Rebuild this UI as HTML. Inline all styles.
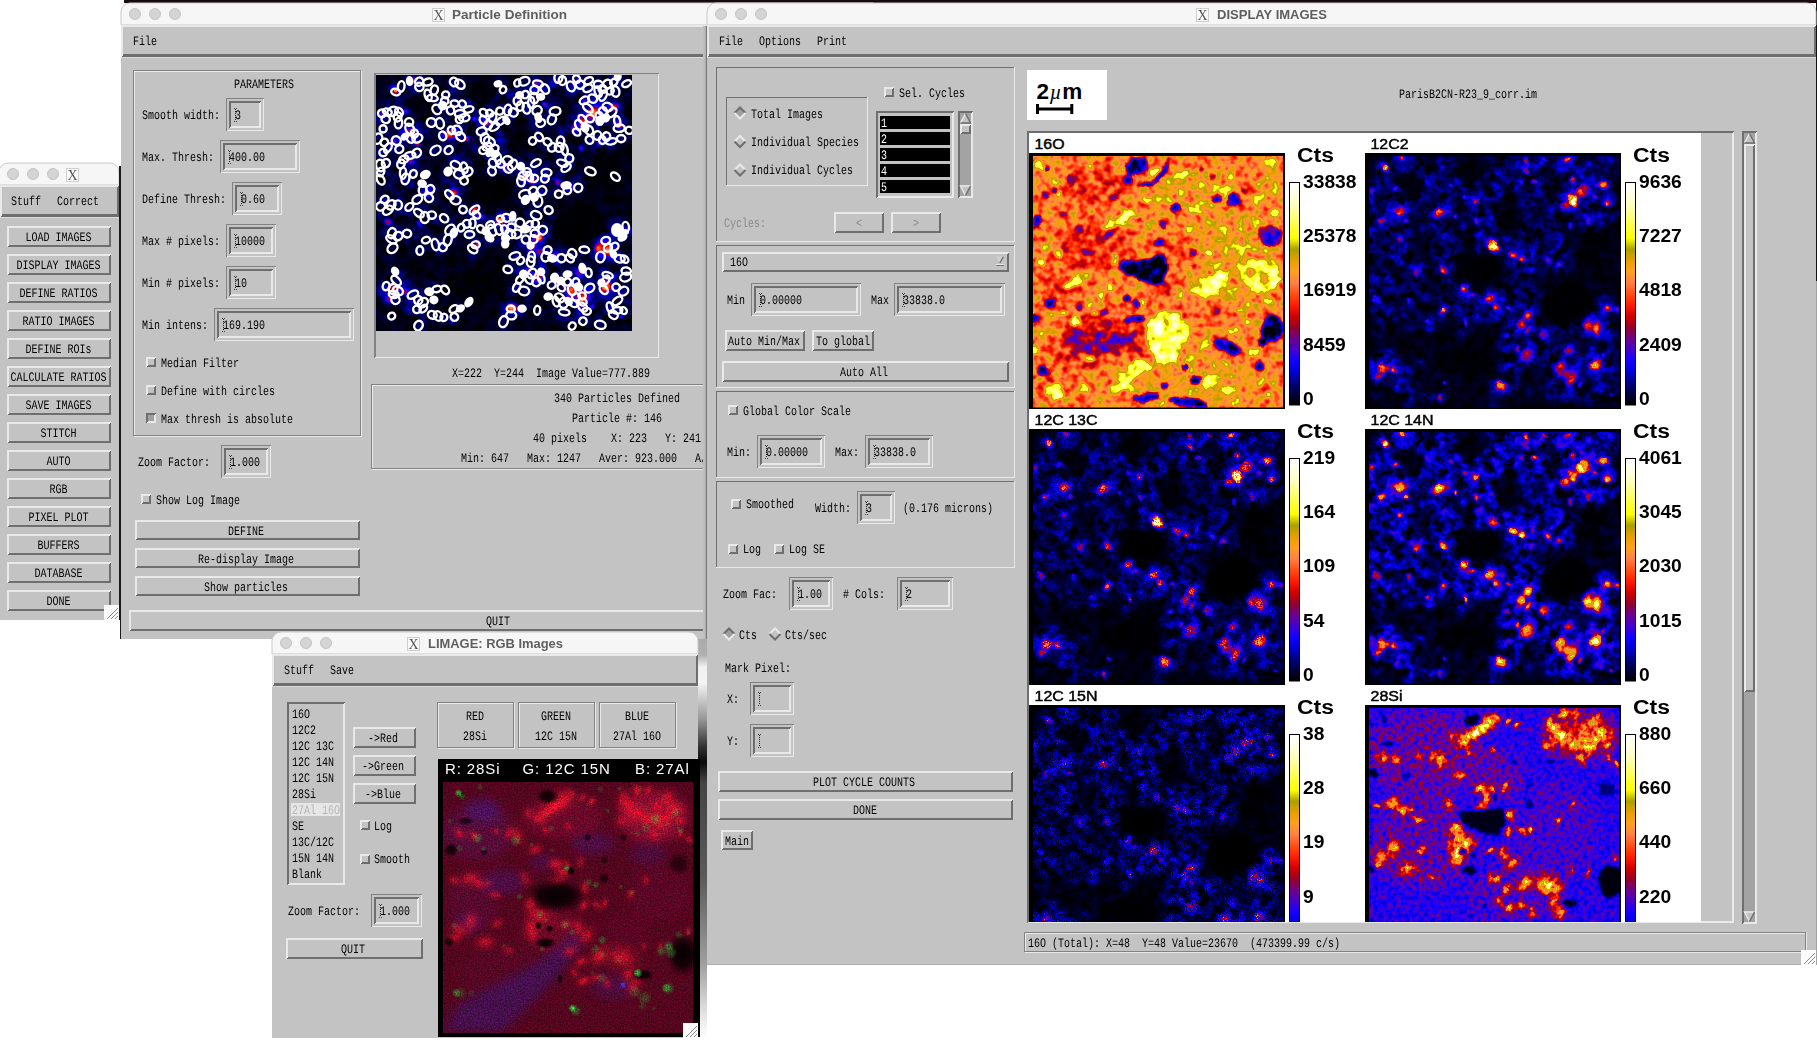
<!DOCTYPE html><html><head><meta charset="utf-8"><title>LIMAGE</title><style>html,body{margin:0;padding:0;background:#fff;overflow:hidden}
body{width:1817px;height:1048px;position:relative}
text{white-space:pre}
.m{font-family:"Liberation Mono",monospace;font-size:13px;fill:#000;text-rendering:geometricPrecision;shape-rendering:geometricPrecision}
.tt{font-family:"Liberation Sans",sans-serif;font-weight:bold;font-size:13px;fill:#5e5e5e}
.lb{font-family:"Liberation Sans",sans-serif;font-size:14.5px;fill:#000;stroke:#000;stroke-width:.45px}
.cts{font-family:"Liberation Sans",sans-serif;font-weight:bold;font-size:20px;fill:#000}
.num{font-family:"Liberation Sans",sans-serif;font-weight:bold;font-size:17.5px;fill:#000}
.hd{font-family:"Liberation Sans",sans-serif;font-size:15px;fill:#fff;letter-spacing:.9px}
</style></head><body><svg width="1817" height="1048" viewBox="0 0 1817 1048" shape-rendering="crispEdges" style="position:absolute;left:0;top:0"><defs><radialGradient id="gw"><stop offset="0" stop-color="#fff" stop-opacity="1"/><stop offset=".35" stop-color="#fff" stop-opacity=".85"/><stop offset=".6" stop-color="#fff" stop-opacity=".42"/><stop offset=".8" stop-color="#fff" stop-opacity=".14"/><stop offset="1" stop-color="#fff" stop-opacity="0"/></radialGradient><radialGradient id="gk"><stop offset="0" stop-color="#000" stop-opacity="1"/><stop offset=".5" stop-color="#000" stop-opacity=".8"/><stop offset=".8" stop-color="#000" stop-opacity=".25"/><stop offset="1" stop-color="#000" stop-opacity="0"/></radialGradient><radialGradient id="gr"><stop offset="0" stop-color="#e8142c" stop-opacity="1"/><stop offset=".5" stop-color="#e8142c" stop-opacity=".7"/><stop offset="1" stop-color="#e8142c" stop-opacity="0"/></radialGradient><radialGradient id="gg"><stop offset="0" stop-color="#30e040" stop-opacity="1"/><stop offset=".5" stop-color="#30e040" stop-opacity=".7"/><stop offset="1" stop-color="#30e040" stop-opacity="0"/></radialGradient><radialGradient id="gb"><stop offset="0" stop-color="#4030ff" stop-opacity="1"/><stop offset=".5" stop-color="#4030ff" stop-opacity=".7"/><stop offset="1" stop-color="#4030ff" stop-opacity="0"/></radialGradient><filter id="bl1" x="-10%" y="-10%" width="120%" height="120%" color-interpolation-filters="sRGB"><feGaussianBlur stdDeviation="1"/></filter><filter id="bl1_5" x="-10%" y="-10%" width="120%" height="120%" color-interpolation-filters="sRGB"><feGaussianBlur stdDeviation="1.5"/></filter><filter id="bl2" x="-10%" y="-10%" width="120%" height="120%" color-interpolation-filters="sRGB"><feGaussianBlur stdDeviation="2"/></filter><filter id="bl3" x="-10%" y="-10%" width="120%" height="120%" color-interpolation-filters="sRGB"><feGaussianBlur stdDeviation="3"/></filter><filter id="bl5" x="-10%" y="-10%" width="120%" height="120%" color-interpolation-filters="sRGB"><feGaussianBlur stdDeviation="5"/></filter><filter id="cm" filterUnits="userSpaceOnUse" x="-12" y="-12" width="280" height="280" color-interpolation-filters="sRGB"><feComponentTransfer><feFuncR type="table" tableValues="0.000 0.000 0.000 0.000 0.078 0.275 0.431 0.588 0.824 1.000 1.000 1.000 1.000 0.902 0.667 1.000 1.000 1.000 1.000 1.000 1.000"/><feFuncG type="table" tableValues="0.000 0.000 0.000 0.000 0.000 0.000 0.000 0.000 0.000 0.118 0.314 0.510 0.627 0.627 0.627 1.000 1.000 1.000 1.000 1.000 1.000"/><feFuncB type="table" tableValues="0.000 0.235 0.510 0.843 1.000 0.804 0.549 0.157 0.000 0.000 0.078 0.275 0.118 0.000 0.000 0.000 0.235 0.510 0.745 0.902 1.000"/></feComponentTransfer></filter><filter id="web" filterUnits="userSpaceOnUse" x="-12" y="-12" width="280" height="280" color-interpolation-filters="sRGB"><feGaussianBlur in="SourceGraphic" stdDeviation="2.5" result="b"/><feTurbulence type="turbulence" baseFrequency="0.06" numOctaves="3" seed="11"/><feColorMatrix type="matrix" values="-1 0 0 0 1 -1 0 0 0 1 -1 0 0 0 1 0 0 0 0 1" result="n"/><feComposite in="b" in2="n" operator="arithmetic" k1="4.0" k2="-2.4" k3="0" k4="0" result="c"/><feColorMatrix in="c" type="matrix" values="1 0 0 0 0 0 1 0 0 0 0 0 1 0 0 0 0 0 0 1"/></filter><filter id="web2" filterUnits="userSpaceOnUse" x="-12" y="-12" width="280" height="280" color-interpolation-filters="sRGB"><feGaussianBlur in="SourceGraphic" stdDeviation="2.5" result="b"/><feTurbulence type="fractalNoise" baseFrequency="0.1" numOctaves="3" seed="21"/><feColorMatrix type="matrix" values="1 0 0 0 0 1 0 0 0 0 1 0 0 0 0 0 0 0 0 1" result="n"/><feComposite in="b" in2="n" operator="arithmetic" k1="4.2" k2="-1.15" k3="0" k4="0" result="c"/><feColorMatrix in="c" type="matrix" values="1 0 0 0 0 0 1 0 0 0 0 0 1 0 0 0 0 0 0 1"/></filter><filter id="webf" filterUnits="userSpaceOnUse" x="-12" y="-12" width="280" height="280" color-interpolation-filters="sRGB"><feGaussianBlur in="SourceGraphic" stdDeviation="2.5" result="b"/><feTurbulence type="fractalNoise" baseFrequency="0.4" numOctaves="2" seed="5"/><feColorMatrix type="matrix" values="1 0 0 0 0 1 0 0 0 0 1 0 0 0 0 0 0 0 0 1" result="n"/><feComposite in="b" in2="n" operator="arithmetic" k1="3.6" k2="-0.75" k3="0" k4="0" result="c"/><feColorMatrix in="c" type="matrix" values="1 0 0 0 0 0 1 0 0 0 0 0 1 0 0 0 0 0 0 1"/></filter><filter id="cmn" filterUnits="userSpaceOnUse" x="-12" y="-12" width="280" height="280" color-interpolation-filters="sRGB"><feTurbulence type="fractalNoise" baseFrequency="0.08" numOctaves="2" seed="12" result="dn"/><feDisplacementMap in="SourceGraphic" in2="dn" scale="5" xChannelSelector="R" yChannelSelector="G" result="ds"/><feTurbulence type="fractalNoise" baseFrequency="0.2" numOctaves="2" seed="4"/><feColorMatrix type="matrix" values="1 0 0 0 0 1 0 0 0 0 1 0 0 0 0 0 0 0 0 1" result="n"/><feComposite in="ds" in2="n" operator="arithmetic" k1="1.0" k2="0.5" k3="0" k4="0" result="c"/><feColorMatrix in="c" type="matrix" values="1 0 0 0 0 0 1 0 0 0 0 0 1 0 0 0 0 0 0 1"/><feComponentTransfer><feFuncR type="table" tableValues="0.000 0.000 0.000 0.000 0.078 0.275 0.431 0.588 0.824 1.000 1.000 1.000 1.000 0.902 0.667 1.000 1.000 1.000 1.000 1.000 1.000"/><feFuncG type="table" tableValues="0.000 0.000 0.000 0.000 0.000 0.000 0.000 0.000 0.000 0.118 0.314 0.510 0.627 0.627 0.627 1.000 1.000 1.000 1.000 1.000 1.000"/><feFuncB type="table" tableValues="0.000 0.235 0.510 0.843 1.000 0.804 0.549 0.157 0.000 0.000 0.078 0.275 0.118 0.000 0.000 0.000 0.235 0.510 0.745 0.902 1.000"/></feComponentTransfer></filter><filter id="cmf" filterUnits="userSpaceOnUse" x="-12" y="-12" width="280" height="280" color-interpolation-filters="sRGB"><feTurbulence type="fractalNoise" baseFrequency="0.08" numOctaves="2" seed="12" result="dn"/><feDisplacementMap in="SourceGraphic" in2="dn" scale="5" xChannelSelector="R" yChannelSelector="G" result="ds"/><feTurbulence type="fractalNoise" baseFrequency="0.6" numOctaves="2" seed="6"/><feColorMatrix type="matrix" values="1 0 0 0 0 1 0 0 0 0 1 0 0 0 0 0 0 0 0 1" result="n"/><feComposite in="ds" in2="n" operator="arithmetic" k1="1.6" k2="0.2" k3="0" k4="0" result="c"/><feColorMatrix in="c" type="matrix" values="1 0 0 0 0 0 1 0 0 0 0 0 1 0 0 0 0 0 0 1"/><feComponentTransfer><feFuncR type="table" tableValues="0.000 0.000 0.000 0.000 0.078 0.275 0.431 0.588 0.824 1.000 1.000 1.000 1.000 0.902 0.667 1.000 1.000 1.000 1.000 1.000 1.000"/><feFuncG type="table" tableValues="0.000 0.000 0.000 0.000 0.000 0.000 0.000 0.000 0.000 0.118 0.314 0.510 0.627 0.627 0.627 1.000 1.000 1.000 1.000 1.000 1.000"/><feFuncB type="table" tableValues="0.000 0.235 0.510 0.843 1.000 0.804 0.549 0.157 0.000 0.000 0.078 0.275 0.118 0.000 0.000 0.000 0.235 0.510 0.745 0.902 1.000"/></feComponentTransfer></filter><filter id="cmsp" filterUnits="userSpaceOnUse" x="-12" y="-12" width="280" height="280" color-interpolation-filters="sRGB"><feTurbulence type="fractalNoise" baseFrequency="0.85" numOctaves="2" seed="3"/><feColorMatrix type="matrix" values="1 0 0 0 0 1 0 0 0 0 1 0 0 0 0 0 0 0 0 1" result="n"/><feComposite in="SourceGraphic" in2="n" operator="arithmetic" k1="4.0" k2="-0.9" k3="0" k4="0" result="c"/><feColorMatrix in="c" type="matrix" values="1 0 0 0 0 0 1 0 0 0 0 0 1 0 0 0 0 0 0 1"/><feComponentTransfer><feFuncR type="table" tableValues="0.000 0.000 0.000 0.000 0.078 0.275 0.431 0.588 0.824 1.000 1.000 1.000 1.000 0.902 0.667 1.000 1.000 1.000 1.000 1.000 1.000"/><feFuncG type="table" tableValues="0.000 0.000 0.000 0.000 0.000 0.000 0.000 0.000 0.000 0.118 0.314 0.510 0.627 0.627 0.627 1.000 1.000 1.000 1.000 1.000 1.000"/><feFuncB type="table" tableValues="0.000 0.235 0.510 0.843 1.000 0.804 0.549 0.157 0.000 0.000 0.078 0.275 0.118 0.000 0.000 0.000 0.235 0.510 0.745 0.902 1.000"/></feComponentTransfer></filter><filter id="f16o" filterUnits="userSpaceOnUse" x="-12" y="-12" width="280" height="280" color-interpolation-filters="sRGB"><feTurbulence type="fractalNoise" baseFrequency="0.05" numOctaves="2" seed="5" result="dn"/><feDisplacementMap in="SourceGraphic" in2="dn" scale="8" xChannelSelector="R" yChannelSelector="G" result="ds"/><feTurbulence type="fractalNoise" baseFrequency="0.12" numOctaves="2" seed="7"/><feColorMatrix type="matrix" values="1 0 0 0 0 1 0 0 0 0 1 0 0 0 0 0 0 0 0 1" result="n"/><feComposite in="ds" in2="n" operator="arithmetic" k1="0" k2="1" k3="0.5" k4="-0.25" result="c"/><feColorMatrix in="c" type="matrix" values="1 0 0 0 0 0 1 0 0 0 0 0 1 0 0 0 0 0 0 1"/><feComponentTransfer><feFuncR type="table" tableValues="0.000 0.000 0.000 0.000 0.078 0.275 0.431 0.588 0.824 1.000 1.000 1.000 1.000 0.902 0.667 1.000 1.000 1.000 1.000 1.000 1.000"/><feFuncG type="table" tableValues="0.000 0.000 0.000 0.000 0.000 0.000 0.000 0.000 0.000 0.118 0.314 0.510 0.627 0.627 0.627 1.000 1.000 1.000 1.000 1.000 1.000"/><feFuncB type="table" tableValues="0.000 0.235 0.510 0.843 1.000 0.804 0.549 0.157 0.000 0.000 0.078 0.275 0.118 0.000 0.000 0.000 0.235 0.510 0.745 0.902 1.000"/></feComponentTransfer></filter><filter id="fsi" filterUnits="userSpaceOnUse" x="-12" y="-12" width="280" height="280" color-interpolation-filters="sRGB"><feTurbulence type="fractalNoise" baseFrequency="0.07" numOctaves="2" seed="8" result="dn"/><feDisplacementMap in="SourceGraphic" in2="dn" scale="6" xChannelSelector="R" yChannelSelector="G" result="ds"/><feTurbulence type="fractalNoise" baseFrequency="0.22" numOctaves="2" seed="9"/><feColorMatrix type="matrix" values="1 0 0 0 0 1 0 0 0 0 1 0 0 0 0 0 0 0 0 1" result="n"/><feComposite in="ds" in2="n" operator="arithmetic" k1="1.3" k2="0.36" k3="0" k4="0" result="c"/><feColorMatrix in="c" type="matrix" values="1 0 0 0 0 0 1 0 0 0 0 0 1 0 0 0 0 0 0 1"/><feComponentTransfer><feFuncR type="table" tableValues="0.000 0.000 0.000 0.000 0.078 0.275 0.431 0.588 0.824 1.000 1.000 1.000 1.000 0.902 0.667 1.000 1.000 1.000 1.000 1.000 1.000"/><feFuncG type="table" tableValues="0.000 0.000 0.000 0.000 0.000 0.000 0.000 0.000 0.000 0.118 0.314 0.510 0.627 0.627 0.627 1.000 1.000 1.000 1.000 1.000 1.000"/><feFuncB type="table" tableValues="0.000 0.235 0.510 0.843 1.000 0.804 0.549 0.157 0.000 0.000 0.078 0.275 0.118 0.000 0.000 0.000 0.235 0.510 0.745 0.902 1.000"/></feComponentTransfer></filter><filter id="rgbn" filterUnits="userSpaceOnUse" x="-12" y="-12" width="275" height="275" color-interpolation-filters="sRGB"><feTurbulence type="fractalNoise" baseFrequency="0.7" numOctaves="2" seed="8"/><feColorMatrix type="matrix" values="1 0 0 0 0 1 0 0 0 0 1 0 0 0 0 0 0 0 0 1" result="n"/><feComposite in="SourceGraphic" in2="n" operator="arithmetic" k1="1.3" k2="0.35" k3="0" k4="0" result="c"/><feColorMatrix in="c" type="matrix" values="1 0 0 0 0 0 1 0 0 0 0 0 1 0 0 0 0 0 0 1"/></filter></defs><defs><filter id="noop" filterUnits="userSpaceOnUse" x="0" y="0" width="1817" height="1048"><feOffset dx="0" dy="0"/></filter></defs><defs><linearGradient id="cbar" x1="0" y1="1" x2="0" y2="0"><stop offset="0.00" stop-color="rgb(0, 0, 0)"/><stop offset="0.05" stop-color="rgb(0, 0, 60)"/><stop offset="0.10" stop-color="rgb(0, 0, 130)"/><stop offset="0.15" stop-color="rgb(0, 0, 215)"/><stop offset="0.20" stop-color="rgb(20, 0, 255)"/><stop offset="0.25" stop-color="rgb(70, 0, 205)"/><stop offset="0.30" stop-color="rgb(110, 0, 140)"/><stop offset="0.35" stop-color="rgb(150, 0, 40)"/><stop offset="0.40" stop-color="rgb(210, 0, 0)"/><stop offset="0.45" stop-color="rgb(255, 30, 0)"/><stop offset="0.50" stop-color="rgb(255, 80, 20)"/><stop offset="0.55" stop-color="rgb(255, 130, 70)"/><stop offset="0.60" stop-color="rgb(255, 160, 30)"/><stop offset="0.65" stop-color="rgb(230, 160, 0)"/><stop offset="0.70" stop-color="rgb(170, 160, 0)"/><stop offset="0.75" stop-color="rgb(255, 255, 0)"/><stop offset="0.80" stop-color="rgb(255, 255, 60)"/><stop offset="0.85" stop-color="rgb(255, 255, 130)"/><stop offset="0.90" stop-color="rgb(255, 255, 190)"/><stop offset="0.95" stop-color="rgb(255, 255, 230)"/><stop offset="1.00" stop-color="rgb(255, 255, 255)"/></linearGradient></defs><rect x="0" y="0" width="1817" height="1048" fill="#fff"/><rect x="124" y="0" width="1700" height="3" fill="#1a0a10"/><g shape-rendering="geometricPrecision"><path d="M121 25V12a9 9 0 0 1 9 -9H872a9 9 0 0 1 9 9V25Z" fill="#f6f6f6" stroke="#c9c9c9"/></g><rect x="121" y="25" width="760" height="614" fill="#c3c3c3"/><rect x="121" y="24" width="760" height="1" fill="#dedede"/><g shape-rendering="geometricPrecision"><circle cx="135" cy="14" r="5.5" fill="#d4d4d4" stroke="#c4c4c4"/><circle cx="155" cy="14" r="5.5" fill="#d4d4d4" stroke="#c4c4c4"/><circle cx="175" cy="14" r="5.5" fill="#d4d4d4" stroke="#c4c4c4"/></g><g shape-rendering="geometricPrecision" filter="url(#noop)"><rect x="432.5" y="8.5" width="12" height="13" fill="#fafafa" stroke="#cfcfcf"/><text x="438.5" y="20" text-anchor="middle" font-family="Liberation Serif,serif" font-size="14" fill="#555">X</text></g><g filter="url(#noop)"><text class="tt" x="452" y="18.5" textLength="115" lengthAdjust="spacingAndGlyphs">Particle Definition</text></g><rect x="120" y="166" width="1" height="473" fill="#1a1a1a"/><rect x="121" y="25" width="760" height="32" fill="#c3c3c3"/><path d="M121 25H881L879 27H123V55L121 57Z" fill="#e9e9e9"/><path d="M881 57H121L123 55H879V27L881 25Z" fill="#6e6e6e"/><rect x="123" y="54" width="756" height="1" fill="#6e6e6e"/><rect x="121" y="57" width="760" height="1" fill="#dadada"/><rect x="134.5" y="71.5" width="227" height="365" fill="none" stroke="#e9e9e9"/><rect x="133.5" y="70.5" width="227" height="365" fill="none" stroke="#828282"/><rect x="226" y="98" width="38" height="33" fill="#c3c3c3"/><path d="M226 98H264L263 99H227V130L226 131Z" fill="#828282"/><path d="M264 131H226L227 130H263V99L264 98Z" fill="#e9e9e9"/><path d="M229 101H261L259 103H231V126L229 128Z" fill="#6e6e6e"/><path d="M261 128H229L231 126H259V103L261 101Z" fill="#e9e9e9"/><path d="M235.5 109v12" stroke="#222" stroke-dasharray="1 1" fill="none"/><path d="M234 108.5h3M234 121.5h3" stroke="#444" stroke-dasharray="1 1" fill="none"/><rect x="220" y="140" width="80" height="33" fill="#c3c3c3"/><path d="M220 140H300L299 141H221V172L220 173Z" fill="#828282"/><path d="M300 173H220L221 172H299V141L300 140Z" fill="#e9e9e9"/><path d="M223 143H297L295 145H225V168L223 170Z" fill="#6e6e6e"/><path d="M297 170H223L225 168H295V145L297 143Z" fill="#e9e9e9"/><path d="M229.5 151v12" stroke="#222" stroke-dasharray="1 1" fill="none"/><path d="M228 150.5h3M228 163.5h3" stroke="#444" stroke-dasharray="1 1" fill="none"/><rect x="232" y="182" width="50" height="33" fill="#c3c3c3"/><path d="M232 182H282L281 183H233V214L232 215Z" fill="#828282"/><path d="M282 215H232L233 214H281V183L282 182Z" fill="#e9e9e9"/><path d="M235 185H279L277 187H237V210L235 212Z" fill="#6e6e6e"/><path d="M279 212H235L237 210H277V187L279 185Z" fill="#e9e9e9"/><path d="M241.5 193v12" stroke="#222" stroke-dasharray="1 1" fill="none"/><path d="M240 192.5h3M240 205.5h3" stroke="#444" stroke-dasharray="1 1" fill="none"/><rect x="226" y="224" width="50" height="33" fill="#c3c3c3"/><path d="M226 224H276L275 225H227V256L226 257Z" fill="#828282"/><path d="M276 257H226L227 256H275V225L276 224Z" fill="#e9e9e9"/><path d="M229 227H273L271 229H231V252L229 254Z" fill="#6e6e6e"/><path d="M273 254H229L231 252H271V229L273 227Z" fill="#e9e9e9"/><path d="M235.5 235v12" stroke="#222" stroke-dasharray="1 1" fill="none"/><path d="M234 234.5h3M234 247.5h3" stroke="#444" stroke-dasharray="1 1" fill="none"/><rect x="226" y="266" width="50" height="33" fill="#c3c3c3"/><path d="M226 266H276L275 267H227V298L226 299Z" fill="#828282"/><path d="M276 299H226L227 298H275V267L276 266Z" fill="#e9e9e9"/><path d="M229 269H273L271 271H231V294L229 296Z" fill="#6e6e6e"/><path d="M273 296H229L231 294H271V271L273 269Z" fill="#e9e9e9"/><path d="M235.5 277v12" stroke="#222" stroke-dasharray="1 1" fill="none"/><path d="M234 276.5h3M234 289.5h3" stroke="#444" stroke-dasharray="1 1" fill="none"/><rect x="214" y="308" width="140" height="33" fill="#c3c3c3"/><path d="M214 308H354L353 309H215V340L214 341Z" fill="#828282"/><path d="M354 341H214L215 340H353V309L354 308Z" fill="#e9e9e9"/><path d="M217 311H351L349 313H219V336L217 338Z" fill="#6e6e6e"/><path d="M351 338H217L219 336H349V313L351 311Z" fill="#e9e9e9"/><path d="M223.5 319v12" stroke="#222" stroke-dasharray="1 1" fill="none"/><path d="M222 318.5h3M222 331.5h3" stroke="#444" stroke-dasharray="1 1" fill="none"/><rect x="146" y="357" width="10" height="10" fill="#c3c3c3"/><path d="M146 357H156L154 359H148V365L146 367Z" fill="#e9e9e9"/><path d="M156 367H146L148 365H154V359L156 357Z" fill="#6e6e6e"/><rect x="146" y="385" width="10" height="10" fill="#c3c3c3"/><path d="M146 385H156L154 387H148V393L146 395Z" fill="#e9e9e9"/><path d="M156 395H146L148 393H154V387L156 385Z" fill="#6e6e6e"/><rect x="146" y="413" width="10" height="10" fill="#a0a0a0"/><path d="M146 413H156L154 415H148V421L146 423Z" fill="#6e6e6e"/><path d="M156 423H146L148 421H154V415L156 413Z" fill="#e9e9e9"/><rect x="221" y="445" width="50" height="33" fill="#c3c3c3"/><path d="M221 445H271L270 446H222V477L221 478Z" fill="#828282"/><path d="M271 478H221L222 477H270V446L271 445Z" fill="#e9e9e9"/><path d="M224 448H268L266 450H226V473L224 475Z" fill="#6e6e6e"/><path d="M268 475H224L226 473H266V450L268 448Z" fill="#e9e9e9"/><path d="M230.5 456v12" stroke="#222" stroke-dasharray="1 1" fill="none"/><path d="M229 455.5h3M229 468.5h3" stroke="#444" stroke-dasharray="1 1" fill="none"/><rect x="141" y="494" width="10" height="10" fill="#c3c3c3"/><path d="M141 494H151L149 496H143V502L141 504Z" fill="#e9e9e9"/><path d="M151 504H141L143 502H149V496L151 494Z" fill="#6e6e6e"/><rect x="135" y="520" width="225" height="20" fill="#c3c3c3"/><path d="M135 520H360L358 522H137V538L135 540Z" fill="#e9e9e9"/><path d="M360 540H135L137 538H358V522L360 520Z" fill="#6e6e6e"/><rect x="135" y="548" width="225" height="20" fill="#c3c3c3"/><path d="M135 548H360L358 550H137V566L135 568Z" fill="#e9e9e9"/><path d="M360 568H135L137 566H358V550L360 548Z" fill="#6e6e6e"/><rect x="135" y="576" width="225" height="20" fill="#c3c3c3"/><path d="M135 576H360L358 578H137V594L135 596Z" fill="#e9e9e9"/><path d="M360 596H135L137 594H358V578L360 576Z" fill="#6e6e6e"/><rect x="374" y="73" width="285" height="285" fill="#c3c3c3"/><path d="M374 73H659L658 74H375V357L374 358Z" fill="#828282"/><path d="M659 358H374L375 357H658V74L659 73Z" fill="#e9e9e9"/><rect x="375" y="74" width="1" height="283" fill="#828282"/><g shape-rendering="geometricPrecision"><svg x="376" y="75" width="256" height="256" viewBox="0 0 256 256"><g filter="url(#cm)"><rect x="-12" y="-12" width="280" height="280" fill="#000"/><g filter="url(#web2)"><rect x="-12" y="-12" width="280" height="280" fill="#050505"/><ellipse cx="19.5" cy="14.7" rx="11.9" ry="11.9" fill="#111111" opacity="0.73"/><ellipse cx="41.5" cy="9.8" rx="18.5" ry="11.9" fill="#111111" opacity="0.91"/><ellipse cx="55.0" cy="19.5" rx="8.6" ry="11.9" fill="#111111" opacity="0.82"/><ellipse cx="80.6" cy="8.5" rx="11.9" ry="6.9" fill="#111111" opacity="0.73"/><ellipse cx="70.8" cy="29.3" rx="18.5" ry="15.2" fill="#111111" opacity="1.00"/><ellipse cx="83.0" cy="36.6" rx="15.2" ry="18.5" fill="#111111" opacity="1.00"/><ellipse cx="122.1" cy="15.9" rx="10.2" ry="11.9" fill="#111111" opacity="0.73"/><ellipse cx="146.6" cy="7.3" rx="11.9" ry="8.6" fill="#111111" opacity="0.73"/><ellipse cx="141.7" cy="26.9" rx="21.8" ry="18.5" fill="#111111" opacity="1.00"/><ellipse cx="161.2" cy="14.7" rx="15.2" ry="15.2" fill="#111111" opacity="1.00"/><ellipse cx="168.5" cy="39.1" rx="18.5" ry="15.2" fill="#111111" opacity="1.00"/><ellipse cx="190.5" cy="7.3" rx="21.8" ry="10.2" fill="#111111" opacity="1.00"/><ellipse cx="214.9" cy="14.7" rx="28.4" ry="18.5" fill="#111111" opacity="1.00"/><ellipse cx="241.8" cy="9.8" rx="15.2" ry="13.5" fill="#111111" opacity="0.91"/><ellipse cx="219.8" cy="36.6" rx="25.1" ry="15.2" fill="#111111" opacity="1.00"/><ellipse cx="207.6" cy="51.3" rx="18.5" ry="11.9" fill="#111111" opacity="1.00"/><ellipse cx="244.3" cy="48.9" rx="8.6" ry="10.2" fill="#111111" opacity="0.73"/><ellipse cx="224.7" cy="63.5" rx="18.5" ry="15.2" fill="#111111" opacity="1.00"/><ellipse cx="240.6" cy="64.7" rx="8.6" ry="8.6" fill="#111111" opacity="0.64"/><ellipse cx="251.6" cy="57.4" rx="6.0" ry="6.0" fill="#111111" opacity="0.64"/><ellipse cx="12.2" cy="39.1" rx="15.2" ry="15.2" fill="#111111" opacity="0.91"/><ellipse cx="24.4" cy="44.0" rx="15.2" ry="11.9" fill="#111111" opacity="0.91"/><ellipse cx="36.6" cy="58.6" rx="15.2" ry="15.2" fill="#111111" opacity="1.00"/><ellipse cx="58.6" cy="52.5" rx="11.9" ry="10.2" fill="#111111" opacity="0.73"/><ellipse cx="75.7" cy="59.8" rx="15.2" ry="13.5" fill="#111111" opacity="0.91"/><ellipse cx="66.0" cy="76.9" rx="13.5" ry="8.6" fill="#111111" opacity="0.73"/><ellipse cx="109.9" cy="48.9" rx="15.2" ry="18.5" fill="#111111" opacity="1.00"/><ellipse cx="127.0" cy="39.1" rx="15.2" ry="11.9" fill="#111111" opacity="0.91"/><ellipse cx="114.8" cy="70.8" rx="18.5" ry="15.2" fill="#111111" opacity="1.00"/><ellipse cx="119.7" cy="85.5" rx="11.9" ry="10.2" fill="#111111" opacity="0.82"/><ellipse cx="7.3" cy="68.4" rx="10.2" ry="21.8" fill="#111111" opacity="1.00"/><ellipse cx="19.5" cy="70.8" rx="10.2" ry="11.9" fill="#111111" opacity="0.73"/><ellipse cx="7.3" cy="97.7" rx="8.6" ry="21.8" fill="#111111" opacity="0.91"/><ellipse cx="31.8" cy="92.8" rx="15.2" ry="21.8" fill="#111111" opacity="1.00"/><ellipse cx="45.2" cy="102.6" rx="10.2" ry="10.2" fill="#111111" opacity="0.73"/><ellipse cx="42.7" cy="78.2" rx="6.9" ry="6.9" fill="#111111" opacity="0.64"/><ellipse cx="81.8" cy="96.5" rx="15.2" ry="18.5" fill="#111111" opacity="1.00"/><ellipse cx="55.0" cy="117.2" rx="15.2" ry="10.2" fill="#111111" opacity="0.82"/><ellipse cx="75.7" cy="120.9" rx="10.2" ry="11.9" fill="#111111" opacity="0.73"/><ellipse cx="41.5" cy="122.1" rx="7.9" ry="7.9" fill="#111111" opacity="0.64"/><ellipse cx="161.2" cy="62.3" rx="10.2" ry="10.2" fill="#111111" opacity="0.73"/><ellipse cx="180.8" cy="66.0" rx="15.2" ry="15.2" fill="#111111" opacity="0.91"/><ellipse cx="188.1" cy="85.5" rx="10.2" ry="18.5" fill="#111111" opacity="0.91"/><ellipse cx="131.9" cy="90.4" rx="15.2" ry="10.2" fill="#111111" opacity="0.82"/><ellipse cx="156.3" cy="97.7" rx="25.1" ry="18.5" fill="#111111" opacity="1.00"/><ellipse cx="158.8" cy="119.7" rx="18.5" ry="13.5" fill="#111111" opacity="1.00"/><ellipse cx="210.1" cy="96.5" rx="8.6" ry="8.6" fill="#111111" opacity="0.64"/><ellipse cx="195.4" cy="109.9" rx="15.2" ry="10.2" fill="#111111" opacity="0.82"/><ellipse cx="183.2" cy="117.2" rx="7.9" ry="7.9" fill="#111111" opacity="0.64"/><ellipse cx="241.8" cy="102.6" rx="6.9" ry="6.9" fill="#111111" opacity="0.64"/><ellipse cx="117.2" cy="98.9" rx="6.9" ry="6.9" fill="#111111" opacity="0.64"/><ellipse cx="14.7" cy="131.9" rx="16.8" ry="15.2" fill="#111111" opacity="1.00"/><ellipse cx="33.0" cy="135.6" rx="7.9" ry="7.9" fill="#111111" opacity="0.64"/><ellipse cx="47.6" cy="139.2" rx="13.5" ry="15.2" fill="#111111" opacity="0.82"/><ellipse cx="66.0" cy="145.3" rx="7.9" ry="7.9" fill="#111111" opacity="0.64"/><ellipse cx="24.4" cy="160.0" rx="21.8" ry="10.2" fill="#111111" opacity="0.91"/><ellipse cx="48.9" cy="163.7" rx="7.9" ry="7.9" fill="#111111" opacity="0.64"/><ellipse cx="13.4" cy="174.6" rx="10.2" ry="6.9" fill="#111111" opacity="0.64"/><ellipse cx="44.0" cy="175.9" rx="6.0" ry="6.0" fill="#111111" opacity="0.64"/><ellipse cx="94.0" cy="136.8" rx="15.2" ry="11.9" fill="#111111" opacity="0.82"/><ellipse cx="90.4" cy="151.4" rx="13.5" ry="15.2" fill="#111111" opacity="0.91"/><ellipse cx="75.7" cy="158.8" rx="10.2" ry="13.5" fill="#111111" opacity="0.82"/><ellipse cx="64.7" cy="171.0" rx="10.2" ry="10.2" fill="#111111" opacity="0.73"/><ellipse cx="109.9" cy="156.3" rx="15.2" ry="18.5" fill="#111111" opacity="1.00"/><ellipse cx="97.7" cy="174.6" rx="8.6" ry="10.2" fill="#111111" opacity="0.73"/><ellipse cx="127.0" cy="149.0" rx="15.2" ry="15.2" fill="#111111" opacity="1.00"/><ellipse cx="141.7" cy="151.4" rx="15.2" ry="18.5" fill="#111111" opacity="1.00"/><ellipse cx="131.9" cy="166.1" rx="8.6" ry="8.6" fill="#111111" opacity="0.73"/><ellipse cx="158.8" cy="161.2" rx="15.2" ry="21.8" fill="#111111" opacity="1.00"/><ellipse cx="161.2" cy="140.4" rx="6.9" ry="6.9" fill="#111111" opacity="0.64"/><ellipse cx="174.6" cy="138.0" rx="7.9" ry="7.9" fill="#111111" opacity="0.64"/><ellipse cx="175.9" cy="180.8" rx="18.5" ry="10.2" fill="#111111" opacity="0.91"/><ellipse cx="195.4" cy="180.8" rx="10.2" ry="6.9" fill="#111111" opacity="0.73"/><ellipse cx="206.4" cy="174.6" rx="6.9" ry="6.9" fill="#111111" opacity="0.64"/><ellipse cx="141.7" cy="183.2" rx="6.9" ry="11.9" fill="#111111" opacity="0.73"/><ellipse cx="156.3" cy="183.2" rx="8.6" ry="8.6" fill="#111111" opacity="0.73"/><ellipse cx="133.1" cy="195.4" rx="6.9" ry="6.9" fill="#111111" opacity="0.64"/><ellipse cx="241.8" cy="156.3" rx="15.2" ry="13.5" fill="#111111" opacity="0.82"/><ellipse cx="228.4" cy="174.6" rx="16.8" ry="15.2" fill="#111111" opacity="1.00"/><ellipse cx="246.7" cy="180.8" rx="10.2" ry="8.6" fill="#111111" opacity="0.73"/><ellipse cx="249.1" cy="195.4" rx="6.9" ry="11.9" fill="#111111" opacity="0.73"/><ellipse cx="158.8" cy="200.3" rx="18.5" ry="13.5" fill="#111111" opacity="1.00"/><ellipse cx="185.6" cy="202.7" rx="15.2" ry="13.5" fill="#111111" opacity="0.91"/><ellipse cx="207.6" cy="197.9" rx="11.9" ry="10.2" fill="#111111" opacity="0.73"/><ellipse cx="146.6" cy="210.1" rx="11.9" ry="18.5" fill="#111111" opacity="0.91"/><ellipse cx="180.8" cy="217.4" rx="15.2" ry="15.2" fill="#111111" opacity="1.00"/><ellipse cx="202.7" cy="214.9" rx="18.5" ry="15.2" fill="#111111" opacity="1.00"/><ellipse cx="197.9" cy="232.0" rx="21.8" ry="15.2" fill="#111111" opacity="1.00"/><ellipse cx="232.0" cy="210.1" rx="11.9" ry="18.5" fill="#111111" opacity="0.91"/><ellipse cx="244.3" cy="219.8" rx="13.5" ry="15.2" fill="#111111" opacity="0.82"/><ellipse cx="236.9" cy="234.5" rx="13.5" ry="11.9" fill="#111111" opacity="0.82"/><ellipse cx="249.1" cy="239.4" rx="6.9" ry="10.2" fill="#111111" opacity="0.64"/><ellipse cx="224.7" cy="246.7" rx="6.9" ry="6.9" fill="#111111" opacity="0.64"/><ellipse cx="202.7" cy="249.1" rx="13.5" ry="6.9" fill="#111111" opacity="0.73"/><ellipse cx="136.8" cy="234.5" rx="11.9" ry="10.2" fill="#111111" opacity="0.73"/><ellipse cx="147.8" cy="234.5" rx="6.9" ry="6.9" fill="#111111" opacity="0.64"/><ellipse cx="163.7" cy="235.7" rx="10.2" ry="6.0" fill="#111111" opacity="0.64"/><ellipse cx="129.5" cy="249.1" rx="6.9" ry="6.9" fill="#111111" opacity="0.64"/><ellipse cx="17.1" cy="196.6" rx="6.0" ry="6.0" fill="#111111" opacity="0.64"/><ellipse cx="19.5" cy="214.9" rx="16.8" ry="18.5" fill="#111111" opacity="1.00"/><ellipse cx="14.7" cy="238.2" rx="6.0" ry="8.6" fill="#111111" opacity="0.64"/><ellipse cx="41.5" cy="228.4" rx="15.2" ry="16.8" fill="#111111" opacity="1.00"/><ellipse cx="61.1" cy="217.4" rx="13.5" ry="15.2" fill="#111111" opacity="0.91"/><ellipse cx="63.5" cy="238.2" rx="13.5" ry="11.9" fill="#111111" opacity="0.82"/><ellipse cx="80.6" cy="230.8" rx="8.6" ry="10.2" fill="#111111" opacity="0.73"/><ellipse cx="94.0" cy="225.9" rx="6.9" ry="6.9" fill="#111111" opacity="0.64"/><ellipse cx="44.0" cy="250.4" rx="9.3" ry="6.0" fill="#111111" opacity="0.64"/><ellipse cx="78.2" cy="244.3" rx="6.0" ry="6.0" fill="#111111" opacity="0.64"/><ellipse cx="115" cy="117" rx="24" ry="15" fill="#000" opacity="0.8" transform="rotate(-11 115 117)"/><ellipse cx="203" cy="150" rx="27" ry="22" fill="#000" opacity="0.8" transform="rotate(-21 203 150)"/><ellipse cx="228" cy="100" rx="20" ry="18" fill="#000" opacity="0.6" transform="rotate(9 228 100)"/><ellipse cx="90" cy="214" rx="45" ry="20" fill="#000" opacity="0.6" transform="rotate(-26 90 214)"/><ellipse cx="49" cy="29" rx="12" ry="11" fill="#000" opacity="0.5" transform="rotate(2 49 29)"/><ellipse cx="107" cy="15" rx="20" ry="9" fill="#000" opacity="0.6" transform="rotate(-8 107 15)"/><ellipse cx="146" cy="63" rx="10" ry="10" fill="#000" opacity="0.5" transform="rotate(-27 146 63)"/><ellipse cx="176" cy="61" rx="9" ry="10" fill="#000" opacity="0.5" transform="rotate(0 176 61)"/><ellipse cx="232" cy="82" rx="16" ry="8" fill="#000" opacity="0.5" transform="rotate(-28 232 82)"/><ellipse cx="171" cy="222" rx="12" ry="13" fill="#000" opacity="0.5" transform="rotate(-4 171 222)"/></g><ellipse cx="19.5" cy="14.7" rx="10.4" ry="7.2" fill="url(#gw)" opacity="0.15" transform="rotate(13 19.5 14.7)"/><ellipse cx="19.5" cy="14.7" rx="5.8" ry="4.0" fill="url(#gw)" opacity="0.38" transform="rotate(13 19.5 14.7)"/><ellipse cx="19.6" cy="16.5" rx="3.2" ry="3.2" fill="url(#gw)" opacity="0.29"/><ellipse cx="38.0" cy="5.0" rx="10.4" ry="7.2" fill="url(#gw)" opacity="0.09" transform="rotate(16 38.0 5.0)"/><ellipse cx="38.0" cy="5.0" rx="5.8" ry="4.0" fill="url(#gw)" opacity="0.23" transform="rotate(16 38.0 5.0)"/><ellipse cx="38.0" cy="6.8" rx="3.2" ry="3.2" fill="url(#gw)" opacity="0.18"/><ellipse cx="7.0" cy="40.0" rx="7.8" ry="5.4" fill="url(#gw)" opacity="0.08" transform="rotate(76 7.0 40.0)"/><ellipse cx="7.0" cy="40.0" rx="4.3" ry="3.0" fill="url(#gw)" opacity="0.21" transform="rotate(76 7.0 40.0)"/><ellipse cx="29.0" cy="36.6" rx="7.8" ry="5.4" fill="url(#gw)" opacity="0.06" transform="rotate(149 29.0 36.6)"/><ellipse cx="29.0" cy="36.6" rx="4.3" ry="3.0" fill="url(#gw)" opacity="0.15" transform="rotate(149 29.0 36.6)"/><ellipse cx="35.4" cy="57.4" rx="15.6" ry="10.8" fill="url(#gw)" opacity="0.12" transform="rotate(22 35.4 57.4)"/><ellipse cx="35.4" cy="57.4" rx="8.7" ry="6.0" fill="url(#gw)" opacity="0.32" transform="rotate(22 35.4 57.4)"/><ellipse cx="35.1" cy="60.1" rx="4.9" ry="4.9" fill="url(#gw)" opacity="0.25"/><ellipse cx="41.5" cy="68.4" rx="7.8" ry="5.4" fill="url(#gw)" opacity="0.13" transform="rotate(40 41.5 68.4)"/><ellipse cx="41.5" cy="68.4" rx="4.3" ry="3.0" fill="url(#gw)" opacity="0.34" transform="rotate(40 41.5 68.4)"/><ellipse cx="17.0" cy="68.0" rx="10.4" ry="7.2" fill="url(#gw)" opacity="0.09" transform="rotate(113 17.0 68.0)"/><ellipse cx="17.0" cy="68.0" rx="5.8" ry="4.0" fill="url(#gw)" opacity="0.23" transform="rotate(113 17.0 68.0)"/><ellipse cx="15.2" cy="67.8" rx="3.2" ry="3.2" fill="url(#gw)" opacity="0.18"/><ellipse cx="74.5" cy="59.8" rx="15.6" ry="10.8" fill="url(#gw)" opacity="0.13" transform="rotate(171 74.5 59.8)"/><ellipse cx="74.5" cy="59.8" rx="8.7" ry="6.0" fill="url(#gw)" opacity="0.34" transform="rotate(171 74.5 59.8)"/><ellipse cx="73.4" cy="57.4" rx="4.9" ry="4.9" fill="url(#gw)" opacity="0.26"/><ellipse cx="91.0" cy="64.0" rx="6.5" ry="4.5" fill="url(#gw)" opacity="0.12" transform="rotate(104 91.0 64.0)"/><ellipse cx="91.0" cy="64.0" rx="3.6" ry="2.5" fill="url(#gw)" opacity="0.32" transform="rotate(104 91.0 64.0)"/><ellipse cx="111.0" cy="47.6" rx="10.4" ry="7.2" fill="url(#gw)" opacity="0.09" transform="rotate(71 111.0 47.6)"/><ellipse cx="111.0" cy="47.6" rx="5.8" ry="4.0" fill="url(#gw)" opacity="0.23" transform="rotate(71 111.0 47.6)"/><ellipse cx="109.5" cy="48.6" rx="3.2" ry="3.2" fill="url(#gw)" opacity="0.18"/><ellipse cx="85.5" cy="31.8" rx="7.8" ry="5.4" fill="url(#gw)" opacity="0.06" transform="rotate(176 85.5 31.8)"/><ellipse cx="85.5" cy="31.8" rx="4.3" ry="3.0" fill="url(#gw)" opacity="0.15" transform="rotate(176 85.5 31.8)"/><ellipse cx="99.0" cy="44.0" rx="7.8" ry="5.4" fill="url(#gw)" opacity="0.06" transform="rotate(8 99.0 44.0)"/><ellipse cx="99.0" cy="44.0" rx="4.3" ry="3.0" fill="url(#gw)" opacity="0.15" transform="rotate(8 99.0 44.0)"/><ellipse cx="112.0" cy="69.6" rx="7.8" ry="5.4" fill="url(#gw)" opacity="0.07" transform="rotate(155 112.0 69.6)"/><ellipse cx="112.0" cy="69.6" rx="4.3" ry="3.0" fill="url(#gw)" opacity="0.19" transform="rotate(155 112.0 69.6)"/><ellipse cx="35.4" cy="85.5" rx="10.4" ry="7.2" fill="url(#gw)" opacity="0.07" transform="rotate(52 35.4 85.5)"/><ellipse cx="35.4" cy="85.5" rx="5.8" ry="4.0" fill="url(#gw)" opacity="0.17" transform="rotate(52 35.4 85.5)"/><ellipse cx="34.3" cy="86.9" rx="3.2" ry="3.2" fill="url(#gw)" opacity="0.13"/><ellipse cx="168.5" cy="29.3" rx="7.8" ry="5.4" fill="url(#gw)" opacity="0.08" transform="rotate(26 168.5 29.3)"/><ellipse cx="168.5" cy="29.3" rx="4.3" ry="3.0" fill="url(#gw)" opacity="0.21" transform="rotate(26 168.5 29.3)"/><ellipse cx="180.7" cy="6.8" rx="7.8" ry="5.4" fill="url(#gw)" opacity="0.09" transform="rotate(21 180.7 6.8)"/><ellipse cx="180.7" cy="6.8" rx="4.3" ry="3.0" fill="url(#gw)" opacity="0.23" transform="rotate(21 180.7 6.8)"/><ellipse cx="161.0" cy="7.3" rx="10.4" ry="7.2" fill="url(#gw)" opacity="0.07" transform="rotate(56 161.0 7.3)"/><ellipse cx="161.0" cy="7.3" rx="5.8" ry="4.0" fill="url(#gw)" opacity="0.19" transform="rotate(56 161.0 7.3)"/><ellipse cx="159.8" cy="8.7" rx="3.2" ry="3.2" fill="url(#gw)" opacity="0.15"/><ellipse cx="202.0" cy="6.5" rx="9.1" ry="6.3" fill="url(#gw)" opacity="0.07" transform="rotate(147 202.0 6.5)"/><ellipse cx="202.0" cy="6.5" rx="5.1" ry="3.5" fill="url(#gw)" opacity="0.19" transform="rotate(147 202.0 6.5)"/><ellipse cx="161.5" cy="18.9" rx="7.8" ry="5.4" fill="url(#gw)" opacity="0.06" transform="rotate(33 161.5 18.9)"/><ellipse cx="161.5" cy="18.9" rx="4.3" ry="3.0" fill="url(#gw)" opacity="0.15" transform="rotate(33 161.5 18.9)"/><ellipse cx="208.6" cy="26.5" rx="7.8" ry="5.4" fill="url(#gw)" opacity="0.07" transform="rotate(105 208.6 26.5)"/><ellipse cx="208.6" cy="26.5" rx="4.3" ry="3.0" fill="url(#gw)" opacity="0.19" transform="rotate(105 208.6 26.5)"/><ellipse cx="217.4" cy="37.9" rx="18.2" ry="12.6" fill="url(#gw)" opacity="0.15" transform="rotate(115 217.4 37.9)"/><ellipse cx="217.4" cy="37.9" rx="10.2" ry="7.0" fill="url(#gw)" opacity="0.38" transform="rotate(115 217.4 37.9)"/><ellipse cx="214.3" cy="37.4" rx="5.7" ry="5.7" fill="url(#gw)" opacity="0.29"/><ellipse cx="207.9" cy="46.9" rx="15.6" ry="10.8" fill="url(#gw)" opacity="0.09" transform="rotate(67 207.9 46.9)"/><ellipse cx="207.9" cy="46.9" rx="8.7" ry="6.0" fill="url(#gw)" opacity="0.23" transform="rotate(67 207.9 46.9)"/><ellipse cx="205.8" cy="48.6" rx="4.9" ry="4.9" fill="url(#gw)" opacity="0.18"/><ellipse cx="199.0" cy="52.5" rx="10.4" ry="7.2" fill="url(#gw)" opacity="0.07" transform="rotate(99 199.0 52.5)"/><ellipse cx="199.0" cy="52.5" rx="5.8" ry="4.0" fill="url(#gw)" opacity="0.19" transform="rotate(99 199.0 52.5)"/><ellipse cx="197.2" cy="52.7" rx="3.2" ry="3.2" fill="url(#gw)" opacity="0.15"/><ellipse cx="238.0" cy="31.8" rx="13.0" ry="9.0" fill="url(#gw)" opacity="0.12" transform="rotate(11 238.0 31.8)"/><ellipse cx="238.0" cy="31.8" rx="7.2" ry="5.0" fill="url(#gw)" opacity="0.32" transform="rotate(11 238.0 31.8)"/><ellipse cx="238.2" cy="34.0" rx="4.1" ry="4.1" fill="url(#gw)" opacity="0.25"/><ellipse cx="243.0" cy="50.0" rx="10.4" ry="7.2" fill="url(#gw)" opacity="0.13" transform="rotate(11 243.0 50.0)"/><ellipse cx="243.0" cy="50.0" rx="5.8" ry="4.0" fill="url(#gw)" opacity="0.34" transform="rotate(11 243.0 50.0)"/><ellipse cx="243.2" cy="51.8" rx="3.2" ry="3.2" fill="url(#gw)" opacity="0.26"/><ellipse cx="229.6" cy="42.7" rx="7.8" ry="5.4" fill="url(#gw)" opacity="0.07" transform="rotate(37 229.6 42.7)"/><ellipse cx="229.6" cy="42.7" rx="4.3" ry="3.0" fill="url(#gw)" opacity="0.19" transform="rotate(37 229.6 42.7)"/><ellipse cx="223.5" cy="68.4" rx="7.8" ry="5.4" fill="url(#gw)" opacity="0.07" transform="rotate(122 223.5 68.4)"/><ellipse cx="223.5" cy="68.4" rx="4.3" ry="3.0" fill="url(#gw)" opacity="0.17" transform="rotate(122 223.5 68.4)"/><ellipse cx="205.0" cy="73.3" rx="7.8" ry="5.4" fill="url(#gw)" opacity="0.07" transform="rotate(77 205.0 73.3)"/><ellipse cx="205.0" cy="73.3" rx="4.3" ry="3.0" fill="url(#gw)" opacity="0.17" transform="rotate(77 205.0 73.3)"/><ellipse cx="128.5" cy="92.0" rx="13.0" ry="9.0" fill="url(#gw)" opacity="0.07" transform="rotate(57 128.5 92.0)"/><ellipse cx="128.5" cy="92.0" rx="7.2" ry="5.0" fill="url(#gw)" opacity="0.17" transform="rotate(57 128.5 92.0)"/><ellipse cx="127.0" cy="93.7" rx="4.1" ry="4.1" fill="url(#gw)" opacity="0.13"/><ellipse cx="149.0" cy="102.6" rx="13.0" ry="9.0" fill="url(#gw)" opacity="0.09" transform="rotate(105 149.0 102.6)"/><ellipse cx="149.0" cy="102.6" rx="7.2" ry="5.0" fill="url(#gw)" opacity="0.23" transform="rotate(105 149.0 102.6)"/><ellipse cx="146.8" cy="102.6" rx="4.1" ry="4.1" fill="url(#gw)" opacity="0.18"/><ellipse cx="156.3" cy="105.5" rx="10.4" ry="7.2" fill="url(#gw)" opacity="0.13" transform="rotate(82 156.3 105.5)"/><ellipse cx="156.3" cy="105.5" rx="5.8" ry="4.0" fill="url(#gw)" opacity="0.34" transform="rotate(82 156.3 105.5)"/><ellipse cx="154.7" cy="106.2" rx="3.2" ry="3.2" fill="url(#gw)" opacity="0.26"/><ellipse cx="182.0" cy="107.5" rx="7.8" ry="5.4" fill="url(#gw)" opacity="0.10" transform="rotate(54 182.0 107.5)"/><ellipse cx="182.0" cy="107.5" rx="4.3" ry="3.0" fill="url(#gw)" opacity="0.25" transform="rotate(54 182.0 107.5)"/><ellipse cx="193.7" cy="112.8" rx="9.1" ry="6.3" fill="url(#gw)" opacity="0.09" transform="rotate(143 193.7 112.8)"/><ellipse cx="193.7" cy="112.8" rx="5.1" ry="3.5" fill="url(#gw)" opacity="0.23" transform="rotate(143 193.7 112.8)"/><ellipse cx="168.5" cy="101.4" rx="7.8" ry="5.4" fill="url(#gw)" opacity="0.06" transform="rotate(126 168.5 101.4)"/><ellipse cx="168.5" cy="101.4" rx="4.3" ry="3.0" fill="url(#gw)" opacity="0.15" transform="rotate(126 168.5 101.4)"/><ellipse cx="78.6" cy="117.2" rx="10.4" ry="7.2" fill="url(#gw)" opacity="0.11" transform="rotate(44 78.6 117.2)"/><ellipse cx="78.6" cy="117.2" rx="5.8" ry="4.0" fill="url(#gw)" opacity="0.28" transform="rotate(44 78.6 117.2)"/><ellipse cx="77.7" cy="118.8" rx="3.2" ry="3.2" fill="url(#gw)" opacity="0.22"/><ellipse cx="51.3" cy="118.5" rx="10.4" ry="7.2" fill="url(#gw)" opacity="0.07" transform="rotate(103 51.3 118.5)"/><ellipse cx="51.3" cy="118.5" rx="5.8" ry="4.0" fill="url(#gw)" opacity="0.17" transform="rotate(103 51.3 118.5)"/><ellipse cx="49.5" cy="118.6" rx="3.2" ry="3.2" fill="url(#gw)" opacity="0.13"/><ellipse cx="99.4" cy="135.6" rx="11.7" ry="8.1" fill="url(#gw)" opacity="0.13" transform="rotate(95 99.4 135.6)"/><ellipse cx="99.4" cy="135.6" rx="6.5" ry="4.5" fill="url(#gw)" opacity="0.34" transform="rotate(95 99.4 135.6)"/><ellipse cx="97.4" cy="136.0" rx="3.6" ry="3.6" fill="url(#gw)" opacity="0.26"/><ellipse cx="105.0" cy="141.7" rx="7.8" ry="5.4" fill="url(#gw)" opacity="0.07" transform="rotate(158 105.0 141.7)"/><ellipse cx="105.0" cy="141.7" rx="4.3" ry="3.0" fill="url(#gw)" opacity="0.19" transform="rotate(158 105.0 141.7)"/><ellipse cx="124.6" cy="146.0" rx="13.0" ry="9.0" fill="url(#gw)" opacity="0.14" transform="rotate(131 124.6 146.0)"/><ellipse cx="124.6" cy="146.0" rx="7.2" ry="5.0" fill="url(#gw)" opacity="0.36" transform="rotate(131 124.6 146.0)"/><ellipse cx="122.6" cy="145.0" rx="4.1" ry="4.1" fill="url(#gw)" opacity="0.28"/><ellipse cx="131.9" cy="153.9" rx="10.4" ry="7.2" fill="url(#gw)" opacity="0.10" transform="rotate(52 131.9 153.9)"/><ellipse cx="131.9" cy="153.9" rx="5.8" ry="4.0" fill="url(#gw)" opacity="0.25" transform="rotate(52 131.9 153.9)"/><ellipse cx="130.8" cy="155.4" rx="3.2" ry="3.2" fill="url(#gw)" opacity="0.19"/><ellipse cx="144.0" cy="154.4" rx="7.8" ry="5.4" fill="url(#gw)" opacity="0.07" transform="rotate(176 144.0 154.4)"/><ellipse cx="144.0" cy="154.4" rx="4.3" ry="3.0" fill="url(#gw)" opacity="0.17" transform="rotate(176 144.0 154.4)"/><ellipse cx="12.2" cy="146.6" rx="10.4" ry="7.2" fill="url(#gw)" opacity="0.09" transform="rotate(21 12.2 146.6)"/><ellipse cx="12.2" cy="146.6" rx="5.8" ry="4.0" fill="url(#gw)" opacity="0.23" transform="rotate(21 12.2 146.6)"/><ellipse cx="12.0" cy="148.4" rx="3.2" ry="3.2" fill="url(#gw)" opacity="0.18"/><ellipse cx="42.7" cy="147.8" rx="6.5" ry="4.5" fill="url(#gw)" opacity="0.06" transform="rotate(75 42.7 147.8)"/><ellipse cx="42.7" cy="147.8" rx="3.6" ry="2.5" fill="url(#gw)" opacity="0.15" transform="rotate(75 42.7 147.8)"/><ellipse cx="78.0" cy="157.5" rx="10.4" ry="7.2" fill="url(#gw)" opacity="0.06" transform="rotate(136 78.0 157.5)"/><ellipse cx="78.0" cy="157.5" rx="5.8" ry="4.0" fill="url(#gw)" opacity="0.15" transform="rotate(136 78.0 157.5)"/><ellipse cx="76.5" cy="156.6" rx="3.2" ry="3.2" fill="url(#gw)" opacity="0.12"/><ellipse cx="62.3" cy="167.8" rx="6.5" ry="4.5" fill="url(#gw)" opacity="0.08" transform="rotate(27 62.3 167.8)"/><ellipse cx="62.3" cy="167.8" rx="3.6" ry="2.5" fill="url(#gw)" opacity="0.21" transform="rotate(27 62.3 167.8)"/><ellipse cx="101.4" cy="171.0" rx="7.8" ry="5.4" fill="url(#gw)" opacity="0.14" transform="rotate(88 101.4 171.0)"/><ellipse cx="101.4" cy="171.0" rx="4.3" ry="3.0" fill="url(#gw)" opacity="0.36" transform="rotate(88 101.4 171.0)"/><ellipse cx="163.0" cy="161.7" rx="13.0" ry="9.0" fill="url(#gw)" opacity="0.14" transform="rotate(7 163.0 161.7)"/><ellipse cx="163.0" cy="161.7" rx="7.2" ry="5.0" fill="url(#gw)" opacity="0.36" transform="rotate(7 163.0 161.7)"/><ellipse cx="163.3" cy="163.9" rx="4.1" ry="4.1" fill="url(#gw)" opacity="0.28"/><ellipse cx="156.3" cy="171.0" rx="15.6" ry="10.8" fill="url(#gw)" opacity="0.09" transform="rotate(120 156.3 171.0)"/><ellipse cx="156.3" cy="171.0" rx="8.7" ry="6.0" fill="url(#gw)" opacity="0.23" transform="rotate(120 156.3 171.0)"/><ellipse cx="153.7" cy="170.3" rx="4.9" ry="4.9" fill="url(#gw)" opacity="0.18"/><ellipse cx="163.7" cy="177.0" rx="10.4" ry="7.2" fill="url(#gw)" opacity="0.07" transform="rotate(138 163.7 177.0)"/><ellipse cx="163.7" cy="177.0" rx="5.8" ry="4.0" fill="url(#gw)" opacity="0.19" transform="rotate(138 163.7 177.0)"/><ellipse cx="162.2" cy="176.0" rx="3.2" ry="3.2" fill="url(#gw)" opacity="0.15"/><ellipse cx="179.5" cy="182.0" rx="13.0" ry="9.0" fill="url(#gw)" opacity="0.07" transform="rotate(103 179.5 182.0)"/><ellipse cx="179.5" cy="182.0" rx="7.2" ry="5.0" fill="url(#gw)" opacity="0.19" transform="rotate(103 179.5 182.0)"/><ellipse cx="177.3" cy="182.1" rx="4.1" ry="4.1" fill="url(#gw)" opacity="0.15"/><ellipse cx="141.7" cy="182.0" rx="7.8" ry="5.4" fill="url(#gw)" opacity="0.07" transform="rotate(158 141.7 182.0)"/><ellipse cx="141.7" cy="182.0" rx="4.3" ry="3.0" fill="url(#gw)" opacity="0.17" transform="rotate(158 141.7 182.0)"/><ellipse cx="153.0" cy="195.4" rx="7.8" ry="5.4" fill="url(#gw)" opacity="0.07" transform="rotate(56 153.0 195.4)"/><ellipse cx="153.0" cy="195.4" rx="4.3" ry="3.0" fill="url(#gw)" opacity="0.19" transform="rotate(56 153.0 195.4)"/><ellipse cx="162.4" cy="200.8" rx="15.6" ry="10.8" fill="url(#gw)" opacity="0.10" transform="rotate(125 162.4 200.8)"/><ellipse cx="162.4" cy="200.8" rx="8.7" ry="6.0" fill="url(#gw)" opacity="0.25" transform="rotate(125 162.4 200.8)"/><ellipse cx="159.9" cy="199.9" rx="4.9" ry="4.9" fill="url(#gw)" opacity="0.19"/><ellipse cx="205.0" cy="197.8" rx="15.6" ry="10.8" fill="url(#gw)" opacity="0.06" transform="rotate(107 205.0 197.8)"/><ellipse cx="205.0" cy="197.8" rx="8.7" ry="6.0" fill="url(#gw)" opacity="0.14" transform="rotate(107 205.0 197.8)"/><ellipse cx="202.3" cy="197.7" rx="4.9" ry="4.9" fill="url(#gw)" opacity="0.11"/><ellipse cx="223.5" cy="173.4" rx="15.6" ry="10.8" fill="url(#gw)" opacity="0.12" transform="rotate(104 223.5 173.4)"/><ellipse cx="223.5" cy="173.4" rx="8.7" ry="6.0" fill="url(#gw)" opacity="0.32" transform="rotate(104 223.5 173.4)"/><ellipse cx="220.8" cy="173.5" rx="4.9" ry="4.9" fill="url(#gw)" opacity="0.25"/><ellipse cx="233.3" cy="174.6" rx="18.2" ry="12.6" fill="url(#gw)" opacity="0.14" transform="rotate(82 233.3 174.6)"/><ellipse cx="233.3" cy="174.6" rx="10.2" ry="7.0" fill="url(#gw)" opacity="0.36" transform="rotate(82 233.3 174.6)"/><ellipse cx="230.4" cy="175.9" rx="5.7" ry="5.7" fill="url(#gw)" opacity="0.28"/><ellipse cx="241.8" cy="156.3" rx="13.0" ry="9.0" fill="url(#gw)" opacity="0.10" transform="rotate(151 241.8 156.3)"/><ellipse cx="241.8" cy="156.3" rx="7.2" ry="5.0" fill="url(#gw)" opacity="0.26" transform="rotate(151 241.8 156.3)"/><ellipse cx="240.2" cy="154.7" rx="4.1" ry="4.1" fill="url(#gw)" opacity="0.21"/><ellipse cx="251.6" cy="155.0" rx="7.8" ry="5.4" fill="url(#gw)" opacity="0.07" transform="rotate(170 251.6 155.0)"/><ellipse cx="251.6" cy="155.0" rx="4.3" ry="3.0" fill="url(#gw)" opacity="0.19" transform="rotate(170 251.6 155.0)"/><ellipse cx="230.8" cy="211.3" rx="18.2" ry="12.6" fill="url(#gw)" opacity="0.15" transform="rotate(85 230.8 211.3)"/><ellipse cx="230.8" cy="211.3" rx="10.2" ry="7.0" fill="url(#gw)" opacity="0.38" transform="rotate(85 230.8 211.3)"/><ellipse cx="227.8" cy="212.4" rx="5.7" ry="5.7" fill="url(#gw)" opacity="0.29"/><ellipse cx="196.6" cy="215.0" rx="18.2" ry="12.6" fill="url(#gw)" opacity="0.10" transform="rotate(120 196.6 215.0)"/><ellipse cx="196.6" cy="215.0" rx="10.2" ry="7.0" fill="url(#gw)" opacity="0.25" transform="rotate(120 196.6 215.0)"/><ellipse cx="193.5" cy="214.2" rx="5.7" ry="5.7" fill="url(#gw)" opacity="0.19"/><ellipse cx="206.4" cy="221.0" rx="20.8" ry="14.4" fill="url(#gw)" opacity="0.11" transform="rotate(11 206.4 221.0)"/><ellipse cx="206.4" cy="221.0" rx="11.6" ry="8.0" fill="url(#gw)" opacity="0.28" transform="rotate(11 206.4 221.0)"/><ellipse cx="206.7" cy="224.6" rx="6.5" ry="6.5" fill="url(#gw)" opacity="0.22"/><ellipse cx="204.0" cy="229.6" rx="13.0" ry="9.0" fill="url(#gw)" opacity="0.07" transform="rotate(126 204.0 229.6)"/><ellipse cx="204.0" cy="229.6" rx="7.2" ry="5.0" fill="url(#gw)" opacity="0.19" transform="rotate(126 204.0 229.6)"/><ellipse cx="201.9" cy="228.8" rx="4.1" ry="4.1" fill="url(#gw)" opacity="0.15"/><ellipse cx="216.0" cy="232.0" rx="7.8" ry="5.4" fill="url(#gw)" opacity="0.07" transform="rotate(116 216.0 232.0)"/><ellipse cx="216.0" cy="232.0" rx="4.3" ry="3.0" fill="url(#gw)" opacity="0.19" transform="rotate(116 216.0 232.0)"/><ellipse cx="136.0" cy="234.0" rx="15.6" ry="10.8" fill="url(#gw)" opacity="0.15" transform="rotate(179 136.0 234.0)"/><ellipse cx="136.0" cy="234.0" rx="8.7" ry="6.0" fill="url(#gw)" opacity="0.38" transform="rotate(179 136.0 234.0)"/><ellipse cx="135.2" cy="231.4" rx="4.9" ry="4.9" fill="url(#gw)" opacity="0.29"/><ellipse cx="18.3" cy="216.0" rx="18.2" ry="12.6" fill="url(#gw)" opacity="0.09" transform="rotate(148 18.3 216.0)"/><ellipse cx="18.3" cy="216.0" rx="10.2" ry="7.0" fill="url(#gw)" opacity="0.23" transform="rotate(148 18.3 216.0)"/><ellipse cx="16.0" cy="213.9" rx="5.7" ry="5.7" fill="url(#gw)" opacity="0.18"/><ellipse cx="29.3" cy="216.0" rx="10.4" ry="7.2" fill="url(#gw)" opacity="0.07" transform="rotate(51 29.3 216.0)"/><ellipse cx="29.3" cy="216.0" rx="5.8" ry="4.0" fill="url(#gw)" opacity="0.19" transform="rotate(51 29.3 216.0)"/><ellipse cx="28.2" cy="217.5" rx="3.2" ry="3.2" fill="url(#gw)" opacity="0.15"/><ellipse cx="13.4" cy="223.5" rx="10.4" ry="7.2" fill="url(#gw)" opacity="0.07" transform="rotate(69 13.4 223.5)"/><ellipse cx="13.4" cy="223.5" rx="5.8" ry="4.0" fill="url(#gw)" opacity="0.17" transform="rotate(69 13.4 223.5)"/><ellipse cx="11.9" cy="224.6" rx="3.2" ry="3.2" fill="url(#gw)" opacity="0.13"/><ellipse cx="238.0" cy="201.5" rx="6.5" ry="4.5" fill="url(#gw)" opacity="0.06" transform="rotate(120 238.0 201.5)"/><ellipse cx="238.0" cy="201.5" rx="3.6" ry="2.5" fill="url(#gw)" opacity="0.15" transform="rotate(120 238.0 201.5)"/><ellipse cx="245.5" cy="241.8" rx="6.5" ry="4.5" fill="url(#gw)" opacity="0.06" transform="rotate(4 245.5 241.8)"/><ellipse cx="245.5" cy="241.8" rx="3.6" ry="2.5" fill="url(#gw)" opacity="0.15" transform="rotate(4 245.5 241.8)"/><ellipse cx="75.6" cy="245.7" rx="6.5" ry="4.5" fill="url(#gw)" opacity="0.04" transform="rotate(83 75.6 245.7)"/><ellipse cx="75.6" cy="245.7" rx="3.6" ry="2.5" fill="url(#gw)" opacity="0.11" transform="rotate(83 75.6 245.7)"/><ellipse cx="81.4" cy="230.0" rx="6.5" ry="4.5" fill="url(#gw)" opacity="0.04" transform="rotate(30 81.4 230.0)"/><ellipse cx="81.4" cy="230.0" rx="3.6" ry="2.5" fill="url(#gw)" opacity="0.11" transform="rotate(30 81.4 230.0)"/></g><g fill="none" stroke="#fff" stroke-width="2.4"><ellipse cx="19.7" cy="17.0" rx="4.5" ry="3.2" transform="rotate(12 19.7 17.0)"/><ellipse cx="25.2" cy="11.4" rx="5.3" ry="3.3" transform="rotate(97 25.2 11.4)"/><ellipse cx="43.4" cy="11.9" rx="4.1" ry="4.3" transform="rotate(149 43.4 11.9)"/><ellipse cx="43.2" cy="6.7" rx="4.3" ry="3.9" transform="rotate(132 43.2 6.7)"/><ellipse cx="33.6" cy="6.1" rx="3.8" ry="2.6" fill="#fff" transform="rotate(85 33.6 6.1)"/><ellipse cx="51.9" cy="7.0" rx="4.8" ry="3.4" transform="rotate(164 51.9 7.0)"/><ellipse cx="58.3" cy="15.0" rx="4.7" ry="3.6" transform="rotate(108 58.3 15.0)"/><ellipse cx="56.4" cy="23.0" rx="5.4" ry="3.1" transform="rotate(8 56.4 23.0)"/><ellipse cx="52.1" cy="20.3" rx="5.8" ry="3.3" transform="rotate(74 52.1 20.3)"/><ellipse cx="78.0" cy="7.1" rx="4.4" ry="4.0" transform="rotate(58 78.0 7.1)"/><ellipse cx="83.9" cy="9.2" rx="5.3" ry="3.9" transform="rotate(43 83.9 9.2)"/><ellipse cx="74.5" cy="35.3" rx="3.7" ry="4.0" transform="rotate(161 74.5 35.3)"/><ellipse cx="69.7" cy="19.8" rx="3.6" ry="3.4" transform="rotate(174 69.7 19.8)"/><ellipse cx="60.8" cy="34.4" rx="5.0" ry="4.1" transform="rotate(53 60.8 34.4)"/><ellipse cx="66.6" cy="30.6" rx="3.6" ry="3.5" fill="#fff" transform="rotate(60 66.6 30.6)"/><ellipse cx="78.7" cy="28.6" rx="4.1" ry="3.1" transform="rotate(10 78.7 28.6)"/><ellipse cx="68.7" cy="25.9" rx="3.7" ry="3.7" transform="rotate(45 68.7 25.9)"/><ellipse cx="88.2" cy="42.8" rx="5.3" ry="3.6" transform="rotate(178 88.2 42.8)"/><ellipse cx="83.4" cy="44.5" rx="3.7" ry="3.6" transform="rotate(45 83.4 44.5)"/><ellipse cx="86.4" cy="29.1" rx="3.7" ry="3.4" transform="rotate(44 86.4 29.1)"/><ellipse cx="84.4" cy="38.8" rx="5.6" ry="3.8" transform="rotate(178 84.4 38.8)"/><ellipse cx="92.5" cy="34.5" rx="5.1" ry="3.1" transform="rotate(162 92.5 34.5)"/><ellipse cx="127.0" cy="14.7" rx="3.7" ry="3.2" transform="rotate(114 127.0 14.7)"/><ellipse cx="122.0" cy="8.8" rx="3.3" ry="2.4" fill="#fff" transform="rotate(166 122.0 8.8)"/><ellipse cx="148.3" cy="6.2" rx="5.4" ry="4.1" transform="rotate(158 148.3 6.2)"/><ellipse cx="141.3" cy="8.0" rx="3.7" ry="3.0" transform="rotate(107 141.3 8.0)"/><ellipse cx="149.2" cy="19.7" rx="3.9" ry="3.5" transform="rotate(138 149.2 19.7)"/><ellipse cx="155.1" cy="27.6" rx="5.4" ry="3.1" transform="rotate(98 155.1 27.6)"/><ellipse cx="143.6" cy="20.2" rx="3.3" ry="2.9" fill="#fff" transform="rotate(174 143.6 20.2)"/><ellipse cx="150.4" cy="33.2" rx="5.5" ry="3.7" transform="rotate(78 150.4 33.2)"/><ellipse cx="137.3" cy="37.4" rx="4.5" ry="4.1" transform="rotate(30 137.3 37.4)"/><ellipse cx="144.2" cy="31.1" rx="4.7" ry="3.5" transform="rotate(98 144.2 31.1)"/><ellipse cx="141.4" cy="26.0" rx="4.3" ry="3.8" transform="rotate(88 141.4 26.0)"/><ellipse cx="158.5" cy="14.9" rx="4.1" ry="4.2" transform="rotate(64 158.5 14.9)"/><ellipse cx="168.9" cy="14.0" rx="5.1" ry="3.9" transform="rotate(56 168.9 14.0)"/><ellipse cx="158.1" cy="23.2" rx="5.3" ry="3.9" transform="rotate(80 158.1 23.2)"/><ellipse cx="162.0" cy="8.8" rx="5.1" ry="3.2" transform="rotate(15 162.0 8.8)"/><ellipse cx="164.6" cy="21.8" rx="3.5" ry="2.7" fill="#fff" transform="rotate(4 164.6 21.8)"/><ellipse cx="179.1" cy="36.3" rx="5.4" ry="4.1" transform="rotate(172 179.1 36.3)"/><ellipse cx="161.1" cy="35.6" rx="4.9" ry="4.3" transform="rotate(137 161.1 35.6)"/><ellipse cx="175.9" cy="44.4" rx="5.1" ry="4.0" transform="rotate(111 175.9 44.4)"/><ellipse cx="164.7" cy="48.0" rx="4.5" ry="3.8" transform="rotate(161 164.7 48.0)"/><ellipse cx="162.3" cy="42.7" rx="4.3" ry="2.7" fill="#fff" transform="rotate(74 162.3 42.7)"/><ellipse cx="194.9" cy="11.4" rx="5.1" ry="3.9" transform="rotate(66 194.9 11.4)"/><ellipse cx="186.4" cy="5.6" rx="3.7" ry="4.4" transform="rotate(178 186.4 5.6)"/><ellipse cx="200.6" cy="4.0" rx="3.9" ry="3.3" transform="rotate(54 200.6 4.0)"/><ellipse cx="204.1" cy="9.6" rx="4.2" ry="4.2" transform="rotate(126 204.1 9.6)"/><ellipse cx="182.5" cy="2.4" rx="5.5" ry="4.0" transform="rotate(101 182.5 2.4)"/><ellipse cx="212.6" cy="5.7" rx="4.7" ry="3.2" transform="rotate(152 212.6 5.7)"/><ellipse cx="222.2" cy="16.7" rx="5.5" ry="3.4" transform="rotate(70 222.2 16.7)"/><ellipse cx="222.2" cy="9.3" rx="4.5" ry="3.6" transform="rotate(5 222.2 9.3)"/><ellipse cx="234.0" cy="16.1" rx="3.9" ry="3.2" transform="rotate(153 234.0 16.1)"/><ellipse cx="216.6" cy="23.7" rx="4.6" ry="4.0" transform="rotate(33 216.6 23.7)"/><ellipse cx="231.6" cy="9.0" rx="4.4" ry="4.2" transform="rotate(150 231.6 9.0)"/><ellipse cx="227.0" cy="20.6" rx="5.6" ry="3.4" transform="rotate(116 227.0 20.6)"/><ellipse cx="211.9" cy="13.3" rx="5.0" ry="3.4" transform="rotate(154 211.9 13.3)"/><ellipse cx="208.4" cy="25.5" rx="5.0" ry="3.5" transform="rotate(150 208.4 25.5)"/><ellipse cx="226.5" cy="14.1" rx="3.8" ry="4.0" transform="rotate(90 226.5 14.1)"/><ellipse cx="237.8" cy="7.3" rx="4.0" ry="3.1" transform="rotate(141 237.8 7.3)"/><ellipse cx="250.6" cy="8.7" rx="4.7" ry="3.0" transform="rotate(152 250.6 8.7)"/><ellipse cx="241.7" cy="2.0" rx="3.4" ry="2.8" fill="#fff" transform="rotate(109 241.7 2.0)"/><ellipse cx="239.4" cy="16.5" rx="5.3" ry="4.0" transform="rotate(79 239.4 16.5)"/><ellipse cx="235.8" cy="37.7" rx="5.7" ry="3.4" transform="rotate(136 235.8 37.7)"/><ellipse cx="214.0" cy="43.6" rx="4.2" ry="3.7" transform="rotate(5 214.0 43.6)"/><ellipse cx="229.9" cy="42.9" rx="3.0" ry="3.5" fill="#fff" transform="rotate(30 229.9 42.9)"/><ellipse cx="223.8" cy="45.8" rx="4.1" ry="3.4" fill="#fff" transform="rotate(90 223.8 45.8)"/><ellipse cx="226.8" cy="36.4" rx="4.1" ry="4.2" transform="rotate(21 226.8 36.4)"/><ellipse cx="223.1" cy="40.7" rx="3.7" ry="3.5" transform="rotate(59 223.1 40.7)"/><ellipse cx="211.8" cy="33.0" rx="5.8" ry="3.2" transform="rotate(39 211.8 33.0)"/><ellipse cx="231.6" cy="32.0" rx="5.1" ry="4.2" transform="rotate(19 231.6 32.0)"/><ellipse cx="213.1" cy="55.2" rx="4.8" ry="3.8" transform="rotate(65 213.1 55.2)"/><ellipse cx="202.8" cy="49.8" rx="5.0" ry="3.5" transform="rotate(65 202.8 49.8)"/><ellipse cx="200.6" cy="57.2" rx="4.1" ry="3.0" transform="rotate(34 200.6 57.2)"/><ellipse cx="206.2" cy="44.2" rx="4.7" ry="3.1" transform="rotate(55 206.2 44.2)"/><ellipse cx="209.0" cy="52.2" rx="4.3" ry="3.2" fill="#fff" transform="rotate(75 209.0 52.2)"/><ellipse cx="243.2" cy="53.2" rx="5.6" ry="3.7" transform="rotate(175 243.2 53.2)"/><ellipse cx="241.2" cy="46.1" rx="5.2" ry="3.0" transform="rotate(79 241.2 46.1)"/><ellipse cx="226.3" cy="65.0" rx="4.0" ry="3.4" transform="rotate(78 226.3 65.0)"/><ellipse cx="221.4" cy="60.5" rx="4.4" ry="3.9" transform="rotate(98 221.4 60.5)"/><ellipse cx="230.4" cy="61.6" rx="4.3" ry="3.8" transform="rotate(98 230.4 61.6)"/><ellipse cx="235.2" cy="66.3" rx="5.5" ry="3.1" transform="rotate(170 235.2 66.3)"/><ellipse cx="213.5" cy="64.9" rx="4.1" ry="3.7" transform="rotate(51 213.5 64.9)"/><ellipse cx="245.1" cy="63.6" rx="4.2" ry="3.6" transform="rotate(0 245.1 63.6)"/><ellipse cx="253.2" cy="55.3" rx="3.8" ry="3.6" transform="rotate(14 253.2 55.3)"/><ellipse cx="16.7" cy="36.4" rx="5.5" ry="4.3" transform="rotate(147 16.7 36.4)"/><ellipse cx="5.9" cy="38.4" rx="3.8" ry="3.9" transform="rotate(120 5.9 38.4)"/><ellipse cx="11.3" cy="36.8" rx="4.6" ry="3.2" transform="rotate(19 11.3 36.8)"/><ellipse cx="9.7" cy="44.2" rx="4.2" ry="3.8" transform="rotate(21 9.7 44.2)"/><ellipse cx="33.1" cy="47.0" rx="3.9" ry="4.1" transform="rotate(98 33.1 47.0)"/><ellipse cx="22.5" cy="48.1" rx="5.3" ry="3.7" transform="rotate(97 22.5 48.1)"/><ellipse cx="21.6" cy="41.8" rx="4.7" ry="3.9" transform="rotate(98 21.6 41.8)"/><ellipse cx="23.0" cy="36.9" rx="4.6" ry="3.5" transform="rotate(55 23.0 36.9)"/><ellipse cx="34.9" cy="63.8" rx="4.1" ry="3.7" transform="rotate(53 34.9 63.8)"/><ellipse cx="33.8" cy="53.9" rx="5.5" ry="4.1" transform="rotate(59 33.8 53.9)"/><ellipse cx="38.4" cy="58.6" rx="3.6" ry="4.2" transform="rotate(0 38.4 58.6)"/><ellipse cx="28.8" cy="61.6" rx="3.4" ry="2.5" fill="#fff" transform="rotate(142 28.8 61.6)"/><ellipse cx="41.3" cy="63.3" rx="5.2" ry="4.1" transform="rotate(159 41.3 63.3)"/><ellipse cx="55.3" cy="47.5" rx="4.5" ry="4.3" transform="rotate(19 55.3 47.5)"/><ellipse cx="63.9" cy="48.4" rx="5.4" ry="4.0" transform="rotate(78 63.9 48.4)"/><ellipse cx="81.1" cy="55.4" rx="5.0" ry="4.3" transform="rotate(51 81.1 55.4)"/><ellipse cx="84.6" cy="61.6" rx="5.0" ry="3.9" transform="rotate(43 84.6 61.6)"/><ellipse cx="66.7" cy="60.9" rx="4.4" ry="3.6" transform="rotate(75 66.7 60.9)"/><ellipse cx="75.5" cy="55.3" rx="3.9" ry="3.5" transform="rotate(48 75.5 55.3)"/><ellipse cx="59.6" cy="75.4" rx="5.7" ry="4.1" transform="rotate(142 59.6 75.4)"/><ellipse cx="72.6" cy="75.1" rx="4.4" ry="3.7" transform="rotate(136 72.6 75.1)"/><ellipse cx="116.7" cy="42.7" rx="5.1" ry="3.4" transform="rotate(112 116.7 42.7)"/><ellipse cx="107.4" cy="44.8" rx="3.6" ry="4.3" transform="rotate(157 107.4 44.8)"/><ellipse cx="118.4" cy="51.9" rx="5.3" ry="3.2" transform="rotate(147 118.4 51.9)"/><ellipse cx="112.2" cy="49.9" rx="4.6" ry="4.0" transform="rotate(115 112.2 49.9)"/><ellipse cx="105.6" cy="56.4" rx="4.9" ry="4.0" transform="rotate(165 105.6 56.4)"/><ellipse cx="107.7" cy="37.8" rx="4.4" ry="3.3" transform="rotate(45 107.7 37.8)"/><ellipse cx="113.8" cy="38.2" rx="3.8" ry="3.2" transform="rotate(31 113.8 38.2)"/><ellipse cx="131.7" cy="35.1" rx="5.5" ry="3.5" transform="rotate(102 131.7 35.1)"/><ellipse cx="123.8" cy="36.1" rx="3.6" ry="3.6" transform="rotate(101 123.8 36.1)"/><ellipse cx="124.9" cy="46.0" rx="5.4" ry="3.2" transform="rotate(140 124.9 46.0)"/><ellipse cx="130.4" cy="45.5" rx="3.8" ry="2.5" fill="#fff" transform="rotate(55 130.4 45.5)"/><ellipse cx="111.2" cy="71.6" rx="4.8" ry="3.4" transform="rotate(149 111.2 71.6)"/><ellipse cx="119.0" cy="79.0" rx="3.9" ry="2.7" fill="#fff" transform="rotate(164 119.0 79.0)"/><ellipse cx="107.2" cy="75.3" rx="4.0" ry="3.7" transform="rotate(159 107.2 75.3)"/><ellipse cx="113.4" cy="66.7" rx="5.7" ry="4.3" transform="rotate(30 113.4 66.7)"/><ellipse cx="118.3" cy="73.7" rx="4.4" ry="3.7" transform="rotate(148 118.3 73.7)"/><ellipse cx="109.0" cy="63.8" rx="5.6" ry="4.3" transform="rotate(91 109.0 63.8)"/><ellipse cx="113.7" cy="77.2" rx="4.1" ry="2.4" fill="#fff" transform="rotate(121 113.7 77.2)"/><ellipse cx="122.2" cy="83.8" rx="5.4" ry="3.0" transform="rotate(89 122.2 83.8)"/><ellipse cx="116.7" cy="88.1" rx="4.4" ry="3.8" transform="rotate(70 116.7 88.1)"/><ellipse cx="124.8" cy="88.7" rx="3.9" ry="3.9" transform="rotate(92 124.8 88.7)"/><ellipse cx="11.9" cy="73.0" rx="5.4" ry="3.1" transform="rotate(123 11.9 73.0)"/><ellipse cx="7.1" cy="53.9" rx="3.6" ry="3.6" transform="rotate(90 7.1 53.9)"/><ellipse cx="8.2" cy="67.3" rx="3.9" ry="3.6" transform="rotate(145 8.2 67.3)"/><ellipse cx="1.8" cy="63.6" rx="5.4" ry="4.2" transform="rotate(114 1.8 63.6)"/><ellipse cx="7.2" cy="77.5" rx="3.7" ry="3.9" transform="rotate(77 7.2 77.5)"/><ellipse cx="23.3" cy="74.1" rx="3.8" ry="4.2" transform="rotate(50 23.3 74.1)"/><ellipse cx="20.3" cy="65.6" rx="4.6" ry="4.2" transform="rotate(30 20.3 65.6)"/><ellipse cx="4.7" cy="97.0" rx="4.4" ry="3.4" transform="rotate(114 4.7 97.0)"/><ellipse cx="9.9" cy="88.2" rx="4.3" ry="3.9" transform="rotate(125 9.9 88.2)"/><ellipse cx="4.6" cy="104.7" rx="5.3" ry="3.5" transform="rotate(59 4.6 104.7)"/><ellipse cx="4.4" cy="90.5" rx="5.8" ry="4.3" transform="rotate(76 4.4 90.5)"/><ellipse cx="27.7" cy="84.3" rx="4.9" ry="3.6" transform="rotate(155 27.7 84.3)"/><ellipse cx="33.9" cy="80.5" rx="5.6" ry="3.4" transform="rotate(170 33.9 80.5)"/><ellipse cx="37.3" cy="98.9" rx="3.9" ry="3.4" transform="rotate(109 37.3 98.9)"/><ellipse cx="27.0" cy="98.1" rx="5.7" ry="3.1" transform="rotate(92 27.0 98.1)"/><ellipse cx="24.9" cy="89.0" rx="4.6" ry="3.6" transform="rotate(110 24.9 89.0)"/><ellipse cx="29.4" cy="103.9" rx="5.4" ry="3.9" transform="rotate(103 29.4 103.9)"/><ellipse cx="46.1" cy="108.6" rx="3.7" ry="3.1" fill="#fff" transform="rotate(23 46.1 108.6)"/><ellipse cx="49.3" cy="99.6" rx="4.5" ry="3.3" fill="#fff" transform="rotate(154 49.3 99.6)"/><ellipse cx="40.7" cy="78.0" rx="4.6" ry="4.0" transform="rotate(132 40.7 78.0)"/><ellipse cx="83.1" cy="99.3" rx="5.2" ry="4.2" transform="rotate(17 83.1 99.3)"/><ellipse cx="88.1" cy="105.7" rx="3.8" ry="3.8" transform="rotate(158 88.1 105.7)"/><ellipse cx="79.5" cy="90.0" rx="5.0" ry="3.7" transform="rotate(27 79.5 90.0)"/><ellipse cx="72.1" cy="96.5" rx="3.9" ry="3.5" fill="#fff" transform="rotate(118 72.1 96.5)"/><ellipse cx="91.6" cy="96.8" rx="5.1" ry="4.1" transform="rotate(151 91.6 96.8)"/><ellipse cx="88.4" cy="92.6" rx="5.3" ry="3.1" transform="rotate(75 88.4 92.6)"/><ellipse cx="46.5" cy="115.3" rx="4.7" ry="3.8" transform="rotate(93 46.5 115.3)"/><ellipse cx="52.9" cy="122.8" rx="4.4" ry="4.0" transform="rotate(49 52.9 122.8)"/><ellipse cx="54.4" cy="114.1" rx="4.1" ry="4.0" transform="rotate(80 54.4 114.1)"/><ellipse cx="79.6" cy="125.1" rx="5.1" ry="4.1" transform="rotate(14 79.6 125.1)"/><ellipse cx="73.4" cy="119.8" rx="5.3" ry="3.2" transform="rotate(48 73.4 119.8)"/><ellipse cx="41.3" cy="124.5" rx="5.3" ry="3.8" transform="rotate(146 41.3 124.5)"/><ellipse cx="163.0" cy="61.9" rx="4.5" ry="3.6" transform="rotate(52 163.0 61.9)"/><ellipse cx="156.6" cy="65.9" rx="3.8" ry="3.6" transform="rotate(113 156.6 65.9)"/><ellipse cx="171.5" cy="66.9" rx="4.3" ry="3.5" transform="rotate(35 171.5 66.9)"/><ellipse cx="183.2" cy="72.3" rx="4.6" ry="4.4" transform="rotate(89 183.2 72.3)"/><ellipse cx="184.5" cy="66.5" rx="5.0" ry="3.7" transform="rotate(95 184.5 66.5)"/><ellipse cx="176.2" cy="72.4" rx="4.5" ry="3.8" transform="rotate(129 176.2 72.4)"/><ellipse cx="188.5" cy="74.4" rx="5.8" ry="3.1" transform="rotate(77 188.5 74.4)"/><ellipse cx="190.1" cy="92.8" rx="5.3" ry="3.2" transform="rotate(143 190.1 92.8)"/><ellipse cx="193.3" cy="83.3" rx="4.1" ry="4.0" transform="rotate(103 193.3 83.3)"/><ellipse cx="186.3" cy="88.2" rx="5.4" ry="3.2" transform="rotate(22 186.3 88.2)"/><ellipse cx="132.3" cy="93.5" rx="4.5" ry="4.0" transform="rotate(35 132.3 93.5)"/><ellipse cx="131.7" cy="85.5" rx="4.9" ry="4.3" transform="rotate(6 131.7 85.5)"/><ellipse cx="136.5" cy="90.0" rx="5.7" ry="4.0" transform="rotate(122 136.5 90.0)"/><ellipse cx="147.2" cy="100.6" rx="4.6" ry="4.0" transform="rotate(148 147.2 100.6)"/><ellipse cx="160.0" cy="88.1" rx="5.3" ry="3.2" transform="rotate(149 160.0 88.1)"/><ellipse cx="153.4" cy="101.6" rx="4.9" ry="3.3" transform="rotate(65 153.4 101.6)"/><ellipse cx="158.4" cy="103.4" rx="3.8" ry="3.5" transform="rotate(149 158.4 103.4)"/><ellipse cx="144.8" cy="91.2" rx="3.2" ry="3.3" fill="#fff" transform="rotate(2 144.8 91.2)"/><ellipse cx="168.9" cy="103.7" rx="3.8" ry="4.0" transform="rotate(38 168.9 103.7)"/><ellipse cx="145.0" cy="106.3" rx="5.1" ry="3.8" transform="rotate(83 145.0 106.3)"/><ellipse cx="170.5" cy="97.6" rx="5.0" ry="3.7" transform="rotate(2 170.5 97.6)"/><ellipse cx="151.0" cy="97.0" rx="3.9" ry="3.9" transform="rotate(122 151.0 97.0)"/><ellipse cx="156.9" cy="115.9" rx="4.5" ry="3.5" transform="rotate(135 156.9 115.9)"/><ellipse cx="158.2" cy="122.4" rx="3.5" ry="3.4" fill="#fff" transform="rotate(179 158.2 122.4)"/><ellipse cx="166.0" cy="115.7" rx="4.5" ry="4.4" transform="rotate(132 166.0 115.7)"/><ellipse cx="148.7" cy="119.5" rx="5.7" ry="4.3" transform="rotate(162 148.7 119.5)"/><ellipse cx="149.5" cy="124.9" rx="4.1" ry="3.3" fill="#fff" transform="rotate(120 149.5 124.9)"/><ellipse cx="161.9" cy="126.4" rx="5.5" ry="4.4" transform="rotate(95 161.9 126.4)"/><ellipse cx="214.4" cy="96.3" rx="5.5" ry="3.7" transform="rotate(24 214.4 96.3)"/><ellipse cx="202.2" cy="112.8" rx="4.2" ry="4.1" transform="rotate(115 202.2 112.8)"/><ellipse cx="190.1" cy="110.3" rx="4.6" ry="3.0" fill="#fff" transform="rotate(173 190.1 110.3)"/><ellipse cx="191.3" cy="115.4" rx="3.9" ry="3.7" transform="rotate(154 191.3 115.4)"/><ellipse cx="182.7" cy="119.2" rx="3.7" ry="3.8" transform="rotate(101 182.7 119.2)"/><ellipse cx="239.4" cy="101.6" rx="5.1" ry="3.3" transform="rotate(41 239.4 101.6)"/><ellipse cx="116.0" cy="96.0" rx="4.4" ry="3.8" transform="rotate(68 116.0 96.0)"/><ellipse cx="22.0" cy="130.0" rx="4.6" ry="4.0" transform="rotate(89 22.0 130.0)"/><ellipse cx="4.6" cy="131.4" rx="4.4" ry="4.2" transform="rotate(145 4.6 131.4)"/><ellipse cx="15.1" cy="129.9" rx="5.0" ry="4.1" transform="rotate(130 15.1 129.9)"/><ellipse cx="11.9" cy="135.2" rx="5.6" ry="3.8" transform="rotate(141 11.9 135.2)"/><ellipse cx="8.6" cy="124.4" rx="4.3" ry="3.4" transform="rotate(142 8.6 124.4)"/><ellipse cx="33.3" cy="131.9" rx="4.5" ry="3.2" transform="rotate(139 33.3 131.9)"/><ellipse cx="42.9" cy="138.2" rx="5.5" ry="3.3" transform="rotate(35 42.9 138.2)"/><ellipse cx="55.8" cy="140.1" rx="4.2" ry="3.7" transform="rotate(5 55.8 140.1)"/><ellipse cx="48.7" cy="142.5" rx="5.5" ry="4.3" transform="rotate(90 48.7 142.5)"/><ellipse cx="68.1" cy="143.3" rx="4.6" ry="3.6" transform="rotate(44 68.1 143.3)"/><ellipse cx="21.9" cy="161.2" rx="4.6" ry="4.1" transform="rotate(157 21.9 161.2)"/><ellipse cx="15.4" cy="164.3" rx="5.7" ry="3.4" transform="rotate(32 15.4 164.3)"/><ellipse cx="31.0" cy="158.6" rx="4.2" ry="3.8" transform="rotate(15 31.0 158.6)"/><ellipse cx="15.9" cy="158.1" rx="5.2" ry="3.9" transform="rotate(105 15.9 158.1)"/><ellipse cx="50.0" cy="165.1" rx="4.2" ry="3.2" transform="rotate(162 50.0 165.1)"/><ellipse cx="16.5" cy="173.2" rx="5.5" ry="4.3" transform="rotate(138 16.5 173.2)"/><ellipse cx="43.8" cy="175.6" rx="4.3" ry="3.4" transform="rotate(95 43.8 175.6)"/><ellipse cx="98.4" cy="134.9" rx="5.7" ry="3.2" transform="rotate(141 98.4 134.9)"/><ellipse cx="87.0" cy="134.6" rx="3.7" ry="3.8" transform="rotate(119 87.0 134.6)"/><ellipse cx="100.4" cy="139.9" rx="4.2" ry="3.2" transform="rotate(43 100.4 139.9)"/><ellipse cx="85.2" cy="152.6" rx="3.9" ry="3.3" transform="rotate(110 85.2 152.6)"/><ellipse cx="93.5" cy="159.5" rx="4.8" ry="3.5" transform="rotate(175 93.5 159.5)"/><ellipse cx="90.8" cy="148.8" rx="3.9" ry="3.9" transform="rotate(91 90.8 148.8)"/><ellipse cx="96.5" cy="148.4" rx="4.9" ry="3.1" transform="rotate(91 96.5 148.4)"/><ellipse cx="74.0" cy="154.7" rx="5.7" ry="4.0" transform="rotate(130 74.0 154.7)"/><ellipse cx="77.8" cy="157.9" rx="4.5" ry="3.0" fill="#fff" transform="rotate(109 77.8 157.9)"/><ellipse cx="71.7" cy="165.1" rx="5.7" ry="3.8" transform="rotate(106 71.7 165.1)"/><ellipse cx="59.4" cy="169.6" rx="5.8" ry="3.5" transform="rotate(75 59.4 169.6)"/><ellipse cx="66.9" cy="172.1" rx="4.0" ry="4.0" transform="rotate(33 66.9 172.1)"/><ellipse cx="116.1" cy="155.2" rx="5.8" ry="3.4" transform="rotate(64 116.1 155.2)"/><ellipse cx="113.5" cy="162.7" rx="4.2" ry="3.1" fill="#fff" transform="rotate(40 113.5 162.7)"/><ellipse cx="109.7" cy="156.2" rx="3.1" ry="3.1" fill="#fff" transform="rotate(42 109.7 156.2)"/><ellipse cx="114.2" cy="149.9" rx="4.3" ry="3.3" transform="rotate(148 114.2 149.9)"/><ellipse cx="104.7" cy="153.9" rx="4.0" ry="3.4" transform="rotate(46 104.7 153.9)"/><ellipse cx="99.6" cy="169.8" rx="4.2" ry="3.5" transform="rotate(170 99.6 169.8)"/><ellipse cx="96.7" cy="174.0" rx="5.3" ry="3.6" transform="rotate(39 96.7 174.0)"/><ellipse cx="128.8" cy="154.5" rx="4.4" ry="3.6" transform="rotate(61 128.8 154.5)"/><ellipse cx="130.5" cy="142.8" rx="4.4" ry="3.9" transform="rotate(18 130.5 142.8)"/><ellipse cx="122.8" cy="154.3" rx="5.5" ry="3.6" transform="rotate(73 122.8 154.3)"/><ellipse cx="124.5" cy="143.7" rx="3.6" ry="3.1" transform="rotate(9 124.5 143.7)"/><ellipse cx="135.4" cy="152.4" rx="3.9" ry="4.2" transform="rotate(96 135.4 152.4)"/><ellipse cx="140.7" cy="159.0" rx="4.9" ry="4.1" transform="rotate(152 140.7 159.0)"/><ellipse cx="143.9" cy="147.8" rx="4.2" ry="4.4" transform="rotate(113 143.9 147.8)"/><ellipse cx="134.4" cy="158.8" rx="5.2" ry="3.9" transform="rotate(30 134.4 158.8)"/><ellipse cx="136.6" cy="141.4" rx="4.3" ry="2.6" fill="#fff" transform="rotate(99 136.6 141.4)"/><ellipse cx="149.3" cy="154.1" rx="4.6" ry="3.2" fill="#fff" transform="rotate(173 149.3 154.1)"/><ellipse cx="129.5" cy="163.2" rx="3.7" ry="3.3" fill="#fff" transform="rotate(74 129.5 163.2)"/><ellipse cx="129.2" cy="168.9" rx="3.1" ry="3.5" fill="#fff" transform="rotate(176 129.2 168.9)"/><ellipse cx="152.9" cy="150.2" rx="4.7" ry="3.1" transform="rotate(131 152.9 150.2)"/><ellipse cx="157.5" cy="164.2" rx="4.1" ry="4.1" transform="rotate(85 157.5 164.2)"/><ellipse cx="159.3" cy="148.8" rx="3.6" ry="3.9" transform="rotate(5 159.3 148.8)"/><ellipse cx="166.7" cy="155.2" rx="4.3" ry="4.3" transform="rotate(31 166.7 155.2)"/><ellipse cx="158.9" cy="158.3" rx="4.2" ry="3.8" transform="rotate(179 158.9 158.3)"/><ellipse cx="149.8" cy="164.5" rx="4.0" ry="4.2" transform="rotate(134 149.8 164.5)"/><ellipse cx="154.6" cy="170.7" rx="3.1" ry="2.7" fill="#fff" transform="rotate(146 154.6 170.7)"/><ellipse cx="160.2" cy="140.2" rx="5.4" ry="3.9" transform="rotate(22 160.2 140.2)"/><ellipse cx="172.6" cy="135.1" rx="3.8" ry="4.2" transform="rotate(126 172.6 135.1)"/><ellipse cx="185.4" cy="183.2" rx="4.1" ry="4.1" transform="rotate(105 185.4 183.2)"/><ellipse cx="169.7" cy="181.8" rx="4.7" ry="4.2" transform="rotate(101 169.7 181.8)"/><ellipse cx="171.6" cy="175.1" rx="4.0" ry="3.8" transform="rotate(160 171.6 175.1)"/><ellipse cx="176.3" cy="183.4" rx="4.1" ry="3.0" fill="#fff" transform="rotate(14 176.3 183.4)"/><ellipse cx="193.8" cy="183.3" rx="4.6" ry="3.4" transform="rotate(44 193.8 183.3)"/><ellipse cx="196.3" cy="178.6" rx="4.6" ry="4.0" transform="rotate(66 196.3 178.6)"/><ellipse cx="208.3" cy="174.7" rx="4.9" ry="3.2" transform="rotate(7 208.3 174.7)"/><ellipse cx="138.9" cy="181.0" rx="5.5" ry="3.5" transform="rotate(163 138.9 181.0)"/><ellipse cx="144.6" cy="185.7" rx="4.0" ry="3.1" transform="rotate(130 144.6 185.7)"/><ellipse cx="155.6" cy="181.8" rx="5.2" ry="3.3" transform="rotate(90 155.6 181.8)"/><ellipse cx="154.6" cy="186.7" rx="5.3" ry="3.9" transform="rotate(91 154.6 186.7)"/><ellipse cx="131.8" cy="194.4" rx="4.4" ry="3.6" transform="rotate(19 131.8 194.4)"/><ellipse cx="241.5" cy="155.6" rx="4.3" ry="4.3" transform="rotate(163 241.5 155.6)"/><ellipse cx="249.7" cy="151.9" rx="5.0" ry="3.3" transform="rotate(84 249.7 151.9)"/><ellipse cx="246.5" cy="162.4" rx="4.2" ry="2.7" fill="#fff" transform="rotate(149 246.5 162.4)"/><ellipse cx="224.5" cy="182.0" rx="5.4" ry="4.3" transform="rotate(101 224.5 182.0)"/><ellipse cx="238.5" cy="171.7" rx="4.3" ry="3.6" transform="rotate(139 238.5 171.7)"/><ellipse cx="237.5" cy="179.2" rx="3.6" ry="2.6" fill="#fff" transform="rotate(60 237.5 179.2)"/><ellipse cx="231.9" cy="172.8" rx="3.6" ry="4.3" transform="rotate(55 231.9 172.8)"/><ellipse cx="229.7" cy="165.6" rx="4.5" ry="3.6" transform="rotate(162 229.7 165.6)"/><ellipse cx="243.6" cy="183.7" rx="5.1" ry="3.7" transform="rotate(14 243.6 183.7)"/><ellipse cx="248.6" cy="184.1" rx="4.3" ry="3.1" transform="rotate(42 248.6 184.1)"/><ellipse cx="250.2" cy="196.0" rx="4.7" ry="3.6" transform="rotate(10 250.2 196.0)"/><ellipse cx="249.7" cy="202.1" rx="5.6" ry="4.2" transform="rotate(161 249.7 202.1)"/><ellipse cx="160.4" cy="207.0" rx="4.1" ry="4.3" transform="rotate(39 160.4 207.0)"/><ellipse cx="155.9" cy="198.5" rx="5.2" ry="3.7" transform="rotate(125 155.9 198.5)"/><ellipse cx="165.2" cy="203.3" rx="5.2" ry="3.2" transform="rotate(72 165.2 203.3)"/><ellipse cx="147.5" cy="199.5" rx="3.8" ry="3.4" fill="#fff" transform="rotate(86 147.5 199.5)"/><ellipse cx="165.1" cy="196.8" rx="3.1" ry="3.0" fill="#fff" transform="rotate(79 165.1 196.8)"/><ellipse cx="184.5" cy="205.6" rx="3.6" ry="2.8" fill="#fff" transform="rotate(170 184.5 205.6)"/><ellipse cx="191.5" cy="199.2" rx="3.9" ry="2.7" fill="#fff" transform="rotate(171 191.5 199.2)"/><ellipse cx="178.6" cy="202.5" rx="3.8" ry="3.4" fill="#fff" transform="rotate(107 178.6 202.5)"/><ellipse cx="191.5" cy="206.9" rx="3.6" ry="3.5" transform="rotate(140 191.5 206.9)"/><ellipse cx="212.6" cy="197.7" rx="4.3" ry="3.1" transform="rotate(81 212.6 197.7)"/><ellipse cx="206.5" cy="193.3" rx="4.4" ry="2.9" fill="#fff" transform="rotate(76 206.5 193.3)"/><ellipse cx="140.7" cy="212.3" rx="4.8" ry="3.3" transform="rotate(120 140.7 212.3)"/><ellipse cx="152.7" cy="203.5" rx="5.8" ry="3.7" transform="rotate(64 152.7 203.5)"/><ellipse cx="143.8" cy="204.6" rx="4.4" ry="3.1" transform="rotate(130 143.8 204.6)"/><ellipse cx="148.0" cy="216.0" rx="5.3" ry="4.2" transform="rotate(12 148.0 216.0)"/><ellipse cx="185.3" cy="212.7" rx="4.1" ry="3.3" transform="rotate(43 185.3 212.7)"/><ellipse cx="180.0" cy="226.6" rx="5.0" ry="3.1" transform="rotate(72 180.0 226.6)"/><ellipse cx="172.2" cy="221.6" rx="3.7" ry="3.0" fill="#fff" transform="rotate(162 172.2 221.6)"/><ellipse cx="175.7" cy="210.0" rx="3.7" ry="4.1" transform="rotate(47 175.7 210.0)"/><ellipse cx="183.6" cy="222.8" rx="5.1" ry="3.9" transform="rotate(40 183.6 222.8)"/><ellipse cx="202.5" cy="212.0" rx="3.8" ry="3.3" fill="#fff" transform="rotate(37 202.5 212.0)"/><ellipse cx="213.5" cy="213.1" rx="5.2" ry="4.0" transform="rotate(145 213.5 213.1)"/><ellipse cx="199.9" cy="206.9" rx="3.7" ry="3.3" transform="rotate(99 199.9 206.9)"/><ellipse cx="200.0" cy="222.0" rx="4.0" ry="3.6" transform="rotate(162 200.0 222.0)"/><ellipse cx="195.8" cy="215.2" rx="5.1" ry="3.7" transform="rotate(69 195.8 215.2)"/><ellipse cx="206.1" cy="220.9" rx="3.6" ry="3.5" transform="rotate(161 206.1 220.9)"/><ellipse cx="187.6" cy="227.9" rx="5.1" ry="4.3" transform="rotate(92 187.6 227.9)"/><ellipse cx="197.3" cy="228.4" rx="4.5" ry="3.1" transform="rotate(38 197.3 228.4)"/><ellipse cx="210.6" cy="236.3" rx="4.3" ry="3.4" transform="rotate(6 210.6 236.3)"/><ellipse cx="206.7" cy="232.1" rx="5.2" ry="3.7" transform="rotate(43 206.7 232.1)"/><ellipse cx="206.5" cy="227.0" rx="4.2" ry="3.5" transform="rotate(13 206.5 227.0)"/><ellipse cx="192.5" cy="226.4" rx="3.8" ry="2.8" fill="#fff" transform="rotate(52 192.5 226.4)"/><ellipse cx="188.2" cy="237.2" rx="5.4" ry="3.1" transform="rotate(9 188.2 237.2)"/><ellipse cx="225.5" cy="207.9" rx="3.1" ry="3.0" fill="#fff" transform="rotate(101 225.5 207.9)"/><ellipse cx="229.8" cy="205.1" rx="5.0" ry="3.2" transform="rotate(124 229.8 205.1)"/><ellipse cx="231.6" cy="200.3" rx="5.3" ry="3.0" transform="rotate(17 231.6 200.3)"/><ellipse cx="227.7" cy="214.7" rx="4.9" ry="3.5" transform="rotate(52 227.7 214.7)"/><ellipse cx="241.4" cy="225.9" rx="5.6" ry="3.3" transform="rotate(143 241.4 225.9)"/><ellipse cx="240.1" cy="212.2" rx="3.7" ry="3.8" transform="rotate(80 240.1 212.2)"/><ellipse cx="247.4" cy="216.2" rx="5.1" ry="4.1" transform="rotate(150 247.4 216.2)"/><ellipse cx="233.9" cy="232.4" rx="5.3" ry="3.0" transform="rotate(74 233.9 232.4)"/><ellipse cx="241.3" cy="235.3" rx="5.1" ry="3.3" transform="rotate(174 241.3 235.3)"/><ellipse cx="237.3" cy="239.7" rx="4.9" ry="3.8" transform="rotate(43 237.3 239.7)"/><ellipse cx="247.6" cy="235.6" rx="3.6" ry="3.0" transform="rotate(52 247.6 235.6)"/><ellipse cx="224.3" cy="249.8" rx="5.5" ry="4.0" transform="rotate(15 224.3 249.8)"/><ellipse cx="206.9" cy="246.2" rx="3.7" ry="3.8" transform="rotate(43 206.9 246.2)"/><ellipse cx="196.2" cy="251.1" rx="3.8" ry="3.3" transform="rotate(130 196.2 251.1)"/><ellipse cx="135.2" cy="240.4" rx="5.0" ry="4.0" transform="rotate(7 135.2 240.4)"/><ellipse cx="134.8" cy="233.9" rx="4.0" ry="3.4" transform="rotate(179 134.8 233.9)"/><ellipse cx="146.1" cy="233.7" rx="3.6" ry="2.9" fill="#fff" transform="rotate(3 146.1 233.7)"/><ellipse cx="161.2" cy="235.3" rx="4.5" ry="3.0" transform="rotate(96 161.2 235.3)"/><ellipse cx="127.5" cy="246.6" rx="5.7" ry="4.2" transform="rotate(111 127.5 246.6)"/><ellipse cx="19.1" cy="196.3" rx="3.7" ry="2.8" fill="#fff" transform="rotate(59 19.1 196.3)"/><ellipse cx="20.1" cy="205.5" rx="5.8" ry="3.3" transform="rotate(44 20.1 205.5)"/><ellipse cx="17.8" cy="219.4" rx="5.0" ry="3.5" transform="rotate(11 17.8 219.4)"/><ellipse cx="17.1" cy="214.0" rx="5.0" ry="4.3" transform="rotate(106 17.1 214.0)"/><ellipse cx="21.9" cy="215.9" rx="5.3" ry="4.1" transform="rotate(31 21.9 215.9)"/><ellipse cx="19.5" cy="224.9" rx="4.1" ry="4.2" transform="rotate(137 19.5 224.9)"/><ellipse cx="10.1" cy="211.1" rx="4.2" ry="3.3" transform="rotate(107 10.1 211.1)"/><ellipse cx="15.7" cy="241.1" rx="3.6" ry="3.3" transform="rotate(146 15.7 241.1)"/><ellipse cx="41.0" cy="234.3" rx="3.8" ry="3.9" transform="rotate(74 41.0 234.3)"/><ellipse cx="42.2" cy="225.2" rx="4.1" ry="4.2" transform="rotate(164 42.2 225.2)"/><ellipse cx="47.3" cy="233.6" rx="4.4" ry="3.1" transform="rotate(134 47.3 233.6)"/><ellipse cx="36.9" cy="219.6" rx="5.7" ry="3.5" transform="rotate(151 36.9 219.6)"/><ellipse cx="46.7" cy="227.8" rx="5.7" ry="4.2" transform="rotate(142 46.7 227.8)"/><ellipse cx="53.2" cy="216.7" rx="3.9" ry="3.3" fill="#fff" transform="rotate(13 53.2 216.7)"/><ellipse cx="60.8" cy="214.0" rx="4.4" ry="3.1" transform="rotate(166 60.8 214.0)"/><ellipse cx="69.1" cy="214.9" rx="4.7" ry="3.5" transform="rotate(51 69.1 214.9)"/><ellipse cx="57.9" cy="224.9" rx="3.3" ry="3.4" fill="#fff" transform="rotate(95 57.9 224.9)"/><ellipse cx="62.1" cy="241.0" rx="4.9" ry="4.0" transform="rotate(60 62.1 241.0)"/><ellipse cx="67.9" cy="242.4" rx="3.7" ry="3.4" transform="rotate(113 67.9 242.4)"/><ellipse cx="56.3" cy="239.9" rx="4.5" ry="3.8" transform="rotate(21 56.3 239.9)"/><ellipse cx="77.9" cy="234.0" rx="4.7" ry="3.3" transform="rotate(147 77.9 234.0)"/><ellipse cx="84.4" cy="233.4" rx="3.7" ry="2.7" fill="#fff" transform="rotate(148 84.4 233.4)"/><ellipse cx="92.9" cy="227.1" rx="4.6" ry="2.8" fill="#fff" transform="rotate(126 92.9 227.1)"/><ellipse cx="42.5" cy="250.6" rx="4.9" ry="4.1" transform="rotate(115 42.5 250.6)"/><ellipse cx="78.4" cy="242.0" rx="3.7" ry="3.9" transform="rotate(136 78.4 242.0)"/></g><ellipse cx="241" cy="155" rx="6" ry="7" fill="#fff"/><ellipse cx="249" cy="157" rx="4" ry="3" fill="#fff"/></svg></g><rect x="372.5" y="385.5" width="418" height="84" fill="none" stroke="#e9e9e9"/><rect x="371.5" y="384.5" width="418" height="84" fill="none" stroke="#828282"/><rect x="129" y="610" width="740" height="21" fill="#c3c3c3"/><path d="M129 610H869L867 612H131V629L129 631Z" fill="#e9e9e9"/><path d="M869 631H129L131 629H867V612L869 610Z" fill="#6e6e6e"/><g filter="url(#noop)"><text class="m" x="133" y="45" textLength="24" lengthAdjust="spacingAndGlyphs">File</text><text class="m" x="234" y="88" textLength="60" lengthAdjust="spacingAndGlyphs">PARAMETERS</text><text class="m" x="142" y="119" textLength="78" lengthAdjust="spacingAndGlyphs">Smooth width:</text><text class="m" x="235" y="119" textLength="6" lengthAdjust="spacingAndGlyphs">3</text><text class="m" x="142" y="161" textLength="72" lengthAdjust="spacingAndGlyphs">Max. Thresh:</text><text class="m" x="229" y="161" textLength="36" lengthAdjust="spacingAndGlyphs">400.00</text><text class="m" x="142" y="203" textLength="84" lengthAdjust="spacingAndGlyphs">Define Thresh:</text><text class="m" x="241" y="203" textLength="24" lengthAdjust="spacingAndGlyphs">0.60</text><text class="m" x="142" y="245" textLength="78" lengthAdjust="spacingAndGlyphs">Max # pixels:</text><text class="m" x="235" y="245" textLength="30" lengthAdjust="spacingAndGlyphs">10000</text><text class="m" x="142" y="287" textLength="78" lengthAdjust="spacingAndGlyphs">Min # pixels:</text><text class="m" x="235" y="287" textLength="12" lengthAdjust="spacingAndGlyphs">10</text><text class="m" x="142" y="329" textLength="66" lengthAdjust="spacingAndGlyphs">Min intens:</text><text class="m" x="223" y="329" textLength="42" lengthAdjust="spacingAndGlyphs">169.190</text><text class="m" x="161" y="367" textLength="78" lengthAdjust="spacingAndGlyphs">Median Filter</text><text class="m" x="161" y="395" textLength="114" lengthAdjust="spacingAndGlyphs">Define with circles</text><text class="m" x="161" y="423" textLength="132" lengthAdjust="spacingAndGlyphs">Max thresh is absolute</text><text class="m" x="138" y="466" textLength="72" lengthAdjust="spacingAndGlyphs">Zoom Factor:</text><text class="m" x="230" y="466" textLength="30" lengthAdjust="spacingAndGlyphs">1.000</text><text class="m" x="156" y="504" textLength="84" lengthAdjust="spacingAndGlyphs">Show Log Image</text><text class="m" x="228" y="535" textLength="36" lengthAdjust="spacingAndGlyphs">DEFINE</text><text class="m" x="198" y="563" textLength="96" lengthAdjust="spacingAndGlyphs">Re-display Image</text><text class="m" x="204" y="591" textLength="84" lengthAdjust="spacingAndGlyphs">Show particles</text><text class="m" x="452" y="377" textLength="198" lengthAdjust="spacingAndGlyphs">X=222  Y=244  Image Value=777.889</text><text class="m" x="554" y="402" textLength="126" lengthAdjust="spacingAndGlyphs">340 Particles Defined</text><text class="m" x="572" y="422" textLength="90" lengthAdjust="spacingAndGlyphs">Particle #: 146</text><text class="m" x="533" y="442" textLength="168" lengthAdjust="spacingAndGlyphs">40 pixels    X: 223   Y: 241</text><text class="m" x="461" y="462" textLength="252" lengthAdjust="spacingAndGlyphs">Min: 647   Max: 1247   Aver: 923.000   A/B</text><text class="m" x="486" y="625" textLength="24" lengthAdjust="spacingAndGlyphs">QUIT</text></g><g shape-rendering="geometricPrecision"><path d="M-1 185V172a9 9 0 0 1 9 -9H110a9 9 0 0 1 9 9V185Z" fill="#f6f6f6" stroke="#c9c9c9"/></g><rect x="-1" y="185" width="120" height="435" fill="#c3c3c3"/><rect x="-1" y="184" width="120" height="1" fill="#dedede"/><g shape-rendering="geometricPrecision"><circle cx="13" cy="174" r="5.5" fill="#d4d4d4" stroke="#c4c4c4"/><circle cx="33" cy="174" r="5.5" fill="#d4d4d4" stroke="#c4c4c4"/><circle cx="53" cy="174" r="5.5" fill="#d4d4d4" stroke="#c4c4c4"/></g><g shape-rendering="geometricPrecision" filter="url(#noop)"><rect x="66.5" y="168.5" width="12" height="13" fill="#fafafa" stroke="#cfcfcf"/><text x="72.5" y="180" text-anchor="middle" font-family="Liberation Serif,serif" font-size="14" fill="#555">X</text></g><rect x="119" y="166" width="1" height="454" fill="#1a1a1a"/><rect x="0" y="185" width="119" height="32" fill="#c3c3c3"/><path d="M0 185H119L117 187H2V215L0 217Z" fill="#e9e9e9"/><path d="M119 217H0L2 215H117V187L119 185Z" fill="#6e6e6e"/><rect x="2" y="214" width="115" height="1" fill="#6e6e6e"/><rect x="0" y="217" width="119" height="1" fill="#dadada"/><rect x="7" y="226" width="104" height="21" fill="#c3c3c3"/><path d="M7 226H111L109 228H9V245L7 247Z" fill="#e9e9e9"/><path d="M111 247H7L9 245H109V228L111 226Z" fill="#6e6e6e"/><rect x="7" y="254" width="104" height="21" fill="#c3c3c3"/><path d="M7 254H111L109 256H9V273L7 275Z" fill="#e9e9e9"/><path d="M111 275H7L9 273H109V256L111 254Z" fill="#6e6e6e"/><rect x="7" y="282" width="104" height="21" fill="#c3c3c3"/><path d="M7 282H111L109 284H9V301L7 303Z" fill="#e9e9e9"/><path d="M111 303H7L9 301H109V284L111 282Z" fill="#6e6e6e"/><rect x="7" y="310" width="104" height="21" fill="#c3c3c3"/><path d="M7 310H111L109 312H9V329L7 331Z" fill="#e9e9e9"/><path d="M111 331H7L9 329H109V312L111 310Z" fill="#6e6e6e"/><rect x="7" y="338" width="104" height="21" fill="#c3c3c3"/><path d="M7 338H111L109 340H9V357L7 359Z" fill="#e9e9e9"/><path d="M111 359H7L9 357H109V340L111 338Z" fill="#6e6e6e"/><rect x="7" y="366" width="104" height="21" fill="#c3c3c3"/><path d="M7 366H111L109 368H9V385L7 387Z" fill="#e9e9e9"/><path d="M111 387H7L9 385H109V368L111 366Z" fill="#6e6e6e"/><rect x="7" y="394" width="104" height="21" fill="#c3c3c3"/><path d="M7 394H111L109 396H9V413L7 415Z" fill="#e9e9e9"/><path d="M111 415H7L9 413H109V396L111 394Z" fill="#6e6e6e"/><rect x="7" y="422" width="104" height="21" fill="#c3c3c3"/><path d="M7 422H111L109 424H9V441L7 443Z" fill="#e9e9e9"/><path d="M111 443H7L9 441H109V424L111 422Z" fill="#6e6e6e"/><rect x="7" y="450" width="104" height="21" fill="#c3c3c3"/><path d="M7 450H111L109 452H9V469L7 471Z" fill="#e9e9e9"/><path d="M111 471H7L9 469H109V452L111 450Z" fill="#6e6e6e"/><rect x="7" y="478" width="104" height="21" fill="#c3c3c3"/><path d="M7 478H111L109 480H9V497L7 499Z" fill="#e9e9e9"/><path d="M111 499H7L9 497H109V480L111 478Z" fill="#6e6e6e"/><rect x="7" y="506" width="104" height="21" fill="#c3c3c3"/><path d="M7 506H111L109 508H9V525L7 527Z" fill="#e9e9e9"/><path d="M111 527H7L9 525H109V508L111 506Z" fill="#6e6e6e"/><rect x="7" y="534" width="104" height="21" fill="#c3c3c3"/><path d="M7 534H111L109 536H9V553L7 555Z" fill="#e9e9e9"/><path d="M111 555H7L9 553H109V536L111 534Z" fill="#6e6e6e"/><rect x="7" y="562" width="104" height="21" fill="#c3c3c3"/><path d="M7 562H111L109 564H9V581L7 583Z" fill="#e9e9e9"/><path d="M111 583H7L9 581H109V564L111 562Z" fill="#6e6e6e"/><rect x="7" y="590" width="104" height="21" fill="#c3c3c3"/><path d="M7 590H111L109 592H9V609L7 611Z" fill="#e9e9e9"/><path d="M111 611H7L9 609H109V592L111 590Z" fill="#6e6e6e"/><g filter="url(#noop)"><text class="m" x="11" y="205" textLength="30" lengthAdjust="spacingAndGlyphs">Stuff</text><text class="m" x="57" y="205" textLength="42" lengthAdjust="spacingAndGlyphs">Correct</text><text class="m" x="25.5" y="241" textLength="66" lengthAdjust="spacingAndGlyphs">LOAD IMAGES</text><text class="m" x="16.5" y="269" textLength="84" lengthAdjust="spacingAndGlyphs">DISPLAY IMAGES</text><text class="m" x="19.5" y="297" textLength="78" lengthAdjust="spacingAndGlyphs">DEFINE RATIOS</text><text class="m" x="22.5" y="325" textLength="72" lengthAdjust="spacingAndGlyphs">RATIO IMAGES</text><text class="m" x="25.5" y="353" textLength="66" lengthAdjust="spacingAndGlyphs">DEFINE ROIs</text><text class="m" x="10.5" y="381" textLength="96" lengthAdjust="spacingAndGlyphs">CALCULATE RATIOS</text><text class="m" x="25.5" y="409" textLength="66" lengthAdjust="spacingAndGlyphs">SAVE IMAGES</text><text class="m" x="40.5" y="437" textLength="36" lengthAdjust="spacingAndGlyphs">STITCH</text><text class="m" x="46.5" y="465" textLength="24" lengthAdjust="spacingAndGlyphs">AUTO</text><text class="m" x="49.5" y="493" textLength="18" lengthAdjust="spacingAndGlyphs">RGB</text><text class="m" x="28.5" y="521" textLength="60" lengthAdjust="spacingAndGlyphs">PIXEL PLOT</text><text class="m" x="37.5" y="549" textLength="42" lengthAdjust="spacingAndGlyphs">BUFFERS</text><text class="m" x="34.5" y="577" textLength="48" lengthAdjust="spacingAndGlyphs">DATABASE</text><text class="m" x="46.5" y="605" textLength="24" lengthAdjust="spacingAndGlyphs">DONE</text></g><g shape-rendering="geometricPrecision"><rect x="104" y="605" width="15" height="15" fill="#fbfbfb"/><path d="M107 619L118 608M111 619L118 612M115 619L118 616" stroke="#8c8c8c" fill="none"/></g><defs><linearGradient id="strip" x1="0" y1="0" x2="0" y2="1"><stop offset="0" stop-color="#aaa"/><stop offset=".04" stop-color="#b0b0b0"/><stop offset=".07" stop-color="#f0f0f0"/><stop offset=".11" stop-color="#f4f4f4"/><stop offset=".2" stop-color="#999"/><stop offset=".27" stop-color="#333"/><stop offset=".31" stop-color="#0a0a0a"/><stop offset=".36" stop-color="#444"/><stop offset=".6" stop-color="#5a5a5a"/><stop offset=".82" stop-color="#a0a0a0"/><stop offset=".92" stop-color="#d8d8d8"/><stop offset="1" stop-color="#fff"/></linearGradient></defs><rect x="698" y="639" width="9" height="398" fill="url(#strip)"/><rect x="1816" y="3" width="1" height="278" fill="#111"/><rect x="1816" y="281" width="1" height="684" fill="#a2a2a2"/><g shape-rendering="geometricPrecision"><path d="M707 25V12a9 9 0 0 1 9 -9H1807a9 9 0 0 1 9 9V25Z" fill="#f6f6f6" stroke="#c9c9c9"/></g><rect x="707" y="25" width="1109" height="940" fill="#c3c3c3"/><rect x="707" y="24" width="1109" height="1" fill="#dedede"/><g shape-rendering="geometricPrecision"><circle cx="721" cy="14" r="5.5" fill="#d4d4d4" stroke="#c4c4c4"/><circle cx="741" cy="14" r="5.5" fill="#d4d4d4" stroke="#c4c4c4"/><circle cx="761" cy="14" r="5.5" fill="#d4d4d4" stroke="#c4c4c4"/></g><g shape-rendering="geometricPrecision" filter="url(#noop)"><rect x="1196.5" y="8.5" width="12" height="13" fill="#fafafa" stroke="#cfcfcf"/><text x="1202.5" y="20" text-anchor="middle" font-family="Liberation Serif,serif" font-size="14" fill="#555">X</text></g><g filter="url(#noop)"><text class="tt" x="1217" y="18.5" textLength="110" lengthAdjust="spacingAndGlyphs">DISPLAY IMAGES</text></g><rect x="703" y="26" width="1" height="613" fill="#bfbfbf"/><rect x="704" y="26" width="1" height="613" fill="#bababa"/><rect x="705" y="26" width="1" height="613" fill="#b0b0b0"/><rect x="706" y="26" width="1" height="613" fill="#777"/><rect x="707" y="25" width="1109" height="32" fill="#c3c3c3"/><path d="M707 25H1816L1814 27H709V55L707 57Z" fill="#e9e9e9"/><path d="M1816 57H707L709 55H1814V27L1816 25Z" fill="#6e6e6e"/><rect x="709" y="54" width="1105" height="1" fill="#6e6e6e"/><rect x="707" y="57" width="1109" height="1" fill="#dadada"/><rect x="716" y="67" width="299" height="1" fill="#707070"/><rect x="716" y="67" width="1" height="175" fill="#707070"/><rect x="716" y="241" width="299" height="1" fill="#e9e9e9"/><rect x="1014" y="67" width="1" height="175" fill="#e9e9e9"/><rect x="726" y="97" width="142" height="1" fill="#707070"/><rect x="726" y="97" width="1" height="89" fill="#707070"/><rect x="726" y="185" width="142" height="1" fill="#e9e9e9"/><rect x="867" y="97" width="1" height="89" fill="#e9e9e9"/><g shape-rendering="geometricPrecision"><path d="M734.5 113.0L740 107.5L745.5 113.0L740 118.5Z" fill="#a0a0a0"/><path d="M734.5 113.0L740 107.5L745.5 113.0" fill="none" stroke="#6e6e6e" stroke-width="2"/><path d="M734.5 113.0L740 118.5L745.5 113.0" fill="none" stroke="#e9e9e9" stroke-width="2"/></g><g shape-rendering="geometricPrecision"><path d="M734.5 141.5L740 136.0L745.5 141.5L740 147.0Z" fill="#c3c3c3"/><path d="M734.5 141.5L740 136.0L745.5 141.5" fill="none" stroke="#e9e9e9" stroke-width="2"/><path d="M734.5 141.5L740 147.0L745.5 141.5" fill="none" stroke="#6e6e6e" stroke-width="2"/></g><g shape-rendering="geometricPrecision"><path d="M734.5 170.0L740 164.5L745.5 170.0L740 175.5Z" fill="#c3c3c3"/><path d="M734.5 170.0L740 164.5L745.5 170.0" fill="none" stroke="#e9e9e9" stroke-width="2"/><path d="M734.5 170.0L740 175.5L745.5 170.0" fill="none" stroke="#6e6e6e" stroke-width="2"/></g><rect x="884" y="87" width="10" height="10" fill="#c3c3c3"/><path d="M884 87H894L892 89H886V95L884 97Z" fill="#e9e9e9"/><path d="M894 97H884L886 95H892V89L894 87Z" fill="#6e6e6e"/><rect x="876" y="111" width="78" height="87" fill="#c3c3c3"/><path d="M876 111H954L952 113H878V196L876 198Z" fill="#6e6e6e"/><path d="M954 198H876L878 196H952V113L954 111Z" fill="#e9e9e9"/><rect x="880" y="116" width="70" height="13" fill="#000"/><rect x="880" y="132" width="70" height="13" fill="#000"/><rect x="880" y="148" width="70" height="13" fill="#000"/><rect x="880" y="164" width="70" height="13" fill="#000"/><rect x="880" y="180" width="70" height="13" fill="#000"/><rect x="958" y="111" width="15" height="87" fill="#a3a3a3"/><path d="M958 111H973L971 113H960V196L958 198Z" fill="#6e6e6e"/><path d="M973 198H958L960 196H971V113L973 111Z" fill="#e9e9e9"/><g shape-rendering="geometricPrecision"><path d="M965.5 113L971 123.5H960Z" fill="#c3c3c3"/><path d="M965.5 113.5L960.5 123" stroke="#e9e9e9" fill="none" stroke-width="1.4"/><path d="M965.5 113.5L970.5 123H960.5" stroke="#6e6e6e" fill="none" stroke-width="1.4"/><path d="M965.5 196L971 185.5H960Z" fill="#c3c3c3"/><path d="M970.5 186H960.5L965.5 195.5" stroke="#e9e9e9" fill="none" stroke-width="1.4"/><path d="M965.5 195.5L970.5 186" stroke="#6e6e6e" fill="none" stroke-width="1.4"/></g><rect x="960" y="124" width="11" height="10" fill="#c3c3c3"/><path d="M960 124H971L969 126H962V132L960 134Z" fill="#e9e9e9"/><path d="M971 134H960L962 132H969V126L971 124Z" fill="#6e6e6e"/><rect x="834" y="212" width="50" height="21" fill="#c3c3c3"/><path d="M834 212H884L882 214H836V231L834 233Z" fill="#e9e9e9"/><path d="M884 233H834L836 231H882V214L884 212Z" fill="#6e6e6e"/><rect x="891" y="212" width="50" height="21" fill="#c3c3c3"/><path d="M891 212H941L939 214H893V231L891 233Z" fill="#e9e9e9"/><path d="M941 233H891L893 231H939V214L941 212Z" fill="#6e6e6e"/><rect x="716" y="245" width="299" height="1" fill="#707070"/><rect x="716" y="245" width="1" height="143" fill="#707070"/><rect x="716" y="387" width="299" height="1" fill="#e9e9e9"/><rect x="1014" y="245" width="1" height="143" fill="#e9e9e9"/><rect x="722" y="252" width="287" height="20" fill="#c3c3c3"/><path d="M722 252H1009L1007 254H724V270L722 272Z" fill="#e9e9e9"/><path d="M1009 272H722L724 270H1007V254L1009 252Z" fill="#6e6e6e"/><g shape-rendering="geometricPrecision"><path d="M996 256.5H1003.5L999.8 263Z" fill="#d2d2d2"/><path d="M1003.3 256.8L999.8 263" stroke="#6e6e6e" stroke-width="1.3" fill="none"/><path d="M996 264.5H1004" stroke="#e9e9e9"/><path d="M996.5 265.5H1004" stroke="#6e6e6e"/></g><rect x="751" y="283" width="110" height="33" fill="#c3c3c3"/><path d="M751 283H861L860 284H752V315L751 316Z" fill="#828282"/><path d="M861 316H751L752 315H860V284L861 283Z" fill="#e9e9e9"/><path d="M754 286H858L856 288H756V311L754 313Z" fill="#6e6e6e"/><path d="M858 313H754L756 311H856V288L858 286Z" fill="#e9e9e9"/><path d="M760.5 294v12" stroke="#222" stroke-dasharray="1 1" fill="none"/><path d="M759 293.5h3M759 306.5h3" stroke="#444" stroke-dasharray="1 1" fill="none"/><rect x="894" y="283" width="111" height="33" fill="#c3c3c3"/><path d="M894 283H1005L1004 284H895V315L894 316Z" fill="#828282"/><path d="M1005 316H894L895 315H1004V284L1005 283Z" fill="#e9e9e9"/><path d="M897 286H1002L1000 288H899V311L897 313Z" fill="#6e6e6e"/><path d="M1002 313H897L899 311H1000V288L1002 286Z" fill="#e9e9e9"/><path d="M903.5 294v12" stroke="#222" stroke-dasharray="1 1" fill="none"/><path d="M902 293.5h3M902 306.5h3" stroke="#444" stroke-dasharray="1 1" fill="none"/><rect x="725" y="330" width="80" height="21" fill="#c3c3c3"/><path d="M725 330H805L803 332H727V349L725 351Z" fill="#e9e9e9"/><path d="M805 351H725L727 349H803V332L805 330Z" fill="#6e6e6e"/><rect x="812" y="330" width="62" height="21" fill="#c3c3c3"/><path d="M812 330H874L872 332H814V349L812 351Z" fill="#e9e9e9"/><path d="M874 351H812L814 349H872V332L874 330Z" fill="#6e6e6e"/><rect x="722" y="361" width="287" height="21" fill="#c3c3c3"/><path d="M722 361H1009L1007 363H724V380L722 382Z" fill="#e9e9e9"/><path d="M1009 382H722L724 380H1007V363L1009 361Z" fill="#6e6e6e"/><rect x="716" y="391" width="299" height="1" fill="#707070"/><rect x="716" y="391" width="1" height="87" fill="#707070"/><rect x="716" y="477" width="299" height="1" fill="#e9e9e9"/><rect x="1014" y="391" width="1" height="87" fill="#e9e9e9"/><rect x="728" y="405" width="10" height="10" fill="#c3c3c3"/><path d="M728 405H738L736 407H730V413L728 415Z" fill="#e9e9e9"/><path d="M738 415H728L730 413H736V407L738 405Z" fill="#6e6e6e"/><rect x="757" y="435" width="68" height="33" fill="#c3c3c3"/><path d="M757 435H825L824 436H758V467L757 468Z" fill="#828282"/><path d="M825 468H757L758 467H824V436L825 435Z" fill="#e9e9e9"/><path d="M760 438H822L820 440H762V463L760 465Z" fill="#6e6e6e"/><path d="M822 465H760L762 463H820V440L822 438Z" fill="#e9e9e9"/><path d="M766.5 446v12" stroke="#222" stroke-dasharray="1 1" fill="none"/><path d="M765 445.5h3M765 458.5h3" stroke="#444" stroke-dasharray="1 1" fill="none"/><rect x="865" y="435" width="68" height="33" fill="#c3c3c3"/><path d="M865 435H933L932 436H866V467L865 468Z" fill="#828282"/><path d="M933 468H865L866 467H932V436L933 435Z" fill="#e9e9e9"/><path d="M868 438H930L928 440H870V463L868 465Z" fill="#6e6e6e"/><path d="M930 465H868L870 463H928V440L930 438Z" fill="#e9e9e9"/><path d="M874.5 446v12" stroke="#222" stroke-dasharray="1 1" fill="none"/><path d="M873 445.5h3M873 458.5h3" stroke="#444" stroke-dasharray="1 1" fill="none"/><rect x="716" y="481" width="299" height="1" fill="#707070"/><rect x="716" y="481" width="1" height="87" fill="#707070"/><rect x="716" y="567" width="299" height="1" fill="#e9e9e9"/><rect x="1014" y="481" width="1" height="87" fill="#e9e9e9"/><rect x="731" y="499" width="10" height="10" fill="#c3c3c3"/><path d="M731 499H741L739 501H733V507L731 509Z" fill="#e9e9e9"/><path d="M741 509H731L733 507H739V501L741 499Z" fill="#6e6e6e"/><rect x="857" y="491" width="38" height="33" fill="#c3c3c3"/><path d="M857 491H895L894 492H858V523L857 524Z" fill="#828282"/><path d="M895 524H857L858 523H894V492L895 491Z" fill="#e9e9e9"/><path d="M860 494H892L890 496H862V519L860 521Z" fill="#6e6e6e"/><path d="M892 521H860L862 519H890V496L892 494Z" fill="#e9e9e9"/><path d="M866.5 502v12" stroke="#222" stroke-dasharray="1 1" fill="none"/><path d="M865 501.5h3M865 514.5h3" stroke="#444" stroke-dasharray="1 1" fill="none"/><rect x="728" y="544" width="10" height="10" fill="#c3c3c3"/><path d="M728 544H738L736 546H730V552L728 554Z" fill="#e9e9e9"/><path d="M738 554H728L730 552H736V546L738 544Z" fill="#6e6e6e"/><rect x="774" y="544" width="10" height="10" fill="#c3c3c3"/><path d="M774 544H784L782 546H776V552L774 554Z" fill="#e9e9e9"/><path d="M784 554H774L776 552H782V546L784 544Z" fill="#6e6e6e"/><rect x="789" y="577" width="44" height="33" fill="#c3c3c3"/><path d="M789 577H833L832 578H790V609L789 610Z" fill="#828282"/><path d="M833 610H789L790 609H832V578L833 577Z" fill="#e9e9e9"/><path d="M792 580H830L828 582H794V605L792 607Z" fill="#6e6e6e"/><path d="M830 607H792L794 605H828V582L830 580Z" fill="#e9e9e9"/><path d="M798.5 588v12" stroke="#222" stroke-dasharray="1 1" fill="none"/><path d="M797 587.5h3M797 600.5h3" stroke="#444" stroke-dasharray="1 1" fill="none"/><rect x="897" y="577" width="56" height="33" fill="#c3c3c3"/><path d="M897 577H953L952 578H898V609L897 610Z" fill="#828282"/><path d="M953 610H897L898 609H952V578L953 577Z" fill="#e9e9e9"/><path d="M900 580H950L948 582H902V605L900 607Z" fill="#6e6e6e"/><path d="M950 607H900L902 605H948V582L950 580Z" fill="#e9e9e9"/><path d="M906.5 588v12" stroke="#222" stroke-dasharray="1 1" fill="none"/><path d="M905 587.5h3M905 600.5h3" stroke="#444" stroke-dasharray="1 1" fill="none"/><g shape-rendering="geometricPrecision"><path d="M723.5 634L729 628.5L734.5 634L729 639.5Z" fill="#a0a0a0"/><path d="M723.5 634L729 628.5L734.5 634" fill="none" stroke="#6e6e6e" stroke-width="2"/><path d="M723.5 634L729 639.5L734.5 634" fill="none" stroke="#e9e9e9" stroke-width="2"/></g><g shape-rendering="geometricPrecision"><path d="M769.5 634L775 628.5L780.5 634L775 639.5Z" fill="#c3c3c3"/><path d="M769.5 634L775 628.5L780.5 634" fill="none" stroke="#e9e9e9" stroke-width="2"/><path d="M769.5 634L775 639.5L780.5 634" fill="none" stroke="#6e6e6e" stroke-width="2"/></g><rect x="750" y="682" width="44" height="33" fill="#c3c3c3"/><path d="M750 682H794L793 683H751V714L750 715Z" fill="#828282"/><path d="M794 715H750L751 714H793V683L794 682Z" fill="#e9e9e9"/><path d="M753 685H791L789 687H755V710L753 712Z" fill="#6e6e6e"/><path d="M791 712H753L755 710H789V687L791 685Z" fill="#e9e9e9"/><path d="M759.5 693v12" stroke="#222" stroke-dasharray="1 1" fill="none"/><path d="M758 692.5h3M758 705.5h3" stroke="#444" stroke-dasharray="1 1" fill="none"/><rect x="750" y="724" width="44" height="33" fill="#c3c3c3"/><path d="M750 724H794L793 725H751V756L750 757Z" fill="#828282"/><path d="M794 757H750L751 756H793V725L794 724Z" fill="#e9e9e9"/><path d="M753 727H791L789 729H755V752L753 754Z" fill="#6e6e6e"/><path d="M791 754H753L755 752H789V729L791 727Z" fill="#e9e9e9"/><path d="M759.5 735v12" stroke="#222" stroke-dasharray="1 1" fill="none"/><path d="M758 734.5h3M758 747.5h3" stroke="#444" stroke-dasharray="1 1" fill="none"/><rect x="718" y="771" width="295" height="21" fill="#c3c3c3"/><path d="M718 771H1013L1011 773H720V790L718 792Z" fill="#e9e9e9"/><path d="M1013 792H718L720 790H1011V773L1013 771Z" fill="#6e6e6e"/><rect x="718" y="799" width="295" height="21" fill="#c3c3c3"/><path d="M718 799H1013L1011 801H720V818L718 820Z" fill="#e9e9e9"/><path d="M1013 820H718L720 818H1011V801L1013 799Z" fill="#6e6e6e"/><rect x="721" y="830" width="32" height="20" fill="#c3c3c3"/><path d="M721 830H753L751 832H723V848L721 850Z" fill="#e9e9e9"/><path d="M753 850H721L723 848H751V832L753 830Z" fill="#6e6e6e"/><rect x="1025.5" y="933.5" width="781" height="19" fill="none" stroke="#e9e9e9"/><rect x="1024.5" y="932.5" width="781" height="19" fill="none" stroke="#828282"/><rect x="707" y="964" width="1109" height="1" fill="#adadad"/><g shape-rendering="geometricPrecision"><rect x="1801" y="950" width="15" height="15" fill="#fbfbfb"/><path d="M1804 964L1815 953M1808 964L1815 957M1812 964L1815 961" stroke="#8c8c8c" fill="none"/></g><rect x="1027" y="70" width="80" height="50" fill="#fff"/><g shape-rendering="geometricPrecision"><text x="1036.5" y="98.7" font-family="Liberation Sans,sans-serif" font-weight="bold" font-size="22.5" fill="#000">2<tspan font-family="Liberation Serif,serif" font-style="italic" font-weight="normal" font-size="21" dx="0.5">µ</tspan><tspan dx="0.5">m</tspan></text><path d="M1036 109H1073M1037.5 104V114M1071.8 104V114" stroke="#000" stroke-width="3" fill="none"/></g><rect x="1027" y="131" width="707" height="792" fill="#c3c3c3"/><path d="M1027 131H1734L1732 133H1029V921L1027 923Z" fill="#6e6e6e"/><path d="M1734 923H1027L1029 921H1732V133L1734 131Z" fill="#e9e9e9"/><rect x="1029" y="133" width="672" height="789" fill="#fff"/><g filter="url(#noop)"><text class="m" x="719" y="45" textLength="24" lengthAdjust="spacingAndGlyphs">File</text><text class="m" x="759" y="45" textLength="42" lengthAdjust="spacingAndGlyphs">Options</text><text class="m" x="817" y="45" textLength="30" lengthAdjust="spacingAndGlyphs">Print</text><text class="m" x="751" y="118" textLength="72" lengthAdjust="spacingAndGlyphs">Total Images</text><text class="m" x="751" y="146" textLength="108" lengthAdjust="spacingAndGlyphs">Individual Species</text><text class="m" x="751" y="174" textLength="102" lengthAdjust="spacingAndGlyphs">Individual Cycles</text><text class="m" x="899" y="97" textLength="66" lengthAdjust="spacingAndGlyphs">Sel. Cycles</text><text class="m" x="881" y="127" textLength="6" lengthAdjust="spacingAndGlyphs" style="fill:#fff">1</text><text class="m" x="881" y="143" textLength="6" lengthAdjust="spacingAndGlyphs" style="fill:#fff">2</text><text class="m" x="881" y="159" textLength="6" lengthAdjust="spacingAndGlyphs" style="fill:#fff">3</text><text class="m" x="881" y="175" textLength="6" lengthAdjust="spacingAndGlyphs" style="fill:#fff">4</text><text class="m" x="881" y="191" textLength="6" lengthAdjust="spacingAndGlyphs" style="fill:#fff">5</text><text class="m" x="724" y="227" textLength="42" lengthAdjust="spacingAndGlyphs" style="fill:#8a8a8a">Cycles:</text><text class="m" x="856" y="227" textLength="6" lengthAdjust="spacingAndGlyphs" style="fill:#8a8a8a">&lt;</text><text class="m" x="913" y="227" textLength="6" lengthAdjust="spacingAndGlyphs" style="fill:#8a8a8a">&gt;</text><text class="m" x="730" y="266" textLength="18" lengthAdjust="spacingAndGlyphs">16O</text><text class="m" x="727" y="304" textLength="18" lengthAdjust="spacingAndGlyphs">Min</text><text class="m" x="760" y="304" textLength="42" lengthAdjust="spacingAndGlyphs">0.00000</text><text class="m" x="871" y="304" textLength="18" lengthAdjust="spacingAndGlyphs">Max</text><text class="m" x="903" y="304" textLength="42" lengthAdjust="spacingAndGlyphs">33838.0</text><text class="m" x="728" y="345" textLength="72" lengthAdjust="spacingAndGlyphs">Auto Min/Max</text><text class="m" x="816" y="345" textLength="54" lengthAdjust="spacingAndGlyphs">To global</text><text class="m" x="840" y="376" textLength="48" lengthAdjust="spacingAndGlyphs">Auto All</text><text class="m" x="743" y="415" textLength="108" lengthAdjust="spacingAndGlyphs">Global Color Scale</text><text class="m" x="727" y="456" textLength="24" lengthAdjust="spacingAndGlyphs">Min:</text><text class="m" x="766" y="456" textLength="42" lengthAdjust="spacingAndGlyphs">0.00000</text><text class="m" x="835" y="456" textLength="24" lengthAdjust="spacingAndGlyphs">Max:</text><text class="m" x="874" y="456" textLength="42" lengthAdjust="spacingAndGlyphs">33838.0</text><text class="m" x="746" y="508" textLength="48" lengthAdjust="spacingAndGlyphs">Smoothed</text><text class="m" x="815" y="512" textLength="36" lengthAdjust="spacingAndGlyphs">Width:</text><text class="m" x="866" y="512" textLength="6" lengthAdjust="spacingAndGlyphs">3</text><text class="m" x="903" y="512" textLength="90" lengthAdjust="spacingAndGlyphs">(0.176 microns)</text><text class="m" x="743" y="553" textLength="18" lengthAdjust="spacingAndGlyphs">Log</text><text class="m" x="789" y="553" textLength="36" lengthAdjust="spacingAndGlyphs">Log SE</text><text class="m" x="723" y="598" textLength="54" lengthAdjust="spacingAndGlyphs">Zoom Fac:</text><text class="m" x="798" y="598" textLength="24" lengthAdjust="spacingAndGlyphs">1.00</text><text class="m" x="843" y="598" textLength="42" lengthAdjust="spacingAndGlyphs"># Cols:</text><text class="m" x="906" y="598" textLength="6" lengthAdjust="spacingAndGlyphs">2</text><text class="m" x="739" y="639" textLength="18" lengthAdjust="spacingAndGlyphs">Cts</text><text class="m" x="785" y="639" textLength="42" lengthAdjust="spacingAndGlyphs">Cts/sec</text><text class="m" x="725" y="672" textLength="66" lengthAdjust="spacingAndGlyphs">Mark Pixel:</text><text class="m" x="727" y="703" textLength="12" lengthAdjust="spacingAndGlyphs">X:</text><text class="m" x="727" y="745" textLength="12" lengthAdjust="spacingAndGlyphs">Y:</text><text class="m" x="813" y="786" textLength="102" lengthAdjust="spacingAndGlyphs">PLOT CYCLE COUNTS</text><text class="m" x="853" y="814" textLength="24" lengthAdjust="spacingAndGlyphs">DONE</text><text class="m" x="725" y="845" textLength="24" lengthAdjust="spacingAndGlyphs">Main</text><text class="m" x="1028" y="947" textLength="312" lengthAdjust="spacingAndGlyphs">16O (Total): X=48  Y=48 Value=23670  (473399.99 c/s)</text><text class="m" x="1399" y="98" textLength="138" lengthAdjust="spacingAndGlyphs">ParisB2CN-R23_9_corr.im</text></g><g shape-rendering="geometricPrecision"><svg x="1029" y="133" width="672" height="789" viewBox="1029 133 672 789"><text class="lb" x="1034.5" y="149" textLength="30" lengthAdjust="spacingAndGlyphs">16O</text><svg x="1029" y="153" width="256" height="256" viewBox="0 0 256 256"><g filter="url(#f16o)"><rect x="-12" y="-12" width="280" height="280" fill="#8e8e8e"/><g filter="url(#bl5)"><ellipse cx="65.0" cy="32.0" rx="36.0" ry="22.0" fill="#787878"/><ellipse cx="65.0" cy="92.0" rx="38.0" ry="24.0" fill="#757575"/><ellipse cx="150.0" cy="95.0" rx="26.0" ry="12.0" fill="#7a7a7a"/><ellipse cx="137.0" cy="137.0" rx="13.0" ry="10.0" fill="#707070"/><ellipse cx="30.0" cy="130.0" rx="18.0" ry="28.0" fill="#7a7a7a"/><ellipse cx="215.0" cy="30.0" rx="22.0" ry="9.0" fill="#808080"/><ellipse cx="70.0" cy="188.0" rx="48.0" ry="26.0" fill="#6e6e6e"/><ellipse cx="30.0" cy="215.0" rx="25.0" ry="14.0" fill="#808080"/><ellipse cx="215.0" cy="215.0" rx="20.0" ry="12.0" fill="#858585"/><ellipse cx="205.0" cy="105.0" rx="48.0" ry="44.0" fill="#9e9e9e"/><ellipse cx="165.0" cy="228.0" rx="65.0" ry="26.0" fill="#9d9d9d"/><ellipse cx="100.0" cy="220.0" rx="30.0" ry="16.0" fill="#9c9c9c"/><ellipse cx="165.0" cy="38.0" rx="45.0" ry="24.0" fill="#9d9d9d"/><ellipse cx="120.0" cy="70.0" rx="25.0" ry="15.0" fill="#999999"/><ellipse cx="20.0" cy="20.0" rx="14.0" ry="14.0" fill="#999999"/><ellipse cx="240.0" cy="30.0" rx="14.0" ry="22.0" fill="#9c9c9c"/><ellipse cx="20.0" cy="175.0" rx="14.0" ry="12.0" fill="#999999"/><ellipse cx="188.0" cy="156.0" rx="13.0" ry="12.0" fill="#878787"/></g><g filter="url(#bl2)"><ellipse cx="188.0" cy="156.0" rx="8.0" ry="7.0" fill="#6b6b6b"/><ellipse cx="70.8" cy="190.0" rx="32.0" ry="11.0" fill="#4f4f4f" transform="rotate(-5 70.8 190.0)"/><ellipse cx="47.0" cy="181.0" rx="12.0" ry="6.0" fill="#545454"/><ellipse cx="95.0" cy="183.0" rx="10.0" ry="7.0" fill="#545454"/></g><g filter="url(#bl1_5)"><ellipse cx="88.0" cy="68.4" rx="17.0" ry="4.5" fill="#cccccc" transform="rotate(-22 88.0 68.4)"/><ellipse cx="100.0" cy="60.0" rx="5.0" ry="4.0" fill="#cccccc"/><ellipse cx="46.4" cy="128.2" rx="14.0" ry="4.5" fill="#cccccc" transform="rotate(-30 46.4 128.2)"/><ellipse cx="26.9" cy="238.0" rx="9.0" ry="8.0" fill="#cccccc"/><ellipse cx="183.0" cy="228.4" rx="10.0" ry="6.0" fill="#cccccc" transform="rotate(-20 183.0 228.4)"/><ellipse cx="241.8" cy="9.8" rx="7.0" ry="4.0" fill="#cccccc" transform="rotate(-20 241.8 9.8)"/><ellipse cx="166.0" cy="57.4" rx="5.0" ry="4.0" fill="#cccccc"/><ellipse cx="180.7" cy="100.0" rx="4.0" ry="4.0" fill="#cccccc"/><ellipse cx="227.0" cy="70.8" rx="5.0" ry="5.0" fill="#cccccc"/><ellipse cx="217.0" cy="85.5" rx="5.0" ry="3.0" fill="#cccccc"/><ellipse cx="177.0" cy="190.5" rx="5.0" ry="5.0" fill="#cccccc"/><ellipse cx="201.5" cy="139.0" rx="3.0" ry="3.0" fill="#cccccc"/><ellipse cx="12.0" cy="12.0" rx="5.0" ry="6.0" fill="#c2c2c2"/><ellipse cx="24.0" cy="29.0" rx="3.0" ry="3.0" fill="#bfbfbf"/><ellipse cx="28.0" cy="38.0" rx="4.0" ry="3.0" fill="#cccccc" transform="rotate(30 28.0 38.0)"/><ellipse cx="212.5" cy="161.0" rx="7.0" ry="4.0" fill="#cccccc" transform="rotate(20 212.5 161.0)"/><ellipse cx="221.0" cy="168.5" rx="3.0" ry="3.0" fill="#cccccc"/><ellipse cx="80.6" cy="134.0" rx="3.0" ry="4.0" fill="#cccccc"/><ellipse cx="85.5" cy="106.0" rx="3.0" ry="5.0" fill="#cccccc"/><ellipse cx="124.6" cy="18.3" rx="6.0" ry="3.0" fill="#cccccc" transform="rotate(-30 124.6 18.3)"/><ellipse cx="47.6" cy="168.5" rx="4.0" ry="4.0" fill="#cccccc"/><ellipse cx="193.0" cy="36.6" rx="8.0" ry="3.0" fill="#c7c7c7"/><ellipse cx="150.0" cy="40.0" rx="3.0" ry="2.0" fill="#bfbfbf"/><ellipse cx="176.0" cy="49.0" rx="3.0" ry="3.0" fill="#bfbfbf"/><ellipse cx="215.0" cy="20.0" rx="3.0" ry="2.0" fill="#bfbfbf"/><ellipse cx="225.0" cy="50.0" rx="3.0" ry="2.0" fill="#bfbfbf"/><ellipse cx="60.0" cy="150.0" rx="3.0" ry="4.0" fill="#bfbfbf"/><ellipse cx="66.0" cy="160.0" rx="3.0" ry="3.0" fill="#bfbfbf"/><ellipse cx="140.0" cy="48.0" rx="3.0" ry="3.0" fill="#bfbfbf"/><ellipse cx="30.0" cy="100.0" rx="3.0" ry="5.0" fill="#bdbdbd"/><ellipse cx="12.0" cy="110.0" rx="3.0" ry="4.0" fill="#bdbdbd"/><ellipse cx="230.0" cy="228.0" rx="5.0" ry="3.0" fill="#c2c2c2"/><ellipse cx="240.0" cy="240.0" rx="4.0" ry="3.0" fill="#c2c2c2"/><ellipse cx="205.0" cy="250.0" rx="5.0" ry="3.0" fill="#cccccc"/><ellipse cx="130.0" cy="250.0" rx="5.0" ry="3.0" fill="#cccccc"/><ellipse cx="57.0" cy="235.0" rx="3.0" ry="5.0" fill="#bdbdbd"/><ellipse cx="8.0" cy="195.0" rx="3.0" ry="6.0" fill="#c2c2c2"/><ellipse cx="150.0" cy="140.0" rx="3.0" ry="6.0" fill="#bdbdbd"/><ellipse cx="113.0" cy="150.0" rx="3.0" ry="3.0" fill="#bdbdbd"/><ellipse cx="218.0" cy="150.0" rx="3.0" ry="2.0" fill="#bfbfbf"/><ellipse cx="150.0" cy="22.0" rx="9.0" ry="3.0" fill="#cccccc" transform="rotate(-25 150.0 22.0)"/><ellipse cx="172.0" cy="30.0" rx="7.0" ry="3.0" fill="#cccccc" transform="rotate(10 172.0 30.0)"/><ellipse cx="200.0" cy="25.0" rx="6.0" ry="3.0" fill="#c7c7c7" transform="rotate(-20 200.0 25.0)"/><ellipse cx="120.0" cy="48.0" rx="6.0" ry="3.0" fill="#c7c7c7" transform="rotate(30 120.0 48.0)"/><ellipse cx="230.0" cy="45.0" rx="5.0" ry="4.0" fill="#cccccc"/><ellipse cx="245.0" cy="60.0" rx="4.0" ry="6.0" fill="#c7c7c7"/><ellipse cx="160.0" cy="75.0" rx="5.0" ry="3.0" fill="#c7c7c7"/><ellipse cx="195.0" cy="75.0" rx="6.0" ry="3.0" fill="#c7c7c7" transform="rotate(20 195.0 75.0)"/><ellipse cx="210.0" cy="95.0" rx="5.0" ry="4.0" fill="#cccccc"/><ellipse cx="240.0" cy="150.0" rx="5.0" ry="4.0" fill="#cccccc"/><ellipse cx="205.0" cy="178.0" rx="6.0" ry="3.0" fill="#c7c7c7"/><ellipse cx="225.0" cy="200.0" rx="5.0" ry="4.0" fill="#c7c7c7"/><ellipse cx="200.0" cy="238.0" rx="7.0" ry="4.0" fill="#cccccc"/><ellipse cx="160.0" cy="205.0" rx="5.0" ry="4.0" fill="#cccccc"/><ellipse cx="100.0" cy="235.0" rx="5.0" ry="4.0" fill="#c7c7c7"/><ellipse cx="60.0" cy="205.0" rx="4.0" ry="3.0" fill="#c2c2c2"/><ellipse cx="35.0" cy="160.0" rx="4.0" ry="3.0" fill="#c2c2c2"/><ellipse cx="72.0" cy="140.0" rx="4.0" ry="3.0" fill="#c2c2c2"/><ellipse cx="108.0" cy="130.0" rx="3.0" ry="4.0" fill="#c7c7c7"/><ellipse cx="15.0" cy="95.0" rx="3.0" ry="4.0" fill="#c2c2c2"/><ellipse cx="95.0" cy="15.0" rx="4.0" ry="3.0" fill="#c2c2c2"/><ellipse cx="60.0" cy="12.0" rx="4.0" ry="3.0" fill="#c2c2c2"/><polygon points="117.2,171.0 127.0,161.2 146.6,158.8 156.3,171.0 161.2,180.8 156.3,193.0 146.6,202.7 141.7,212.5 127.0,210.1 119.7,195.4" fill="#d1d1d1"/><polygon points="117.2,207.6 107.5,202.7 97.7,214.9 83.0,234.5 80.6,241.8 90.4,240.6 105.0,224.7 122.1,214.9" fill="#cccccc"/><polygon points="163.7,136.8 171.0,127.0 185.6,119.7 195.4,117.2 200.3,124.6 197.9,136.8 185.6,141.7 175.9,146.6 168.5,144.1" fill="#d1d1d1"/><polygon points="210.1,117.2 219.8,107.5 234.5,107.5 249.1,114.8 251.6,127.0 241.8,136.8 229.6,141.7 219.8,131.9" fill="#cfcfcf"/><ellipse cx="236.0" cy="124.0" rx="5.0" ry="5.0" fill="#a3a3a3"/><ellipse cx="222.0" cy="118.0" rx="3.0" ry="4.0" fill="#a8a8a8"/><ellipse cx="129.5" cy="176.0" rx="5.0" ry="5.0" fill="#f2f2f2"/><ellipse cx="127.0" cy="195.4" rx="4.0" ry="5.0" fill="#ededed"/><ellipse cx="191.7" cy="124.6" rx="4.0" ry="4.0" fill="#f2f2f2"/><ellipse cx="142.0" cy="170.0" rx="4.0" ry="3.0" fill="#e6e6e6"/><ellipse cx="150.0" cy="185.0" rx="3.0" ry="5.0" fill="#e0e0e0"/><polygon points="91.6,108.7 114.8,106.3 136.8,103.8 139.2,114.8 133.1,131.9 117.2,129.5 102.6,124.6 92.8,117.2" fill="#080808"/><ellipse cx="107.5" cy="13.4" rx="12.0" ry="9.0" fill="#1a1a1a" transform="rotate(-20 107.5 13.4)"/><ellipse cx="99.0" cy="27.0" rx="5.0" ry="6.0" fill="#333333"/><ellipse cx="146.6" cy="56.2" rx="4.5" ry="4.5" fill="#1f1f1f"/><ellipse cx="129.5" cy="91.6" rx="4.0" ry="4.0" fill="#1a1a1a"/><ellipse cx="205.0" cy="46.4" rx="7.0" ry="5.0" fill="#1f1f1f"/><ellipse cx="188.0" cy="45.0" rx="4.0" ry="2.5" fill="#262626"/><ellipse cx="241.8" cy="83.0" rx="11.0" ry="10.0" fill="#404040"/><ellipse cx="243.0" cy="85.0" rx="6.0" ry="5.0" fill="#2b2b2b"/><ellipse cx="7.3" cy="69.6" rx="4.0" ry="6.0" fill="#1a1a1a"/><ellipse cx="17.0" cy="42.7" rx="4.0" ry="3.0" fill="#1f1f1f"/><ellipse cx="24.4" cy="36.6" rx="2.5" ry="2.5" fill="#262626"/><ellipse cx="18.3" cy="14.7" rx="2.5" ry="2.5" fill="#262626"/><ellipse cx="41.5" cy="26.9" rx="4.0" ry="6.0" fill="#454545"/><ellipse cx="22.0" cy="149.0" rx="5.0" ry="3.5" fill="#1f1f1f" transform="rotate(-30 22.0 149.0)"/><ellipse cx="5.0" cy="165.0" rx="5.0" ry="5.0" fill="#1f1f1f"/><ellipse cx="97.7" cy="146.6" rx="4.0" ry="4.0" fill="#1a1a1a"/><ellipse cx="107.5" cy="151.4" rx="3.5" ry="3.5" fill="#1f1f1f"/><ellipse cx="105.0" cy="165.0" rx="9.0" ry="3.5" fill="#1a1a1a" transform="rotate(-10 105.0 165.0)"/><ellipse cx="197.8" cy="193.0" rx="14.0" ry="6.5" fill="#1f1f1f" transform="rotate(25 197.8 193.0)"/><ellipse cx="243.0" cy="176.0" rx="12.0" ry="14.0" fill="#0a0a0a"/><ellipse cx="233.0" cy="190.0" rx="5.0" ry="5.0" fill="#0d0d0d"/><ellipse cx="14.7" cy="218.6" rx="6.0" ry="5.0" fill="#1f1f1f" transform="rotate(-30 14.7 218.6)"/><ellipse cx="168.5" cy="227.0" rx="5.0" ry="4.0" fill="#1f1f1f"/><ellipse cx="117.0" cy="243.0" rx="13.0" ry="3.5" fill="#1a1a1a" transform="rotate(-5 117.0 243.0)"/><ellipse cx="160.0" cy="250.0" rx="18.0" ry="5.0" fill="#1a1a1a" transform="rotate(10 160.0 250.0)"/><ellipse cx="230.8" cy="212.5" rx="3.0" ry="5.0" fill="#262626"/><ellipse cx="156.0" cy="213.7" rx="3.0" ry="3.0" fill="#262626"/><ellipse cx="134.0" cy="233.0" rx="3.0" ry="3.0" fill="#1f1f1f"/><ellipse cx="79.0" cy="83.0" rx="6.0" ry="3.0" fill="#454545" transform="rotate(-20 79.0 83.0)"/><ellipse cx="58.6" cy="99.0" rx="6.0" ry="4.0" fill="#4c4c4c"/><ellipse cx="49.0" cy="77.0" rx="4.0" ry="4.0" fill="#4c4c4c"/><ellipse cx="163.7" cy="99.0" rx="3.5" ry="3.5" fill="#404040"/><ellipse cx="133.0" cy="71.0" rx="4.0" ry="6.0" fill="#545454"/><ellipse cx="50.0" cy="152.7" rx="3.0" ry="5.0" fill="#404040"/><ellipse cx="75.7" cy="158.8" rx="3.0" ry="5.0" fill="#404040"/><ellipse cx="182.0" cy="24.0" rx="4.0" ry="3.0" fill="#4c4c4c"/><ellipse cx="172.0" cy="17.0" rx="3.0" ry="3.0" fill="#4c4c4c"/><ellipse cx="215.0" cy="38.0" rx="3.0" ry="3.0" fill="#404040"/><ellipse cx="150.0" cy="110.0" rx="3.0" ry="3.0" fill="#4c4c4c"/><ellipse cx="166.0" cy="112.0" rx="3.0" ry="3.0" fill="#4c4c4c"/><ellipse cx="35.0" cy="60.0" rx="3.0" ry="3.0" fill="#4c4c4c"/><ellipse cx="85.0" cy="45.0" rx="3.0" ry="4.0" fill="#545454"/><ellipse cx="112.0" cy="65.0" rx="3.0" ry="3.0" fill="#545454"/><path d="M137 5Q141 23 111 33" fill="none" stroke="#1f1f1f" stroke-width="3.2" stroke-linecap="round"/></g></g><path d="M0 0H256V256H0ZM4 3V254.5H254V3Z" fill="#000" fill-rule="evenodd"/></svg><rect x="1289.5" y="182.5" width="10" height="222.5" fill="url(#cbar)" stroke="#000"/><text class="cts" x="1297" y="162" textLength="37" lengthAdjust="spacingAndGlyphs">Cts</text><text class="num" x="1303" y="188.0" textLength="53.5" lengthAdjust="spacingAndGlyphs">33838</text><text class="num" x="1303" y="242.2" textLength="53.5" lengthAdjust="spacingAndGlyphs">25378</text><text class="num" x="1303" y="296.4" textLength="53.5" lengthAdjust="spacingAndGlyphs">16919</text><text class="num" x="1303" y="350.6" textLength="42.8" lengthAdjust="spacingAndGlyphs">8459</text><text class="num" x="1303" y="404.8" textLength="10.7" lengthAdjust="spacingAndGlyphs">0</text><text class="lb" x="1370.5" y="149" textLength="38" lengthAdjust="spacingAndGlyphs">12C2</text><svg x="1365" y="153" width="256" height="256" viewBox="0 0 256 256"><g filter="url(#cmn)"><rect x="-12" y="-12" width="280" height="280" fill="#000"/><g filter="url(#web2)"><rect x="-12" y="-12" width="280" height="280" fill="#050505"/><ellipse cx="19.5" cy="14.7" rx="11.9" ry="11.9" fill="#141414" opacity="0.73"/><ellipse cx="41.5" cy="9.8" rx="18.5" ry="11.9" fill="#141414" opacity="0.91"/><ellipse cx="55.0" cy="19.5" rx="8.6" ry="11.9" fill="#141414" opacity="0.82"/><ellipse cx="80.6" cy="8.5" rx="11.9" ry="6.9" fill="#141414" opacity="0.73"/><ellipse cx="70.8" cy="29.3" rx="18.5" ry="15.2" fill="#141414" opacity="1.00"/><ellipse cx="83.0" cy="36.6" rx="15.2" ry="18.5" fill="#141414" opacity="1.00"/><ellipse cx="122.1" cy="15.9" rx="10.2" ry="11.9" fill="#141414" opacity="0.73"/><ellipse cx="146.6" cy="7.3" rx="11.9" ry="8.6" fill="#141414" opacity="0.73"/><ellipse cx="141.7" cy="26.9" rx="21.8" ry="18.5" fill="#141414" opacity="1.00"/><ellipse cx="161.2" cy="14.7" rx="15.2" ry="15.2" fill="#141414" opacity="1.00"/><ellipse cx="168.5" cy="39.1" rx="18.5" ry="15.2" fill="#141414" opacity="1.00"/><ellipse cx="190.5" cy="7.3" rx="21.8" ry="10.2" fill="#141414" opacity="1.00"/><ellipse cx="214.9" cy="14.7" rx="28.4" ry="18.5" fill="#141414" opacity="1.00"/><ellipse cx="241.8" cy="9.8" rx="15.2" ry="13.5" fill="#141414" opacity="0.91"/><ellipse cx="219.8" cy="36.6" rx="25.1" ry="15.2" fill="#141414" opacity="1.00"/><ellipse cx="207.6" cy="51.3" rx="18.5" ry="11.9" fill="#141414" opacity="1.00"/><ellipse cx="244.3" cy="48.9" rx="8.6" ry="10.2" fill="#141414" opacity="0.73"/><ellipse cx="224.7" cy="63.5" rx="18.5" ry="15.2" fill="#141414" opacity="1.00"/><ellipse cx="240.6" cy="64.7" rx="8.6" ry="8.6" fill="#141414" opacity="0.64"/><ellipse cx="251.6" cy="57.4" rx="6.0" ry="6.0" fill="#141414" opacity="0.64"/><ellipse cx="12.2" cy="39.1" rx="15.2" ry="15.2" fill="#141414" opacity="0.91"/><ellipse cx="24.4" cy="44.0" rx="15.2" ry="11.9" fill="#141414" opacity="0.91"/><ellipse cx="36.6" cy="58.6" rx="15.2" ry="15.2" fill="#141414" opacity="1.00"/><ellipse cx="58.6" cy="52.5" rx="11.9" ry="10.2" fill="#141414" opacity="0.73"/><ellipse cx="75.7" cy="59.8" rx="15.2" ry="13.5" fill="#141414" opacity="0.91"/><ellipse cx="66.0" cy="76.9" rx="13.5" ry="8.6" fill="#141414" opacity="0.73"/><ellipse cx="109.9" cy="48.9" rx="15.2" ry="18.5" fill="#141414" opacity="1.00"/><ellipse cx="127.0" cy="39.1" rx="15.2" ry="11.9" fill="#141414" opacity="0.91"/><ellipse cx="114.8" cy="70.8" rx="18.5" ry="15.2" fill="#141414" opacity="1.00"/><ellipse cx="119.7" cy="85.5" rx="11.9" ry="10.2" fill="#141414" opacity="0.82"/><ellipse cx="7.3" cy="68.4" rx="10.2" ry="21.8" fill="#141414" opacity="1.00"/><ellipse cx="19.5" cy="70.8" rx="10.2" ry="11.9" fill="#141414" opacity="0.73"/><ellipse cx="7.3" cy="97.7" rx="8.6" ry="21.8" fill="#141414" opacity="0.91"/><ellipse cx="31.8" cy="92.8" rx="15.2" ry="21.8" fill="#141414" opacity="1.00"/><ellipse cx="45.2" cy="102.6" rx="10.2" ry="10.2" fill="#141414" opacity="0.73"/><ellipse cx="42.7" cy="78.2" rx="6.9" ry="6.9" fill="#141414" opacity="0.64"/><ellipse cx="81.8" cy="96.5" rx="15.2" ry="18.5" fill="#141414" opacity="1.00"/><ellipse cx="55.0" cy="117.2" rx="15.2" ry="10.2" fill="#141414" opacity="0.82"/><ellipse cx="75.7" cy="120.9" rx="10.2" ry="11.9" fill="#141414" opacity="0.73"/><ellipse cx="41.5" cy="122.1" rx="7.9" ry="7.9" fill="#141414" opacity="0.64"/><ellipse cx="161.2" cy="62.3" rx="10.2" ry="10.2" fill="#141414" opacity="0.73"/><ellipse cx="180.8" cy="66.0" rx="15.2" ry="15.2" fill="#141414" opacity="0.91"/><ellipse cx="188.1" cy="85.5" rx="10.2" ry="18.5" fill="#141414" opacity="0.91"/><ellipse cx="131.9" cy="90.4" rx="15.2" ry="10.2" fill="#141414" opacity="0.82"/><ellipse cx="156.3" cy="97.7" rx="25.1" ry="18.5" fill="#141414" opacity="1.00"/><ellipse cx="158.8" cy="119.7" rx="18.5" ry="13.5" fill="#141414" opacity="1.00"/><ellipse cx="210.1" cy="96.5" rx="8.6" ry="8.6" fill="#141414" opacity="0.64"/><ellipse cx="195.4" cy="109.9" rx="15.2" ry="10.2" fill="#141414" opacity="0.82"/><ellipse cx="183.2" cy="117.2" rx="7.9" ry="7.9" fill="#141414" opacity="0.64"/><ellipse cx="241.8" cy="102.6" rx="6.9" ry="6.9" fill="#141414" opacity="0.64"/><ellipse cx="117.2" cy="98.9" rx="6.9" ry="6.9" fill="#141414" opacity="0.64"/><ellipse cx="14.7" cy="131.9" rx="16.8" ry="15.2" fill="#141414" opacity="1.00"/><ellipse cx="33.0" cy="135.6" rx="7.9" ry="7.9" fill="#141414" opacity="0.64"/><ellipse cx="47.6" cy="139.2" rx="13.5" ry="15.2" fill="#141414" opacity="0.82"/><ellipse cx="66.0" cy="145.3" rx="7.9" ry="7.9" fill="#141414" opacity="0.64"/><ellipse cx="24.4" cy="160.0" rx="21.8" ry="10.2" fill="#141414" opacity="0.91"/><ellipse cx="48.9" cy="163.7" rx="7.9" ry="7.9" fill="#141414" opacity="0.64"/><ellipse cx="13.4" cy="174.6" rx="10.2" ry="6.9" fill="#141414" opacity="0.64"/><ellipse cx="44.0" cy="175.9" rx="6.0" ry="6.0" fill="#141414" opacity="0.64"/><ellipse cx="94.0" cy="136.8" rx="15.2" ry="11.9" fill="#141414" opacity="0.82"/><ellipse cx="90.4" cy="151.4" rx="13.5" ry="15.2" fill="#141414" opacity="0.91"/><ellipse cx="75.7" cy="158.8" rx="10.2" ry="13.5" fill="#141414" opacity="0.82"/><ellipse cx="64.7" cy="171.0" rx="10.2" ry="10.2" fill="#141414" opacity="0.73"/><ellipse cx="109.9" cy="156.3" rx="15.2" ry="18.5" fill="#141414" opacity="1.00"/><ellipse cx="97.7" cy="174.6" rx="8.6" ry="10.2" fill="#141414" opacity="0.73"/><ellipse cx="127.0" cy="149.0" rx="15.2" ry="15.2" fill="#141414" opacity="1.00"/><ellipse cx="141.7" cy="151.4" rx="15.2" ry="18.5" fill="#141414" opacity="1.00"/><ellipse cx="131.9" cy="166.1" rx="8.6" ry="8.6" fill="#141414" opacity="0.73"/><ellipse cx="158.8" cy="161.2" rx="15.2" ry="21.8" fill="#141414" opacity="1.00"/><ellipse cx="161.2" cy="140.4" rx="6.9" ry="6.9" fill="#141414" opacity="0.64"/><ellipse cx="174.6" cy="138.0" rx="7.9" ry="7.9" fill="#141414" opacity="0.64"/><ellipse cx="175.9" cy="180.8" rx="18.5" ry="10.2" fill="#141414" opacity="0.91"/><ellipse cx="195.4" cy="180.8" rx="10.2" ry="6.9" fill="#141414" opacity="0.73"/><ellipse cx="206.4" cy="174.6" rx="6.9" ry="6.9" fill="#141414" opacity="0.64"/><ellipse cx="141.7" cy="183.2" rx="6.9" ry="11.9" fill="#141414" opacity="0.73"/><ellipse cx="156.3" cy="183.2" rx="8.6" ry="8.6" fill="#141414" opacity="0.73"/><ellipse cx="133.1" cy="195.4" rx="6.9" ry="6.9" fill="#141414" opacity="0.64"/><ellipse cx="241.8" cy="156.3" rx="15.2" ry="13.5" fill="#141414" opacity="0.82"/><ellipse cx="228.4" cy="174.6" rx="16.8" ry="15.2" fill="#141414" opacity="1.00"/><ellipse cx="246.7" cy="180.8" rx="10.2" ry="8.6" fill="#141414" opacity="0.73"/><ellipse cx="249.1" cy="195.4" rx="6.9" ry="11.9" fill="#141414" opacity="0.73"/><ellipse cx="158.8" cy="200.3" rx="18.5" ry="13.5" fill="#141414" opacity="1.00"/><ellipse cx="185.6" cy="202.7" rx="15.2" ry="13.5" fill="#141414" opacity="0.91"/><ellipse cx="207.6" cy="197.9" rx="11.9" ry="10.2" fill="#141414" opacity="0.73"/><ellipse cx="146.6" cy="210.1" rx="11.9" ry="18.5" fill="#141414" opacity="0.91"/><ellipse cx="180.8" cy="217.4" rx="15.2" ry="15.2" fill="#141414" opacity="1.00"/><ellipse cx="202.7" cy="214.9" rx="18.5" ry="15.2" fill="#141414" opacity="1.00"/><ellipse cx="197.9" cy="232.0" rx="21.8" ry="15.2" fill="#141414" opacity="1.00"/><ellipse cx="232.0" cy="210.1" rx="11.9" ry="18.5" fill="#141414" opacity="0.91"/><ellipse cx="244.3" cy="219.8" rx="13.5" ry="15.2" fill="#141414" opacity="0.82"/><ellipse cx="236.9" cy="234.5" rx="13.5" ry="11.9" fill="#141414" opacity="0.82"/><ellipse cx="249.1" cy="239.4" rx="6.9" ry="10.2" fill="#141414" opacity="0.64"/><ellipse cx="224.7" cy="246.7" rx="6.9" ry="6.9" fill="#141414" opacity="0.64"/><ellipse cx="202.7" cy="249.1" rx="13.5" ry="6.9" fill="#141414" opacity="0.73"/><ellipse cx="136.8" cy="234.5" rx="11.9" ry="10.2" fill="#141414" opacity="0.73"/><ellipse cx="147.8" cy="234.5" rx="6.9" ry="6.9" fill="#141414" opacity="0.64"/><ellipse cx="163.7" cy="235.7" rx="10.2" ry="6.0" fill="#141414" opacity="0.64"/><ellipse cx="129.5" cy="249.1" rx="6.9" ry="6.9" fill="#141414" opacity="0.64"/><ellipse cx="17.1" cy="196.6" rx="6.0" ry="6.0" fill="#141414" opacity="0.64"/><ellipse cx="19.5" cy="214.9" rx="16.8" ry="18.5" fill="#141414" opacity="1.00"/><ellipse cx="14.7" cy="238.2" rx="6.0" ry="8.6" fill="#141414" opacity="0.64"/><ellipse cx="41.5" cy="228.4" rx="15.2" ry="16.8" fill="#141414" opacity="1.00"/><ellipse cx="61.1" cy="217.4" rx="13.5" ry="15.2" fill="#141414" opacity="0.91"/><ellipse cx="63.5" cy="238.2" rx="13.5" ry="11.9" fill="#141414" opacity="0.82"/><ellipse cx="80.6" cy="230.8" rx="8.6" ry="10.2" fill="#141414" opacity="0.73"/><ellipse cx="94.0" cy="225.9" rx="6.9" ry="6.9" fill="#141414" opacity="0.64"/><ellipse cx="44.0" cy="250.4" rx="9.3" ry="6.0" fill="#141414" opacity="0.64"/><ellipse cx="78.2" cy="244.3" rx="6.0" ry="6.0" fill="#141414" opacity="0.64"/><ellipse cx="115" cy="117" rx="24" ry="15" fill="#000" opacity="0.8" transform="rotate(-11 115 117)"/><ellipse cx="203" cy="150" rx="27" ry="22" fill="#000" opacity="0.8" transform="rotate(-21 203 150)"/><ellipse cx="228" cy="100" rx="20" ry="18" fill="#000" opacity="0.6" transform="rotate(9 228 100)"/><ellipse cx="90" cy="214" rx="45" ry="20" fill="#000" opacity="0.6" transform="rotate(-26 90 214)"/><ellipse cx="49" cy="29" rx="12" ry="11" fill="#000" opacity="0.5" transform="rotate(2 49 29)"/><ellipse cx="107" cy="15" rx="20" ry="9" fill="#000" opacity="0.6" transform="rotate(-8 107 15)"/><ellipse cx="146" cy="63" rx="10" ry="10" fill="#000" opacity="0.5" transform="rotate(-27 146 63)"/><ellipse cx="176" cy="61" rx="9" ry="10" fill="#000" opacity="0.5" transform="rotate(0 176 61)"/><ellipse cx="232" cy="82" rx="16" ry="8" fill="#000" opacity="0.5" transform="rotate(-28 232 82)"/><ellipse cx="171" cy="222" rx="12" ry="13" fill="#000" opacity="0.5" transform="rotate(-4 171 222)"/></g><ellipse cx="19.5" cy="14.7" rx="10.4" ry="7.2" fill="url(#gw)" opacity="0.20" transform="rotate(13 19.5 14.7)"/><ellipse cx="19.5" cy="14.7" rx="5.8" ry="4.0" fill="url(#gw)" opacity="0.50" transform="rotate(13 19.5 14.7)"/><ellipse cx="19.6" cy="16.5" rx="3.2" ry="3.2" fill="url(#gw)" opacity="0.39"/><ellipse cx="38.0" cy="5.0" rx="10.4" ry="7.2" fill="url(#gw)" opacity="0.09" transform="rotate(16 38.0 5.0)"/><ellipse cx="38.0" cy="5.0" rx="5.8" ry="4.0" fill="url(#gw)" opacity="0.22" transform="rotate(16 38.0 5.0)"/><ellipse cx="38.0" cy="6.8" rx="3.2" ry="3.2" fill="url(#gw)" opacity="0.17"/><ellipse cx="7.0" cy="40.0" rx="7.8" ry="5.4" fill="url(#gw)" opacity="0.08" transform="rotate(76 7.0 40.0)"/><ellipse cx="7.0" cy="40.0" rx="4.3" ry="3.0" fill="url(#gw)" opacity="0.20" transform="rotate(76 7.0 40.0)"/><ellipse cx="29.0" cy="36.6" rx="7.8" ry="5.4" fill="url(#gw)" opacity="0.05" transform="rotate(149 29.0 36.6)"/><ellipse cx="29.0" cy="36.6" rx="4.3" ry="3.0" fill="url(#gw)" opacity="0.14" transform="rotate(149 29.0 36.6)"/><ellipse cx="35.4" cy="57.4" rx="15.6" ry="10.8" fill="url(#gw)" opacity="0.12" transform="rotate(22 35.4 57.4)"/><ellipse cx="35.4" cy="57.4" rx="8.7" ry="6.0" fill="url(#gw)" opacity="0.31" transform="rotate(22 35.4 57.4)"/><ellipse cx="35.1" cy="60.1" rx="4.9" ry="4.9" fill="url(#gw)" opacity="0.24"/><ellipse cx="41.5" cy="68.4" rx="7.8" ry="5.4" fill="url(#gw)" opacity="0.09" transform="rotate(40 41.5 68.4)"/><ellipse cx="41.5" cy="68.4" rx="4.3" ry="3.0" fill="url(#gw)" opacity="0.22" transform="rotate(40 41.5 68.4)"/><ellipse cx="17.0" cy="68.0" rx="10.4" ry="7.2" fill="url(#gw)" opacity="0.08" transform="rotate(113 17.0 68.0)"/><ellipse cx="17.0" cy="68.0" rx="5.8" ry="4.0" fill="url(#gw)" opacity="0.20" transform="rotate(113 17.0 68.0)"/><ellipse cx="15.2" cy="67.8" rx="3.2" ry="3.2" fill="url(#gw)" opacity="0.15"/><ellipse cx="74.5" cy="59.8" rx="15.6" ry="10.8" fill="url(#gw)" opacity="0.12" transform="rotate(171 74.5 59.8)"/><ellipse cx="74.5" cy="59.8" rx="8.7" ry="6.0" fill="url(#gw)" opacity="0.31" transform="rotate(171 74.5 59.8)"/><ellipse cx="73.4" cy="57.4" rx="4.9" ry="4.9" fill="url(#gw)" opacity="0.24"/><ellipse cx="91.0" cy="64.0" rx="6.5" ry="4.5" fill="url(#gw)" opacity="0.09" transform="rotate(104 91.0 64.0)"/><ellipse cx="91.0" cy="64.0" rx="3.6" ry="2.5" fill="url(#gw)" opacity="0.22" transform="rotate(104 91.0 64.0)"/><ellipse cx="111.0" cy="47.6" rx="10.4" ry="7.2" fill="url(#gw)" opacity="0.08" transform="rotate(71 111.0 47.6)"/><ellipse cx="111.0" cy="47.6" rx="5.8" ry="4.0" fill="url(#gw)" opacity="0.20" transform="rotate(71 111.0 47.6)"/><ellipse cx="109.5" cy="48.6" rx="3.2" ry="3.2" fill="url(#gw)" opacity="0.15"/><ellipse cx="85.5" cy="31.8" rx="7.8" ry="5.4" fill="url(#gw)" opacity="0.05" transform="rotate(176 85.5 31.8)"/><ellipse cx="85.5" cy="31.8" rx="4.3" ry="3.0" fill="url(#gw)" opacity="0.14" transform="rotate(176 85.5 31.8)"/><ellipse cx="99.0" cy="44.0" rx="7.8" ry="5.4" fill="url(#gw)" opacity="0.05" transform="rotate(8 99.0 44.0)"/><ellipse cx="99.0" cy="44.0" rx="4.3" ry="3.0" fill="url(#gw)" opacity="0.14" transform="rotate(8 99.0 44.0)"/><ellipse cx="112.0" cy="69.6" rx="7.8" ry="5.4" fill="url(#gw)" opacity="0.07" transform="rotate(155 112.0 69.6)"/><ellipse cx="112.0" cy="69.6" rx="4.3" ry="3.0" fill="url(#gw)" opacity="0.17" transform="rotate(155 112.0 69.6)"/><ellipse cx="35.4" cy="85.5" rx="10.4" ry="7.2" fill="url(#gw)" opacity="0.07" transform="rotate(52 35.4 85.5)"/><ellipse cx="35.4" cy="85.5" rx="5.8" ry="4.0" fill="url(#gw)" opacity="0.17" transform="rotate(52 35.4 85.5)"/><ellipse cx="34.3" cy="86.9" rx="3.2" ry="3.2" fill="url(#gw)" opacity="0.13"/><ellipse cx="168.5" cy="29.3" rx="7.8" ry="5.4" fill="url(#gw)" opacity="0.08" transform="rotate(26 168.5 29.3)"/><ellipse cx="168.5" cy="29.3" rx="4.3" ry="3.0" fill="url(#gw)" opacity="0.20" transform="rotate(26 168.5 29.3)"/><ellipse cx="180.7" cy="6.8" rx="7.8" ry="5.4" fill="url(#gw)" opacity="0.09" transform="rotate(21 180.7 6.8)"/><ellipse cx="180.7" cy="6.8" rx="4.3" ry="3.0" fill="url(#gw)" opacity="0.22" transform="rotate(21 180.7 6.8)"/><ellipse cx="161.0" cy="7.3" rx="10.4" ry="7.2" fill="url(#gw)" opacity="0.08" transform="rotate(56 161.0 7.3)"/><ellipse cx="161.0" cy="7.3" rx="5.8" ry="4.0" fill="url(#gw)" opacity="0.20" transform="rotate(56 161.0 7.3)"/><ellipse cx="159.8" cy="8.7" rx="3.2" ry="3.2" fill="url(#gw)" opacity="0.15"/><ellipse cx="202.0" cy="6.5" rx="9.1" ry="6.3" fill="url(#gw)" opacity="0.17" transform="rotate(147 202.0 6.5)"/><ellipse cx="202.0" cy="6.5" rx="5.1" ry="3.5" fill="url(#gw)" opacity="0.45" transform="rotate(147 202.0 6.5)"/><ellipse cx="161.5" cy="18.9" rx="7.8" ry="5.4" fill="url(#gw)" opacity="0.13" transform="rotate(33 161.5 18.9)"/><ellipse cx="161.5" cy="18.9" rx="4.3" ry="3.0" fill="url(#gw)" opacity="0.33" transform="rotate(33 161.5 18.9)"/><ellipse cx="208.6" cy="26.5" rx="7.8" ry="5.4" fill="url(#gw)" opacity="0.13" transform="rotate(105 208.6 26.5)"/><ellipse cx="208.6" cy="26.5" rx="4.3" ry="3.0" fill="url(#gw)" opacity="0.33" transform="rotate(105 208.6 26.5)"/><ellipse cx="217.4" cy="37.9" rx="18.2" ry="12.6" fill="url(#gw)" opacity="0.11" transform="rotate(115 217.4 37.9)"/><ellipse cx="217.4" cy="37.9" rx="10.2" ry="7.0" fill="url(#gw)" opacity="0.28" transform="rotate(115 217.4 37.9)"/><ellipse cx="214.3" cy="37.4" rx="5.7" ry="5.7" fill="url(#gw)" opacity="0.22"/><ellipse cx="207.9" cy="46.9" rx="15.6" ry="10.8" fill="url(#gw)" opacity="0.33" transform="rotate(67 207.9 46.9)"/><ellipse cx="207.9" cy="46.9" rx="8.7" ry="6.0" fill="url(#gw)" opacity="0.85" transform="rotate(67 207.9 46.9)"/><ellipse cx="205.8" cy="48.6" rx="4.9" ry="4.9" fill="url(#gw)" opacity="0.66"/><ellipse cx="199.0" cy="52.5" rx="10.4" ry="7.2" fill="url(#gw)" opacity="0.08" transform="rotate(99 199.0 52.5)"/><ellipse cx="199.0" cy="52.5" rx="5.8" ry="4.0" fill="url(#gw)" opacity="0.20" transform="rotate(99 199.0 52.5)"/><ellipse cx="197.2" cy="52.7" rx="3.2" ry="3.2" fill="url(#gw)" opacity="0.15"/><ellipse cx="238.0" cy="31.8" rx="13.0" ry="9.0" fill="url(#gw)" opacity="0.17" transform="rotate(11 238.0 31.8)"/><ellipse cx="238.0" cy="31.8" rx="7.2" ry="5.0" fill="url(#gw)" opacity="0.45" transform="rotate(11 238.0 31.8)"/><ellipse cx="238.2" cy="34.0" rx="4.1" ry="4.1" fill="url(#gw)" opacity="0.35"/><ellipse cx="243.0" cy="50.0" rx="10.4" ry="7.2" fill="url(#gw)" opacity="0.13" transform="rotate(11 243.0 50.0)"/><ellipse cx="243.0" cy="50.0" rx="5.8" ry="4.0" fill="url(#gw)" opacity="0.33" transform="rotate(11 243.0 50.0)"/><ellipse cx="243.2" cy="51.8" rx="3.2" ry="3.2" fill="url(#gw)" opacity="0.26"/><ellipse cx="229.6" cy="42.7" rx="7.8" ry="5.4" fill="url(#gw)" opacity="0.09" transform="rotate(37 229.6 42.7)"/><ellipse cx="229.6" cy="42.7" rx="4.3" ry="3.0" fill="url(#gw)" opacity="0.22" transform="rotate(37 229.6 42.7)"/><ellipse cx="223.5" cy="68.4" rx="7.8" ry="5.4" fill="url(#gw)" opacity="0.07" transform="rotate(122 223.5 68.4)"/><ellipse cx="223.5" cy="68.4" rx="4.3" ry="3.0" fill="url(#gw)" opacity="0.17" transform="rotate(122 223.5 68.4)"/><ellipse cx="205.0" cy="73.3" rx="7.8" ry="5.4" fill="url(#gw)" opacity="0.07" transform="rotate(77 205.0 73.3)"/><ellipse cx="205.0" cy="73.3" rx="4.3" ry="3.0" fill="url(#gw)" opacity="0.17" transform="rotate(77 205.0 73.3)"/><ellipse cx="128.5" cy="92.0" rx="13.0" ry="9.0" fill="url(#gw)" opacity="0.33" transform="rotate(57 128.5 92.0)"/><ellipse cx="128.5" cy="92.0" rx="7.2" ry="5.0" fill="url(#gw)" opacity="0.85" transform="rotate(57 128.5 92.0)"/><ellipse cx="127.0" cy="93.7" rx="4.1" ry="4.1" fill="url(#gw)" opacity="0.66"/><ellipse cx="149.0" cy="102.6" rx="13.0" ry="9.0" fill="url(#gw)" opacity="0.08" transform="rotate(105 149.0 102.6)"/><ellipse cx="149.0" cy="102.6" rx="7.2" ry="5.0" fill="url(#gw)" opacity="0.20" transform="rotate(105 149.0 102.6)"/><ellipse cx="146.8" cy="102.6" rx="4.1" ry="4.1" fill="url(#gw)" opacity="0.15"/><ellipse cx="156.3" cy="105.5" rx="10.4" ry="7.2" fill="url(#gw)" opacity="0.09" transform="rotate(82 156.3 105.5)"/><ellipse cx="156.3" cy="105.5" rx="5.8" ry="4.0" fill="url(#gw)" opacity="0.23" transform="rotate(82 156.3 105.5)"/><ellipse cx="154.7" cy="106.2" rx="3.2" ry="3.2" fill="url(#gw)" opacity="0.18"/><ellipse cx="182.0" cy="107.5" rx="7.8" ry="5.4" fill="url(#gw)" opacity="0.08" transform="rotate(54 182.0 107.5)"/><ellipse cx="182.0" cy="107.5" rx="4.3" ry="3.0" fill="url(#gw)" opacity="0.20" transform="rotate(54 182.0 107.5)"/><ellipse cx="193.7" cy="112.8" rx="9.1" ry="6.3" fill="url(#gw)" opacity="0.09" transform="rotate(143 193.7 112.8)"/><ellipse cx="193.7" cy="112.8" rx="5.1" ry="3.5" fill="url(#gw)" opacity="0.23" transform="rotate(143 193.7 112.8)"/><ellipse cx="168.5" cy="101.4" rx="7.8" ry="5.4" fill="url(#gw)" opacity="0.05" transform="rotate(126 168.5 101.4)"/><ellipse cx="168.5" cy="101.4" rx="4.3" ry="3.0" fill="url(#gw)" opacity="0.14" transform="rotate(126 168.5 101.4)"/><ellipse cx="78.6" cy="117.2" rx="10.4" ry="7.2" fill="url(#gw)" opacity="0.11" transform="rotate(44 78.6 117.2)"/><ellipse cx="78.6" cy="117.2" rx="5.8" ry="4.0" fill="url(#gw)" opacity="0.28" transform="rotate(44 78.6 117.2)"/><ellipse cx="77.7" cy="118.8" rx="3.2" ry="3.2" fill="url(#gw)" opacity="0.22"/><ellipse cx="51.3" cy="118.5" rx="10.4" ry="7.2" fill="url(#gw)" opacity="0.07" transform="rotate(103 51.3 118.5)"/><ellipse cx="51.3" cy="118.5" rx="5.8" ry="4.0" fill="url(#gw)" opacity="0.17" transform="rotate(103 51.3 118.5)"/><ellipse cx="49.5" cy="118.6" rx="3.2" ry="3.2" fill="url(#gw)" opacity="0.13"/><ellipse cx="99.4" cy="135.6" rx="11.7" ry="8.1" fill="url(#gw)" opacity="0.12" transform="rotate(95 99.4 135.6)"/><ellipse cx="99.4" cy="135.6" rx="6.5" ry="4.5" fill="url(#gw)" opacity="0.31" transform="rotate(95 99.4 135.6)"/><ellipse cx="97.4" cy="136.0" rx="3.6" ry="3.6" fill="url(#gw)" opacity="0.24"/><ellipse cx="105.0" cy="141.7" rx="7.8" ry="5.4" fill="url(#gw)" opacity="0.07" transform="rotate(158 105.0 141.7)"/><ellipse cx="105.0" cy="141.7" rx="4.3" ry="3.0" fill="url(#gw)" opacity="0.17" transform="rotate(158 105.0 141.7)"/><ellipse cx="124.6" cy="146.0" rx="13.0" ry="9.0" fill="url(#gw)" opacity="0.13" transform="rotate(131 124.6 146.0)"/><ellipse cx="124.6" cy="146.0" rx="7.2" ry="5.0" fill="url(#gw)" opacity="0.33" transform="rotate(131 124.6 146.0)"/><ellipse cx="122.6" cy="145.0" rx="4.1" ry="4.1" fill="url(#gw)" opacity="0.26"/><ellipse cx="131.9" cy="153.9" rx="10.4" ry="7.2" fill="url(#gw)" opacity="0.12" transform="rotate(52 131.9 153.9)"/><ellipse cx="131.9" cy="153.9" rx="5.8" ry="4.0" fill="url(#gw)" opacity="0.31" transform="rotate(52 131.9 153.9)"/><ellipse cx="130.8" cy="155.4" rx="3.2" ry="3.2" fill="url(#gw)" opacity="0.24"/><ellipse cx="144.0" cy="154.4" rx="7.8" ry="5.4" fill="url(#gw)" opacity="0.07" transform="rotate(176 144.0 154.4)"/><ellipse cx="144.0" cy="154.4" rx="4.3" ry="3.0" fill="url(#gw)" opacity="0.17" transform="rotate(176 144.0 154.4)"/><ellipse cx="12.2" cy="146.6" rx="10.4" ry="7.2" fill="url(#gw)" opacity="0.08" transform="rotate(21 12.2 146.6)"/><ellipse cx="12.2" cy="146.6" rx="5.8" ry="4.0" fill="url(#gw)" opacity="0.20" transform="rotate(21 12.2 146.6)"/><ellipse cx="12.0" cy="148.4" rx="3.2" ry="3.2" fill="url(#gw)" opacity="0.15"/><ellipse cx="42.7" cy="147.8" rx="6.5" ry="4.5" fill="url(#gw)" opacity="0.05" transform="rotate(75 42.7 147.8)"/><ellipse cx="42.7" cy="147.8" rx="3.6" ry="2.5" fill="url(#gw)" opacity="0.14" transform="rotate(75 42.7 147.8)"/><ellipse cx="78.0" cy="157.5" rx="10.4" ry="7.2" fill="url(#gw)" opacity="0.14" transform="rotate(136 78.0 157.5)"/><ellipse cx="78.0" cy="157.5" rx="5.8" ry="4.0" fill="url(#gw)" opacity="0.36" transform="rotate(136 78.0 157.5)"/><ellipse cx="76.5" cy="156.6" rx="3.2" ry="3.2" fill="url(#gw)" opacity="0.28"/><ellipse cx="62.3" cy="167.8" rx="6.5" ry="4.5" fill="url(#gw)" opacity="0.07" transform="rotate(27 62.3 167.8)"/><ellipse cx="62.3" cy="167.8" rx="3.6" ry="2.5" fill="url(#gw)" opacity="0.17" transform="rotate(27 62.3 167.8)"/><ellipse cx="101.4" cy="171.0" rx="7.8" ry="5.4" fill="url(#gw)" opacity="0.09" transform="rotate(88 101.4 171.0)"/><ellipse cx="101.4" cy="171.0" rx="4.3" ry="3.0" fill="url(#gw)" opacity="0.22" transform="rotate(88 101.4 171.0)"/><ellipse cx="163.0" cy="161.7" rx="13.0" ry="9.0" fill="url(#gw)" opacity="0.12" transform="rotate(7 163.0 161.7)"/><ellipse cx="163.0" cy="161.7" rx="7.2" ry="5.0" fill="url(#gw)" opacity="0.31" transform="rotate(7 163.0 161.7)"/><ellipse cx="163.3" cy="163.9" rx="4.1" ry="4.1" fill="url(#gw)" opacity="0.24"/><ellipse cx="156.3" cy="171.0" rx="15.6" ry="10.8" fill="url(#gw)" opacity="0.08" transform="rotate(120 156.3 171.0)"/><ellipse cx="156.3" cy="171.0" rx="8.7" ry="6.0" fill="url(#gw)" opacity="0.20" transform="rotate(120 156.3 171.0)"/><ellipse cx="153.7" cy="170.3" rx="4.9" ry="4.9" fill="url(#gw)" opacity="0.15"/><ellipse cx="163.7" cy="177.0" rx="10.4" ry="7.2" fill="url(#gw)" opacity="0.07" transform="rotate(138 163.7 177.0)"/><ellipse cx="163.7" cy="177.0" rx="5.8" ry="4.0" fill="url(#gw)" opacity="0.17" transform="rotate(138 163.7 177.0)"/><ellipse cx="162.2" cy="176.0" rx="3.2" ry="3.2" fill="url(#gw)" opacity="0.13"/><ellipse cx="179.5" cy="182.0" rx="13.0" ry="9.0" fill="url(#gw)" opacity="0.07" transform="rotate(103 179.5 182.0)"/><ellipse cx="179.5" cy="182.0" rx="7.2" ry="5.0" fill="url(#gw)" opacity="0.17" transform="rotate(103 179.5 182.0)"/><ellipse cx="177.3" cy="182.1" rx="4.1" ry="4.1" fill="url(#gw)" opacity="0.13"/><ellipse cx="141.7" cy="182.0" rx="7.8" ry="5.4" fill="url(#gw)" opacity="0.07" transform="rotate(158 141.7 182.0)"/><ellipse cx="141.7" cy="182.0" rx="4.3" ry="3.0" fill="url(#gw)" opacity="0.17" transform="rotate(158 141.7 182.0)"/><ellipse cx="153.0" cy="195.4" rx="7.8" ry="5.4" fill="url(#gw)" opacity="0.07" transform="rotate(56 153.0 195.4)"/><ellipse cx="153.0" cy="195.4" rx="4.3" ry="3.0" fill="url(#gw)" opacity="0.17" transform="rotate(56 153.0 195.4)"/><ellipse cx="162.4" cy="200.8" rx="15.6" ry="10.8" fill="url(#gw)" opacity="0.08" transform="rotate(125 162.4 200.8)"/><ellipse cx="162.4" cy="200.8" rx="8.7" ry="6.0" fill="url(#gw)" opacity="0.20" transform="rotate(125 162.4 200.8)"/><ellipse cx="159.9" cy="199.9" rx="4.9" ry="4.9" fill="url(#gw)" opacity="0.15"/><ellipse cx="205.0" cy="197.8" rx="15.6" ry="10.8" fill="url(#gw)" opacity="0.08" transform="rotate(107 205.0 197.8)"/><ellipse cx="205.0" cy="197.8" rx="8.7" ry="6.0" fill="url(#gw)" opacity="0.21" transform="rotate(107 205.0 197.8)"/><ellipse cx="202.3" cy="197.7" rx="4.9" ry="4.9" fill="url(#gw)" opacity="0.16"/><ellipse cx="223.5" cy="173.4" rx="15.6" ry="10.8" fill="url(#gw)" opacity="0.10" transform="rotate(104 223.5 173.4)"/><ellipse cx="223.5" cy="173.4" rx="8.7" ry="6.0" fill="url(#gw)" opacity="0.25" transform="rotate(104 223.5 173.4)"/><ellipse cx="220.8" cy="173.5" rx="4.9" ry="4.9" fill="url(#gw)" opacity="0.20"/><ellipse cx="233.3" cy="174.6" rx="18.2" ry="12.6" fill="url(#gw)" opacity="0.12" transform="rotate(82 233.3 174.6)"/><ellipse cx="233.3" cy="174.6" rx="10.2" ry="7.0" fill="url(#gw)" opacity="0.31" transform="rotate(82 233.3 174.6)"/><ellipse cx="230.4" cy="175.9" rx="5.7" ry="5.7" fill="url(#gw)" opacity="0.24"/><ellipse cx="241.8" cy="156.3" rx="13.0" ry="9.0" fill="url(#gw)" opacity="0.11" transform="rotate(151 241.8 156.3)"/><ellipse cx="241.8" cy="156.3" rx="7.2" ry="5.0" fill="url(#gw)" opacity="0.28" transform="rotate(151 241.8 156.3)"/><ellipse cx="240.2" cy="154.7" rx="4.1" ry="4.1" fill="url(#gw)" opacity="0.22"/><ellipse cx="251.6" cy="155.0" rx="7.8" ry="5.4" fill="url(#gw)" opacity="0.07" transform="rotate(170 251.6 155.0)"/><ellipse cx="251.6" cy="155.0" rx="4.3" ry="3.0" fill="url(#gw)" opacity="0.17" transform="rotate(170 251.6 155.0)"/><ellipse cx="230.8" cy="211.3" rx="18.2" ry="12.6" fill="url(#gw)" opacity="0.14" transform="rotate(85 230.8 211.3)"/><ellipse cx="230.8" cy="211.3" rx="10.2" ry="7.0" fill="url(#gw)" opacity="0.36" transform="rotate(85 230.8 211.3)"/><ellipse cx="227.8" cy="212.4" rx="5.7" ry="5.7" fill="url(#gw)" opacity="0.28"/><ellipse cx="196.6" cy="215.0" rx="18.2" ry="12.6" fill="url(#gw)" opacity="0.08" transform="rotate(120 196.6 215.0)"/><ellipse cx="196.6" cy="215.0" rx="10.2" ry="7.0" fill="url(#gw)" opacity="0.20" transform="rotate(120 196.6 215.0)"/><ellipse cx="193.5" cy="214.2" rx="5.7" ry="5.7" fill="url(#gw)" opacity="0.15"/><ellipse cx="206.4" cy="221.0" rx="20.8" ry="14.4" fill="url(#gw)" opacity="0.09" transform="rotate(11 206.4 221.0)"/><ellipse cx="206.4" cy="221.0" rx="11.6" ry="8.0" fill="url(#gw)" opacity="0.22" transform="rotate(11 206.4 221.0)"/><ellipse cx="206.7" cy="224.6" rx="6.5" ry="6.5" fill="url(#gw)" opacity="0.17"/><ellipse cx="204.0" cy="229.6" rx="13.0" ry="9.0" fill="url(#gw)" opacity="0.07" transform="rotate(126 204.0 229.6)"/><ellipse cx="204.0" cy="229.6" rx="7.2" ry="5.0" fill="url(#gw)" opacity="0.17" transform="rotate(126 204.0 229.6)"/><ellipse cx="201.9" cy="228.8" rx="4.1" ry="4.1" fill="url(#gw)" opacity="0.13"/><ellipse cx="216.0" cy="232.0" rx="7.8" ry="5.4" fill="url(#gw)" opacity="0.07" transform="rotate(116 216.0 232.0)"/><ellipse cx="216.0" cy="232.0" rx="4.3" ry="3.0" fill="url(#gw)" opacity="0.17" transform="rotate(116 216.0 232.0)"/><ellipse cx="136.0" cy="234.0" rx="15.6" ry="10.8" fill="url(#gw)" opacity="0.16" transform="rotate(179 136.0 234.0)"/><ellipse cx="136.0" cy="234.0" rx="8.7" ry="6.0" fill="url(#gw)" opacity="0.42" transform="rotate(179 136.0 234.0)"/><ellipse cx="135.2" cy="231.4" rx="4.9" ry="4.9" fill="url(#gw)" opacity="0.33"/><ellipse cx="18.3" cy="216.0" rx="18.2" ry="12.6" fill="url(#gw)" opacity="0.13" transform="rotate(148 18.3 216.0)"/><ellipse cx="18.3" cy="216.0" rx="10.2" ry="7.0" fill="url(#gw)" opacity="0.33" transform="rotate(148 18.3 216.0)"/><ellipse cx="16.0" cy="213.9" rx="5.7" ry="5.7" fill="url(#gw)" opacity="0.26"/><ellipse cx="29.3" cy="216.0" rx="10.4" ry="7.2" fill="url(#gw)" opacity="0.11" transform="rotate(51 29.3 216.0)"/><ellipse cx="29.3" cy="216.0" rx="5.8" ry="4.0" fill="url(#gw)" opacity="0.28" transform="rotate(51 29.3 216.0)"/><ellipse cx="28.2" cy="217.5" rx="3.2" ry="3.2" fill="url(#gw)" opacity="0.22"/><ellipse cx="13.4" cy="223.5" rx="10.4" ry="7.2" fill="url(#gw)" opacity="0.08" transform="rotate(69 13.4 223.5)"/><ellipse cx="13.4" cy="223.5" rx="5.8" ry="4.0" fill="url(#gw)" opacity="0.20" transform="rotate(69 13.4 223.5)"/><ellipse cx="11.9" cy="224.6" rx="3.2" ry="3.2" fill="url(#gw)" opacity="0.15"/><ellipse cx="238.0" cy="201.5" rx="6.5" ry="4.5" fill="url(#gw)" opacity="0.05" transform="rotate(120 238.0 201.5)"/><ellipse cx="238.0" cy="201.5" rx="3.6" ry="2.5" fill="url(#gw)" opacity="0.14" transform="rotate(120 238.0 201.5)"/><ellipse cx="245.5" cy="241.8" rx="6.5" ry="4.5" fill="url(#gw)" opacity="0.05" transform="rotate(4 245.5 241.8)"/><ellipse cx="245.5" cy="241.8" rx="3.6" ry="2.5" fill="url(#gw)" opacity="0.14" transform="rotate(4 245.5 241.8)"/><ellipse cx="75.6" cy="245.7" rx="6.5" ry="4.5" fill="url(#gw)" opacity="0.11" transform="rotate(83 75.6 245.7)"/><ellipse cx="75.6" cy="245.7" rx="3.6" ry="2.5" fill="url(#gw)" opacity="0.28" transform="rotate(83 75.6 245.7)"/><ellipse cx="81.4" cy="230.0" rx="6.5" ry="4.5" fill="url(#gw)" opacity="0.08" transform="rotate(30 81.4 230.0)"/><ellipse cx="81.4" cy="230.0" rx="3.6" ry="2.5" fill="url(#gw)" opacity="0.20" transform="rotate(30 81.4 230.0)"/></g><path d="M0 0H256V256H0ZM4 3V254.5H254V3Z" fill="#000" fill-rule="evenodd"/></svg><rect x="1625.5" y="182.5" width="10" height="222.5" fill="url(#cbar)" stroke="#000"/><text class="cts" x="1633" y="162" textLength="37" lengthAdjust="spacingAndGlyphs">Cts</text><text class="num" x="1639" y="188.0" textLength="42.8" lengthAdjust="spacingAndGlyphs">9636</text><text class="num" x="1639" y="242.2" textLength="42.8" lengthAdjust="spacingAndGlyphs">7227</text><text class="num" x="1639" y="296.4" textLength="42.8" lengthAdjust="spacingAndGlyphs">4818</text><text class="num" x="1639" y="350.6" textLength="42.8" lengthAdjust="spacingAndGlyphs">2409</text><text class="num" x="1639" y="404.8" textLength="10.7" lengthAdjust="spacingAndGlyphs">0</text><text class="lb" x="1034.5" y="425" textLength="63" lengthAdjust="spacingAndGlyphs">12C 13C</text><svg x="1029" y="429" width="256" height="256" viewBox="0 0 256 256"><g filter="url(#cmf)"><rect x="-12" y="-12" width="280" height="280" fill="#000"/><g filter="url(#web2)"><rect x="-12" y="-12" width="280" height="280" fill="#040404"/><ellipse cx="19.5" cy="14.7" rx="11.9" ry="11.9" fill="#131313" opacity="0.73"/><ellipse cx="41.5" cy="9.8" rx="18.5" ry="11.9" fill="#131313" opacity="0.91"/><ellipse cx="55.0" cy="19.5" rx="8.6" ry="11.9" fill="#131313" opacity="0.82"/><ellipse cx="80.6" cy="8.5" rx="11.9" ry="6.9" fill="#131313" opacity="0.73"/><ellipse cx="70.8" cy="29.3" rx="18.5" ry="15.2" fill="#131313" opacity="1.00"/><ellipse cx="83.0" cy="36.6" rx="15.2" ry="18.5" fill="#131313" opacity="1.00"/><ellipse cx="122.1" cy="15.9" rx="10.2" ry="11.9" fill="#131313" opacity="0.73"/><ellipse cx="146.6" cy="7.3" rx="11.9" ry="8.6" fill="#131313" opacity="0.73"/><ellipse cx="141.7" cy="26.9" rx="21.8" ry="18.5" fill="#131313" opacity="1.00"/><ellipse cx="161.2" cy="14.7" rx="15.2" ry="15.2" fill="#131313" opacity="1.00"/><ellipse cx="168.5" cy="39.1" rx="18.5" ry="15.2" fill="#131313" opacity="1.00"/><ellipse cx="190.5" cy="7.3" rx="21.8" ry="10.2" fill="#131313" opacity="1.00"/><ellipse cx="214.9" cy="14.7" rx="28.4" ry="18.5" fill="#131313" opacity="1.00"/><ellipse cx="241.8" cy="9.8" rx="15.2" ry="13.5" fill="#131313" opacity="0.91"/><ellipse cx="219.8" cy="36.6" rx="25.1" ry="15.2" fill="#131313" opacity="1.00"/><ellipse cx="207.6" cy="51.3" rx="18.5" ry="11.9" fill="#131313" opacity="1.00"/><ellipse cx="244.3" cy="48.9" rx="8.6" ry="10.2" fill="#131313" opacity="0.73"/><ellipse cx="224.7" cy="63.5" rx="18.5" ry="15.2" fill="#131313" opacity="1.00"/><ellipse cx="240.6" cy="64.7" rx="8.6" ry="8.6" fill="#131313" opacity="0.64"/><ellipse cx="251.6" cy="57.4" rx="6.0" ry="6.0" fill="#131313" opacity="0.64"/><ellipse cx="12.2" cy="39.1" rx="15.2" ry="15.2" fill="#131313" opacity="0.91"/><ellipse cx="24.4" cy="44.0" rx="15.2" ry="11.9" fill="#131313" opacity="0.91"/><ellipse cx="36.6" cy="58.6" rx="15.2" ry="15.2" fill="#131313" opacity="1.00"/><ellipse cx="58.6" cy="52.5" rx="11.9" ry="10.2" fill="#131313" opacity="0.73"/><ellipse cx="75.7" cy="59.8" rx="15.2" ry="13.5" fill="#131313" opacity="0.91"/><ellipse cx="66.0" cy="76.9" rx="13.5" ry="8.6" fill="#131313" opacity="0.73"/><ellipse cx="109.9" cy="48.9" rx="15.2" ry="18.5" fill="#131313" opacity="1.00"/><ellipse cx="127.0" cy="39.1" rx="15.2" ry="11.9" fill="#131313" opacity="0.91"/><ellipse cx="114.8" cy="70.8" rx="18.5" ry="15.2" fill="#131313" opacity="1.00"/><ellipse cx="119.7" cy="85.5" rx="11.9" ry="10.2" fill="#131313" opacity="0.82"/><ellipse cx="7.3" cy="68.4" rx="10.2" ry="21.8" fill="#131313" opacity="1.00"/><ellipse cx="19.5" cy="70.8" rx="10.2" ry="11.9" fill="#131313" opacity="0.73"/><ellipse cx="7.3" cy="97.7" rx="8.6" ry="21.8" fill="#131313" opacity="0.91"/><ellipse cx="31.8" cy="92.8" rx="15.2" ry="21.8" fill="#131313" opacity="1.00"/><ellipse cx="45.2" cy="102.6" rx="10.2" ry="10.2" fill="#131313" opacity="0.73"/><ellipse cx="42.7" cy="78.2" rx="6.9" ry="6.9" fill="#131313" opacity="0.64"/><ellipse cx="81.8" cy="96.5" rx="15.2" ry="18.5" fill="#131313" opacity="1.00"/><ellipse cx="55.0" cy="117.2" rx="15.2" ry="10.2" fill="#131313" opacity="0.82"/><ellipse cx="75.7" cy="120.9" rx="10.2" ry="11.9" fill="#131313" opacity="0.73"/><ellipse cx="41.5" cy="122.1" rx="7.9" ry="7.9" fill="#131313" opacity="0.64"/><ellipse cx="161.2" cy="62.3" rx="10.2" ry="10.2" fill="#131313" opacity="0.73"/><ellipse cx="180.8" cy="66.0" rx="15.2" ry="15.2" fill="#131313" opacity="0.91"/><ellipse cx="188.1" cy="85.5" rx="10.2" ry="18.5" fill="#131313" opacity="0.91"/><ellipse cx="131.9" cy="90.4" rx="15.2" ry="10.2" fill="#131313" opacity="0.82"/><ellipse cx="156.3" cy="97.7" rx="25.1" ry="18.5" fill="#131313" opacity="1.00"/><ellipse cx="158.8" cy="119.7" rx="18.5" ry="13.5" fill="#131313" opacity="1.00"/><ellipse cx="210.1" cy="96.5" rx="8.6" ry="8.6" fill="#131313" opacity="0.64"/><ellipse cx="195.4" cy="109.9" rx="15.2" ry="10.2" fill="#131313" opacity="0.82"/><ellipse cx="183.2" cy="117.2" rx="7.9" ry="7.9" fill="#131313" opacity="0.64"/><ellipse cx="241.8" cy="102.6" rx="6.9" ry="6.9" fill="#131313" opacity="0.64"/><ellipse cx="117.2" cy="98.9" rx="6.9" ry="6.9" fill="#131313" opacity="0.64"/><ellipse cx="14.7" cy="131.9" rx="16.8" ry="15.2" fill="#131313" opacity="1.00"/><ellipse cx="33.0" cy="135.6" rx="7.9" ry="7.9" fill="#131313" opacity="0.64"/><ellipse cx="47.6" cy="139.2" rx="13.5" ry="15.2" fill="#131313" opacity="0.82"/><ellipse cx="66.0" cy="145.3" rx="7.9" ry="7.9" fill="#131313" opacity="0.64"/><ellipse cx="24.4" cy="160.0" rx="21.8" ry="10.2" fill="#131313" opacity="0.91"/><ellipse cx="48.9" cy="163.7" rx="7.9" ry="7.9" fill="#131313" opacity="0.64"/><ellipse cx="13.4" cy="174.6" rx="10.2" ry="6.9" fill="#131313" opacity="0.64"/><ellipse cx="44.0" cy="175.9" rx="6.0" ry="6.0" fill="#131313" opacity="0.64"/><ellipse cx="94.0" cy="136.8" rx="15.2" ry="11.9" fill="#131313" opacity="0.82"/><ellipse cx="90.4" cy="151.4" rx="13.5" ry="15.2" fill="#131313" opacity="0.91"/><ellipse cx="75.7" cy="158.8" rx="10.2" ry="13.5" fill="#131313" opacity="0.82"/><ellipse cx="64.7" cy="171.0" rx="10.2" ry="10.2" fill="#131313" opacity="0.73"/><ellipse cx="109.9" cy="156.3" rx="15.2" ry="18.5" fill="#131313" opacity="1.00"/><ellipse cx="97.7" cy="174.6" rx="8.6" ry="10.2" fill="#131313" opacity="0.73"/><ellipse cx="127.0" cy="149.0" rx="15.2" ry="15.2" fill="#131313" opacity="1.00"/><ellipse cx="141.7" cy="151.4" rx="15.2" ry="18.5" fill="#131313" opacity="1.00"/><ellipse cx="131.9" cy="166.1" rx="8.6" ry="8.6" fill="#131313" opacity="0.73"/><ellipse cx="158.8" cy="161.2" rx="15.2" ry="21.8" fill="#131313" opacity="1.00"/><ellipse cx="161.2" cy="140.4" rx="6.9" ry="6.9" fill="#131313" opacity="0.64"/><ellipse cx="174.6" cy="138.0" rx="7.9" ry="7.9" fill="#131313" opacity="0.64"/><ellipse cx="175.9" cy="180.8" rx="18.5" ry="10.2" fill="#131313" opacity="0.91"/><ellipse cx="195.4" cy="180.8" rx="10.2" ry="6.9" fill="#131313" opacity="0.73"/><ellipse cx="206.4" cy="174.6" rx="6.9" ry="6.9" fill="#131313" opacity="0.64"/><ellipse cx="141.7" cy="183.2" rx="6.9" ry="11.9" fill="#131313" opacity="0.73"/><ellipse cx="156.3" cy="183.2" rx="8.6" ry="8.6" fill="#131313" opacity="0.73"/><ellipse cx="133.1" cy="195.4" rx="6.9" ry="6.9" fill="#131313" opacity="0.64"/><ellipse cx="241.8" cy="156.3" rx="15.2" ry="13.5" fill="#131313" opacity="0.82"/><ellipse cx="228.4" cy="174.6" rx="16.8" ry="15.2" fill="#131313" opacity="1.00"/><ellipse cx="246.7" cy="180.8" rx="10.2" ry="8.6" fill="#131313" opacity="0.73"/><ellipse cx="249.1" cy="195.4" rx="6.9" ry="11.9" fill="#131313" opacity="0.73"/><ellipse cx="158.8" cy="200.3" rx="18.5" ry="13.5" fill="#131313" opacity="1.00"/><ellipse cx="185.6" cy="202.7" rx="15.2" ry="13.5" fill="#131313" opacity="0.91"/><ellipse cx="207.6" cy="197.9" rx="11.9" ry="10.2" fill="#131313" opacity="0.73"/><ellipse cx="146.6" cy="210.1" rx="11.9" ry="18.5" fill="#131313" opacity="0.91"/><ellipse cx="180.8" cy="217.4" rx="15.2" ry="15.2" fill="#131313" opacity="1.00"/><ellipse cx="202.7" cy="214.9" rx="18.5" ry="15.2" fill="#131313" opacity="1.00"/><ellipse cx="197.9" cy="232.0" rx="21.8" ry="15.2" fill="#131313" opacity="1.00"/><ellipse cx="232.0" cy="210.1" rx="11.9" ry="18.5" fill="#131313" opacity="0.91"/><ellipse cx="244.3" cy="219.8" rx="13.5" ry="15.2" fill="#131313" opacity="0.82"/><ellipse cx="236.9" cy="234.5" rx="13.5" ry="11.9" fill="#131313" opacity="0.82"/><ellipse cx="249.1" cy="239.4" rx="6.9" ry="10.2" fill="#131313" opacity="0.64"/><ellipse cx="224.7" cy="246.7" rx="6.9" ry="6.9" fill="#131313" opacity="0.64"/><ellipse cx="202.7" cy="249.1" rx="13.5" ry="6.9" fill="#131313" opacity="0.73"/><ellipse cx="136.8" cy="234.5" rx="11.9" ry="10.2" fill="#131313" opacity="0.73"/><ellipse cx="147.8" cy="234.5" rx="6.9" ry="6.9" fill="#131313" opacity="0.64"/><ellipse cx="163.7" cy="235.7" rx="10.2" ry="6.0" fill="#131313" opacity="0.64"/><ellipse cx="129.5" cy="249.1" rx="6.9" ry="6.9" fill="#131313" opacity="0.64"/><ellipse cx="17.1" cy="196.6" rx="6.0" ry="6.0" fill="#131313" opacity="0.64"/><ellipse cx="19.5" cy="214.9" rx="16.8" ry="18.5" fill="#131313" opacity="1.00"/><ellipse cx="14.7" cy="238.2" rx="6.0" ry="8.6" fill="#131313" opacity="0.64"/><ellipse cx="41.5" cy="228.4" rx="15.2" ry="16.8" fill="#131313" opacity="1.00"/><ellipse cx="61.1" cy="217.4" rx="13.5" ry="15.2" fill="#131313" opacity="0.91"/><ellipse cx="63.5" cy="238.2" rx="13.5" ry="11.9" fill="#131313" opacity="0.82"/><ellipse cx="80.6" cy="230.8" rx="8.6" ry="10.2" fill="#131313" opacity="0.73"/><ellipse cx="94.0" cy="225.9" rx="6.9" ry="6.9" fill="#131313" opacity="0.64"/><ellipse cx="44.0" cy="250.4" rx="9.3" ry="6.0" fill="#131313" opacity="0.64"/><ellipse cx="78.2" cy="244.3" rx="6.0" ry="6.0" fill="#131313" opacity="0.64"/><ellipse cx="115" cy="117" rx="24" ry="15" fill="#000" opacity="0.8" transform="rotate(-11 115 117)"/><ellipse cx="203" cy="150" rx="27" ry="22" fill="#000" opacity="0.8" transform="rotate(-21 203 150)"/><ellipse cx="228" cy="100" rx="20" ry="18" fill="#000" opacity="0.6" transform="rotate(9 228 100)"/><ellipse cx="90" cy="214" rx="45" ry="20" fill="#000" opacity="0.6" transform="rotate(-26 90 214)"/><ellipse cx="49" cy="29" rx="12" ry="11" fill="#000" opacity="0.5" transform="rotate(2 49 29)"/><ellipse cx="107" cy="15" rx="20" ry="9" fill="#000" opacity="0.6" transform="rotate(-8 107 15)"/><ellipse cx="146" cy="63" rx="10" ry="10" fill="#000" opacity="0.5" transform="rotate(-27 146 63)"/><ellipse cx="176" cy="61" rx="9" ry="10" fill="#000" opacity="0.5" transform="rotate(0 176 61)"/><ellipse cx="232" cy="82" rx="16" ry="8" fill="#000" opacity="0.5" transform="rotate(-28 232 82)"/><ellipse cx="171" cy="222" rx="12" ry="13" fill="#000" opacity="0.5" transform="rotate(-4 171 222)"/></g><ellipse cx="19.5" cy="14.7" rx="10.4" ry="7.2" fill="url(#gw)" opacity="0.20" transform="rotate(13 19.5 14.7)"/><ellipse cx="19.5" cy="14.7" rx="5.8" ry="4.0" fill="url(#gw)" opacity="0.50" transform="rotate(13 19.5 14.7)"/><ellipse cx="19.6" cy="16.5" rx="3.2" ry="3.2" fill="url(#gw)" opacity="0.39"/><ellipse cx="38.0" cy="5.0" rx="10.4" ry="7.2" fill="url(#gw)" opacity="0.09" transform="rotate(16 38.0 5.0)"/><ellipse cx="38.0" cy="5.0" rx="5.8" ry="4.0" fill="url(#gw)" opacity="0.22" transform="rotate(16 38.0 5.0)"/><ellipse cx="38.0" cy="6.8" rx="3.2" ry="3.2" fill="url(#gw)" opacity="0.17"/><ellipse cx="7.0" cy="40.0" rx="7.8" ry="5.4" fill="url(#gw)" opacity="0.08" transform="rotate(76 7.0 40.0)"/><ellipse cx="7.0" cy="40.0" rx="4.3" ry="3.0" fill="url(#gw)" opacity="0.20" transform="rotate(76 7.0 40.0)"/><ellipse cx="29.0" cy="36.6" rx="7.8" ry="5.4" fill="url(#gw)" opacity="0.05" transform="rotate(149 29.0 36.6)"/><ellipse cx="29.0" cy="36.6" rx="4.3" ry="3.0" fill="url(#gw)" opacity="0.14" transform="rotate(149 29.0 36.6)"/><ellipse cx="35.4" cy="57.4" rx="15.6" ry="10.8" fill="url(#gw)" opacity="0.12" transform="rotate(22 35.4 57.4)"/><ellipse cx="35.4" cy="57.4" rx="8.7" ry="6.0" fill="url(#gw)" opacity="0.31" transform="rotate(22 35.4 57.4)"/><ellipse cx="35.1" cy="60.1" rx="4.9" ry="4.9" fill="url(#gw)" opacity="0.24"/><ellipse cx="41.5" cy="68.4" rx="7.8" ry="5.4" fill="url(#gw)" opacity="0.09" transform="rotate(40 41.5 68.4)"/><ellipse cx="41.5" cy="68.4" rx="4.3" ry="3.0" fill="url(#gw)" opacity="0.22" transform="rotate(40 41.5 68.4)"/><ellipse cx="17.0" cy="68.0" rx="10.4" ry="7.2" fill="url(#gw)" opacity="0.08" transform="rotate(113 17.0 68.0)"/><ellipse cx="17.0" cy="68.0" rx="5.8" ry="4.0" fill="url(#gw)" opacity="0.20" transform="rotate(113 17.0 68.0)"/><ellipse cx="15.2" cy="67.8" rx="3.2" ry="3.2" fill="url(#gw)" opacity="0.15"/><ellipse cx="74.5" cy="59.8" rx="15.6" ry="10.8" fill="url(#gw)" opacity="0.12" transform="rotate(171 74.5 59.8)"/><ellipse cx="74.5" cy="59.8" rx="8.7" ry="6.0" fill="url(#gw)" opacity="0.31" transform="rotate(171 74.5 59.8)"/><ellipse cx="73.4" cy="57.4" rx="4.9" ry="4.9" fill="url(#gw)" opacity="0.24"/><ellipse cx="91.0" cy="64.0" rx="6.5" ry="4.5" fill="url(#gw)" opacity="0.09" transform="rotate(104 91.0 64.0)"/><ellipse cx="91.0" cy="64.0" rx="3.6" ry="2.5" fill="url(#gw)" opacity="0.22" transform="rotate(104 91.0 64.0)"/><ellipse cx="111.0" cy="47.6" rx="10.4" ry="7.2" fill="url(#gw)" opacity="0.08" transform="rotate(71 111.0 47.6)"/><ellipse cx="111.0" cy="47.6" rx="5.8" ry="4.0" fill="url(#gw)" opacity="0.20" transform="rotate(71 111.0 47.6)"/><ellipse cx="109.5" cy="48.6" rx="3.2" ry="3.2" fill="url(#gw)" opacity="0.15"/><ellipse cx="85.5" cy="31.8" rx="7.8" ry="5.4" fill="url(#gw)" opacity="0.05" transform="rotate(176 85.5 31.8)"/><ellipse cx="85.5" cy="31.8" rx="4.3" ry="3.0" fill="url(#gw)" opacity="0.14" transform="rotate(176 85.5 31.8)"/><ellipse cx="99.0" cy="44.0" rx="7.8" ry="5.4" fill="url(#gw)" opacity="0.05" transform="rotate(8 99.0 44.0)"/><ellipse cx="99.0" cy="44.0" rx="4.3" ry="3.0" fill="url(#gw)" opacity="0.14" transform="rotate(8 99.0 44.0)"/><ellipse cx="112.0" cy="69.6" rx="7.8" ry="5.4" fill="url(#gw)" opacity="0.07" transform="rotate(155 112.0 69.6)"/><ellipse cx="112.0" cy="69.6" rx="4.3" ry="3.0" fill="url(#gw)" opacity="0.17" transform="rotate(155 112.0 69.6)"/><ellipse cx="35.4" cy="85.5" rx="10.4" ry="7.2" fill="url(#gw)" opacity="0.07" transform="rotate(52 35.4 85.5)"/><ellipse cx="35.4" cy="85.5" rx="5.8" ry="4.0" fill="url(#gw)" opacity="0.17" transform="rotate(52 35.4 85.5)"/><ellipse cx="34.3" cy="86.9" rx="3.2" ry="3.2" fill="url(#gw)" opacity="0.13"/><ellipse cx="168.5" cy="29.3" rx="7.8" ry="5.4" fill="url(#gw)" opacity="0.08" transform="rotate(26 168.5 29.3)"/><ellipse cx="168.5" cy="29.3" rx="4.3" ry="3.0" fill="url(#gw)" opacity="0.20" transform="rotate(26 168.5 29.3)"/><ellipse cx="180.7" cy="6.8" rx="7.8" ry="5.4" fill="url(#gw)" opacity="0.09" transform="rotate(21 180.7 6.8)"/><ellipse cx="180.7" cy="6.8" rx="4.3" ry="3.0" fill="url(#gw)" opacity="0.22" transform="rotate(21 180.7 6.8)"/><ellipse cx="161.0" cy="7.3" rx="10.4" ry="7.2" fill="url(#gw)" opacity="0.08" transform="rotate(56 161.0 7.3)"/><ellipse cx="161.0" cy="7.3" rx="5.8" ry="4.0" fill="url(#gw)" opacity="0.20" transform="rotate(56 161.0 7.3)"/><ellipse cx="159.8" cy="8.7" rx="3.2" ry="3.2" fill="url(#gw)" opacity="0.15"/><ellipse cx="202.0" cy="6.5" rx="9.1" ry="6.3" fill="url(#gw)" opacity="0.17" transform="rotate(147 202.0 6.5)"/><ellipse cx="202.0" cy="6.5" rx="5.1" ry="3.5" fill="url(#gw)" opacity="0.45" transform="rotate(147 202.0 6.5)"/><ellipse cx="161.5" cy="18.9" rx="7.8" ry="5.4" fill="url(#gw)" opacity="0.13" transform="rotate(33 161.5 18.9)"/><ellipse cx="161.5" cy="18.9" rx="4.3" ry="3.0" fill="url(#gw)" opacity="0.33" transform="rotate(33 161.5 18.9)"/><ellipse cx="208.6" cy="26.5" rx="7.8" ry="5.4" fill="url(#gw)" opacity="0.13" transform="rotate(105 208.6 26.5)"/><ellipse cx="208.6" cy="26.5" rx="4.3" ry="3.0" fill="url(#gw)" opacity="0.33" transform="rotate(105 208.6 26.5)"/><ellipse cx="217.4" cy="37.9" rx="18.2" ry="12.6" fill="url(#gw)" opacity="0.11" transform="rotate(115 217.4 37.9)"/><ellipse cx="217.4" cy="37.9" rx="10.2" ry="7.0" fill="url(#gw)" opacity="0.28" transform="rotate(115 217.4 37.9)"/><ellipse cx="214.3" cy="37.4" rx="5.7" ry="5.7" fill="url(#gw)" opacity="0.22"/><ellipse cx="207.9" cy="46.9" rx="15.6" ry="10.8" fill="url(#gw)" opacity="0.33" transform="rotate(67 207.9 46.9)"/><ellipse cx="207.9" cy="46.9" rx="8.7" ry="6.0" fill="url(#gw)" opacity="0.85" transform="rotate(67 207.9 46.9)"/><ellipse cx="205.8" cy="48.6" rx="4.9" ry="4.9" fill="url(#gw)" opacity="0.66"/><ellipse cx="199.0" cy="52.5" rx="10.4" ry="7.2" fill="url(#gw)" opacity="0.08" transform="rotate(99 199.0 52.5)"/><ellipse cx="199.0" cy="52.5" rx="5.8" ry="4.0" fill="url(#gw)" opacity="0.20" transform="rotate(99 199.0 52.5)"/><ellipse cx="197.2" cy="52.7" rx="3.2" ry="3.2" fill="url(#gw)" opacity="0.15"/><ellipse cx="238.0" cy="31.8" rx="13.0" ry="9.0" fill="url(#gw)" opacity="0.17" transform="rotate(11 238.0 31.8)"/><ellipse cx="238.0" cy="31.8" rx="7.2" ry="5.0" fill="url(#gw)" opacity="0.45" transform="rotate(11 238.0 31.8)"/><ellipse cx="238.2" cy="34.0" rx="4.1" ry="4.1" fill="url(#gw)" opacity="0.35"/><ellipse cx="243.0" cy="50.0" rx="10.4" ry="7.2" fill="url(#gw)" opacity="0.13" transform="rotate(11 243.0 50.0)"/><ellipse cx="243.0" cy="50.0" rx="5.8" ry="4.0" fill="url(#gw)" opacity="0.33" transform="rotate(11 243.0 50.0)"/><ellipse cx="243.2" cy="51.8" rx="3.2" ry="3.2" fill="url(#gw)" opacity="0.26"/><ellipse cx="229.6" cy="42.7" rx="7.8" ry="5.4" fill="url(#gw)" opacity="0.09" transform="rotate(37 229.6 42.7)"/><ellipse cx="229.6" cy="42.7" rx="4.3" ry="3.0" fill="url(#gw)" opacity="0.22" transform="rotate(37 229.6 42.7)"/><ellipse cx="223.5" cy="68.4" rx="7.8" ry="5.4" fill="url(#gw)" opacity="0.07" transform="rotate(122 223.5 68.4)"/><ellipse cx="223.5" cy="68.4" rx="4.3" ry="3.0" fill="url(#gw)" opacity="0.17" transform="rotate(122 223.5 68.4)"/><ellipse cx="205.0" cy="73.3" rx="7.8" ry="5.4" fill="url(#gw)" opacity="0.07" transform="rotate(77 205.0 73.3)"/><ellipse cx="205.0" cy="73.3" rx="4.3" ry="3.0" fill="url(#gw)" opacity="0.17" transform="rotate(77 205.0 73.3)"/><ellipse cx="128.5" cy="92.0" rx="13.0" ry="9.0" fill="url(#gw)" opacity="0.33" transform="rotate(57 128.5 92.0)"/><ellipse cx="128.5" cy="92.0" rx="7.2" ry="5.0" fill="url(#gw)" opacity="0.85" transform="rotate(57 128.5 92.0)"/><ellipse cx="127.0" cy="93.7" rx="4.1" ry="4.1" fill="url(#gw)" opacity="0.66"/><ellipse cx="149.0" cy="102.6" rx="13.0" ry="9.0" fill="url(#gw)" opacity="0.08" transform="rotate(105 149.0 102.6)"/><ellipse cx="149.0" cy="102.6" rx="7.2" ry="5.0" fill="url(#gw)" opacity="0.20" transform="rotate(105 149.0 102.6)"/><ellipse cx="146.8" cy="102.6" rx="4.1" ry="4.1" fill="url(#gw)" opacity="0.15"/><ellipse cx="156.3" cy="105.5" rx="10.4" ry="7.2" fill="url(#gw)" opacity="0.09" transform="rotate(82 156.3 105.5)"/><ellipse cx="156.3" cy="105.5" rx="5.8" ry="4.0" fill="url(#gw)" opacity="0.23" transform="rotate(82 156.3 105.5)"/><ellipse cx="154.7" cy="106.2" rx="3.2" ry="3.2" fill="url(#gw)" opacity="0.18"/><ellipse cx="182.0" cy="107.5" rx="7.8" ry="5.4" fill="url(#gw)" opacity="0.08" transform="rotate(54 182.0 107.5)"/><ellipse cx="182.0" cy="107.5" rx="4.3" ry="3.0" fill="url(#gw)" opacity="0.20" transform="rotate(54 182.0 107.5)"/><ellipse cx="193.7" cy="112.8" rx="9.1" ry="6.3" fill="url(#gw)" opacity="0.09" transform="rotate(143 193.7 112.8)"/><ellipse cx="193.7" cy="112.8" rx="5.1" ry="3.5" fill="url(#gw)" opacity="0.23" transform="rotate(143 193.7 112.8)"/><ellipse cx="168.5" cy="101.4" rx="7.8" ry="5.4" fill="url(#gw)" opacity="0.05" transform="rotate(126 168.5 101.4)"/><ellipse cx="168.5" cy="101.4" rx="4.3" ry="3.0" fill="url(#gw)" opacity="0.14" transform="rotate(126 168.5 101.4)"/><ellipse cx="78.6" cy="117.2" rx="10.4" ry="7.2" fill="url(#gw)" opacity="0.11" transform="rotate(44 78.6 117.2)"/><ellipse cx="78.6" cy="117.2" rx="5.8" ry="4.0" fill="url(#gw)" opacity="0.28" transform="rotate(44 78.6 117.2)"/><ellipse cx="77.7" cy="118.8" rx="3.2" ry="3.2" fill="url(#gw)" opacity="0.22"/><ellipse cx="51.3" cy="118.5" rx="10.4" ry="7.2" fill="url(#gw)" opacity="0.07" transform="rotate(103 51.3 118.5)"/><ellipse cx="51.3" cy="118.5" rx="5.8" ry="4.0" fill="url(#gw)" opacity="0.17" transform="rotate(103 51.3 118.5)"/><ellipse cx="49.5" cy="118.6" rx="3.2" ry="3.2" fill="url(#gw)" opacity="0.13"/><ellipse cx="99.4" cy="135.6" rx="11.7" ry="8.1" fill="url(#gw)" opacity="0.12" transform="rotate(95 99.4 135.6)"/><ellipse cx="99.4" cy="135.6" rx="6.5" ry="4.5" fill="url(#gw)" opacity="0.31" transform="rotate(95 99.4 135.6)"/><ellipse cx="97.4" cy="136.0" rx="3.6" ry="3.6" fill="url(#gw)" opacity="0.24"/><ellipse cx="105.0" cy="141.7" rx="7.8" ry="5.4" fill="url(#gw)" opacity="0.07" transform="rotate(158 105.0 141.7)"/><ellipse cx="105.0" cy="141.7" rx="4.3" ry="3.0" fill="url(#gw)" opacity="0.17" transform="rotate(158 105.0 141.7)"/><ellipse cx="124.6" cy="146.0" rx="13.0" ry="9.0" fill="url(#gw)" opacity="0.13" transform="rotate(131 124.6 146.0)"/><ellipse cx="124.6" cy="146.0" rx="7.2" ry="5.0" fill="url(#gw)" opacity="0.33" transform="rotate(131 124.6 146.0)"/><ellipse cx="122.6" cy="145.0" rx="4.1" ry="4.1" fill="url(#gw)" opacity="0.26"/><ellipse cx="131.9" cy="153.9" rx="10.4" ry="7.2" fill="url(#gw)" opacity="0.12" transform="rotate(52 131.9 153.9)"/><ellipse cx="131.9" cy="153.9" rx="5.8" ry="4.0" fill="url(#gw)" opacity="0.31" transform="rotate(52 131.9 153.9)"/><ellipse cx="130.8" cy="155.4" rx="3.2" ry="3.2" fill="url(#gw)" opacity="0.24"/><ellipse cx="144.0" cy="154.4" rx="7.8" ry="5.4" fill="url(#gw)" opacity="0.07" transform="rotate(176 144.0 154.4)"/><ellipse cx="144.0" cy="154.4" rx="4.3" ry="3.0" fill="url(#gw)" opacity="0.17" transform="rotate(176 144.0 154.4)"/><ellipse cx="12.2" cy="146.6" rx="10.4" ry="7.2" fill="url(#gw)" opacity="0.08" transform="rotate(21 12.2 146.6)"/><ellipse cx="12.2" cy="146.6" rx="5.8" ry="4.0" fill="url(#gw)" opacity="0.20" transform="rotate(21 12.2 146.6)"/><ellipse cx="12.0" cy="148.4" rx="3.2" ry="3.2" fill="url(#gw)" opacity="0.15"/><ellipse cx="42.7" cy="147.8" rx="6.5" ry="4.5" fill="url(#gw)" opacity="0.05" transform="rotate(75 42.7 147.8)"/><ellipse cx="42.7" cy="147.8" rx="3.6" ry="2.5" fill="url(#gw)" opacity="0.14" transform="rotate(75 42.7 147.8)"/><ellipse cx="78.0" cy="157.5" rx="10.4" ry="7.2" fill="url(#gw)" opacity="0.14" transform="rotate(136 78.0 157.5)"/><ellipse cx="78.0" cy="157.5" rx="5.8" ry="4.0" fill="url(#gw)" opacity="0.36" transform="rotate(136 78.0 157.5)"/><ellipse cx="76.5" cy="156.6" rx="3.2" ry="3.2" fill="url(#gw)" opacity="0.28"/><ellipse cx="62.3" cy="167.8" rx="6.5" ry="4.5" fill="url(#gw)" opacity="0.07" transform="rotate(27 62.3 167.8)"/><ellipse cx="62.3" cy="167.8" rx="3.6" ry="2.5" fill="url(#gw)" opacity="0.17" transform="rotate(27 62.3 167.8)"/><ellipse cx="101.4" cy="171.0" rx="7.8" ry="5.4" fill="url(#gw)" opacity="0.09" transform="rotate(88 101.4 171.0)"/><ellipse cx="101.4" cy="171.0" rx="4.3" ry="3.0" fill="url(#gw)" opacity="0.22" transform="rotate(88 101.4 171.0)"/><ellipse cx="163.0" cy="161.7" rx="13.0" ry="9.0" fill="url(#gw)" opacity="0.12" transform="rotate(7 163.0 161.7)"/><ellipse cx="163.0" cy="161.7" rx="7.2" ry="5.0" fill="url(#gw)" opacity="0.31" transform="rotate(7 163.0 161.7)"/><ellipse cx="163.3" cy="163.9" rx="4.1" ry="4.1" fill="url(#gw)" opacity="0.24"/><ellipse cx="156.3" cy="171.0" rx="15.6" ry="10.8" fill="url(#gw)" opacity="0.08" transform="rotate(120 156.3 171.0)"/><ellipse cx="156.3" cy="171.0" rx="8.7" ry="6.0" fill="url(#gw)" opacity="0.20" transform="rotate(120 156.3 171.0)"/><ellipse cx="153.7" cy="170.3" rx="4.9" ry="4.9" fill="url(#gw)" opacity="0.15"/><ellipse cx="163.7" cy="177.0" rx="10.4" ry="7.2" fill="url(#gw)" opacity="0.07" transform="rotate(138 163.7 177.0)"/><ellipse cx="163.7" cy="177.0" rx="5.8" ry="4.0" fill="url(#gw)" opacity="0.17" transform="rotate(138 163.7 177.0)"/><ellipse cx="162.2" cy="176.0" rx="3.2" ry="3.2" fill="url(#gw)" opacity="0.13"/><ellipse cx="179.5" cy="182.0" rx="13.0" ry="9.0" fill="url(#gw)" opacity="0.07" transform="rotate(103 179.5 182.0)"/><ellipse cx="179.5" cy="182.0" rx="7.2" ry="5.0" fill="url(#gw)" opacity="0.17" transform="rotate(103 179.5 182.0)"/><ellipse cx="177.3" cy="182.1" rx="4.1" ry="4.1" fill="url(#gw)" opacity="0.13"/><ellipse cx="141.7" cy="182.0" rx="7.8" ry="5.4" fill="url(#gw)" opacity="0.07" transform="rotate(158 141.7 182.0)"/><ellipse cx="141.7" cy="182.0" rx="4.3" ry="3.0" fill="url(#gw)" opacity="0.17" transform="rotate(158 141.7 182.0)"/><ellipse cx="153.0" cy="195.4" rx="7.8" ry="5.4" fill="url(#gw)" opacity="0.07" transform="rotate(56 153.0 195.4)"/><ellipse cx="153.0" cy="195.4" rx="4.3" ry="3.0" fill="url(#gw)" opacity="0.17" transform="rotate(56 153.0 195.4)"/><ellipse cx="162.4" cy="200.8" rx="15.6" ry="10.8" fill="url(#gw)" opacity="0.08" transform="rotate(125 162.4 200.8)"/><ellipse cx="162.4" cy="200.8" rx="8.7" ry="6.0" fill="url(#gw)" opacity="0.20" transform="rotate(125 162.4 200.8)"/><ellipse cx="159.9" cy="199.9" rx="4.9" ry="4.9" fill="url(#gw)" opacity="0.15"/><ellipse cx="205.0" cy="197.8" rx="15.6" ry="10.8" fill="url(#gw)" opacity="0.08" transform="rotate(107 205.0 197.8)"/><ellipse cx="205.0" cy="197.8" rx="8.7" ry="6.0" fill="url(#gw)" opacity="0.21" transform="rotate(107 205.0 197.8)"/><ellipse cx="202.3" cy="197.7" rx="4.9" ry="4.9" fill="url(#gw)" opacity="0.16"/><ellipse cx="223.5" cy="173.4" rx="15.6" ry="10.8" fill="url(#gw)" opacity="0.10" transform="rotate(104 223.5 173.4)"/><ellipse cx="223.5" cy="173.4" rx="8.7" ry="6.0" fill="url(#gw)" opacity="0.25" transform="rotate(104 223.5 173.4)"/><ellipse cx="220.8" cy="173.5" rx="4.9" ry="4.9" fill="url(#gw)" opacity="0.20"/><ellipse cx="233.3" cy="174.6" rx="18.2" ry="12.6" fill="url(#gw)" opacity="0.12" transform="rotate(82 233.3 174.6)"/><ellipse cx="233.3" cy="174.6" rx="10.2" ry="7.0" fill="url(#gw)" opacity="0.31" transform="rotate(82 233.3 174.6)"/><ellipse cx="230.4" cy="175.9" rx="5.7" ry="5.7" fill="url(#gw)" opacity="0.24"/><ellipse cx="241.8" cy="156.3" rx="13.0" ry="9.0" fill="url(#gw)" opacity="0.11" transform="rotate(151 241.8 156.3)"/><ellipse cx="241.8" cy="156.3" rx="7.2" ry="5.0" fill="url(#gw)" opacity="0.28" transform="rotate(151 241.8 156.3)"/><ellipse cx="240.2" cy="154.7" rx="4.1" ry="4.1" fill="url(#gw)" opacity="0.22"/><ellipse cx="251.6" cy="155.0" rx="7.8" ry="5.4" fill="url(#gw)" opacity="0.07" transform="rotate(170 251.6 155.0)"/><ellipse cx="251.6" cy="155.0" rx="4.3" ry="3.0" fill="url(#gw)" opacity="0.17" transform="rotate(170 251.6 155.0)"/><ellipse cx="230.8" cy="211.3" rx="18.2" ry="12.6" fill="url(#gw)" opacity="0.14" transform="rotate(85 230.8 211.3)"/><ellipse cx="230.8" cy="211.3" rx="10.2" ry="7.0" fill="url(#gw)" opacity="0.36" transform="rotate(85 230.8 211.3)"/><ellipse cx="227.8" cy="212.4" rx="5.7" ry="5.7" fill="url(#gw)" opacity="0.28"/><ellipse cx="196.6" cy="215.0" rx="18.2" ry="12.6" fill="url(#gw)" opacity="0.08" transform="rotate(120 196.6 215.0)"/><ellipse cx="196.6" cy="215.0" rx="10.2" ry="7.0" fill="url(#gw)" opacity="0.20" transform="rotate(120 196.6 215.0)"/><ellipse cx="193.5" cy="214.2" rx="5.7" ry="5.7" fill="url(#gw)" opacity="0.15"/><ellipse cx="206.4" cy="221.0" rx="20.8" ry="14.4" fill="url(#gw)" opacity="0.09" transform="rotate(11 206.4 221.0)"/><ellipse cx="206.4" cy="221.0" rx="11.6" ry="8.0" fill="url(#gw)" opacity="0.22" transform="rotate(11 206.4 221.0)"/><ellipse cx="206.7" cy="224.6" rx="6.5" ry="6.5" fill="url(#gw)" opacity="0.17"/><ellipse cx="204.0" cy="229.6" rx="13.0" ry="9.0" fill="url(#gw)" opacity="0.07" transform="rotate(126 204.0 229.6)"/><ellipse cx="204.0" cy="229.6" rx="7.2" ry="5.0" fill="url(#gw)" opacity="0.17" transform="rotate(126 204.0 229.6)"/><ellipse cx="201.9" cy="228.8" rx="4.1" ry="4.1" fill="url(#gw)" opacity="0.13"/><ellipse cx="216.0" cy="232.0" rx="7.8" ry="5.4" fill="url(#gw)" opacity="0.07" transform="rotate(116 216.0 232.0)"/><ellipse cx="216.0" cy="232.0" rx="4.3" ry="3.0" fill="url(#gw)" opacity="0.17" transform="rotate(116 216.0 232.0)"/><ellipse cx="136.0" cy="234.0" rx="15.6" ry="10.8" fill="url(#gw)" opacity="0.16" transform="rotate(179 136.0 234.0)"/><ellipse cx="136.0" cy="234.0" rx="8.7" ry="6.0" fill="url(#gw)" opacity="0.42" transform="rotate(179 136.0 234.0)"/><ellipse cx="135.2" cy="231.4" rx="4.9" ry="4.9" fill="url(#gw)" opacity="0.33"/><ellipse cx="18.3" cy="216.0" rx="18.2" ry="12.6" fill="url(#gw)" opacity="0.13" transform="rotate(148 18.3 216.0)"/><ellipse cx="18.3" cy="216.0" rx="10.2" ry="7.0" fill="url(#gw)" opacity="0.33" transform="rotate(148 18.3 216.0)"/><ellipse cx="16.0" cy="213.9" rx="5.7" ry="5.7" fill="url(#gw)" opacity="0.26"/><ellipse cx="29.3" cy="216.0" rx="10.4" ry="7.2" fill="url(#gw)" opacity="0.11" transform="rotate(51 29.3 216.0)"/><ellipse cx="29.3" cy="216.0" rx="5.8" ry="4.0" fill="url(#gw)" opacity="0.28" transform="rotate(51 29.3 216.0)"/><ellipse cx="28.2" cy="217.5" rx="3.2" ry="3.2" fill="url(#gw)" opacity="0.22"/><ellipse cx="13.4" cy="223.5" rx="10.4" ry="7.2" fill="url(#gw)" opacity="0.08" transform="rotate(69 13.4 223.5)"/><ellipse cx="13.4" cy="223.5" rx="5.8" ry="4.0" fill="url(#gw)" opacity="0.20" transform="rotate(69 13.4 223.5)"/><ellipse cx="11.9" cy="224.6" rx="3.2" ry="3.2" fill="url(#gw)" opacity="0.15"/><ellipse cx="238.0" cy="201.5" rx="6.5" ry="4.5" fill="url(#gw)" opacity="0.05" transform="rotate(120 238.0 201.5)"/><ellipse cx="238.0" cy="201.5" rx="3.6" ry="2.5" fill="url(#gw)" opacity="0.14" transform="rotate(120 238.0 201.5)"/><ellipse cx="245.5" cy="241.8" rx="6.5" ry="4.5" fill="url(#gw)" opacity="0.05" transform="rotate(4 245.5 241.8)"/><ellipse cx="245.5" cy="241.8" rx="3.6" ry="2.5" fill="url(#gw)" opacity="0.14" transform="rotate(4 245.5 241.8)"/><ellipse cx="75.6" cy="245.7" rx="6.5" ry="4.5" fill="url(#gw)" opacity="0.11" transform="rotate(83 75.6 245.7)"/><ellipse cx="75.6" cy="245.7" rx="3.6" ry="2.5" fill="url(#gw)" opacity="0.28" transform="rotate(83 75.6 245.7)"/><ellipse cx="81.4" cy="230.0" rx="6.5" ry="4.5" fill="url(#gw)" opacity="0.08" transform="rotate(30 81.4 230.0)"/><ellipse cx="81.4" cy="230.0" rx="3.6" ry="2.5" fill="url(#gw)" opacity="0.20" transform="rotate(30 81.4 230.0)"/></g><path d="M0 0H256V256H0ZM4 3V254.5H254V3Z" fill="#000" fill-rule="evenodd"/></svg><rect x="1289.5" y="458.5" width="10" height="222.5" fill="url(#cbar)" stroke="#000"/><text class="cts" x="1297" y="438" textLength="37" lengthAdjust="spacingAndGlyphs">Cts</text><text class="num" x="1303" y="464.0" textLength="32.1" lengthAdjust="spacingAndGlyphs">219</text><text class="num" x="1303" y="518.2" textLength="32.1" lengthAdjust="spacingAndGlyphs">164</text><text class="num" x="1303" y="572.4" textLength="32.1" lengthAdjust="spacingAndGlyphs">109</text><text class="num" x="1303" y="626.6" textLength="21.4" lengthAdjust="spacingAndGlyphs">54</text><text class="num" x="1303" y="680.8" textLength="10.7" lengthAdjust="spacingAndGlyphs">0</text><text class="lb" x="1370.5" y="425" textLength="63" lengthAdjust="spacingAndGlyphs">12C 14N</text><svg x="1365" y="429" width="256" height="256" viewBox="0 0 256 256"><g filter="url(#cmn)"><rect x="-12" y="-12" width="280" height="280" fill="#000"/><g filter="url(#web2)"><rect x="-12" y="-12" width="280" height="280" fill="#070707"/><ellipse cx="19.5" cy="14.7" rx="11.9" ry="11.9" fill="#1e1e1e" opacity="0.73"/><ellipse cx="41.5" cy="9.8" rx="18.5" ry="11.9" fill="#1e1e1e" opacity="0.91"/><ellipse cx="55.0" cy="19.5" rx="8.6" ry="11.9" fill="#1e1e1e" opacity="0.82"/><ellipse cx="80.6" cy="8.5" rx="11.9" ry="6.9" fill="#1e1e1e" opacity="0.73"/><ellipse cx="70.8" cy="29.3" rx="18.5" ry="15.2" fill="#1e1e1e" opacity="1.00"/><ellipse cx="83.0" cy="36.6" rx="15.2" ry="18.5" fill="#1e1e1e" opacity="1.00"/><ellipse cx="122.1" cy="15.9" rx="10.2" ry="11.9" fill="#1e1e1e" opacity="0.73"/><ellipse cx="146.6" cy="7.3" rx="11.9" ry="8.6" fill="#1e1e1e" opacity="0.73"/><ellipse cx="141.7" cy="26.9" rx="21.8" ry="18.5" fill="#1e1e1e" opacity="1.00"/><ellipse cx="161.2" cy="14.7" rx="15.2" ry="15.2" fill="#1e1e1e" opacity="1.00"/><ellipse cx="168.5" cy="39.1" rx="18.5" ry="15.2" fill="#1e1e1e" opacity="1.00"/><ellipse cx="190.5" cy="7.3" rx="21.8" ry="10.2" fill="#1e1e1e" opacity="1.00"/><ellipse cx="214.9" cy="14.7" rx="28.4" ry="18.5" fill="#1e1e1e" opacity="1.00"/><ellipse cx="241.8" cy="9.8" rx="15.2" ry="13.5" fill="#1e1e1e" opacity="0.91"/><ellipse cx="219.8" cy="36.6" rx="25.1" ry="15.2" fill="#1e1e1e" opacity="1.00"/><ellipse cx="207.6" cy="51.3" rx="18.5" ry="11.9" fill="#1e1e1e" opacity="1.00"/><ellipse cx="244.3" cy="48.9" rx="8.6" ry="10.2" fill="#1e1e1e" opacity="0.73"/><ellipse cx="224.7" cy="63.5" rx="18.5" ry="15.2" fill="#1e1e1e" opacity="1.00"/><ellipse cx="240.6" cy="64.7" rx="8.6" ry="8.6" fill="#1e1e1e" opacity="0.64"/><ellipse cx="251.6" cy="57.4" rx="6.0" ry="6.0" fill="#1e1e1e" opacity="0.64"/><ellipse cx="12.2" cy="39.1" rx="15.2" ry="15.2" fill="#1e1e1e" opacity="0.91"/><ellipse cx="24.4" cy="44.0" rx="15.2" ry="11.9" fill="#1e1e1e" opacity="0.91"/><ellipse cx="36.6" cy="58.6" rx="15.2" ry="15.2" fill="#1e1e1e" opacity="1.00"/><ellipse cx="58.6" cy="52.5" rx="11.9" ry="10.2" fill="#1e1e1e" opacity="0.73"/><ellipse cx="75.7" cy="59.8" rx="15.2" ry="13.5" fill="#1e1e1e" opacity="0.91"/><ellipse cx="66.0" cy="76.9" rx="13.5" ry="8.6" fill="#1e1e1e" opacity="0.73"/><ellipse cx="109.9" cy="48.9" rx="15.2" ry="18.5" fill="#1e1e1e" opacity="1.00"/><ellipse cx="127.0" cy="39.1" rx="15.2" ry="11.9" fill="#1e1e1e" opacity="0.91"/><ellipse cx="114.8" cy="70.8" rx="18.5" ry="15.2" fill="#1e1e1e" opacity="1.00"/><ellipse cx="119.7" cy="85.5" rx="11.9" ry="10.2" fill="#1e1e1e" opacity="0.82"/><ellipse cx="7.3" cy="68.4" rx="10.2" ry="21.8" fill="#1e1e1e" opacity="1.00"/><ellipse cx="19.5" cy="70.8" rx="10.2" ry="11.9" fill="#1e1e1e" opacity="0.73"/><ellipse cx="7.3" cy="97.7" rx="8.6" ry="21.8" fill="#1e1e1e" opacity="0.91"/><ellipse cx="31.8" cy="92.8" rx="15.2" ry="21.8" fill="#1e1e1e" opacity="1.00"/><ellipse cx="45.2" cy="102.6" rx="10.2" ry="10.2" fill="#1e1e1e" opacity="0.73"/><ellipse cx="42.7" cy="78.2" rx="6.9" ry="6.9" fill="#1e1e1e" opacity="0.64"/><ellipse cx="81.8" cy="96.5" rx="15.2" ry="18.5" fill="#1e1e1e" opacity="1.00"/><ellipse cx="55.0" cy="117.2" rx="15.2" ry="10.2" fill="#1e1e1e" opacity="0.82"/><ellipse cx="75.7" cy="120.9" rx="10.2" ry="11.9" fill="#1e1e1e" opacity="0.73"/><ellipse cx="41.5" cy="122.1" rx="7.9" ry="7.9" fill="#1e1e1e" opacity="0.64"/><ellipse cx="161.2" cy="62.3" rx="10.2" ry="10.2" fill="#1e1e1e" opacity="0.73"/><ellipse cx="180.8" cy="66.0" rx="15.2" ry="15.2" fill="#1e1e1e" opacity="0.91"/><ellipse cx="188.1" cy="85.5" rx="10.2" ry="18.5" fill="#1e1e1e" opacity="0.91"/><ellipse cx="131.9" cy="90.4" rx="15.2" ry="10.2" fill="#1e1e1e" opacity="0.82"/><ellipse cx="156.3" cy="97.7" rx="25.1" ry="18.5" fill="#1e1e1e" opacity="1.00"/><ellipse cx="158.8" cy="119.7" rx="18.5" ry="13.5" fill="#1e1e1e" opacity="1.00"/><ellipse cx="210.1" cy="96.5" rx="8.6" ry="8.6" fill="#1e1e1e" opacity="0.64"/><ellipse cx="195.4" cy="109.9" rx="15.2" ry="10.2" fill="#1e1e1e" opacity="0.82"/><ellipse cx="183.2" cy="117.2" rx="7.9" ry="7.9" fill="#1e1e1e" opacity="0.64"/><ellipse cx="241.8" cy="102.6" rx="6.9" ry="6.9" fill="#1e1e1e" opacity="0.64"/><ellipse cx="117.2" cy="98.9" rx="6.9" ry="6.9" fill="#1e1e1e" opacity="0.64"/><ellipse cx="14.7" cy="131.9" rx="16.8" ry="15.2" fill="#1e1e1e" opacity="1.00"/><ellipse cx="33.0" cy="135.6" rx="7.9" ry="7.9" fill="#1e1e1e" opacity="0.64"/><ellipse cx="47.6" cy="139.2" rx="13.5" ry="15.2" fill="#1e1e1e" opacity="0.82"/><ellipse cx="66.0" cy="145.3" rx="7.9" ry="7.9" fill="#1e1e1e" opacity="0.64"/><ellipse cx="24.4" cy="160.0" rx="21.8" ry="10.2" fill="#1e1e1e" opacity="0.91"/><ellipse cx="48.9" cy="163.7" rx="7.9" ry="7.9" fill="#1e1e1e" opacity="0.64"/><ellipse cx="13.4" cy="174.6" rx="10.2" ry="6.9" fill="#1e1e1e" opacity="0.64"/><ellipse cx="44.0" cy="175.9" rx="6.0" ry="6.0" fill="#1e1e1e" opacity="0.64"/><ellipse cx="94.0" cy="136.8" rx="15.2" ry="11.9" fill="#1e1e1e" opacity="0.82"/><ellipse cx="90.4" cy="151.4" rx="13.5" ry="15.2" fill="#1e1e1e" opacity="0.91"/><ellipse cx="75.7" cy="158.8" rx="10.2" ry="13.5" fill="#1e1e1e" opacity="0.82"/><ellipse cx="64.7" cy="171.0" rx="10.2" ry="10.2" fill="#1e1e1e" opacity="0.73"/><ellipse cx="109.9" cy="156.3" rx="15.2" ry="18.5" fill="#1e1e1e" opacity="1.00"/><ellipse cx="97.7" cy="174.6" rx="8.6" ry="10.2" fill="#1e1e1e" opacity="0.73"/><ellipse cx="127.0" cy="149.0" rx="15.2" ry="15.2" fill="#1e1e1e" opacity="1.00"/><ellipse cx="141.7" cy="151.4" rx="15.2" ry="18.5" fill="#1e1e1e" opacity="1.00"/><ellipse cx="131.9" cy="166.1" rx="8.6" ry="8.6" fill="#1e1e1e" opacity="0.73"/><ellipse cx="158.8" cy="161.2" rx="15.2" ry="21.8" fill="#1e1e1e" opacity="1.00"/><ellipse cx="161.2" cy="140.4" rx="6.9" ry="6.9" fill="#1e1e1e" opacity="0.64"/><ellipse cx="174.6" cy="138.0" rx="7.9" ry="7.9" fill="#1e1e1e" opacity="0.64"/><ellipse cx="175.9" cy="180.8" rx="18.5" ry="10.2" fill="#1e1e1e" opacity="0.91"/><ellipse cx="195.4" cy="180.8" rx="10.2" ry="6.9" fill="#1e1e1e" opacity="0.73"/><ellipse cx="206.4" cy="174.6" rx="6.9" ry="6.9" fill="#1e1e1e" opacity="0.64"/><ellipse cx="141.7" cy="183.2" rx="6.9" ry="11.9" fill="#1e1e1e" opacity="0.73"/><ellipse cx="156.3" cy="183.2" rx="8.6" ry="8.6" fill="#1e1e1e" opacity="0.73"/><ellipse cx="133.1" cy="195.4" rx="6.9" ry="6.9" fill="#1e1e1e" opacity="0.64"/><ellipse cx="241.8" cy="156.3" rx="15.2" ry="13.5" fill="#1e1e1e" opacity="0.82"/><ellipse cx="228.4" cy="174.6" rx="16.8" ry="15.2" fill="#1e1e1e" opacity="1.00"/><ellipse cx="246.7" cy="180.8" rx="10.2" ry="8.6" fill="#1e1e1e" opacity="0.73"/><ellipse cx="249.1" cy="195.4" rx="6.9" ry="11.9" fill="#1e1e1e" opacity="0.73"/><ellipse cx="158.8" cy="200.3" rx="18.5" ry="13.5" fill="#1e1e1e" opacity="1.00"/><ellipse cx="185.6" cy="202.7" rx="15.2" ry="13.5" fill="#1e1e1e" opacity="0.91"/><ellipse cx="207.6" cy="197.9" rx="11.9" ry="10.2" fill="#1e1e1e" opacity="0.73"/><ellipse cx="146.6" cy="210.1" rx="11.9" ry="18.5" fill="#1e1e1e" opacity="0.91"/><ellipse cx="180.8" cy="217.4" rx="15.2" ry="15.2" fill="#1e1e1e" opacity="1.00"/><ellipse cx="202.7" cy="214.9" rx="18.5" ry="15.2" fill="#1e1e1e" opacity="1.00"/><ellipse cx="197.9" cy="232.0" rx="21.8" ry="15.2" fill="#1e1e1e" opacity="1.00"/><ellipse cx="232.0" cy="210.1" rx="11.9" ry="18.5" fill="#1e1e1e" opacity="0.91"/><ellipse cx="244.3" cy="219.8" rx="13.5" ry="15.2" fill="#1e1e1e" opacity="0.82"/><ellipse cx="236.9" cy="234.5" rx="13.5" ry="11.9" fill="#1e1e1e" opacity="0.82"/><ellipse cx="249.1" cy="239.4" rx="6.9" ry="10.2" fill="#1e1e1e" opacity="0.64"/><ellipse cx="224.7" cy="246.7" rx="6.9" ry="6.9" fill="#1e1e1e" opacity="0.64"/><ellipse cx="202.7" cy="249.1" rx="13.5" ry="6.9" fill="#1e1e1e" opacity="0.73"/><ellipse cx="136.8" cy="234.5" rx="11.9" ry="10.2" fill="#1e1e1e" opacity="0.73"/><ellipse cx="147.8" cy="234.5" rx="6.9" ry="6.9" fill="#1e1e1e" opacity="0.64"/><ellipse cx="163.7" cy="235.7" rx="10.2" ry="6.0" fill="#1e1e1e" opacity="0.64"/><ellipse cx="129.5" cy="249.1" rx="6.9" ry="6.9" fill="#1e1e1e" opacity="0.64"/><ellipse cx="17.1" cy="196.6" rx="6.0" ry="6.0" fill="#1e1e1e" opacity="0.64"/><ellipse cx="19.5" cy="214.9" rx="16.8" ry="18.5" fill="#1e1e1e" opacity="1.00"/><ellipse cx="14.7" cy="238.2" rx="6.0" ry="8.6" fill="#1e1e1e" opacity="0.64"/><ellipse cx="41.5" cy="228.4" rx="15.2" ry="16.8" fill="#1e1e1e" opacity="1.00"/><ellipse cx="61.1" cy="217.4" rx="13.5" ry="15.2" fill="#1e1e1e" opacity="0.91"/><ellipse cx="63.5" cy="238.2" rx="13.5" ry="11.9" fill="#1e1e1e" opacity="0.82"/><ellipse cx="80.6" cy="230.8" rx="8.6" ry="10.2" fill="#1e1e1e" opacity="0.73"/><ellipse cx="94.0" cy="225.9" rx="6.9" ry="6.9" fill="#1e1e1e" opacity="0.64"/><ellipse cx="44.0" cy="250.4" rx="9.3" ry="6.0" fill="#1e1e1e" opacity="0.64"/><ellipse cx="78.2" cy="244.3" rx="6.0" ry="6.0" fill="#1e1e1e" opacity="0.64"/><ellipse cx="115" cy="117" rx="24" ry="15" fill="#000" opacity="0.8" transform="rotate(-11 115 117)"/><ellipse cx="203" cy="150" rx="27" ry="22" fill="#000" opacity="0.8" transform="rotate(-21 203 150)"/><ellipse cx="228" cy="100" rx="20" ry="18" fill="#000" opacity="0.6" transform="rotate(9 228 100)"/><ellipse cx="90" cy="214" rx="45" ry="20" fill="#000" opacity="0.6" transform="rotate(-26 90 214)"/><ellipse cx="49" cy="29" rx="12" ry="11" fill="#000" opacity="0.5" transform="rotate(2 49 29)"/><ellipse cx="107" cy="15" rx="20" ry="9" fill="#000" opacity="0.6" transform="rotate(-8 107 15)"/><ellipse cx="146" cy="63" rx="10" ry="10" fill="#000" opacity="0.5" transform="rotate(-27 146 63)"/><ellipse cx="176" cy="61" rx="9" ry="10" fill="#000" opacity="0.5" transform="rotate(0 176 61)"/><ellipse cx="232" cy="82" rx="16" ry="8" fill="#000" opacity="0.5" transform="rotate(-28 232 82)"/><ellipse cx="171" cy="222" rx="12" ry="13" fill="#000" opacity="0.5" transform="rotate(-4 171 222)"/></g><ellipse cx="19.5" cy="14.7" rx="10.4" ry="7.2" fill="url(#gw)" opacity="0.24" transform="rotate(13 19.5 14.7)"/><ellipse cx="19.5" cy="14.7" rx="5.8" ry="4.0" fill="url(#gw)" opacity="0.63" transform="rotate(13 19.5 14.7)"/><ellipse cx="19.6" cy="16.5" rx="3.2" ry="3.2" fill="url(#gw)" opacity="0.49"/><ellipse cx="38.0" cy="5.0" rx="10.4" ry="7.2" fill="url(#gw)" opacity="0.15" transform="rotate(16 38.0 5.0)"/><ellipse cx="38.0" cy="5.0" rx="5.8" ry="4.0" fill="url(#gw)" opacity="0.38" transform="rotate(16 38.0 5.0)"/><ellipse cx="38.0" cy="6.8" rx="3.2" ry="3.2" fill="url(#gw)" opacity="0.29"/><ellipse cx="7.0" cy="40.0" rx="7.8" ry="5.4" fill="url(#gw)" opacity="0.13" transform="rotate(76 7.0 40.0)"/><ellipse cx="7.0" cy="40.0" rx="4.3" ry="3.0" fill="url(#gw)" opacity="0.35" transform="rotate(76 7.0 40.0)"/><ellipse cx="29.0" cy="36.6" rx="7.8" ry="5.4" fill="url(#gw)" opacity="0.10" transform="rotate(149 29.0 36.6)"/><ellipse cx="29.0" cy="36.6" rx="4.3" ry="3.0" fill="url(#gw)" opacity="0.25" transform="rotate(149 29.0 36.6)"/><ellipse cx="35.4" cy="57.4" rx="15.6" ry="10.8" fill="url(#gw)" opacity="0.21" transform="rotate(22 35.4 57.4)"/><ellipse cx="35.4" cy="57.4" rx="8.7" ry="6.0" fill="url(#gw)" opacity="0.54" transform="rotate(22 35.4 57.4)"/><ellipse cx="35.1" cy="60.1" rx="4.9" ry="4.9" fill="url(#gw)" opacity="0.42"/><ellipse cx="41.5" cy="68.4" rx="7.8" ry="5.4" fill="url(#gw)" opacity="0.22" transform="rotate(40 41.5 68.4)"/><ellipse cx="41.5" cy="68.4" rx="4.3" ry="3.0" fill="url(#gw)" opacity="0.57" transform="rotate(40 41.5 68.4)"/><ellipse cx="17.0" cy="68.0" rx="10.4" ry="7.2" fill="url(#gw)" opacity="0.15" transform="rotate(113 17.0 68.0)"/><ellipse cx="17.0" cy="68.0" rx="5.8" ry="4.0" fill="url(#gw)" opacity="0.38" transform="rotate(113 17.0 68.0)"/><ellipse cx="15.2" cy="67.8" rx="3.2" ry="3.2" fill="url(#gw)" opacity="0.29"/><ellipse cx="74.5" cy="59.8" rx="15.6" ry="10.8" fill="url(#gw)" opacity="0.22" transform="rotate(171 74.5 59.8)"/><ellipse cx="74.5" cy="59.8" rx="8.7" ry="6.0" fill="url(#gw)" opacity="0.57" transform="rotate(171 74.5 59.8)"/><ellipse cx="73.4" cy="57.4" rx="4.9" ry="4.9" fill="url(#gw)" opacity="0.44"/><ellipse cx="91.0" cy="64.0" rx="6.5" ry="4.5" fill="url(#gw)" opacity="0.21" transform="rotate(104 91.0 64.0)"/><ellipse cx="91.0" cy="64.0" rx="3.6" ry="2.5" fill="url(#gw)" opacity="0.54" transform="rotate(104 91.0 64.0)"/><ellipse cx="111.0" cy="47.6" rx="10.4" ry="7.2" fill="url(#gw)" opacity="0.15" transform="rotate(71 111.0 47.6)"/><ellipse cx="111.0" cy="47.6" rx="5.8" ry="4.0" fill="url(#gw)" opacity="0.38" transform="rotate(71 111.0 47.6)"/><ellipse cx="109.5" cy="48.6" rx="3.2" ry="3.2" fill="url(#gw)" opacity="0.29"/><ellipse cx="85.5" cy="31.8" rx="7.8" ry="5.4" fill="url(#gw)" opacity="0.10" transform="rotate(176 85.5 31.8)"/><ellipse cx="85.5" cy="31.8" rx="4.3" ry="3.0" fill="url(#gw)" opacity="0.25" transform="rotate(176 85.5 31.8)"/><ellipse cx="99.0" cy="44.0" rx="7.8" ry="5.4" fill="url(#gw)" opacity="0.10" transform="rotate(8 99.0 44.0)"/><ellipse cx="99.0" cy="44.0" rx="4.3" ry="3.0" fill="url(#gw)" opacity="0.25" transform="rotate(8 99.0 44.0)"/><ellipse cx="112.0" cy="69.6" rx="7.8" ry="5.4" fill="url(#gw)" opacity="0.12" transform="rotate(155 112.0 69.6)"/><ellipse cx="112.0" cy="69.6" rx="4.3" ry="3.0" fill="url(#gw)" opacity="0.32" transform="rotate(155 112.0 69.6)"/><ellipse cx="35.4" cy="85.5" rx="10.4" ry="7.2" fill="url(#gw)" opacity="0.11" transform="rotate(52 35.4 85.5)"/><ellipse cx="35.4" cy="85.5" rx="5.8" ry="4.0" fill="url(#gw)" opacity="0.28" transform="rotate(52 35.4 85.5)"/><ellipse cx="34.3" cy="86.9" rx="3.2" ry="3.2" fill="url(#gw)" opacity="0.22"/><ellipse cx="168.5" cy="29.3" rx="7.8" ry="5.4" fill="url(#gw)" opacity="0.13" transform="rotate(26 168.5 29.3)"/><ellipse cx="168.5" cy="29.3" rx="4.3" ry="3.0" fill="url(#gw)" opacity="0.35" transform="rotate(26 168.5 29.3)"/><ellipse cx="180.7" cy="6.8" rx="7.8" ry="5.4" fill="url(#gw)" opacity="0.15" transform="rotate(21 180.7 6.8)"/><ellipse cx="180.7" cy="6.8" rx="4.3" ry="3.0" fill="url(#gw)" opacity="0.38" transform="rotate(21 180.7 6.8)"/><ellipse cx="161.0" cy="7.3" rx="10.4" ry="7.2" fill="url(#gw)" opacity="0.12" transform="rotate(56 161.0 7.3)"/><ellipse cx="161.0" cy="7.3" rx="5.8" ry="4.0" fill="url(#gw)" opacity="0.32" transform="rotate(56 161.0 7.3)"/><ellipse cx="159.8" cy="8.7" rx="3.2" ry="3.2" fill="url(#gw)" opacity="0.24"/><ellipse cx="202.0" cy="6.5" rx="9.1" ry="6.3" fill="url(#gw)" opacity="0.12" transform="rotate(147 202.0 6.5)"/><ellipse cx="202.0" cy="6.5" rx="5.1" ry="3.5" fill="url(#gw)" opacity="0.32" transform="rotate(147 202.0 6.5)"/><ellipse cx="161.5" cy="18.9" rx="7.8" ry="5.4" fill="url(#gw)" opacity="0.10" transform="rotate(33 161.5 18.9)"/><ellipse cx="161.5" cy="18.9" rx="4.3" ry="3.0" fill="url(#gw)" opacity="0.25" transform="rotate(33 161.5 18.9)"/><ellipse cx="208.6" cy="26.5" rx="7.8" ry="5.4" fill="url(#gw)" opacity="0.12" transform="rotate(105 208.6 26.5)"/><ellipse cx="208.6" cy="26.5" rx="4.3" ry="3.0" fill="url(#gw)" opacity="0.32" transform="rotate(105 208.6 26.5)"/><ellipse cx="217.4" cy="37.9" rx="18.2" ry="12.6" fill="url(#gw)" opacity="0.24" transform="rotate(115 217.4 37.9)"/><ellipse cx="217.4" cy="37.9" rx="10.2" ry="7.0" fill="url(#gw)" opacity="0.63" transform="rotate(115 217.4 37.9)"/><ellipse cx="214.3" cy="37.4" rx="5.7" ry="5.7" fill="url(#gw)" opacity="0.49"/><ellipse cx="207.9" cy="46.9" rx="15.6" ry="10.8" fill="url(#gw)" opacity="0.15" transform="rotate(67 207.9 46.9)"/><ellipse cx="207.9" cy="46.9" rx="8.7" ry="6.0" fill="url(#gw)" opacity="0.38" transform="rotate(67 207.9 46.9)"/><ellipse cx="205.8" cy="48.6" rx="4.9" ry="4.9" fill="url(#gw)" opacity="0.29"/><ellipse cx="199.0" cy="52.5" rx="10.4" ry="7.2" fill="url(#gw)" opacity="0.12" transform="rotate(99 199.0 52.5)"/><ellipse cx="199.0" cy="52.5" rx="5.8" ry="4.0" fill="url(#gw)" opacity="0.32" transform="rotate(99 199.0 52.5)"/><ellipse cx="197.2" cy="52.7" rx="3.2" ry="3.2" fill="url(#gw)" opacity="0.24"/><ellipse cx="238.0" cy="31.8" rx="13.0" ry="9.0" fill="url(#gw)" opacity="0.21" transform="rotate(11 238.0 31.8)"/><ellipse cx="238.0" cy="31.8" rx="7.2" ry="5.0" fill="url(#gw)" opacity="0.54" transform="rotate(11 238.0 31.8)"/><ellipse cx="238.2" cy="34.0" rx="4.1" ry="4.1" fill="url(#gw)" opacity="0.42"/><ellipse cx="243.0" cy="50.0" rx="10.4" ry="7.2" fill="url(#gw)" opacity="0.22" transform="rotate(11 243.0 50.0)"/><ellipse cx="243.0" cy="50.0" rx="5.8" ry="4.0" fill="url(#gw)" opacity="0.57" transform="rotate(11 243.0 50.0)"/><ellipse cx="243.2" cy="51.8" rx="3.2" ry="3.2" fill="url(#gw)" opacity="0.44"/><ellipse cx="229.6" cy="42.7" rx="7.8" ry="5.4" fill="url(#gw)" opacity="0.12" transform="rotate(37 229.6 42.7)"/><ellipse cx="229.6" cy="42.7" rx="4.3" ry="3.0" fill="url(#gw)" opacity="0.32" transform="rotate(37 229.6 42.7)"/><ellipse cx="223.5" cy="68.4" rx="7.8" ry="5.4" fill="url(#gw)" opacity="0.11" transform="rotate(122 223.5 68.4)"/><ellipse cx="223.5" cy="68.4" rx="4.3" ry="3.0" fill="url(#gw)" opacity="0.28" transform="rotate(122 223.5 68.4)"/><ellipse cx="205.0" cy="73.3" rx="7.8" ry="5.4" fill="url(#gw)" opacity="0.11" transform="rotate(77 205.0 73.3)"/><ellipse cx="205.0" cy="73.3" rx="4.3" ry="3.0" fill="url(#gw)" opacity="0.28" transform="rotate(77 205.0 73.3)"/><ellipse cx="128.5" cy="92.0" rx="13.0" ry="9.0" fill="url(#gw)" opacity="0.11" transform="rotate(57 128.5 92.0)"/><ellipse cx="128.5" cy="92.0" rx="7.2" ry="5.0" fill="url(#gw)" opacity="0.28" transform="rotate(57 128.5 92.0)"/><ellipse cx="127.0" cy="93.7" rx="4.1" ry="4.1" fill="url(#gw)" opacity="0.22"/><ellipse cx="149.0" cy="102.6" rx="13.0" ry="9.0" fill="url(#gw)" opacity="0.15" transform="rotate(105 149.0 102.6)"/><ellipse cx="149.0" cy="102.6" rx="7.2" ry="5.0" fill="url(#gw)" opacity="0.38" transform="rotate(105 149.0 102.6)"/><ellipse cx="146.8" cy="102.6" rx="4.1" ry="4.1" fill="url(#gw)" opacity="0.29"/><ellipse cx="156.3" cy="105.5" rx="10.4" ry="7.2" fill="url(#gw)" opacity="0.22" transform="rotate(82 156.3 105.5)"/><ellipse cx="156.3" cy="105.5" rx="5.8" ry="4.0" fill="url(#gw)" opacity="0.57" transform="rotate(82 156.3 105.5)"/><ellipse cx="154.7" cy="106.2" rx="3.2" ry="3.2" fill="url(#gw)" opacity="0.44"/><ellipse cx="182.0" cy="107.5" rx="7.8" ry="5.4" fill="url(#gw)" opacity="0.16" transform="rotate(54 182.0 107.5)"/><ellipse cx="182.0" cy="107.5" rx="4.3" ry="3.0" fill="url(#gw)" opacity="0.41" transform="rotate(54 182.0 107.5)"/><ellipse cx="193.7" cy="112.8" rx="9.1" ry="6.3" fill="url(#gw)" opacity="0.15" transform="rotate(143 193.7 112.8)"/><ellipse cx="193.7" cy="112.8" rx="5.1" ry="3.5" fill="url(#gw)" opacity="0.38" transform="rotate(143 193.7 112.8)"/><ellipse cx="168.5" cy="101.4" rx="7.8" ry="5.4" fill="url(#gw)" opacity="0.10" transform="rotate(126 168.5 101.4)"/><ellipse cx="168.5" cy="101.4" rx="4.3" ry="3.0" fill="url(#gw)" opacity="0.25" transform="rotate(126 168.5 101.4)"/><ellipse cx="78.6" cy="117.2" rx="10.4" ry="7.2" fill="url(#gw)" opacity="0.18" transform="rotate(44 78.6 117.2)"/><ellipse cx="78.6" cy="117.2" rx="5.8" ry="4.0" fill="url(#gw)" opacity="0.47" transform="rotate(44 78.6 117.2)"/><ellipse cx="77.7" cy="118.8" rx="3.2" ry="3.2" fill="url(#gw)" opacity="0.37"/><ellipse cx="51.3" cy="118.5" rx="10.4" ry="7.2" fill="url(#gw)" opacity="0.11" transform="rotate(103 51.3 118.5)"/><ellipse cx="51.3" cy="118.5" rx="5.8" ry="4.0" fill="url(#gw)" opacity="0.28" transform="rotate(103 51.3 118.5)"/><ellipse cx="49.5" cy="118.6" rx="3.2" ry="3.2" fill="url(#gw)" opacity="0.22"/><ellipse cx="99.4" cy="135.6" rx="11.7" ry="8.1" fill="url(#gw)" opacity="0.22" transform="rotate(95 99.4 135.6)"/><ellipse cx="99.4" cy="135.6" rx="6.5" ry="4.5" fill="url(#gw)" opacity="0.57" transform="rotate(95 99.4 135.6)"/><ellipse cx="97.4" cy="136.0" rx="3.6" ry="3.6" fill="url(#gw)" opacity="0.44"/><ellipse cx="105.0" cy="141.7" rx="7.8" ry="5.4" fill="url(#gw)" opacity="0.12" transform="rotate(158 105.0 141.7)"/><ellipse cx="105.0" cy="141.7" rx="4.3" ry="3.0" fill="url(#gw)" opacity="0.32" transform="rotate(158 105.0 141.7)"/><ellipse cx="124.6" cy="146.0" rx="13.0" ry="9.0" fill="url(#gw)" opacity="0.23" transform="rotate(131 124.6 146.0)"/><ellipse cx="124.6" cy="146.0" rx="7.2" ry="5.0" fill="url(#gw)" opacity="0.60" transform="rotate(131 124.6 146.0)"/><ellipse cx="122.6" cy="145.0" rx="4.1" ry="4.1" fill="url(#gw)" opacity="0.47"/><ellipse cx="131.9" cy="153.9" rx="10.4" ry="7.2" fill="url(#gw)" opacity="0.16" transform="rotate(52 131.9 153.9)"/><ellipse cx="131.9" cy="153.9" rx="5.8" ry="4.0" fill="url(#gw)" opacity="0.41" transform="rotate(52 131.9 153.9)"/><ellipse cx="130.8" cy="155.4" rx="3.2" ry="3.2" fill="url(#gw)" opacity="0.32"/><ellipse cx="144.0" cy="154.4" rx="7.8" ry="5.4" fill="url(#gw)" opacity="0.11" transform="rotate(176 144.0 154.4)"/><ellipse cx="144.0" cy="154.4" rx="4.3" ry="3.0" fill="url(#gw)" opacity="0.28" transform="rotate(176 144.0 154.4)"/><ellipse cx="12.2" cy="146.6" rx="10.4" ry="7.2" fill="url(#gw)" opacity="0.15" transform="rotate(21 12.2 146.6)"/><ellipse cx="12.2" cy="146.6" rx="5.8" ry="4.0" fill="url(#gw)" opacity="0.38" transform="rotate(21 12.2 146.6)"/><ellipse cx="12.0" cy="148.4" rx="3.2" ry="3.2" fill="url(#gw)" opacity="0.29"/><ellipse cx="42.7" cy="147.8" rx="6.5" ry="4.5" fill="url(#gw)" opacity="0.10" transform="rotate(75 42.7 147.8)"/><ellipse cx="42.7" cy="147.8" rx="3.6" ry="2.5" fill="url(#gw)" opacity="0.25" transform="rotate(75 42.7 147.8)"/><ellipse cx="78.0" cy="157.5" rx="10.4" ry="7.2" fill="url(#gw)" opacity="0.10" transform="rotate(136 78.0 157.5)"/><ellipse cx="78.0" cy="157.5" rx="5.8" ry="4.0" fill="url(#gw)" opacity="0.25" transform="rotate(136 78.0 157.5)"/><ellipse cx="76.5" cy="156.6" rx="3.2" ry="3.2" fill="url(#gw)" opacity="0.20"/><ellipse cx="62.3" cy="167.8" rx="6.5" ry="4.5" fill="url(#gw)" opacity="0.13" transform="rotate(27 62.3 167.8)"/><ellipse cx="62.3" cy="167.8" rx="3.6" ry="2.5" fill="url(#gw)" opacity="0.35" transform="rotate(27 62.3 167.8)"/><ellipse cx="101.4" cy="171.0" rx="7.8" ry="5.4" fill="url(#gw)" opacity="0.23" transform="rotate(88 101.4 171.0)"/><ellipse cx="101.4" cy="171.0" rx="4.3" ry="3.0" fill="url(#gw)" opacity="0.60" transform="rotate(88 101.4 171.0)"/><ellipse cx="163.0" cy="161.7" rx="13.0" ry="9.0" fill="url(#gw)" opacity="0.23" transform="rotate(7 163.0 161.7)"/><ellipse cx="163.0" cy="161.7" rx="7.2" ry="5.0" fill="url(#gw)" opacity="0.60" transform="rotate(7 163.0 161.7)"/><ellipse cx="163.3" cy="163.9" rx="4.1" ry="4.1" fill="url(#gw)" opacity="0.47"/><ellipse cx="156.3" cy="171.0" rx="15.6" ry="10.8" fill="url(#gw)" opacity="0.15" transform="rotate(120 156.3 171.0)"/><ellipse cx="156.3" cy="171.0" rx="8.7" ry="6.0" fill="url(#gw)" opacity="0.38" transform="rotate(120 156.3 171.0)"/><ellipse cx="153.7" cy="170.3" rx="4.9" ry="4.9" fill="url(#gw)" opacity="0.29"/><ellipse cx="163.7" cy="177.0" rx="10.4" ry="7.2" fill="url(#gw)" opacity="0.12" transform="rotate(138 163.7 177.0)"/><ellipse cx="163.7" cy="177.0" rx="5.8" ry="4.0" fill="url(#gw)" opacity="0.32" transform="rotate(138 163.7 177.0)"/><ellipse cx="162.2" cy="176.0" rx="3.2" ry="3.2" fill="url(#gw)" opacity="0.24"/><ellipse cx="179.5" cy="182.0" rx="13.0" ry="9.0" fill="url(#gw)" opacity="0.12" transform="rotate(103 179.5 182.0)"/><ellipse cx="179.5" cy="182.0" rx="7.2" ry="5.0" fill="url(#gw)" opacity="0.32" transform="rotate(103 179.5 182.0)"/><ellipse cx="177.3" cy="182.1" rx="4.1" ry="4.1" fill="url(#gw)" opacity="0.24"/><ellipse cx="141.7" cy="182.0" rx="7.8" ry="5.4" fill="url(#gw)" opacity="0.11" transform="rotate(158 141.7 182.0)"/><ellipse cx="141.7" cy="182.0" rx="4.3" ry="3.0" fill="url(#gw)" opacity="0.28" transform="rotate(158 141.7 182.0)"/><ellipse cx="153.0" cy="195.4" rx="7.8" ry="5.4" fill="url(#gw)" opacity="0.12" transform="rotate(56 153.0 195.4)"/><ellipse cx="153.0" cy="195.4" rx="4.3" ry="3.0" fill="url(#gw)" opacity="0.32" transform="rotate(56 153.0 195.4)"/><ellipse cx="162.4" cy="200.8" rx="15.6" ry="10.8" fill="url(#gw)" opacity="0.16" transform="rotate(125 162.4 200.8)"/><ellipse cx="162.4" cy="200.8" rx="8.7" ry="6.0" fill="url(#gw)" opacity="0.41" transform="rotate(125 162.4 200.8)"/><ellipse cx="159.9" cy="199.9" rx="4.9" ry="4.9" fill="url(#gw)" opacity="0.32"/><ellipse cx="205.0" cy="197.8" rx="15.6" ry="10.8" fill="url(#gw)" opacity="0.09" transform="rotate(107 205.0 197.8)"/><ellipse cx="205.0" cy="197.8" rx="8.7" ry="6.0" fill="url(#gw)" opacity="0.24" transform="rotate(107 205.0 197.8)"/><ellipse cx="202.3" cy="197.7" rx="4.9" ry="4.9" fill="url(#gw)" opacity="0.19"/><ellipse cx="223.5" cy="173.4" rx="15.6" ry="10.8" fill="url(#gw)" opacity="0.21" transform="rotate(104 223.5 173.4)"/><ellipse cx="223.5" cy="173.4" rx="8.7" ry="6.0" fill="url(#gw)" opacity="0.54" transform="rotate(104 223.5 173.4)"/><ellipse cx="220.8" cy="173.5" rx="4.9" ry="4.9" fill="url(#gw)" opacity="0.42"/><ellipse cx="233.3" cy="174.6" rx="18.2" ry="12.6" fill="url(#gw)" opacity="0.23" transform="rotate(82 233.3 174.6)"/><ellipse cx="233.3" cy="174.6" rx="10.2" ry="7.0" fill="url(#gw)" opacity="0.60" transform="rotate(82 233.3 174.6)"/><ellipse cx="230.4" cy="175.9" rx="5.7" ry="5.7" fill="url(#gw)" opacity="0.47"/><ellipse cx="241.8" cy="156.3" rx="13.0" ry="9.0" fill="url(#gw)" opacity="0.17" transform="rotate(151 241.8 156.3)"/><ellipse cx="241.8" cy="156.3" rx="7.2" ry="5.0" fill="url(#gw)" opacity="0.44" transform="rotate(151 241.8 156.3)"/><ellipse cx="240.2" cy="154.7" rx="4.1" ry="4.1" fill="url(#gw)" opacity="0.34"/><ellipse cx="251.6" cy="155.0" rx="7.8" ry="5.4" fill="url(#gw)" opacity="0.12" transform="rotate(170 251.6 155.0)"/><ellipse cx="251.6" cy="155.0" rx="4.3" ry="3.0" fill="url(#gw)" opacity="0.32" transform="rotate(170 251.6 155.0)"/><ellipse cx="230.8" cy="211.3" rx="18.2" ry="12.6" fill="url(#gw)" opacity="0.24" transform="rotate(85 230.8 211.3)"/><ellipse cx="230.8" cy="211.3" rx="10.2" ry="7.0" fill="url(#gw)" opacity="0.63" transform="rotate(85 230.8 211.3)"/><ellipse cx="227.8" cy="212.4" rx="5.7" ry="5.7" fill="url(#gw)" opacity="0.49"/><ellipse cx="196.6" cy="215.0" rx="18.2" ry="12.6" fill="url(#gw)" opacity="0.16" transform="rotate(120 196.6 215.0)"/><ellipse cx="196.6" cy="215.0" rx="10.2" ry="7.0" fill="url(#gw)" opacity="0.41" transform="rotate(120 196.6 215.0)"/><ellipse cx="193.5" cy="214.2" rx="5.7" ry="5.7" fill="url(#gw)" opacity="0.32"/><ellipse cx="206.4" cy="221.0" rx="20.8" ry="14.4" fill="url(#gw)" opacity="0.18" transform="rotate(11 206.4 221.0)"/><ellipse cx="206.4" cy="221.0" rx="11.6" ry="8.0" fill="url(#gw)" opacity="0.47" transform="rotate(11 206.4 221.0)"/><ellipse cx="206.7" cy="224.6" rx="6.5" ry="6.5" fill="url(#gw)" opacity="0.37"/><ellipse cx="204.0" cy="229.6" rx="13.0" ry="9.0" fill="url(#gw)" opacity="0.12" transform="rotate(126 204.0 229.6)"/><ellipse cx="204.0" cy="229.6" rx="7.2" ry="5.0" fill="url(#gw)" opacity="0.32" transform="rotate(126 204.0 229.6)"/><ellipse cx="201.9" cy="228.8" rx="4.1" ry="4.1" fill="url(#gw)" opacity="0.24"/><ellipse cx="216.0" cy="232.0" rx="7.8" ry="5.4" fill="url(#gw)" opacity="0.12" transform="rotate(116 216.0 232.0)"/><ellipse cx="216.0" cy="232.0" rx="4.3" ry="3.0" fill="url(#gw)" opacity="0.32" transform="rotate(116 216.0 232.0)"/><ellipse cx="136.0" cy="234.0" rx="15.6" ry="10.8" fill="url(#gw)" opacity="0.24" transform="rotate(179 136.0 234.0)"/><ellipse cx="136.0" cy="234.0" rx="8.7" ry="6.0" fill="url(#gw)" opacity="0.63" transform="rotate(179 136.0 234.0)"/><ellipse cx="135.2" cy="231.4" rx="4.9" ry="4.9" fill="url(#gw)" opacity="0.49"/><ellipse cx="18.3" cy="216.0" rx="18.2" ry="12.6" fill="url(#gw)" opacity="0.15" transform="rotate(148 18.3 216.0)"/><ellipse cx="18.3" cy="216.0" rx="10.2" ry="7.0" fill="url(#gw)" opacity="0.38" transform="rotate(148 18.3 216.0)"/><ellipse cx="16.0" cy="213.9" rx="5.7" ry="5.7" fill="url(#gw)" opacity="0.29"/><ellipse cx="29.3" cy="216.0" rx="10.4" ry="7.2" fill="url(#gw)" opacity="0.12" transform="rotate(51 29.3 216.0)"/><ellipse cx="29.3" cy="216.0" rx="5.8" ry="4.0" fill="url(#gw)" opacity="0.32" transform="rotate(51 29.3 216.0)"/><ellipse cx="28.2" cy="217.5" rx="3.2" ry="3.2" fill="url(#gw)" opacity="0.24"/><ellipse cx="13.4" cy="223.5" rx="10.4" ry="7.2" fill="url(#gw)" opacity="0.11" transform="rotate(69 13.4 223.5)"/><ellipse cx="13.4" cy="223.5" rx="5.8" ry="4.0" fill="url(#gw)" opacity="0.28" transform="rotate(69 13.4 223.5)"/><ellipse cx="11.9" cy="224.6" rx="3.2" ry="3.2" fill="url(#gw)" opacity="0.22"/><ellipse cx="238.0" cy="201.5" rx="6.5" ry="4.5" fill="url(#gw)" opacity="0.10" transform="rotate(120 238.0 201.5)"/><ellipse cx="238.0" cy="201.5" rx="3.6" ry="2.5" fill="url(#gw)" opacity="0.25" transform="rotate(120 238.0 201.5)"/><ellipse cx="245.5" cy="241.8" rx="6.5" ry="4.5" fill="url(#gw)" opacity="0.10" transform="rotate(4 245.5 241.8)"/><ellipse cx="245.5" cy="241.8" rx="3.6" ry="2.5" fill="url(#gw)" opacity="0.25" transform="rotate(4 245.5 241.8)"/><ellipse cx="75.6" cy="245.7" rx="6.5" ry="4.5" fill="url(#gw)" opacity="0.07" transform="rotate(83 75.6 245.7)"/><ellipse cx="75.6" cy="245.7" rx="3.6" ry="2.5" fill="url(#gw)" opacity="0.19" transform="rotate(83 75.6 245.7)"/><ellipse cx="81.4" cy="230.0" rx="6.5" ry="4.5" fill="url(#gw)" opacity="0.07" transform="rotate(30 81.4 230.0)"/><ellipse cx="81.4" cy="230.0" rx="3.6" ry="2.5" fill="url(#gw)" opacity="0.19" transform="rotate(30 81.4 230.0)"/></g><path d="M0 0H256V256H0ZM4 3V254.5H254V3Z" fill="#000" fill-rule="evenodd"/></svg><rect x="1625.5" y="458.5" width="10" height="222.5" fill="url(#cbar)" stroke="#000"/><text class="cts" x="1633" y="438" textLength="37" lengthAdjust="spacingAndGlyphs">Cts</text><text class="num" x="1639" y="464.0" textLength="42.8" lengthAdjust="spacingAndGlyphs">4061</text><text class="num" x="1639" y="518.2" textLength="42.8" lengthAdjust="spacingAndGlyphs">3045</text><text class="num" x="1639" y="572.4" textLength="42.8" lengthAdjust="spacingAndGlyphs">2030</text><text class="num" x="1639" y="626.6" textLength="42.8" lengthAdjust="spacingAndGlyphs">1015</text><text class="num" x="1639" y="680.8" textLength="10.7" lengthAdjust="spacingAndGlyphs">0</text><text class="lb" x="1034.5" y="701" textLength="63" lengthAdjust="spacingAndGlyphs">12C 15N</text><svg x="1029" y="705" width="256" height="256" viewBox="0 0 256 256"><g filter="url(#cmsp)"><rect x="-12" y="-12" width="280" height="280" fill="#000"/><g filter="url(#web2)"><rect x="-12" y="-12" width="280" height="280" fill="#040404"/><ellipse cx="19.5" cy="14.7" rx="11.9" ry="11.9" fill="#111111" opacity="0.73"/><ellipse cx="41.5" cy="9.8" rx="18.5" ry="11.9" fill="#111111" opacity="0.91"/><ellipse cx="55.0" cy="19.5" rx="8.6" ry="11.9" fill="#111111" opacity="0.82"/><ellipse cx="80.6" cy="8.5" rx="11.9" ry="6.9" fill="#111111" opacity="0.73"/><ellipse cx="70.8" cy="29.3" rx="18.5" ry="15.2" fill="#111111" opacity="1.00"/><ellipse cx="83.0" cy="36.6" rx="15.2" ry="18.5" fill="#111111" opacity="1.00"/><ellipse cx="122.1" cy="15.9" rx="10.2" ry="11.9" fill="#111111" opacity="0.73"/><ellipse cx="146.6" cy="7.3" rx="11.9" ry="8.6" fill="#111111" opacity="0.73"/><ellipse cx="141.7" cy="26.9" rx="21.8" ry="18.5" fill="#111111" opacity="1.00"/><ellipse cx="161.2" cy="14.7" rx="15.2" ry="15.2" fill="#111111" opacity="1.00"/><ellipse cx="168.5" cy="39.1" rx="18.5" ry="15.2" fill="#111111" opacity="1.00"/><ellipse cx="190.5" cy="7.3" rx="21.8" ry="10.2" fill="#111111" opacity="1.00"/><ellipse cx="214.9" cy="14.7" rx="28.4" ry="18.5" fill="#111111" opacity="1.00"/><ellipse cx="241.8" cy="9.8" rx="15.2" ry="13.5" fill="#111111" opacity="0.91"/><ellipse cx="219.8" cy="36.6" rx="25.1" ry="15.2" fill="#111111" opacity="1.00"/><ellipse cx="207.6" cy="51.3" rx="18.5" ry="11.9" fill="#111111" opacity="1.00"/><ellipse cx="244.3" cy="48.9" rx="8.6" ry="10.2" fill="#111111" opacity="0.73"/><ellipse cx="224.7" cy="63.5" rx="18.5" ry="15.2" fill="#111111" opacity="1.00"/><ellipse cx="240.6" cy="64.7" rx="8.6" ry="8.6" fill="#111111" opacity="0.64"/><ellipse cx="251.6" cy="57.4" rx="6.0" ry="6.0" fill="#111111" opacity="0.64"/><ellipse cx="12.2" cy="39.1" rx="15.2" ry="15.2" fill="#111111" opacity="0.91"/><ellipse cx="24.4" cy="44.0" rx="15.2" ry="11.9" fill="#111111" opacity="0.91"/><ellipse cx="36.6" cy="58.6" rx="15.2" ry="15.2" fill="#111111" opacity="1.00"/><ellipse cx="58.6" cy="52.5" rx="11.9" ry="10.2" fill="#111111" opacity="0.73"/><ellipse cx="75.7" cy="59.8" rx="15.2" ry="13.5" fill="#111111" opacity="0.91"/><ellipse cx="66.0" cy="76.9" rx="13.5" ry="8.6" fill="#111111" opacity="0.73"/><ellipse cx="109.9" cy="48.9" rx="15.2" ry="18.5" fill="#111111" opacity="1.00"/><ellipse cx="127.0" cy="39.1" rx="15.2" ry="11.9" fill="#111111" opacity="0.91"/><ellipse cx="114.8" cy="70.8" rx="18.5" ry="15.2" fill="#111111" opacity="1.00"/><ellipse cx="119.7" cy="85.5" rx="11.9" ry="10.2" fill="#111111" opacity="0.82"/><ellipse cx="7.3" cy="68.4" rx="10.2" ry="21.8" fill="#111111" opacity="1.00"/><ellipse cx="19.5" cy="70.8" rx="10.2" ry="11.9" fill="#111111" opacity="0.73"/><ellipse cx="7.3" cy="97.7" rx="8.6" ry="21.8" fill="#111111" opacity="0.91"/><ellipse cx="31.8" cy="92.8" rx="15.2" ry="21.8" fill="#111111" opacity="1.00"/><ellipse cx="45.2" cy="102.6" rx="10.2" ry="10.2" fill="#111111" opacity="0.73"/><ellipse cx="42.7" cy="78.2" rx="6.9" ry="6.9" fill="#111111" opacity="0.64"/><ellipse cx="81.8" cy="96.5" rx="15.2" ry="18.5" fill="#111111" opacity="1.00"/><ellipse cx="55.0" cy="117.2" rx="15.2" ry="10.2" fill="#111111" opacity="0.82"/><ellipse cx="75.7" cy="120.9" rx="10.2" ry="11.9" fill="#111111" opacity="0.73"/><ellipse cx="41.5" cy="122.1" rx="7.9" ry="7.9" fill="#111111" opacity="0.64"/><ellipse cx="161.2" cy="62.3" rx="10.2" ry="10.2" fill="#111111" opacity="0.73"/><ellipse cx="180.8" cy="66.0" rx="15.2" ry="15.2" fill="#111111" opacity="0.91"/><ellipse cx="188.1" cy="85.5" rx="10.2" ry="18.5" fill="#111111" opacity="0.91"/><ellipse cx="131.9" cy="90.4" rx="15.2" ry="10.2" fill="#111111" opacity="0.82"/><ellipse cx="156.3" cy="97.7" rx="25.1" ry="18.5" fill="#111111" opacity="1.00"/><ellipse cx="158.8" cy="119.7" rx="18.5" ry="13.5" fill="#111111" opacity="1.00"/><ellipse cx="210.1" cy="96.5" rx="8.6" ry="8.6" fill="#111111" opacity="0.64"/><ellipse cx="195.4" cy="109.9" rx="15.2" ry="10.2" fill="#111111" opacity="0.82"/><ellipse cx="183.2" cy="117.2" rx="7.9" ry="7.9" fill="#111111" opacity="0.64"/><ellipse cx="241.8" cy="102.6" rx="6.9" ry="6.9" fill="#111111" opacity="0.64"/><ellipse cx="117.2" cy="98.9" rx="6.9" ry="6.9" fill="#111111" opacity="0.64"/><ellipse cx="14.7" cy="131.9" rx="16.8" ry="15.2" fill="#111111" opacity="1.00"/><ellipse cx="33.0" cy="135.6" rx="7.9" ry="7.9" fill="#111111" opacity="0.64"/><ellipse cx="47.6" cy="139.2" rx="13.5" ry="15.2" fill="#111111" opacity="0.82"/><ellipse cx="66.0" cy="145.3" rx="7.9" ry="7.9" fill="#111111" opacity="0.64"/><ellipse cx="24.4" cy="160.0" rx="21.8" ry="10.2" fill="#111111" opacity="0.91"/><ellipse cx="48.9" cy="163.7" rx="7.9" ry="7.9" fill="#111111" opacity="0.64"/><ellipse cx="13.4" cy="174.6" rx="10.2" ry="6.9" fill="#111111" opacity="0.64"/><ellipse cx="44.0" cy="175.9" rx="6.0" ry="6.0" fill="#111111" opacity="0.64"/><ellipse cx="94.0" cy="136.8" rx="15.2" ry="11.9" fill="#111111" opacity="0.82"/><ellipse cx="90.4" cy="151.4" rx="13.5" ry="15.2" fill="#111111" opacity="0.91"/><ellipse cx="75.7" cy="158.8" rx="10.2" ry="13.5" fill="#111111" opacity="0.82"/><ellipse cx="64.7" cy="171.0" rx="10.2" ry="10.2" fill="#111111" opacity="0.73"/><ellipse cx="109.9" cy="156.3" rx="15.2" ry="18.5" fill="#111111" opacity="1.00"/><ellipse cx="97.7" cy="174.6" rx="8.6" ry="10.2" fill="#111111" opacity="0.73"/><ellipse cx="127.0" cy="149.0" rx="15.2" ry="15.2" fill="#111111" opacity="1.00"/><ellipse cx="141.7" cy="151.4" rx="15.2" ry="18.5" fill="#111111" opacity="1.00"/><ellipse cx="131.9" cy="166.1" rx="8.6" ry="8.6" fill="#111111" opacity="0.73"/><ellipse cx="158.8" cy="161.2" rx="15.2" ry="21.8" fill="#111111" opacity="1.00"/><ellipse cx="161.2" cy="140.4" rx="6.9" ry="6.9" fill="#111111" opacity="0.64"/><ellipse cx="174.6" cy="138.0" rx="7.9" ry="7.9" fill="#111111" opacity="0.64"/><ellipse cx="175.9" cy="180.8" rx="18.5" ry="10.2" fill="#111111" opacity="0.91"/><ellipse cx="195.4" cy="180.8" rx="10.2" ry="6.9" fill="#111111" opacity="0.73"/><ellipse cx="206.4" cy="174.6" rx="6.9" ry="6.9" fill="#111111" opacity="0.64"/><ellipse cx="141.7" cy="183.2" rx="6.9" ry="11.9" fill="#111111" opacity="0.73"/><ellipse cx="156.3" cy="183.2" rx="8.6" ry="8.6" fill="#111111" opacity="0.73"/><ellipse cx="133.1" cy="195.4" rx="6.9" ry="6.9" fill="#111111" opacity="0.64"/><ellipse cx="241.8" cy="156.3" rx="15.2" ry="13.5" fill="#111111" opacity="0.82"/><ellipse cx="228.4" cy="174.6" rx="16.8" ry="15.2" fill="#111111" opacity="1.00"/><ellipse cx="246.7" cy="180.8" rx="10.2" ry="8.6" fill="#111111" opacity="0.73"/><ellipse cx="249.1" cy="195.4" rx="6.9" ry="11.9" fill="#111111" opacity="0.73"/><ellipse cx="158.8" cy="200.3" rx="18.5" ry="13.5" fill="#111111" opacity="1.00"/><ellipse cx="185.6" cy="202.7" rx="15.2" ry="13.5" fill="#111111" opacity="0.91"/><ellipse cx="207.6" cy="197.9" rx="11.9" ry="10.2" fill="#111111" opacity="0.73"/><ellipse cx="146.6" cy="210.1" rx="11.9" ry="18.5" fill="#111111" opacity="0.91"/><ellipse cx="180.8" cy="217.4" rx="15.2" ry="15.2" fill="#111111" opacity="1.00"/><ellipse cx="202.7" cy="214.9" rx="18.5" ry="15.2" fill="#111111" opacity="1.00"/><ellipse cx="197.9" cy="232.0" rx="21.8" ry="15.2" fill="#111111" opacity="1.00"/><ellipse cx="232.0" cy="210.1" rx="11.9" ry="18.5" fill="#111111" opacity="0.91"/><ellipse cx="244.3" cy="219.8" rx="13.5" ry="15.2" fill="#111111" opacity="0.82"/><ellipse cx="236.9" cy="234.5" rx="13.5" ry="11.9" fill="#111111" opacity="0.82"/><ellipse cx="249.1" cy="239.4" rx="6.9" ry="10.2" fill="#111111" opacity="0.64"/><ellipse cx="224.7" cy="246.7" rx="6.9" ry="6.9" fill="#111111" opacity="0.64"/><ellipse cx="202.7" cy="249.1" rx="13.5" ry="6.9" fill="#111111" opacity="0.73"/><ellipse cx="136.8" cy="234.5" rx="11.9" ry="10.2" fill="#111111" opacity="0.73"/><ellipse cx="147.8" cy="234.5" rx="6.9" ry="6.9" fill="#111111" opacity="0.64"/><ellipse cx="163.7" cy="235.7" rx="10.2" ry="6.0" fill="#111111" opacity="0.64"/><ellipse cx="129.5" cy="249.1" rx="6.9" ry="6.9" fill="#111111" opacity="0.64"/><ellipse cx="17.1" cy="196.6" rx="6.0" ry="6.0" fill="#111111" opacity="0.64"/><ellipse cx="19.5" cy="214.9" rx="16.8" ry="18.5" fill="#111111" opacity="1.00"/><ellipse cx="14.7" cy="238.2" rx="6.0" ry="8.6" fill="#111111" opacity="0.64"/><ellipse cx="41.5" cy="228.4" rx="15.2" ry="16.8" fill="#111111" opacity="1.00"/><ellipse cx="61.1" cy="217.4" rx="13.5" ry="15.2" fill="#111111" opacity="0.91"/><ellipse cx="63.5" cy="238.2" rx="13.5" ry="11.9" fill="#111111" opacity="0.82"/><ellipse cx="80.6" cy="230.8" rx="8.6" ry="10.2" fill="#111111" opacity="0.73"/><ellipse cx="94.0" cy="225.9" rx="6.9" ry="6.9" fill="#111111" opacity="0.64"/><ellipse cx="44.0" cy="250.4" rx="9.3" ry="6.0" fill="#111111" opacity="0.64"/><ellipse cx="78.2" cy="244.3" rx="6.0" ry="6.0" fill="#111111" opacity="0.64"/><ellipse cx="115" cy="117" rx="24" ry="15" fill="#000" opacity="0.8" transform="rotate(-11 115 117)"/><ellipse cx="203" cy="150" rx="27" ry="22" fill="#000" opacity="0.8" transform="rotate(-21 203 150)"/><ellipse cx="228" cy="100" rx="20" ry="18" fill="#000" opacity="0.6" transform="rotate(9 228 100)"/><ellipse cx="90" cy="214" rx="45" ry="20" fill="#000" opacity="0.6" transform="rotate(-26 90 214)"/><ellipse cx="49" cy="29" rx="12" ry="11" fill="#000" opacity="0.5" transform="rotate(2 49 29)"/><ellipse cx="107" cy="15" rx="20" ry="9" fill="#000" opacity="0.6" transform="rotate(-8 107 15)"/><ellipse cx="146" cy="63" rx="10" ry="10" fill="#000" opacity="0.5" transform="rotate(-27 146 63)"/><ellipse cx="176" cy="61" rx="9" ry="10" fill="#000" opacity="0.5" transform="rotate(0 176 61)"/><ellipse cx="232" cy="82" rx="16" ry="8" fill="#000" opacity="0.5" transform="rotate(-28 232 82)"/><ellipse cx="171" cy="222" rx="12" ry="13" fill="#000" opacity="0.5" transform="rotate(-4 171 222)"/></g><ellipse cx="19.5" cy="14.7" rx="10.4" ry="7.2" fill="url(#gw)" opacity="0.06" transform="rotate(13 19.5 14.7)"/><ellipse cx="19.5" cy="14.7" rx="5.8" ry="4.0" fill="url(#gw)" opacity="0.15" transform="rotate(13 19.5 14.7)"/><ellipse cx="19.6" cy="16.5" rx="3.2" ry="3.2" fill="url(#gw)" opacity="0.12"/><ellipse cx="38.0" cy="5.0" rx="10.4" ry="7.2" fill="url(#gw)" opacity="0.04" transform="rotate(16 38.0 5.0)"/><ellipse cx="38.0" cy="5.0" rx="5.8" ry="4.0" fill="url(#gw)" opacity="0.09" transform="rotate(16 38.0 5.0)"/><ellipse cx="38.0" cy="6.8" rx="3.2" ry="3.2" fill="url(#gw)" opacity="0.07"/><ellipse cx="7.0" cy="40.0" rx="7.8" ry="5.4" fill="url(#gw)" opacity="0.03" transform="rotate(76 7.0 40.0)"/><ellipse cx="7.0" cy="40.0" rx="4.3" ry="3.0" fill="url(#gw)" opacity="0.08" transform="rotate(76 7.0 40.0)"/><ellipse cx="29.0" cy="36.6" rx="7.8" ry="5.4" fill="url(#gw)" opacity="0.02" transform="rotate(149 29.0 36.6)"/><ellipse cx="29.0" cy="36.6" rx="4.3" ry="3.0" fill="url(#gw)" opacity="0.06" transform="rotate(149 29.0 36.6)"/><ellipse cx="35.4" cy="57.4" rx="15.6" ry="10.8" fill="url(#gw)" opacity="0.05" transform="rotate(22 35.4 57.4)"/><ellipse cx="35.4" cy="57.4" rx="8.7" ry="6.0" fill="url(#gw)" opacity="0.13" transform="rotate(22 35.4 57.4)"/><ellipse cx="35.1" cy="60.1" rx="4.9" ry="4.9" fill="url(#gw)" opacity="0.10"/><ellipse cx="41.5" cy="68.4" rx="7.8" ry="5.4" fill="url(#gw)" opacity="0.05" transform="rotate(40 41.5 68.4)"/><ellipse cx="41.5" cy="68.4" rx="4.3" ry="3.0" fill="url(#gw)" opacity="0.14" transform="rotate(40 41.5 68.4)"/><ellipse cx="17.0" cy="68.0" rx="10.4" ry="7.2" fill="url(#gw)" opacity="0.04" transform="rotate(113 17.0 68.0)"/><ellipse cx="17.0" cy="68.0" rx="5.8" ry="4.0" fill="url(#gw)" opacity="0.09" transform="rotate(113 17.0 68.0)"/><ellipse cx="15.2" cy="67.8" rx="3.2" ry="3.2" fill="url(#gw)" opacity="0.07"/><ellipse cx="74.5" cy="59.8" rx="15.6" ry="10.8" fill="url(#gw)" opacity="0.05" transform="rotate(171 74.5 59.8)"/><ellipse cx="74.5" cy="59.8" rx="8.7" ry="6.0" fill="url(#gw)" opacity="0.14" transform="rotate(171 74.5 59.8)"/><ellipse cx="73.4" cy="57.4" rx="4.9" ry="4.9" fill="url(#gw)" opacity="0.11"/><ellipse cx="91.0" cy="64.0" rx="6.5" ry="4.5" fill="url(#gw)" opacity="0.05" transform="rotate(104 91.0 64.0)"/><ellipse cx="91.0" cy="64.0" rx="3.6" ry="2.5" fill="url(#gw)" opacity="0.13" transform="rotate(104 91.0 64.0)"/><ellipse cx="111.0" cy="47.6" rx="10.4" ry="7.2" fill="url(#gw)" opacity="0.04" transform="rotate(71 111.0 47.6)"/><ellipse cx="111.0" cy="47.6" rx="5.8" ry="4.0" fill="url(#gw)" opacity="0.09" transform="rotate(71 111.0 47.6)"/><ellipse cx="109.5" cy="48.6" rx="3.2" ry="3.2" fill="url(#gw)" opacity="0.07"/><ellipse cx="85.5" cy="31.8" rx="7.8" ry="5.4" fill="url(#gw)" opacity="0.02" transform="rotate(176 85.5 31.8)"/><ellipse cx="85.5" cy="31.8" rx="4.3" ry="3.0" fill="url(#gw)" opacity="0.06" transform="rotate(176 85.5 31.8)"/><ellipse cx="99.0" cy="44.0" rx="7.8" ry="5.4" fill="url(#gw)" opacity="0.02" transform="rotate(8 99.0 44.0)"/><ellipse cx="99.0" cy="44.0" rx="4.3" ry="3.0" fill="url(#gw)" opacity="0.06" transform="rotate(8 99.0 44.0)"/><ellipse cx="112.0" cy="69.6" rx="7.8" ry="5.4" fill="url(#gw)" opacity="0.03" transform="rotate(155 112.0 69.6)"/><ellipse cx="112.0" cy="69.6" rx="4.3" ry="3.0" fill="url(#gw)" opacity="0.08" transform="rotate(155 112.0 69.6)"/><ellipse cx="35.4" cy="85.5" rx="10.4" ry="7.2" fill="url(#gw)" opacity="0.03" transform="rotate(52 35.4 85.5)"/><ellipse cx="35.4" cy="85.5" rx="5.8" ry="4.0" fill="url(#gw)" opacity="0.07" transform="rotate(52 35.4 85.5)"/><ellipse cx="34.3" cy="86.9" rx="3.2" ry="3.2" fill="url(#gw)" opacity="0.05"/><ellipse cx="168.5" cy="29.3" rx="7.8" ry="5.4" fill="url(#gw)" opacity="0.03" transform="rotate(26 168.5 29.3)"/><ellipse cx="168.5" cy="29.3" rx="4.3" ry="3.0" fill="url(#gw)" opacity="0.08" transform="rotate(26 168.5 29.3)"/><ellipse cx="180.7" cy="6.8" rx="7.8" ry="5.4" fill="url(#gw)" opacity="0.04" transform="rotate(21 180.7 6.8)"/><ellipse cx="180.7" cy="6.8" rx="4.3" ry="3.0" fill="url(#gw)" opacity="0.09" transform="rotate(21 180.7 6.8)"/><ellipse cx="161.0" cy="7.3" rx="10.4" ry="7.2" fill="url(#gw)" opacity="0.03" transform="rotate(56 161.0 7.3)"/><ellipse cx="161.0" cy="7.3" rx="5.8" ry="4.0" fill="url(#gw)" opacity="0.08" transform="rotate(56 161.0 7.3)"/><ellipse cx="159.8" cy="8.7" rx="3.2" ry="3.2" fill="url(#gw)" opacity="0.06"/><ellipse cx="202.0" cy="6.5" rx="9.1" ry="6.3" fill="url(#gw)" opacity="0.03" transform="rotate(147 202.0 6.5)"/><ellipse cx="202.0" cy="6.5" rx="5.1" ry="3.5" fill="url(#gw)" opacity="0.08" transform="rotate(147 202.0 6.5)"/><ellipse cx="161.5" cy="18.9" rx="7.8" ry="5.4" fill="url(#gw)" opacity="0.02" transform="rotate(33 161.5 18.9)"/><ellipse cx="161.5" cy="18.9" rx="4.3" ry="3.0" fill="url(#gw)" opacity="0.06" transform="rotate(33 161.5 18.9)"/><ellipse cx="208.6" cy="26.5" rx="7.8" ry="5.4" fill="url(#gw)" opacity="0.03" transform="rotate(105 208.6 26.5)"/><ellipse cx="208.6" cy="26.5" rx="4.3" ry="3.0" fill="url(#gw)" opacity="0.08" transform="rotate(105 208.6 26.5)"/><ellipse cx="217.4" cy="37.9" rx="18.2" ry="12.6" fill="url(#gw)" opacity="0.06" transform="rotate(115 217.4 37.9)"/><ellipse cx="217.4" cy="37.9" rx="10.2" ry="7.0" fill="url(#gw)" opacity="0.15" transform="rotate(115 217.4 37.9)"/><ellipse cx="214.3" cy="37.4" rx="5.7" ry="5.7" fill="url(#gw)" opacity="0.12"/><ellipse cx="207.9" cy="46.9" rx="15.6" ry="10.8" fill="url(#gw)" opacity="0.04" transform="rotate(67 207.9 46.9)"/><ellipse cx="207.9" cy="46.9" rx="8.7" ry="6.0" fill="url(#gw)" opacity="0.09" transform="rotate(67 207.9 46.9)"/><ellipse cx="205.8" cy="48.6" rx="4.9" ry="4.9" fill="url(#gw)" opacity="0.07"/><ellipse cx="199.0" cy="52.5" rx="10.4" ry="7.2" fill="url(#gw)" opacity="0.03" transform="rotate(99 199.0 52.5)"/><ellipse cx="199.0" cy="52.5" rx="5.8" ry="4.0" fill="url(#gw)" opacity="0.08" transform="rotate(99 199.0 52.5)"/><ellipse cx="197.2" cy="52.7" rx="3.2" ry="3.2" fill="url(#gw)" opacity="0.06"/><ellipse cx="238.0" cy="31.8" rx="13.0" ry="9.0" fill="url(#gw)" opacity="0.05" transform="rotate(11 238.0 31.8)"/><ellipse cx="238.0" cy="31.8" rx="7.2" ry="5.0" fill="url(#gw)" opacity="0.13" transform="rotate(11 238.0 31.8)"/><ellipse cx="238.2" cy="34.0" rx="4.1" ry="4.1" fill="url(#gw)" opacity="0.10"/><ellipse cx="243.0" cy="50.0" rx="10.4" ry="7.2" fill="url(#gw)" opacity="0.05" transform="rotate(11 243.0 50.0)"/><ellipse cx="243.0" cy="50.0" rx="5.8" ry="4.0" fill="url(#gw)" opacity="0.14" transform="rotate(11 243.0 50.0)"/><ellipse cx="243.2" cy="51.8" rx="3.2" ry="3.2" fill="url(#gw)" opacity="0.11"/><ellipse cx="229.6" cy="42.7" rx="7.8" ry="5.4" fill="url(#gw)" opacity="0.03" transform="rotate(37 229.6 42.7)"/><ellipse cx="229.6" cy="42.7" rx="4.3" ry="3.0" fill="url(#gw)" opacity="0.08" transform="rotate(37 229.6 42.7)"/><ellipse cx="223.5" cy="68.4" rx="7.8" ry="5.4" fill="url(#gw)" opacity="0.03" transform="rotate(122 223.5 68.4)"/><ellipse cx="223.5" cy="68.4" rx="4.3" ry="3.0" fill="url(#gw)" opacity="0.07" transform="rotate(122 223.5 68.4)"/><ellipse cx="205.0" cy="73.3" rx="7.8" ry="5.4" fill="url(#gw)" opacity="0.03" transform="rotate(77 205.0 73.3)"/><ellipse cx="205.0" cy="73.3" rx="4.3" ry="3.0" fill="url(#gw)" opacity="0.07" transform="rotate(77 205.0 73.3)"/><ellipse cx="128.5" cy="92.0" rx="13.0" ry="9.0" fill="url(#gw)" opacity="0.03" transform="rotate(57 128.5 92.0)"/><ellipse cx="128.5" cy="92.0" rx="7.2" ry="5.0" fill="url(#gw)" opacity="0.07" transform="rotate(57 128.5 92.0)"/><ellipse cx="127.0" cy="93.7" rx="4.1" ry="4.1" fill="url(#gw)" opacity="0.05"/><ellipse cx="149.0" cy="102.6" rx="13.0" ry="9.0" fill="url(#gw)" opacity="0.04" transform="rotate(105 149.0 102.6)"/><ellipse cx="149.0" cy="102.6" rx="7.2" ry="5.0" fill="url(#gw)" opacity="0.09" transform="rotate(105 149.0 102.6)"/><ellipse cx="146.8" cy="102.6" rx="4.1" ry="4.1" fill="url(#gw)" opacity="0.07"/><ellipse cx="156.3" cy="105.5" rx="10.4" ry="7.2" fill="url(#gw)" opacity="0.05" transform="rotate(82 156.3 105.5)"/><ellipse cx="156.3" cy="105.5" rx="5.8" ry="4.0" fill="url(#gw)" opacity="0.14" transform="rotate(82 156.3 105.5)"/><ellipse cx="154.7" cy="106.2" rx="3.2" ry="3.2" fill="url(#gw)" opacity="0.11"/><ellipse cx="182.0" cy="107.5" rx="7.8" ry="5.4" fill="url(#gw)" opacity="0.04" transform="rotate(54 182.0 107.5)"/><ellipse cx="182.0" cy="107.5" rx="4.3" ry="3.0" fill="url(#gw)" opacity="0.10" transform="rotate(54 182.0 107.5)"/><ellipse cx="193.7" cy="112.8" rx="9.1" ry="6.3" fill="url(#gw)" opacity="0.04" transform="rotate(143 193.7 112.8)"/><ellipse cx="193.7" cy="112.8" rx="5.1" ry="3.5" fill="url(#gw)" opacity="0.09" transform="rotate(143 193.7 112.8)"/><ellipse cx="168.5" cy="101.4" rx="7.8" ry="5.4" fill="url(#gw)" opacity="0.02" transform="rotate(126 168.5 101.4)"/><ellipse cx="168.5" cy="101.4" rx="4.3" ry="3.0" fill="url(#gw)" opacity="0.06" transform="rotate(126 168.5 101.4)"/><ellipse cx="78.6" cy="117.2" rx="10.4" ry="7.2" fill="url(#gw)" opacity="0.04" transform="rotate(44 78.6 117.2)"/><ellipse cx="78.6" cy="117.2" rx="5.8" ry="4.0" fill="url(#gw)" opacity="0.11" transform="rotate(44 78.6 117.2)"/><ellipse cx="77.7" cy="118.8" rx="3.2" ry="3.2" fill="url(#gw)" opacity="0.09"/><ellipse cx="51.3" cy="118.5" rx="10.4" ry="7.2" fill="url(#gw)" opacity="0.03" transform="rotate(103 51.3 118.5)"/><ellipse cx="51.3" cy="118.5" rx="5.8" ry="4.0" fill="url(#gw)" opacity="0.07" transform="rotate(103 51.3 118.5)"/><ellipse cx="49.5" cy="118.6" rx="3.2" ry="3.2" fill="url(#gw)" opacity="0.05"/><ellipse cx="99.4" cy="135.6" rx="11.7" ry="8.1" fill="url(#gw)" opacity="0.05" transform="rotate(95 99.4 135.6)"/><ellipse cx="99.4" cy="135.6" rx="6.5" ry="4.5" fill="url(#gw)" opacity="0.14" transform="rotate(95 99.4 135.6)"/><ellipse cx="97.4" cy="136.0" rx="3.6" ry="3.6" fill="url(#gw)" opacity="0.11"/><ellipse cx="105.0" cy="141.7" rx="7.8" ry="5.4" fill="url(#gw)" opacity="0.03" transform="rotate(158 105.0 141.7)"/><ellipse cx="105.0" cy="141.7" rx="4.3" ry="3.0" fill="url(#gw)" opacity="0.08" transform="rotate(158 105.0 141.7)"/><ellipse cx="124.6" cy="146.0" rx="13.0" ry="9.0" fill="url(#gw)" opacity="0.06" transform="rotate(131 124.6 146.0)"/><ellipse cx="124.6" cy="146.0" rx="7.2" ry="5.0" fill="url(#gw)" opacity="0.15" transform="rotate(131 124.6 146.0)"/><ellipse cx="122.6" cy="145.0" rx="4.1" ry="4.1" fill="url(#gw)" opacity="0.11"/><ellipse cx="131.9" cy="153.9" rx="10.4" ry="7.2" fill="url(#gw)" opacity="0.04" transform="rotate(52 131.9 153.9)"/><ellipse cx="131.9" cy="153.9" rx="5.8" ry="4.0" fill="url(#gw)" opacity="0.10" transform="rotate(52 131.9 153.9)"/><ellipse cx="130.8" cy="155.4" rx="3.2" ry="3.2" fill="url(#gw)" opacity="0.08"/><ellipse cx="144.0" cy="154.4" rx="7.8" ry="5.4" fill="url(#gw)" opacity="0.03" transform="rotate(176 144.0 154.4)"/><ellipse cx="144.0" cy="154.4" rx="4.3" ry="3.0" fill="url(#gw)" opacity="0.07" transform="rotate(176 144.0 154.4)"/><ellipse cx="12.2" cy="146.6" rx="10.4" ry="7.2" fill="url(#gw)" opacity="0.04" transform="rotate(21 12.2 146.6)"/><ellipse cx="12.2" cy="146.6" rx="5.8" ry="4.0" fill="url(#gw)" opacity="0.09" transform="rotate(21 12.2 146.6)"/><ellipse cx="12.0" cy="148.4" rx="3.2" ry="3.2" fill="url(#gw)" opacity="0.07"/><ellipse cx="42.7" cy="147.8" rx="6.5" ry="4.5" fill="url(#gw)" opacity="0.02" transform="rotate(75 42.7 147.8)"/><ellipse cx="42.7" cy="147.8" rx="3.6" ry="2.5" fill="url(#gw)" opacity="0.06" transform="rotate(75 42.7 147.8)"/><ellipse cx="78.0" cy="157.5" rx="10.4" ry="7.2" fill="url(#gw)" opacity="0.02" transform="rotate(136 78.0 157.5)"/><ellipse cx="78.0" cy="157.5" rx="5.8" ry="4.0" fill="url(#gw)" opacity="0.06" transform="rotate(136 78.0 157.5)"/><ellipse cx="76.5" cy="156.6" rx="3.2" ry="3.2" fill="url(#gw)" opacity="0.05"/><ellipse cx="62.3" cy="167.8" rx="6.5" ry="4.5" fill="url(#gw)" opacity="0.03" transform="rotate(27 62.3 167.8)"/><ellipse cx="62.3" cy="167.8" rx="3.6" ry="2.5" fill="url(#gw)" opacity="0.08" transform="rotate(27 62.3 167.8)"/><ellipse cx="101.4" cy="171.0" rx="7.8" ry="5.4" fill="url(#gw)" opacity="0.06" transform="rotate(88 101.4 171.0)"/><ellipse cx="101.4" cy="171.0" rx="4.3" ry="3.0" fill="url(#gw)" opacity="0.15" transform="rotate(88 101.4 171.0)"/><ellipse cx="163.0" cy="161.7" rx="13.0" ry="9.0" fill="url(#gw)" opacity="0.06" transform="rotate(7 163.0 161.7)"/><ellipse cx="163.0" cy="161.7" rx="7.2" ry="5.0" fill="url(#gw)" opacity="0.15" transform="rotate(7 163.0 161.7)"/><ellipse cx="163.3" cy="163.9" rx="4.1" ry="4.1" fill="url(#gw)" opacity="0.11"/><ellipse cx="156.3" cy="171.0" rx="15.6" ry="10.8" fill="url(#gw)" opacity="0.04" transform="rotate(120 156.3 171.0)"/><ellipse cx="156.3" cy="171.0" rx="8.7" ry="6.0" fill="url(#gw)" opacity="0.09" transform="rotate(120 156.3 171.0)"/><ellipse cx="153.7" cy="170.3" rx="4.9" ry="4.9" fill="url(#gw)" opacity="0.07"/><ellipse cx="163.7" cy="177.0" rx="10.4" ry="7.2" fill="url(#gw)" opacity="0.03" transform="rotate(138 163.7 177.0)"/><ellipse cx="163.7" cy="177.0" rx="5.8" ry="4.0" fill="url(#gw)" opacity="0.08" transform="rotate(138 163.7 177.0)"/><ellipse cx="162.2" cy="176.0" rx="3.2" ry="3.2" fill="url(#gw)" opacity="0.06"/><ellipse cx="179.5" cy="182.0" rx="13.0" ry="9.0" fill="url(#gw)" opacity="0.03" transform="rotate(103 179.5 182.0)"/><ellipse cx="179.5" cy="182.0" rx="7.2" ry="5.0" fill="url(#gw)" opacity="0.08" transform="rotate(103 179.5 182.0)"/><ellipse cx="177.3" cy="182.1" rx="4.1" ry="4.1" fill="url(#gw)" opacity="0.06"/><ellipse cx="141.7" cy="182.0" rx="7.8" ry="5.4" fill="url(#gw)" opacity="0.03" transform="rotate(158 141.7 182.0)"/><ellipse cx="141.7" cy="182.0" rx="4.3" ry="3.0" fill="url(#gw)" opacity="0.07" transform="rotate(158 141.7 182.0)"/><ellipse cx="153.0" cy="195.4" rx="7.8" ry="5.4" fill="url(#gw)" opacity="0.03" transform="rotate(56 153.0 195.4)"/><ellipse cx="153.0" cy="195.4" rx="4.3" ry="3.0" fill="url(#gw)" opacity="0.08" transform="rotate(56 153.0 195.4)"/><ellipse cx="162.4" cy="200.8" rx="15.6" ry="10.8" fill="url(#gw)" opacity="0.04" transform="rotate(125 162.4 200.8)"/><ellipse cx="162.4" cy="200.8" rx="8.7" ry="6.0" fill="url(#gw)" opacity="0.10" transform="rotate(125 162.4 200.8)"/><ellipse cx="159.9" cy="199.9" rx="4.9" ry="4.9" fill="url(#gw)" opacity="0.08"/><ellipse cx="205.0" cy="197.8" rx="15.6" ry="10.8" fill="url(#gw)" opacity="0.02" transform="rotate(107 205.0 197.8)"/><ellipse cx="205.0" cy="197.8" rx="8.7" ry="6.0" fill="url(#gw)" opacity="0.06" transform="rotate(107 205.0 197.8)"/><ellipse cx="202.3" cy="197.7" rx="4.9" ry="4.9" fill="url(#gw)" opacity="0.05"/><ellipse cx="223.5" cy="173.4" rx="15.6" ry="10.8" fill="url(#gw)" opacity="0.05" transform="rotate(104 223.5 173.4)"/><ellipse cx="223.5" cy="173.4" rx="8.7" ry="6.0" fill="url(#gw)" opacity="0.13" transform="rotate(104 223.5 173.4)"/><ellipse cx="220.8" cy="173.5" rx="4.9" ry="4.9" fill="url(#gw)" opacity="0.10"/><ellipse cx="233.3" cy="174.6" rx="18.2" ry="12.6" fill="url(#gw)" opacity="0.06" transform="rotate(82 233.3 174.6)"/><ellipse cx="233.3" cy="174.6" rx="10.2" ry="7.0" fill="url(#gw)" opacity="0.15" transform="rotate(82 233.3 174.6)"/><ellipse cx="230.4" cy="175.9" rx="5.7" ry="5.7" fill="url(#gw)" opacity="0.11"/><ellipse cx="241.8" cy="156.3" rx="13.0" ry="9.0" fill="url(#gw)" opacity="0.04" transform="rotate(151 241.8 156.3)"/><ellipse cx="241.8" cy="156.3" rx="7.2" ry="5.0" fill="url(#gw)" opacity="0.11" transform="rotate(151 241.8 156.3)"/><ellipse cx="240.2" cy="154.7" rx="4.1" ry="4.1" fill="url(#gw)" opacity="0.08"/><ellipse cx="251.6" cy="155.0" rx="7.8" ry="5.4" fill="url(#gw)" opacity="0.03" transform="rotate(170 251.6 155.0)"/><ellipse cx="251.6" cy="155.0" rx="4.3" ry="3.0" fill="url(#gw)" opacity="0.08" transform="rotate(170 251.6 155.0)"/><ellipse cx="230.8" cy="211.3" rx="18.2" ry="12.6" fill="url(#gw)" opacity="0.06" transform="rotate(85 230.8 211.3)"/><ellipse cx="230.8" cy="211.3" rx="10.2" ry="7.0" fill="url(#gw)" opacity="0.15" transform="rotate(85 230.8 211.3)"/><ellipse cx="227.8" cy="212.4" rx="5.7" ry="5.7" fill="url(#gw)" opacity="0.12"/><ellipse cx="196.6" cy="215.0" rx="18.2" ry="12.6" fill="url(#gw)" opacity="0.04" transform="rotate(120 196.6 215.0)"/><ellipse cx="196.6" cy="215.0" rx="10.2" ry="7.0" fill="url(#gw)" opacity="0.10" transform="rotate(120 196.6 215.0)"/><ellipse cx="193.5" cy="214.2" rx="5.7" ry="5.7" fill="url(#gw)" opacity="0.08"/><ellipse cx="206.4" cy="221.0" rx="20.8" ry="14.4" fill="url(#gw)" opacity="0.04" transform="rotate(11 206.4 221.0)"/><ellipse cx="206.4" cy="221.0" rx="11.6" ry="8.0" fill="url(#gw)" opacity="0.11" transform="rotate(11 206.4 221.0)"/><ellipse cx="206.7" cy="224.6" rx="6.5" ry="6.5" fill="url(#gw)" opacity="0.09"/><ellipse cx="204.0" cy="229.6" rx="13.0" ry="9.0" fill="url(#gw)" opacity="0.03" transform="rotate(126 204.0 229.6)"/><ellipse cx="204.0" cy="229.6" rx="7.2" ry="5.0" fill="url(#gw)" opacity="0.08" transform="rotate(126 204.0 229.6)"/><ellipse cx="201.9" cy="228.8" rx="4.1" ry="4.1" fill="url(#gw)" opacity="0.06"/><ellipse cx="216.0" cy="232.0" rx="7.8" ry="5.4" fill="url(#gw)" opacity="0.03" transform="rotate(116 216.0 232.0)"/><ellipse cx="216.0" cy="232.0" rx="4.3" ry="3.0" fill="url(#gw)" opacity="0.08" transform="rotate(116 216.0 232.0)"/><ellipse cx="136.0" cy="234.0" rx="15.6" ry="10.8" fill="url(#gw)" opacity="0.06" transform="rotate(179 136.0 234.0)"/><ellipse cx="136.0" cy="234.0" rx="8.7" ry="6.0" fill="url(#gw)" opacity="0.15" transform="rotate(179 136.0 234.0)"/><ellipse cx="135.2" cy="231.4" rx="4.9" ry="4.9" fill="url(#gw)" opacity="0.12"/><ellipse cx="18.3" cy="216.0" rx="18.2" ry="12.6" fill="url(#gw)" opacity="0.04" transform="rotate(148 18.3 216.0)"/><ellipse cx="18.3" cy="216.0" rx="10.2" ry="7.0" fill="url(#gw)" opacity="0.09" transform="rotate(148 18.3 216.0)"/><ellipse cx="16.0" cy="213.9" rx="5.7" ry="5.7" fill="url(#gw)" opacity="0.07"/><ellipse cx="29.3" cy="216.0" rx="10.4" ry="7.2" fill="url(#gw)" opacity="0.03" transform="rotate(51 29.3 216.0)"/><ellipse cx="29.3" cy="216.0" rx="5.8" ry="4.0" fill="url(#gw)" opacity="0.08" transform="rotate(51 29.3 216.0)"/><ellipse cx="28.2" cy="217.5" rx="3.2" ry="3.2" fill="url(#gw)" opacity="0.06"/><ellipse cx="13.4" cy="223.5" rx="10.4" ry="7.2" fill="url(#gw)" opacity="0.03" transform="rotate(69 13.4 223.5)"/><ellipse cx="13.4" cy="223.5" rx="5.8" ry="4.0" fill="url(#gw)" opacity="0.07" transform="rotate(69 13.4 223.5)"/><ellipse cx="11.9" cy="224.6" rx="3.2" ry="3.2" fill="url(#gw)" opacity="0.05"/><ellipse cx="238.0" cy="201.5" rx="6.5" ry="4.5" fill="url(#gw)" opacity="0.02" transform="rotate(120 238.0 201.5)"/><ellipse cx="238.0" cy="201.5" rx="3.6" ry="2.5" fill="url(#gw)" opacity="0.06" transform="rotate(120 238.0 201.5)"/><ellipse cx="245.5" cy="241.8" rx="6.5" ry="4.5" fill="url(#gw)" opacity="0.02" transform="rotate(4 245.5 241.8)"/><ellipse cx="245.5" cy="241.8" rx="3.6" ry="2.5" fill="url(#gw)" opacity="0.06" transform="rotate(4 245.5 241.8)"/><ellipse cx="75.6" cy="245.7" rx="6.5" ry="4.5" fill="url(#gw)" opacity="0.02" transform="rotate(83 75.6 245.7)"/><ellipse cx="75.6" cy="245.7" rx="3.6" ry="2.5" fill="url(#gw)" opacity="0.05" transform="rotate(83 75.6 245.7)"/><ellipse cx="81.4" cy="230.0" rx="6.5" ry="4.5" fill="url(#gw)" opacity="0.02" transform="rotate(30 81.4 230.0)"/><ellipse cx="81.4" cy="230.0" rx="3.6" ry="2.5" fill="url(#gw)" opacity="0.05" transform="rotate(30 81.4 230.0)"/></g><path d="M0 0H256V256H0ZM4 3V254.5H254V3Z" fill="#000" fill-rule="evenodd"/></svg><rect x="1289.5" y="734.5" width="10" height="222.5" fill="url(#cbar)" stroke="#000"/><text class="cts" x="1297" y="714" textLength="37" lengthAdjust="spacingAndGlyphs">Cts</text><text class="num" x="1303" y="740.0" textLength="21.4" lengthAdjust="spacingAndGlyphs">38</text><text class="num" x="1303" y="794.2" textLength="21.4" lengthAdjust="spacingAndGlyphs">28</text><text class="num" x="1303" y="848.4" textLength="21.4" lengthAdjust="spacingAndGlyphs">19</text><text class="num" x="1303" y="902.6" textLength="10.7" lengthAdjust="spacingAndGlyphs">9</text><text class="num" x="1303" y="956.8" textLength="10.7" lengthAdjust="spacingAndGlyphs">0</text><text class="lb" x="1370.5" y="701" textLength="32" lengthAdjust="spacingAndGlyphs">28Si</text><svg x="1365" y="705" width="256" height="256" viewBox="0 0 256 256"><g filter="url(#fsi)"><rect x="-12" y="-12" width="280" height="280" fill="#363636"/><g filter="url(#bl5)"><ellipse cx="60.0" cy="50.0" rx="60.0" ry="45.0" fill="#464646"/><ellipse cx="60.0" cy="140.0" rx="55.0" ry="45.0" fill="#444444"/><ellipse cx="190.0" cy="125.0" rx="45.0" ry="50.0" fill="#3e3e3e"/><ellipse cx="130.0" cy="70.0" rx="30.0" ry="25.0" fill="#454545"/><ellipse cx="150.0" cy="190.0" rx="50.0" ry="30.0" fill="#404040"/><ellipse cx="215.0" cy="30.0" rx="40.0" ry="28.0" fill="#4c4c4c"/></g><ellipse cx="114.4" cy="23.1" rx="16.8" ry="12.6" fill="url(#gw)" opacity="0.31" transform="rotate(5 114.4 23.1)"/><ellipse cx="105.0" cy="31.5" rx="14.4" ry="10.8" fill="url(#gw)" opacity="0.23" transform="rotate(170 105.0 31.5)"/><ellipse cx="123.9" cy="15.7" rx="14.4" ry="10.8" fill="url(#gw)" opacity="0.23" transform="rotate(35 123.9 15.7)"/><ellipse cx="97.6" cy="37.8" rx="12.0" ry="9.0" fill="url(#gw)" opacity="0.22" transform="rotate(15 97.6 37.8)"/><ellipse cx="131.2" cy="11.5" rx="9.6" ry="7.2" fill="url(#gw)" opacity="0.20" transform="rotate(40 131.2 11.5)"/><ellipse cx="197.4" cy="31.5" rx="19.2" ry="14.4" fill="url(#gw)" opacity="0.29" transform="rotate(10 197.4 31.5)"/><ellipse cx="210.0" cy="38.8" rx="12.0" ry="9.0" fill="url(#gw)" opacity="0.32" transform="rotate(175 210.0 38.8)"/><ellipse cx="222.6" cy="39.9" rx="16.8" ry="12.6" fill="url(#gw)" opacity="0.31" transform="rotate(70 222.6 39.9)"/><ellipse cx="237.3" cy="27.3" rx="14.4" ry="10.8" fill="url(#gw)" opacity="0.31" transform="rotate(20 237.3 27.3)"/><ellipse cx="228.9" cy="16.8" rx="14.4" ry="10.8" fill="url(#gw)" opacity="0.23" transform="rotate(130 228.9 16.8)"/><ellipse cx="184.8" cy="16.8" rx="14.4" ry="10.8" fill="url(#gw)" opacity="0.22" transform="rotate(100 184.8 16.8)"/><ellipse cx="198.4" cy="8.4" rx="9.6" ry="7.2" fill="url(#gw)" opacity="0.29" transform="rotate(75 198.4 8.4)"/><ellipse cx="216.3" cy="53.5" rx="9.6" ry="7.2" fill="url(#gw)" opacity="0.25" transform="rotate(55 216.3 53.5)"/><ellipse cx="182.7" cy="39.9" rx="9.6" ry="7.2" fill="url(#gw)" opacity="0.18"/><ellipse cx="210.0" cy="8.4" rx="9.6" ry="7.2" fill="url(#gw)" opacity="0.22" transform="rotate(100 210.0 8.4)"/><ellipse cx="241.5" cy="39.9" rx="9.6" ry="7.2" fill="url(#gw)" opacity="0.22" transform="rotate(160 241.5 39.9)"/><ellipse cx="190.0" cy="23.1" rx="12.0" ry="9.0" fill="url(#gw)" opacity="0.22" transform="rotate(5 190.0 23.1)"/><ellipse cx="218.4" cy="25.2" rx="12.0" ry="9.0" fill="url(#gw)" opacity="0.16" transform="rotate(80 218.4 25.2)"/><ellipse cx="231.0" cy="35.7" rx="12.0" ry="9.0" fill="url(#gw)" opacity="0.25" transform="rotate(110 231.0 35.7)"/><ellipse cx="152.2" cy="19.9" rx="7.2" ry="5.4" fill="url(#gw)" opacity="0.31" transform="rotate(140 152.2 19.9)"/><ellipse cx="142.8" cy="15.7" rx="7.2" ry="5.4" fill="url(#gw)" opacity="0.22" transform="rotate(125 142.8 15.7)"/><ellipse cx="16.8" cy="52.5" rx="9.6" ry="7.2" fill="url(#gw)" opacity="0.23" transform="rotate(50 16.8 52.5)"/><ellipse cx="31.5" cy="55.0" rx="9.6" ry="7.2" fill="url(#gw)" opacity="0.23" transform="rotate(36 31.5 55.0)"/><ellipse cx="54.6" cy="50.4" rx="7.2" ry="5.4" fill="url(#gw)" opacity="0.18" transform="rotate(20 54.6 50.4)"/><ellipse cx="75.6" cy="54.6" rx="14.4" ry="10.8" fill="url(#gw)" opacity="0.23" transform="rotate(60 75.6 54.6)"/><ellipse cx="67.2" cy="52.5" rx="9.6" ry="7.2" fill="url(#gw)" opacity="0.18" transform="rotate(110 67.2 52.5)"/><ellipse cx="94.1" cy="69.3" rx="10.8" ry="8.1" fill="url(#gw)" opacity="0.23" transform="rotate(166 94.1 69.3)"/><ellipse cx="115.5" cy="84.0" rx="12.0" ry="9.0" fill="url(#gw)" opacity="0.29" transform="rotate(10 115.5 84.0)"/><ellipse cx="122.8" cy="92.4" rx="9.6" ry="7.2" fill="url(#gw)" opacity="0.29" transform="rotate(15 122.8 92.4)"/><ellipse cx="127.0" cy="84.0" rx="7.2" ry="5.4" fill="url(#gw)" opacity="0.18" transform="rotate(35 127.0 84.0)"/><ellipse cx="27.3" cy="98.7" rx="14.4" ry="10.8" fill="url(#gw)" opacity="0.23" transform="rotate(160 27.3 98.7)"/><ellipse cx="36.7" cy="103.9" rx="12.0" ry="9.0" fill="url(#gw)" opacity="0.22" transform="rotate(10 36.7 103.9)"/><ellipse cx="11.5" cy="100.8" rx="9.6" ry="7.2" fill="url(#gw)" opacity="0.20" transform="rotate(25 11.5 100.8)"/><ellipse cx="90.3" cy="123.9" rx="12.0" ry="9.0" fill="url(#gw)" opacity="0.36" transform="rotate(100 90.3 123.9)"/><ellipse cx="144.9" cy="109.2" rx="9.6" ry="7.2" fill="url(#gw)" opacity="0.27" transform="rotate(90 144.9 109.2)"/><ellipse cx="143.8" cy="126.0" rx="9.6" ry="7.2" fill="url(#gw)" opacity="0.25" transform="rotate(115 143.8 126.0)"/><ellipse cx="165.9" cy="123.9" rx="7.2" ry="5.4" fill="url(#gw)" opacity="0.22" transform="rotate(100 165.9 123.9)"/><ellipse cx="98.7" cy="136.5" rx="19.2" ry="14.4" fill="url(#gw)" opacity="0.25" transform="rotate(20 98.7 136.5)"/><ellipse cx="90.3" cy="149.1" rx="14.4" ry="10.8" fill="url(#gw)" opacity="0.25" transform="rotate(100 90.3 149.1)"/><ellipse cx="92.4" cy="156.4" rx="9.6" ry="7.2" fill="url(#gw)" opacity="0.22" transform="rotate(95 92.4 156.4)"/><ellipse cx="53.5" cy="115.5" rx="9.6" ry="7.2" fill="url(#gw)" opacity="0.20" transform="rotate(15 53.5 115.5)"/><ellipse cx="46.2" cy="103.9" rx="7.2" ry="5.4" fill="url(#gw)" opacity="0.16" transform="rotate(145 46.2 103.9)"/><ellipse cx="28.3" cy="142.8" rx="14.4" ry="10.8" fill="url(#gw)" opacity="0.25" transform="rotate(105 28.3 142.8)"/><ellipse cx="16.8" cy="151.2" rx="14.4" ry="10.8" fill="url(#gw)" opacity="0.20" transform="rotate(20 16.8 151.2)"/><ellipse cx="11.5" cy="159.6" rx="12.0" ry="9.0" fill="url(#gw)" opacity="0.20" transform="rotate(145 11.5 159.6)"/><ellipse cx="55.6" cy="144.9" rx="9.6" ry="7.2" fill="url(#gw)" opacity="0.20" transform="rotate(145 55.6 144.9)"/><ellipse cx="43.0" cy="163.8" rx="14.4" ry="10.8" fill="url(#gw)" opacity="0.23" transform="rotate(175 43.0 163.8)"/><ellipse cx="67.2" cy="172.2" rx="9.6" ry="7.2" fill="url(#gw)" opacity="0.16" transform="rotate(20 67.2 172.2)"/><ellipse cx="126.0" cy="145.9" rx="9.6" ry="7.2" fill="url(#gw)" opacity="0.22" transform="rotate(165 126.0 145.9)"/><ellipse cx="138.6" cy="149.1" rx="12.0" ry="9.0" fill="url(#gw)" opacity="0.22" transform="rotate(90 138.6 149.1)"/><ellipse cx="147.0" cy="157.5" rx="14.4" ry="10.8" fill="url(#gw)" opacity="0.22" transform="rotate(130 147.0 157.5)"/><ellipse cx="130.2" cy="173.2" rx="12.0" ry="9.0" fill="url(#gw)" opacity="0.22" transform="rotate(155 130.2 173.2)"/><ellipse cx="141.7" cy="183.7" rx="9.6" ry="7.2" fill="url(#gw)" opacity="0.25" transform="rotate(150 141.7 183.7)"/><ellipse cx="159.6" cy="178.5" rx="14.4" ry="10.8" fill="url(#gw)" opacity="0.32" transform="rotate(130 159.6 178.5)"/><ellipse cx="182.7" cy="179.5" rx="24.0" ry="18.0" fill="url(#gw)" opacity="0.25" transform="rotate(15 182.7 179.5)"/><ellipse cx="189.0" cy="197.4" rx="12.0" ry="9.0" fill="url(#gw)" opacity="0.22" transform="rotate(120 189.0 197.4)"/><ellipse cx="195.3" cy="207.9" rx="14.4" ry="10.8" fill="url(#gw)" opacity="0.22" transform="rotate(120 195.3 207.9)"/><ellipse cx="143.8" cy="203.7" rx="9.6" ry="7.2" fill="url(#gw)" opacity="0.31" transform="rotate(145 143.8 203.7)"/><ellipse cx="156.4" cy="200.5" rx="9.6" ry="7.2" fill="url(#gw)" opacity="0.18" transform="rotate(160 156.4 200.5)"/><ellipse cx="192.1" cy="114.4" rx="7.2" ry="5.4" fill="url(#gw)" opacity="0.23" transform="rotate(120 192.1 114.4)"/><ellipse cx="207.9" cy="100.8" rx="8.4" ry="6.3" fill="url(#gw)" opacity="0.16" transform="rotate(90 207.9 100.8)"/><ellipse cx="87.1" cy="31.5" rx="9.6" ry="7.2" fill="url(#gw)" opacity="0.16" transform="rotate(115 87.1 31.5)"/><ellipse cx="252.0" cy="58.8" rx="7.2" ry="5.4" fill="url(#gw)" opacity="0.22" transform="rotate(60 252.0 58.8)"/><ellipse cx="243.6" cy="53.5" rx="7.2" ry="5.4" fill="url(#gw)" opacity="0.18" transform="rotate(65 243.6 53.5)"/><ellipse cx="250.9" cy="153.3" rx="7.2" ry="5.4" fill="url(#gw)" opacity="0.20" transform="rotate(115 250.9 153.3)"/><ellipse cx="128.1" cy="45.1" rx="7.2" ry="5.4" fill="url(#gw)" opacity="0.18" transform="rotate(55 128.1 45.1)"/><ellipse cx="105.0" cy="49.3" rx="7.2" ry="5.4" fill="url(#gw)" opacity="0.18" transform="rotate(65 105.0 49.3)"/><ellipse cx="140.7" cy="81.9" rx="9.6" ry="7.2" fill="url(#gw)" opacity="0.16" transform="rotate(100 140.7 81.9)"/><ellipse cx="84.0" cy="98.7" rx="12.0" ry="9.0" fill="url(#gw)" opacity="0.15" transform="rotate(70 84.0 98.7)"/><ellipse cx="117.6" cy="100.8" rx="14.4" ry="10.8" fill="url(#gw)" opacity="0.14" transform="rotate(140 117.6 100.8)"/><ellipse cx="157.5" cy="126.0" rx="9.6" ry="7.2" fill="url(#gw)" opacity="0.15" transform="rotate(30 157.5 126.0)"/><ellipse cx="134.4" cy="195.3" rx="9.6" ry="7.2" fill="url(#gw)" opacity="0.16" transform="rotate(70 134.4 195.3)"/><ellipse cx="168.0" cy="205.8" rx="9.6" ry="7.2" fill="url(#gw)" opacity="0.16" transform="rotate(80 168.0 205.8)"/><ellipse cx="205.8" cy="168.0" rx="7.2" ry="5.4" fill="url(#gw)" opacity="0.14" transform="rotate(80 205.8 168.0)"/><ellipse cx="222.6" cy="168.0" rx="7.2" ry="5.4" fill="url(#gw)" opacity="0.14" transform="rotate(100 222.6 168.0)"/><ellipse cx="114.5" cy="25.7" rx="26.0" ry="6.0" fill="url(#gw)" opacity="0.60" transform="rotate(-33 114.5 25.7)"/><ellipse cx="211.0" cy="30.0" rx="40.0" ry="28.0" fill="url(#gw)" opacity="0.10"/><ellipse cx="95.0" cy="143.0" rx="14.0" ry="18.0" fill="url(#gw)" opacity="0.30"/><ellipse cx="185.0" cy="182.0" rx="16.0" ry="10.0" fill="url(#gw)" opacity="0.30"/><ellipse cx="114.4" cy="23.1" rx="8.8" ry="6.0" fill="url(#gw)" opacity="0.48" transform="rotate(5 114.4 23.1)"/><ellipse cx="105.0" cy="31.5" rx="7.5" ry="5.1" fill="url(#gw)" opacity="0.36" transform="rotate(170 105.0 31.5)"/><ellipse cx="123.9" cy="15.7" rx="7.5" ry="5.1" fill="url(#gw)" opacity="0.36" transform="rotate(35 123.9 15.7)"/><ellipse cx="97.6" cy="37.8" rx="6.2" ry="4.2" fill="url(#gw)" opacity="0.34" transform="rotate(15 97.6 37.8)"/><ellipse cx="131.2" cy="11.5" rx="5.0" ry="3.4" fill="url(#gw)" opacity="0.31" transform="rotate(40 131.2 11.5)"/><ellipse cx="197.4" cy="31.5" rx="10.0" ry="6.8" fill="url(#gw)" opacity="0.45" transform="rotate(10 197.4 31.5)"/><ellipse cx="210.0" cy="38.8" rx="6.2" ry="4.2" fill="url(#gw)" opacity="0.50" transform="rotate(175 210.0 38.8)"/><ellipse cx="222.6" cy="39.9" rx="8.8" ry="6.0" fill="url(#gw)" opacity="0.48" transform="rotate(70 222.6 39.9)"/><ellipse cx="237.3" cy="27.3" rx="7.5" ry="5.1" fill="url(#gw)" opacity="0.48" transform="rotate(20 237.3 27.3)"/><ellipse cx="228.9" cy="16.8" rx="7.5" ry="5.1" fill="url(#gw)" opacity="0.36" transform="rotate(130 228.9 16.8)"/><ellipse cx="184.8" cy="16.8" rx="7.5" ry="5.1" fill="url(#gw)" opacity="0.34" transform="rotate(100 184.8 16.8)"/><ellipse cx="198.4" cy="8.4" rx="5.0" ry="3.4" fill="url(#gw)" opacity="0.45" transform="rotate(75 198.4 8.4)"/><ellipse cx="216.3" cy="53.5" rx="5.0" ry="3.4" fill="url(#gw)" opacity="0.39" transform="rotate(55 216.3 53.5)"/><ellipse cx="182.7" cy="39.9" rx="5.0" ry="3.4" fill="url(#gw)" opacity="0.28"/><ellipse cx="210.0" cy="8.4" rx="5.0" ry="3.4" fill="url(#gw)" opacity="0.34" transform="rotate(100 210.0 8.4)"/><ellipse cx="241.5" cy="39.9" rx="5.0" ry="3.4" fill="url(#gw)" opacity="0.34" transform="rotate(160 241.5 39.9)"/><ellipse cx="190.0" cy="23.1" rx="6.2" ry="4.2" fill="url(#gw)" opacity="0.34" transform="rotate(5 190.0 23.1)"/><ellipse cx="218.4" cy="25.2" rx="6.2" ry="4.2" fill="url(#gw)" opacity="0.25" transform="rotate(80 218.4 25.2)"/><ellipse cx="231.0" cy="35.7" rx="6.2" ry="4.2" fill="url(#gw)" opacity="0.39" transform="rotate(110 231.0 35.7)"/><ellipse cx="152.2" cy="19.9" rx="3.8" ry="2.5" fill="url(#gw)" opacity="0.48" transform="rotate(140 152.2 19.9)"/><ellipse cx="142.8" cy="15.7" rx="3.8" ry="2.5" fill="url(#gw)" opacity="0.34" transform="rotate(125 142.8 15.7)"/><ellipse cx="16.8" cy="52.5" rx="5.0" ry="3.4" fill="url(#gw)" opacity="0.36" transform="rotate(50 16.8 52.5)"/><ellipse cx="31.5" cy="55.0" rx="5.0" ry="3.4" fill="url(#gw)" opacity="0.36" transform="rotate(36 31.5 55.0)"/><ellipse cx="54.6" cy="50.4" rx="3.8" ry="2.5" fill="url(#gw)" opacity="0.28" transform="rotate(20 54.6 50.4)"/><ellipse cx="75.6" cy="54.6" rx="7.5" ry="5.1" fill="url(#gw)" opacity="0.36" transform="rotate(60 75.6 54.6)"/><ellipse cx="67.2" cy="52.5" rx="5.0" ry="3.4" fill="url(#gw)" opacity="0.28" transform="rotate(110 67.2 52.5)"/><ellipse cx="94.1" cy="69.3" rx="5.6" ry="3.8" fill="url(#gw)" opacity="0.36" transform="rotate(166 94.1 69.3)"/><ellipse cx="115.5" cy="84.0" rx="6.2" ry="4.2" fill="url(#gw)" opacity="0.45" transform="rotate(10 115.5 84.0)"/><ellipse cx="122.8" cy="92.4" rx="5.0" ry="3.4" fill="url(#gw)" opacity="0.45" transform="rotate(15 122.8 92.4)"/><ellipse cx="127.0" cy="84.0" rx="3.8" ry="2.5" fill="url(#gw)" opacity="0.28" transform="rotate(35 127.0 84.0)"/><ellipse cx="27.3" cy="98.7" rx="7.5" ry="5.1" fill="url(#gw)" opacity="0.36" transform="rotate(160 27.3 98.7)"/><ellipse cx="36.7" cy="103.9" rx="6.2" ry="4.2" fill="url(#gw)" opacity="0.34" transform="rotate(10 36.7 103.9)"/><ellipse cx="11.5" cy="100.8" rx="5.0" ry="3.4" fill="url(#gw)" opacity="0.31" transform="rotate(25 11.5 100.8)"/><ellipse cx="90.3" cy="123.9" rx="6.2" ry="4.2" fill="url(#gw)" opacity="0.56" transform="rotate(100 90.3 123.9)"/><ellipse cx="144.9" cy="109.2" rx="5.0" ry="3.4" fill="url(#gw)" opacity="0.42" transform="rotate(90 144.9 109.2)"/><ellipse cx="143.8" cy="126.0" rx="5.0" ry="3.4" fill="url(#gw)" opacity="0.39" transform="rotate(115 143.8 126.0)"/><ellipse cx="165.9" cy="123.9" rx="3.8" ry="2.5" fill="url(#gw)" opacity="0.34" transform="rotate(100 165.9 123.9)"/><ellipse cx="98.7" cy="136.5" rx="10.0" ry="6.8" fill="url(#gw)" opacity="0.39" transform="rotate(20 98.7 136.5)"/><ellipse cx="90.3" cy="149.1" rx="7.5" ry="5.1" fill="url(#gw)" opacity="0.39" transform="rotate(100 90.3 149.1)"/><ellipse cx="92.4" cy="156.4" rx="5.0" ry="3.4" fill="url(#gw)" opacity="0.34" transform="rotate(95 92.4 156.4)"/><ellipse cx="53.5" cy="115.5" rx="5.0" ry="3.4" fill="url(#gw)" opacity="0.31" transform="rotate(15 53.5 115.5)"/><ellipse cx="46.2" cy="103.9" rx="3.8" ry="2.5" fill="url(#gw)" opacity="0.25" transform="rotate(145 46.2 103.9)"/><ellipse cx="28.3" cy="142.8" rx="7.5" ry="5.1" fill="url(#gw)" opacity="0.39" transform="rotate(105 28.3 142.8)"/><ellipse cx="16.8" cy="151.2" rx="7.5" ry="5.1" fill="url(#gw)" opacity="0.31" transform="rotate(20 16.8 151.2)"/><ellipse cx="11.5" cy="159.6" rx="6.2" ry="4.2" fill="url(#gw)" opacity="0.31" transform="rotate(145 11.5 159.6)"/><ellipse cx="55.6" cy="144.9" rx="5.0" ry="3.4" fill="url(#gw)" opacity="0.31" transform="rotate(145 55.6 144.9)"/><ellipse cx="43.0" cy="163.8" rx="7.5" ry="5.1" fill="url(#gw)" opacity="0.36" transform="rotate(175 43.0 163.8)"/><ellipse cx="67.2" cy="172.2" rx="5.0" ry="3.4" fill="url(#gw)" opacity="0.25" transform="rotate(20 67.2 172.2)"/><ellipse cx="126.0" cy="145.9" rx="5.0" ry="3.4" fill="url(#gw)" opacity="0.34" transform="rotate(165 126.0 145.9)"/><ellipse cx="138.6" cy="149.1" rx="6.2" ry="4.2" fill="url(#gw)" opacity="0.34" transform="rotate(90 138.6 149.1)"/><ellipse cx="147.0" cy="157.5" rx="7.5" ry="5.1" fill="url(#gw)" opacity="0.34" transform="rotate(130 147.0 157.5)"/><ellipse cx="130.2" cy="173.2" rx="6.2" ry="4.2" fill="url(#gw)" opacity="0.34" transform="rotate(155 130.2 173.2)"/><ellipse cx="141.7" cy="183.7" rx="5.0" ry="3.4" fill="url(#gw)" opacity="0.39" transform="rotate(150 141.7 183.7)"/><ellipse cx="159.6" cy="178.5" rx="7.5" ry="5.1" fill="url(#gw)" opacity="0.50" transform="rotate(130 159.6 178.5)"/><ellipse cx="182.7" cy="179.5" rx="12.5" ry="8.5" fill="url(#gw)" opacity="0.39" transform="rotate(15 182.7 179.5)"/><ellipse cx="189.0" cy="197.4" rx="6.2" ry="4.2" fill="url(#gw)" opacity="0.34" transform="rotate(120 189.0 197.4)"/><ellipse cx="195.3" cy="207.9" rx="7.5" ry="5.1" fill="url(#gw)" opacity="0.34" transform="rotate(120 195.3 207.9)"/><ellipse cx="143.8" cy="203.7" rx="5.0" ry="3.4" fill="url(#gw)" opacity="0.48" transform="rotate(145 143.8 203.7)"/><ellipse cx="156.4" cy="200.5" rx="5.0" ry="3.4" fill="url(#gw)" opacity="0.28" transform="rotate(160 156.4 200.5)"/><ellipse cx="192.1" cy="114.4" rx="3.8" ry="2.5" fill="url(#gw)" opacity="0.36" transform="rotate(120 192.1 114.4)"/><ellipse cx="207.9" cy="100.8" rx="4.4" ry="3.0" fill="url(#gw)" opacity="0.25" transform="rotate(90 207.9 100.8)"/><ellipse cx="87.1" cy="31.5" rx="5.0" ry="3.4" fill="url(#gw)" opacity="0.25" transform="rotate(115 87.1 31.5)"/><ellipse cx="252.0" cy="58.8" rx="3.8" ry="2.5" fill="url(#gw)" opacity="0.34" transform="rotate(60 252.0 58.8)"/><ellipse cx="243.6" cy="53.5" rx="3.8" ry="2.5" fill="url(#gw)" opacity="0.28" transform="rotate(65 243.6 53.5)"/><ellipse cx="250.9" cy="153.3" rx="3.8" ry="2.5" fill="url(#gw)" opacity="0.31" transform="rotate(115 250.9 153.3)"/><ellipse cx="128.1" cy="45.1" rx="3.8" ry="2.5" fill="url(#gw)" opacity="0.28" transform="rotate(55 128.1 45.1)"/><ellipse cx="105.0" cy="49.3" rx="3.8" ry="2.5" fill="url(#gw)" opacity="0.28" transform="rotate(65 105.0 49.3)"/><ellipse cx="140.7" cy="81.9" rx="5.0" ry="3.4" fill="url(#gw)" opacity="0.25" transform="rotate(100 140.7 81.9)"/><ellipse cx="84.0" cy="98.7" rx="6.2" ry="4.2" fill="url(#gw)" opacity="0.24" transform="rotate(70 84.0 98.7)"/><ellipse cx="117.6" cy="100.8" rx="7.5" ry="5.1" fill="url(#gw)" opacity="0.22" transform="rotate(140 117.6 100.8)"/><ellipse cx="157.5" cy="126.0" rx="5.0" ry="3.4" fill="url(#gw)" opacity="0.24" transform="rotate(30 157.5 126.0)"/><ellipse cx="134.4" cy="195.3" rx="5.0" ry="3.4" fill="url(#gw)" opacity="0.25" transform="rotate(70 134.4 195.3)"/><ellipse cx="168.0" cy="205.8" rx="5.0" ry="3.4" fill="url(#gw)" opacity="0.25" transform="rotate(80 168.0 205.8)"/><ellipse cx="205.8" cy="168.0" rx="3.8" ry="2.5" fill="url(#gw)" opacity="0.22" transform="rotate(80 205.8 168.0)"/><ellipse cx="222.6" cy="168.0" rx="3.8" ry="2.5" fill="url(#gw)" opacity="0.22" transform="rotate(100 222.6 168.0)"/><g filter="url(#bl1_5)"><polygon points="92.4,107.1 138.6,103.9 139.6,117.6 134.4,130.2 117.6,128.1 98.7,119.7" fill="#050505"/><ellipse cx="107.1" cy="14.7" rx="8.0" ry="6.0" fill="#050505"/><ellipse cx="245.7" cy="176.4" rx="12.0" ry="16.0" fill="#030303"/><ellipse cx="105.0" cy="164.8" rx="8.0" ry="4.0" fill="#050505"/><ellipse cx="109.2" cy="150.1" rx="3.0" ry="3.0" fill="#0d0d0d"/><ellipse cx="204.7" cy="197.4" rx="8.0" ry="4.0" fill="#050505"/><ellipse cx="131.2" cy="91.3" rx="3.0" ry="3.0" fill="#050505"/><ellipse cx="8.4" cy="69.3" rx="5.0" ry="5.0" fill="#080808"/><ellipse cx="23.1" cy="39.9" rx="6.0" ry="3.0" fill="#121212"/><ellipse cx="18.9" cy="13.6" rx="3.0" ry="3.0" fill="#121212"/><ellipse cx="6.3" cy="163.8" rx="4.0" ry="4.0" fill="#0d0d0d"/><ellipse cx="241.5" cy="84.0" rx="8.0" ry="8.0" fill="#171717"/><ellipse cx="164.8" cy="98.7" rx="4.0" ry="4.0" fill="#121212"/><ellipse cx="148.0" cy="56.7" rx="3.0" ry="3.0" fill="#121212"/><ellipse cx="164.8" cy="79.8" rx="3.0" ry="3.0" fill="#171717"/><ellipse cx="119.7" cy="201.6" rx="2.0" ry="4.0" fill="#0d0d0d"/><ellipse cx="42.0" cy="71.4" rx="3.0" ry="3.0" fill="#171717"/><ellipse cx="97.6" cy="147.0" rx="3.0" ry="3.0" fill="#0d0d0d"/><ellipse cx="184.8" cy="56.7" rx="3.0" ry="3.0" fill="#171717"/></g></g><path d="M0 0H256V256H0ZM4 3V254.5H254V3Z" fill="#000" fill-rule="evenodd"/></svg><rect x="1625.5" y="734.5" width="10" height="222.5" fill="url(#cbar)" stroke="#000"/><text class="cts" x="1633" y="714" textLength="37" lengthAdjust="spacingAndGlyphs">Cts</text><text class="num" x="1639" y="740.0" textLength="32.1" lengthAdjust="spacingAndGlyphs">880</text><text class="num" x="1639" y="794.2" textLength="32.1" lengthAdjust="spacingAndGlyphs">660</text><text class="num" x="1639" y="848.4" textLength="32.1" lengthAdjust="spacingAndGlyphs">440</text><text class="num" x="1639" y="902.6" textLength="32.1" lengthAdjust="spacingAndGlyphs">220</text><text class="num" x="1639" y="956.8" textLength="10.7" lengthAdjust="spacingAndGlyphs">0</text></svg></g><rect x="1742" y="131" width="15" height="793" fill="#a3a3a3"/><path d="M1742 131H1757L1755 133H1744V922L1742 924Z" fill="#6e6e6e"/><path d="M1757 924H1742L1744 922H1755V133L1757 131Z" fill="#e9e9e9"/><g shape-rendering="geometricPrecision"><path d="M1749.5 133L1755 143.5H1744Z" fill="#c3c3c3"/><path d="M1749.5 133.5L1744.5 143" stroke="#e9e9e9" fill="none" stroke-width="1.4"/><path d="M1749.5 133.5L1754.5 143H1744.5" stroke="#6e6e6e" fill="none" stroke-width="1.4"/><path d="M1749.5 922L1755 911.5H1744Z" fill="#c3c3c3"/><path d="M1754.5 912H1744.5L1749.5 921.5" stroke="#e9e9e9" fill="none" stroke-width="1.4"/><path d="M1749.5 921.5L1754.5 912" stroke="#6e6e6e" fill="none" stroke-width="1.4"/></g><rect x="1744" y="144" width="11" height="548" fill="#c3c3c3"/><path d="M1744 144H1755L1753 146H1746V690L1744 692Z" fill="#e9e9e9"/><path d="M1755 692H1744L1746 690H1753V146L1755 144Z" fill="#6e6e6e"/><g shape-rendering="geometricPrecision"><path d="M272 654V641a9 9 0 0 1 9 -9H689a9 9 0 0 1 9 9V654Z" fill="#f6f6f6" stroke="#c9c9c9"/></g><rect x="272" y="654" width="426" height="384" fill="#c3c3c3"/><rect x="272" y="653" width="426" height="1" fill="#dedede"/><g shape-rendering="geometricPrecision"><circle cx="286" cy="643" r="5.5" fill="#d4d4d4" stroke="#c4c4c4"/><circle cx="306" cy="643" r="5.5" fill="#d4d4d4" stroke="#c4c4c4"/><circle cx="326" cy="643" r="5.5" fill="#d4d4d4" stroke="#c4c4c4"/></g><g shape-rendering="geometricPrecision" filter="url(#noop)"><rect x="407.5" y="637.5" width="12" height="13" fill="#fafafa" stroke="#cfcfcf"/><text x="413.5" y="649" text-anchor="middle" font-family="Liberation Serif,serif" font-size="14" fill="#555">X</text></g><g filter="url(#noop)"><text class="tt" x="428" y="647.5" textLength="135" lengthAdjust="spacingAndGlyphs">LIMAGE: RGB Images</text></g><rect x="272" y="654" width="426" height="32" fill="#c3c3c3"/><path d="M272 654H698L696 656H274V684L272 686Z" fill="#e9e9e9"/><path d="M698 686H272L274 684H696V656L698 654Z" fill="#6e6e6e"/><rect x="274" y="683" width="422" height="1" fill="#6e6e6e"/><rect x="272" y="686" width="426" height="1" fill="#dadada"/><rect x="287" y="702" width="58" height="183" fill="#c3c3c3"/><path d="M287 702H345L343 704H289V883L287 885Z" fill="#6e6e6e"/><path d="M345 885H287L289 883H343V704L345 702Z" fill="#e9e9e9"/><rect x="291" y="803" width="49" height="13" fill="#e6e6e6"/><rect x="353" y="727" width="63" height="21" fill="#c3c3c3"/><path d="M353 727H416L414 729H355V746L353 748Z" fill="#e9e9e9"/><path d="M416 748H353L355 746H414V729L416 727Z" fill="#6e6e6e"/><rect x="353" y="755" width="63" height="21" fill="#c3c3c3"/><path d="M353 755H416L414 757H355V774L353 776Z" fill="#e9e9e9"/><path d="M416 776H353L355 774H414V757L416 755Z" fill="#6e6e6e"/><rect x="353" y="783" width="63" height="21" fill="#c3c3c3"/><path d="M353 783H416L414 785H355V802L353 804Z" fill="#e9e9e9"/><path d="M416 804H353L355 802H414V785L416 783Z" fill="#6e6e6e"/><rect x="360" y="820" width="10" height="10" fill="#c3c3c3"/><path d="M360 820H370L368 822H362V828L360 830Z" fill="#e9e9e9"/><path d="M370 830H360L362 828H368V822L370 820Z" fill="#6e6e6e"/><rect x="360" y="854" width="10" height="10" fill="#c3c3c3"/><path d="M360 854H370L368 856H362V862L360 864Z" fill="#e9e9e9"/><path d="M370 864H360L362 862H368V856L370 854Z" fill="#6e6e6e"/><rect x="371" y="894" width="51" height="33" fill="#c3c3c3"/><path d="M371 894H422L421 895H372V926L371 927Z" fill="#828282"/><path d="M422 927H371L372 926H421V895L422 894Z" fill="#e9e9e9"/><path d="M374 897H419L417 899H376V922L374 924Z" fill="#6e6e6e"/><path d="M419 924H374L376 922H417V899L419 897Z" fill="#e9e9e9"/><path d="M380.5 905v12" stroke="#222" stroke-dasharray="1 1" fill="none"/><path d="M379 904.5h3M379 917.5h3" stroke="#444" stroke-dasharray="1 1" fill="none"/><rect x="286" y="938" width="137" height="21" fill="#c3c3c3"/><path d="M286 938H423L421 940H288V957L286 959Z" fill="#e9e9e9"/><path d="M423 959H286L288 957H421V940L423 938Z" fill="#6e6e6e"/><rect x="438.5" y="703.5" width="76" height="45" fill="none" stroke="#e9e9e9"/><rect x="437.5" y="702.5" width="76" height="45" fill="none" stroke="#828282"/><rect x="519.5" y="703.5" width="76" height="45" fill="none" stroke="#e9e9e9"/><rect x="518.5" y="702.5" width="76" height="45" fill="none" stroke="#828282"/><rect x="600.5" y="703.5" width="76" height="45" fill="none" stroke="#e9e9e9"/><rect x="599.5" y="702.5" width="76" height="45" fill="none" stroke="#828282"/><g filter="url(#noop)"><text class="m" x="284" y="674" textLength="30" lengthAdjust="spacingAndGlyphs">Stuff</text><text class="m" x="330" y="674" textLength="24" lengthAdjust="spacingAndGlyphs">Save</text><text class="m" x="292" y="718" textLength="18" lengthAdjust="spacingAndGlyphs">16O</text><text class="m" x="292" y="734" textLength="24" lengthAdjust="spacingAndGlyphs">12C2</text><text class="m" x="292" y="750" textLength="42" lengthAdjust="spacingAndGlyphs">12C 13C</text><text class="m" x="292" y="766" textLength="42" lengthAdjust="spacingAndGlyphs">12C 14N</text><text class="m" x="292" y="782" textLength="42" lengthAdjust="spacingAndGlyphs">12C 15N</text><text class="m" x="292" y="798" textLength="24" lengthAdjust="spacingAndGlyphs">28Si</text><text class="m" x="292" y="814" textLength="48" lengthAdjust="spacingAndGlyphs" style="fill:#b5b5b5">27Al 16O</text><text class="m" x="292" y="830" textLength="12" lengthAdjust="spacingAndGlyphs">SE</text><text class="m" x="292" y="846" textLength="42" lengthAdjust="spacingAndGlyphs">13C/12C</text><text class="m" x="292" y="862" textLength="42" lengthAdjust="spacingAndGlyphs">15N 14N</text><text class="m" x="292" y="878" textLength="30" lengthAdjust="spacingAndGlyphs">Blank</text><text class="m" x="368" y="742" textLength="30" lengthAdjust="spacingAndGlyphs">-&gt;Red</text><text class="m" x="362" y="770" textLength="42" lengthAdjust="spacingAndGlyphs">-&gt;Green</text><text class="m" x="365" y="798" textLength="36" lengthAdjust="spacingAndGlyphs">-&gt;Blue</text><text class="m" x="374" y="830" textLength="18" lengthAdjust="spacingAndGlyphs">Log</text><text class="m" x="374" y="863" textLength="36" lengthAdjust="spacingAndGlyphs">Smooth</text><text class="m" x="288" y="915" textLength="72" lengthAdjust="spacingAndGlyphs">Zoom Factor:</text><text class="m" x="380" y="915" textLength="30" lengthAdjust="spacingAndGlyphs">1.000</text><text class="m" x="341" y="953" textLength="24" lengthAdjust="spacingAndGlyphs">QUIT</text><text class="m" x="466" y="720" textLength="18" lengthAdjust="spacingAndGlyphs">RED</text><text class="m" x="463" y="740" textLength="24" lengthAdjust="spacingAndGlyphs">28Si</text><text class="m" x="541" y="720" textLength="30" lengthAdjust="spacingAndGlyphs">GREEN</text><text class="m" x="535" y="740" textLength="42" lengthAdjust="spacingAndGlyphs">12C 15N</text><text class="m" x="625" y="720" textLength="24" lengthAdjust="spacingAndGlyphs">BLUE</text><text class="m" x="613" y="740" textLength="48" lengthAdjust="spacingAndGlyphs">27Al 16O</text></g><g shape-rendering="geometricPrecision"><rect x="438" y="759" width="262" height="278" fill="#000"/><svg x="443" y="782" width="250" height="251" viewBox="0 0 250 251"><g filter="url(#rgbn)"><rect width="250" height="251" fill="#54061e"/><g filter="url(#bl5)"><ellipse cx="215" cy="110" rx="30" ry="28" fill="#5c0726" opacity="0.9"/><ellipse cx="185" cy="150" rx="22" ry="18" fill="#5a0624" opacity="0.9"/><ellipse cx="60" cy="190" rx="45" ry="28" fill="#560824" opacity="0.8"/><ellipse cx="35" cy="50" rx="35" ry="28" fill="#58104a" opacity="0.6"/><ellipse cx="120" cy="35" rx="40" ry="22" fill="#7a0c30" opacity="0.6"/><ellipse cx="210" cy="35" rx="35" ry="26" fill="#9a1038" opacity="0.7"/><ellipse cx="110" cy="150" rx="30" ry="20" fill="#7a0c2c" opacity="0.6"/><ellipse cx="30" cy="120" rx="25" ry="30" fill="#5a0c3c" opacity="0.5"/><path d="M0 250L15 222L95 180L132 150L140 160L110 200L60 250Z" fill="#38187a" opacity=".5"/><ellipse cx="150" cy="62" rx="22" ry="10" fill="#3a20a0" opacity="0.3"/><ellipse cx="60" cy="100" rx="22" ry="12" fill="#3a20a0" opacity="0.3"/><ellipse cx="40" cy="28" rx="18" ry="12" fill="#3a20a0" opacity="0.35"/><ellipse cx="205" cy="72" rx="18" ry="10" fill="#3a20a0" opacity="0.25"/><ellipse cx="170" cy="205" rx="22" ry="12" fill="#3a20a0" opacity="0.25"/><ellipse cx="25" cy="140" rx="12" ry="9" fill="#3a20a0" opacity="0.3"/><ellipse cx="100" cy="80" rx="14" ry="8" fill="#3a20a0" opacity="0.25"/></g><ellipse cx="111.8" cy="22.6" rx="18.2" ry="13.3" fill="url(#gr)" opacity="0.36" transform="rotate(5 111.8 22.6)"/><ellipse cx="111.8" cy="22.6" rx="9.8" ry="6.6" fill="url(#gr)" opacity="0.68" transform="rotate(5 111.8 22.6)"/><ellipse cx="102.5" cy="30.8" rx="15.6" ry="11.4" fill="url(#gr)" opacity="0.27" transform="rotate(170 102.5 30.8)"/><ellipse cx="102.5" cy="30.8" rx="8.4" ry="5.7" fill="url(#gr)" opacity="0.52" transform="rotate(170 102.5 30.8)"/><ellipse cx="121.0" cy="15.4" rx="15.6" ry="11.4" fill="url(#gr)" opacity="0.27" transform="rotate(35 121.0 15.4)"/><ellipse cx="121.0" cy="15.4" rx="8.4" ry="5.7" fill="url(#gr)" opacity="0.52" transform="rotate(35 121.0 15.4)"/><ellipse cx="95.4" cy="36.9" rx="13.0" ry="9.5" fill="url(#gr)" opacity="0.25" transform="rotate(15 95.4 36.9)"/><ellipse cx="95.4" cy="36.9" rx="7.0" ry="4.8" fill="url(#gr)" opacity="0.48" transform="rotate(15 95.4 36.9)"/><ellipse cx="128.2" cy="11.3" rx="10.4" ry="7.6" fill="url(#gr)" opacity="0.23" transform="rotate(40 128.2 11.3)"/><ellipse cx="128.2" cy="11.3" rx="5.6" ry="3.8" fill="url(#gr)" opacity="0.44" transform="rotate(40 128.2 11.3)"/><ellipse cx="192.8" cy="30.8" rx="20.8" ry="15.2" fill="url(#gr)" opacity="0.34" transform="rotate(10 192.8 30.8)"/><ellipse cx="192.8" cy="30.8" rx="11.2" ry="7.6" fill="url(#gr)" opacity="0.64" transform="rotate(10 192.8 30.8)"/><ellipse cx="205.1" cy="37.9" rx="13.0" ry="9.5" fill="url(#gr)" opacity="0.38" transform="rotate(175 205.1 37.9)"/><ellipse cx="205.1" cy="37.9" rx="7.0" ry="4.8" fill="url(#gr)" opacity="0.72" transform="rotate(175 205.1 37.9)"/><ellipse cx="217.4" cy="39.0" rx="18.2" ry="13.3" fill="url(#gr)" opacity="0.36" transform="rotate(70 217.4 39.0)"/><ellipse cx="217.4" cy="39.0" rx="9.8" ry="6.6" fill="url(#gr)" opacity="0.68" transform="rotate(70 217.4 39.0)"/><ellipse cx="231.7" cy="26.7" rx="15.6" ry="11.4" fill="url(#gr)" opacity="0.36" transform="rotate(20 231.7 26.7)"/><ellipse cx="231.7" cy="26.7" rx="8.4" ry="5.7" fill="url(#gr)" opacity="0.68" transform="rotate(20 231.7 26.7)"/><ellipse cx="223.5" cy="16.4" rx="15.6" ry="11.4" fill="url(#gr)" opacity="0.27" transform="rotate(130 223.5 16.4)"/><ellipse cx="223.5" cy="16.4" rx="8.4" ry="5.7" fill="url(#gr)" opacity="0.52" transform="rotate(130 223.5 16.4)"/><ellipse cx="180.5" cy="16.4" rx="15.6" ry="11.4" fill="url(#gr)" opacity="0.25" transform="rotate(100 180.5 16.4)"/><ellipse cx="180.5" cy="16.4" rx="8.4" ry="5.7" fill="url(#gr)" opacity="0.48" transform="rotate(100 180.5 16.4)"/><ellipse cx="193.8" cy="8.2" rx="10.4" ry="7.6" fill="url(#gr)" opacity="0.34" transform="rotate(75 193.8 8.2)"/><ellipse cx="193.8" cy="8.2" rx="5.6" ry="3.8" fill="url(#gr)" opacity="0.64" transform="rotate(75 193.8 8.2)"/><ellipse cx="211.2" cy="52.3" rx="10.4" ry="7.6" fill="url(#gr)" opacity="0.29" transform="rotate(55 211.2 52.3)"/><ellipse cx="211.2" cy="52.3" rx="5.6" ry="3.8" fill="url(#gr)" opacity="0.56" transform="rotate(55 211.2 52.3)"/><ellipse cx="178.4" cy="39.0" rx="10.4" ry="7.6" fill="url(#gr)" opacity="0.21"/><ellipse cx="178.4" cy="39.0" rx="5.6" ry="3.8" fill="url(#gr)" opacity="0.40"/><ellipse cx="205.1" cy="8.2" rx="10.4" ry="7.6" fill="url(#gr)" opacity="0.25" transform="rotate(100 205.1 8.2)"/><ellipse cx="205.1" cy="8.2" rx="5.6" ry="3.8" fill="url(#gr)" opacity="0.48" transform="rotate(100 205.1 8.2)"/><ellipse cx="235.8" cy="39.0" rx="10.4" ry="7.6" fill="url(#gr)" opacity="0.25" transform="rotate(160 235.8 39.0)"/><ellipse cx="235.8" cy="39.0" rx="5.6" ry="3.8" fill="url(#gr)" opacity="0.48" transform="rotate(160 235.8 39.0)"/><ellipse cx="185.6" cy="22.6" rx="13.0" ry="9.5" fill="url(#gr)" opacity="0.25" transform="rotate(5 185.6 22.6)"/><ellipse cx="185.6" cy="22.6" rx="7.0" ry="4.8" fill="url(#gr)" opacity="0.48" transform="rotate(5 185.6 22.6)"/><ellipse cx="213.3" cy="24.6" rx="13.0" ry="9.5" fill="url(#gr)" opacity="0.19" transform="rotate(80 213.3 24.6)"/><ellipse cx="213.3" cy="24.6" rx="7.0" ry="4.8" fill="url(#gr)" opacity="0.36" transform="rotate(80 213.3 24.6)"/><ellipse cx="225.6" cy="34.9" rx="13.0" ry="9.5" fill="url(#gr)" opacity="0.29" transform="rotate(110 225.6 34.9)"/><ellipse cx="225.6" cy="34.9" rx="7.0" ry="4.8" fill="url(#gr)" opacity="0.56" transform="rotate(110 225.6 34.9)"/><ellipse cx="148.7" cy="19.5" rx="7.8" ry="5.7" fill="url(#gr)" opacity="0.36" transform="rotate(140 148.7 19.5)"/><ellipse cx="148.7" cy="19.5" rx="4.2" ry="2.8" fill="url(#gr)" opacity="0.68" transform="rotate(140 148.7 19.5)"/><ellipse cx="139.5" cy="15.4" rx="7.8" ry="5.7" fill="url(#gr)" opacity="0.25" transform="rotate(125 139.5 15.4)"/><ellipse cx="139.5" cy="15.4" rx="4.2" ry="2.8" fill="url(#gr)" opacity="0.48" transform="rotate(125 139.5 15.4)"/><ellipse cx="16.4" cy="51.3" rx="10.4" ry="7.6" fill="url(#gr)" opacity="0.27" transform="rotate(50 16.4 51.3)"/><ellipse cx="16.4" cy="51.3" rx="5.6" ry="3.8" fill="url(#gr)" opacity="0.52" transform="rotate(50 16.4 51.3)"/><ellipse cx="30.8" cy="53.7" rx="10.4" ry="7.6" fill="url(#gr)" opacity="0.27" transform="rotate(36 30.8 53.7)"/><ellipse cx="30.8" cy="53.7" rx="5.6" ry="3.8" fill="url(#gr)" opacity="0.52" transform="rotate(36 30.8 53.7)"/><ellipse cx="53.3" cy="49.2" rx="7.8" ry="5.7" fill="url(#gr)" opacity="0.21" transform="rotate(20 53.3 49.2)"/><ellipse cx="53.3" cy="49.2" rx="4.2" ry="2.8" fill="url(#gr)" opacity="0.40" transform="rotate(20 53.3 49.2)"/><ellipse cx="73.8" cy="53.3" rx="15.6" ry="11.4" fill="url(#gr)" opacity="0.27" transform="rotate(60 73.8 53.3)"/><ellipse cx="73.8" cy="53.3" rx="8.4" ry="5.7" fill="url(#gr)" opacity="0.52" transform="rotate(60 73.8 53.3)"/><ellipse cx="65.6" cy="51.3" rx="10.4" ry="7.6" fill="url(#gr)" opacity="0.21" transform="rotate(110 65.6 51.3)"/><ellipse cx="65.6" cy="51.3" rx="5.6" ry="3.8" fill="url(#gr)" opacity="0.40" transform="rotate(110 65.6 51.3)"/><ellipse cx="91.9" cy="67.7" rx="11.7" ry="8.5" fill="url(#gr)" opacity="0.27" transform="rotate(166 91.9 67.7)"/><ellipse cx="91.9" cy="67.7" rx="6.3" ry="4.3" fill="url(#gr)" opacity="0.52" transform="rotate(166 91.9 67.7)"/><ellipse cx="112.8" cy="82.0" rx="13.0" ry="9.5" fill="url(#gr)" opacity="0.34" transform="rotate(10 112.8 82.0)"/><ellipse cx="112.8" cy="82.0" rx="7.0" ry="4.8" fill="url(#gr)" opacity="0.64" transform="rotate(10 112.8 82.0)"/><ellipse cx="120.0" cy="90.2" rx="10.4" ry="7.6" fill="url(#gr)" opacity="0.34" transform="rotate(15 120.0 90.2)"/><ellipse cx="120.0" cy="90.2" rx="5.6" ry="3.8" fill="url(#gr)" opacity="0.64" transform="rotate(15 120.0 90.2)"/><ellipse cx="124.1" cy="82.0" rx="7.8" ry="5.7" fill="url(#gr)" opacity="0.21" transform="rotate(35 124.1 82.0)"/><ellipse cx="124.1" cy="82.0" rx="4.2" ry="2.8" fill="url(#gr)" opacity="0.40" transform="rotate(35 124.1 82.0)"/><ellipse cx="26.7" cy="96.4" rx="15.6" ry="11.4" fill="url(#gr)" opacity="0.27" transform="rotate(160 26.7 96.4)"/><ellipse cx="26.7" cy="96.4" rx="8.4" ry="5.7" fill="url(#gr)" opacity="0.52" transform="rotate(160 26.7 96.4)"/><ellipse cx="35.9" cy="101.5" rx="13.0" ry="9.5" fill="url(#gr)" opacity="0.25" transform="rotate(10 35.9 101.5)"/><ellipse cx="35.9" cy="101.5" rx="7.0" ry="4.8" fill="url(#gr)" opacity="0.48" transform="rotate(10 35.9 101.5)"/><ellipse cx="11.3" cy="98.4" rx="10.4" ry="7.6" fill="url(#gr)" opacity="0.23" transform="rotate(25 11.3 98.4)"/><ellipse cx="11.3" cy="98.4" rx="5.6" ry="3.8" fill="url(#gr)" opacity="0.44" transform="rotate(25 11.3 98.4)"/><ellipse cx="88.2" cy="121.0" rx="13.0" ry="9.5" fill="url(#gr)" opacity="0.42" transform="rotate(100 88.2 121.0)"/><ellipse cx="88.2" cy="121.0" rx="7.0" ry="4.8" fill="url(#gr)" opacity="0.80" transform="rotate(100 88.2 121.0)"/><ellipse cx="141.5" cy="106.6" rx="10.4" ry="7.6" fill="url(#gr)" opacity="0.32" transform="rotate(90 141.5 106.6)"/><ellipse cx="141.5" cy="106.6" rx="5.6" ry="3.8" fill="url(#gr)" opacity="0.60" transform="rotate(90 141.5 106.6)"/><ellipse cx="140.5" cy="123.0" rx="10.4" ry="7.6" fill="url(#gr)" opacity="0.29" transform="rotate(115 140.5 123.0)"/><ellipse cx="140.5" cy="123.0" rx="5.6" ry="3.8" fill="url(#gr)" opacity="0.56" transform="rotate(115 140.5 123.0)"/><ellipse cx="162.0" cy="121.0" rx="7.8" ry="5.7" fill="url(#gr)" opacity="0.25" transform="rotate(100 162.0 121.0)"/><ellipse cx="162.0" cy="121.0" rx="4.2" ry="2.8" fill="url(#gr)" opacity="0.48" transform="rotate(100 162.0 121.0)"/><ellipse cx="96.4" cy="133.3" rx="20.8" ry="15.2" fill="url(#gr)" opacity="0.29" transform="rotate(20 96.4 133.3)"/><ellipse cx="96.4" cy="133.3" rx="11.2" ry="7.6" fill="url(#gr)" opacity="0.56" transform="rotate(20 96.4 133.3)"/><ellipse cx="88.2" cy="145.6" rx="15.6" ry="11.4" fill="url(#gr)" opacity="0.29" transform="rotate(100 88.2 145.6)"/><ellipse cx="88.2" cy="145.6" rx="8.4" ry="5.7" fill="url(#gr)" opacity="0.56" transform="rotate(100 88.2 145.6)"/><ellipse cx="90.2" cy="152.8" rx="10.4" ry="7.6" fill="url(#gr)" opacity="0.25" transform="rotate(95 90.2 152.8)"/><ellipse cx="90.2" cy="152.8" rx="5.6" ry="3.8" fill="url(#gr)" opacity="0.48" transform="rotate(95 90.2 152.8)"/><ellipse cx="52.3" cy="112.8" rx="10.4" ry="7.6" fill="url(#gr)" opacity="0.23" transform="rotate(15 52.3 112.8)"/><ellipse cx="52.3" cy="112.8" rx="5.6" ry="3.8" fill="url(#gr)" opacity="0.44" transform="rotate(15 52.3 112.8)"/><ellipse cx="45.1" cy="101.5" rx="7.8" ry="5.7" fill="url(#gr)" opacity="0.19" transform="rotate(145 45.1 101.5)"/><ellipse cx="45.1" cy="101.5" rx="4.2" ry="2.8" fill="url(#gr)" opacity="0.36" transform="rotate(145 45.1 101.5)"/><ellipse cx="27.7" cy="139.5" rx="15.6" ry="11.4" fill="url(#gr)" opacity="0.29" transform="rotate(105 27.7 139.5)"/><ellipse cx="27.7" cy="139.5" rx="8.4" ry="5.7" fill="url(#gr)" opacity="0.56" transform="rotate(105 27.7 139.5)"/><ellipse cx="16.4" cy="147.7" rx="15.6" ry="11.4" fill="url(#gr)" opacity="0.23" transform="rotate(20 16.4 147.7)"/><ellipse cx="16.4" cy="147.7" rx="8.4" ry="5.7" fill="url(#gr)" opacity="0.44" transform="rotate(20 16.4 147.7)"/><ellipse cx="11.3" cy="155.9" rx="13.0" ry="9.5" fill="url(#gr)" opacity="0.23" transform="rotate(145 11.3 155.9)"/><ellipse cx="11.3" cy="155.9" rx="7.0" ry="4.8" fill="url(#gr)" opacity="0.44" transform="rotate(145 11.3 155.9)"/><ellipse cx="54.3" cy="141.5" rx="10.4" ry="7.6" fill="url(#gr)" opacity="0.23" transform="rotate(145 54.3 141.5)"/><ellipse cx="54.3" cy="141.5" rx="5.6" ry="3.8" fill="url(#gr)" opacity="0.44" transform="rotate(145 54.3 141.5)"/><ellipse cx="42.0" cy="160.0" rx="15.6" ry="11.4" fill="url(#gr)" opacity="0.27" transform="rotate(175 42.0 160.0)"/><ellipse cx="42.0" cy="160.0" rx="8.4" ry="5.7" fill="url(#gr)" opacity="0.52" transform="rotate(175 42.0 160.0)"/><ellipse cx="65.6" cy="168.2" rx="10.4" ry="7.6" fill="url(#gr)" opacity="0.19" transform="rotate(20 65.6 168.2)"/><ellipse cx="65.6" cy="168.2" rx="5.6" ry="3.8" fill="url(#gr)" opacity="0.36" transform="rotate(20 65.6 168.2)"/><ellipse cx="123.0" cy="142.5" rx="10.4" ry="7.6" fill="url(#gr)" opacity="0.25" transform="rotate(165 123.0 142.5)"/><ellipse cx="123.0" cy="142.5" rx="5.6" ry="3.8" fill="url(#gr)" opacity="0.48" transform="rotate(165 123.0 142.5)"/><ellipse cx="135.3" cy="145.6" rx="13.0" ry="9.5" fill="url(#gr)" opacity="0.25" transform="rotate(90 135.3 145.6)"/><ellipse cx="135.3" cy="145.6" rx="7.0" ry="4.8" fill="url(#gr)" opacity="0.48" transform="rotate(90 135.3 145.6)"/><ellipse cx="143.6" cy="153.8" rx="15.6" ry="11.4" fill="url(#gr)" opacity="0.25" transform="rotate(130 143.6 153.8)"/><ellipse cx="143.6" cy="153.8" rx="8.4" ry="5.7" fill="url(#gr)" opacity="0.48" transform="rotate(130 143.6 153.8)"/><ellipse cx="127.1" cy="169.2" rx="13.0" ry="9.5" fill="url(#gr)" opacity="0.25" transform="rotate(155 127.1 169.2)"/><ellipse cx="127.1" cy="169.2" rx="7.0" ry="4.8" fill="url(#gr)" opacity="0.48" transform="rotate(155 127.1 169.2)"/><ellipse cx="138.4" cy="179.4" rx="10.4" ry="7.6" fill="url(#gr)" opacity="0.29" transform="rotate(150 138.4 179.4)"/><ellipse cx="138.4" cy="179.4" rx="5.6" ry="3.8" fill="url(#gr)" opacity="0.56" transform="rotate(150 138.4 179.4)"/><ellipse cx="155.9" cy="174.3" rx="15.6" ry="11.4" fill="url(#gr)" opacity="0.38" transform="rotate(130 155.9 174.3)"/><ellipse cx="155.9" cy="174.3" rx="8.4" ry="5.7" fill="url(#gr)" opacity="0.72" transform="rotate(130 155.9 174.3)"/><ellipse cx="178.4" cy="175.3" rx="26.0" ry="19.0" fill="url(#gr)" opacity="0.29" transform="rotate(15 178.4 175.3)"/><ellipse cx="178.4" cy="175.3" rx="14.0" ry="9.5" fill="url(#gr)" opacity="0.56" transform="rotate(15 178.4 175.3)"/><ellipse cx="184.6" cy="192.8" rx="13.0" ry="9.5" fill="url(#gr)" opacity="0.25" transform="rotate(120 184.6 192.8)"/><ellipse cx="184.6" cy="192.8" rx="7.0" ry="4.8" fill="url(#gr)" opacity="0.48" transform="rotate(120 184.6 192.8)"/><ellipse cx="190.7" cy="203.0" rx="15.6" ry="11.4" fill="url(#gr)" opacity="0.25" transform="rotate(120 190.7 203.0)"/><ellipse cx="190.7" cy="203.0" rx="8.4" ry="5.7" fill="url(#gr)" opacity="0.48" transform="rotate(120 190.7 203.0)"/><ellipse cx="140.5" cy="198.9" rx="10.4" ry="7.6" fill="url(#gr)" opacity="0.36" transform="rotate(145 140.5 198.9)"/><ellipse cx="140.5" cy="198.9" rx="5.6" ry="3.8" fill="url(#gr)" opacity="0.68" transform="rotate(145 140.5 198.9)"/><ellipse cx="152.8" cy="195.8" rx="10.4" ry="7.6" fill="url(#gr)" opacity="0.21" transform="rotate(160 152.8 195.8)"/><ellipse cx="152.8" cy="195.8" rx="5.6" ry="3.8" fill="url(#gr)" opacity="0.40" transform="rotate(160 152.8 195.8)"/><ellipse cx="187.6" cy="111.8" rx="7.8" ry="5.7" fill="url(#gr)" opacity="0.27" transform="rotate(120 187.6 111.8)"/><ellipse cx="187.6" cy="111.8" rx="4.2" ry="2.8" fill="url(#gr)" opacity="0.52" transform="rotate(120 187.6 111.8)"/><ellipse cx="203.0" cy="98.4" rx="9.1" ry="6.6" fill="url(#gr)" opacity="0.19" transform="rotate(90 203.0 98.4)"/><ellipse cx="203.0" cy="98.4" rx="4.9" ry="3.3" fill="url(#gr)" opacity="0.36" transform="rotate(90 203.0 98.4)"/><ellipse cx="85.1" cy="30.8" rx="10.4" ry="7.6" fill="url(#gr)" opacity="0.19" transform="rotate(115 85.1 30.8)"/><ellipse cx="85.1" cy="30.8" rx="5.6" ry="3.8" fill="url(#gr)" opacity="0.36" transform="rotate(115 85.1 30.8)"/><ellipse cx="246.1" cy="57.4" rx="7.8" ry="5.7" fill="url(#gr)" opacity="0.25" transform="rotate(60 246.1 57.4)"/><ellipse cx="246.1" cy="57.4" rx="4.2" ry="2.8" fill="url(#gr)" opacity="0.48" transform="rotate(60 246.1 57.4)"/><ellipse cx="237.9" cy="52.3" rx="7.8" ry="5.7" fill="url(#gr)" opacity="0.21" transform="rotate(65 237.9 52.3)"/><ellipse cx="237.9" cy="52.3" rx="4.2" ry="2.8" fill="url(#gr)" opacity="0.40" transform="rotate(65 237.9 52.3)"/><ellipse cx="245.1" cy="149.7" rx="7.8" ry="5.7" fill="url(#gr)" opacity="0.23" transform="rotate(115 245.1 149.7)"/><ellipse cx="245.1" cy="149.7" rx="4.2" ry="2.8" fill="url(#gr)" opacity="0.44" transform="rotate(115 245.1 149.7)"/><ellipse cx="125.1" cy="44.1" rx="7.8" ry="5.7" fill="url(#gr)" opacity="0.21" transform="rotate(55 125.1 44.1)"/><ellipse cx="125.1" cy="44.1" rx="4.2" ry="2.8" fill="url(#gr)" opacity="0.40" transform="rotate(55 125.1 44.1)"/><ellipse cx="102.5" cy="48.2" rx="7.8" ry="5.7" fill="url(#gr)" opacity="0.21" transform="rotate(65 102.5 48.2)"/><ellipse cx="102.5" cy="48.2" rx="4.2" ry="2.8" fill="url(#gr)" opacity="0.40" transform="rotate(65 102.5 48.2)"/><ellipse cx="137.4" cy="80.0" rx="10.4" ry="7.6" fill="url(#gr)" opacity="0.19" transform="rotate(100 137.4 80.0)"/><ellipse cx="137.4" cy="80.0" rx="5.6" ry="3.8" fill="url(#gr)" opacity="0.36" transform="rotate(100 137.4 80.0)"/><ellipse cx="82.0" cy="96.4" rx="13.0" ry="9.5" fill="url(#gr)" opacity="0.18" transform="rotate(70 82.0 96.4)"/><ellipse cx="82.0" cy="96.4" rx="7.0" ry="4.8" fill="url(#gr)" opacity="0.34" transform="rotate(70 82.0 96.4)"/><ellipse cx="114.8" cy="98.4" rx="15.6" ry="11.4" fill="url(#gr)" opacity="0.17" transform="rotate(140 114.8 98.4)"/><ellipse cx="114.8" cy="98.4" rx="8.4" ry="5.7" fill="url(#gr)" opacity="0.32" transform="rotate(140 114.8 98.4)"/><ellipse cx="153.8" cy="123.0" rx="10.4" ry="7.6" fill="url(#gr)" opacity="0.18" transform="rotate(30 153.8 123.0)"/><ellipse cx="153.8" cy="123.0" rx="5.6" ry="3.8" fill="url(#gr)" opacity="0.34" transform="rotate(30 153.8 123.0)"/><ellipse cx="131.2" cy="190.7" rx="10.4" ry="7.6" fill="url(#gr)" opacity="0.19" transform="rotate(70 131.2 190.7)"/><ellipse cx="131.2" cy="190.7" rx="5.6" ry="3.8" fill="url(#gr)" opacity="0.36" transform="rotate(70 131.2 190.7)"/><ellipse cx="164.1" cy="201.0" rx="10.4" ry="7.6" fill="url(#gr)" opacity="0.19" transform="rotate(80 164.1 201.0)"/><ellipse cx="164.1" cy="201.0" rx="5.6" ry="3.8" fill="url(#gr)" opacity="0.36" transform="rotate(80 164.1 201.0)"/><ellipse cx="201.0" cy="164.1" rx="7.8" ry="5.7" fill="url(#gr)" opacity="0.17" transform="rotate(80 201.0 164.1)"/><ellipse cx="201.0" cy="164.1" rx="4.2" ry="2.8" fill="url(#gr)" opacity="0.32" transform="rotate(80 201.0 164.1)"/><ellipse cx="217.4" cy="164.1" rx="7.8" ry="5.7" fill="url(#gr)" opacity="0.17" transform="rotate(100 217.4 164.1)"/><ellipse cx="217.4" cy="164.1" rx="4.2" ry="2.8" fill="url(#gr)" opacity="0.32" transform="rotate(100 217.4 164.1)"/><ellipse cx="111.8" cy="25.1" rx="25.0" ry="6.0" fill="url(#gr)" opacity="0.75" transform="rotate(-33 111.8 25.1)"/><ellipse cx="112.8" cy="113.8" rx="33.7" ry="17.6" fill="url(#gk)" opacity="0.95"/><ellipse cx="104.6" cy="14.4" rx="11.7" ry="8.8" fill="url(#gk)" opacity="0.90"/><ellipse cx="239.9" cy="172.3" rx="17.6" ry="23.4" fill="url(#gk)" opacity="0.95"/><ellipse cx="102.5" cy="161.0" rx="11.7" ry="5.9" fill="url(#gk)" opacity="0.90"/><ellipse cx="106.6" cy="146.6" rx="4.4" ry="4.4" fill="url(#gk)" opacity="0.76"/><ellipse cx="199.9" cy="192.8" rx="11.7" ry="5.9" fill="url(#gk)" opacity="0.90"/><ellipse cx="128.2" cy="89.2" rx="4.4" ry="4.4" fill="url(#gk)" opacity="0.90"/><ellipse cx="8.2" cy="67.7" rx="7.3" ry="7.3" fill="url(#gk)" opacity="0.85"/><ellipse cx="22.6" cy="39.0" rx="8.8" ry="4.4" fill="url(#gk)" opacity="0.66"/><ellipse cx="18.5" cy="13.3" rx="4.4" ry="4.4" fill="url(#gk)" opacity="0.66"/><ellipse cx="6.2" cy="160.0" rx="5.9" ry="5.9" fill="url(#gk)" opacity="0.76"/><ellipse cx="235.8" cy="82.0" rx="11.7" ry="11.7" fill="url(#gk)" opacity="0.57"/><ellipse cx="161.0" cy="96.4" rx="5.9" ry="5.9" fill="url(#gk)" opacity="0.66"/><ellipse cx="144.6" cy="55.4" rx="4.4" ry="4.4" fill="url(#gk)" opacity="0.66"/><ellipse cx="161.0" cy="77.9" rx="4.4" ry="4.4" fill="url(#gk)" opacity="0.57"/><ellipse cx="116.9" cy="196.9" rx="2.9" ry="5.9" fill="url(#gk)" opacity="0.76"/><ellipse cx="41.0" cy="69.7" rx="4.4" ry="4.4" fill="url(#gk)" opacity="0.57"/><ellipse cx="95.4" cy="143.6" rx="4.4" ry="4.4" fill="url(#gk)" opacity="0.76"/><ellipse cx="180.5" cy="55.4" rx="4.4" ry="4.4" fill="url(#gk)" opacity="0.57"/><ellipse cx="19.0" cy="14.4" rx="3.8" ry="3.8" fill="url(#gg)" opacity="0.35"/><ellipse cx="37.1" cy="4.9" rx="3.8" ry="3.8" fill="url(#gg)" opacity="0.21"/><ellipse cx="6.8" cy="39.1" rx="2.8" ry="2.8" fill="url(#gg)" opacity="0.19"/><ellipse cx="34.6" cy="56.1" rx="5.7" ry="5.7" fill="url(#gg)" opacity="0.30"/><ellipse cx="40.5" cy="66.8" rx="2.8" ry="2.8" fill="url(#gg)" opacity="0.32"/><ellipse cx="16.6" cy="66.4" rx="3.8" ry="3.8" fill="url(#gg)" opacity="0.21"/><ellipse cx="72.8" cy="58.4" rx="5.7" ry="5.7" fill="url(#gg)" opacity="0.32"/><ellipse cx="88.9" cy="62.5" rx="2.4" ry="2.4" fill="url(#gg)" opacity="0.30"/><ellipse cx="108.4" cy="46.5" rx="3.8" ry="3.8" fill="url(#gg)" opacity="0.21"/><ellipse cx="109.4" cy="68.0" rx="2.8" ry="2.8" fill="url(#gg)" opacity="0.17"/><ellipse cx="164.6" cy="28.6" rx="2.8" ry="2.8" fill="url(#gg)" opacity="0.19"/><ellipse cx="176.5" cy="6.6" rx="2.8" ry="2.8" fill="url(#gg)" opacity="0.21"/><ellipse cx="157.2" cy="7.1" rx="3.8" ry="3.8" fill="url(#gg)" opacity="0.17"/><ellipse cx="197.3" cy="6.3" rx="3.3" ry="3.3" fill="url(#gg)" opacity="0.17"/><ellipse cx="203.7" cy="25.9" rx="2.8" ry="2.8" fill="url(#gg)" opacity="0.17"/><ellipse cx="212.3" cy="37.0" rx="6.6" ry="6.6" fill="url(#gg)" opacity="0.35"/><ellipse cx="203.0" cy="45.8" rx="5.7" ry="5.7" fill="url(#gg)" opacity="0.21"/><ellipse cx="194.3" cy="51.3" rx="3.8" ry="3.8" fill="url(#gg)" opacity="0.17"/><ellipse cx="232.4" cy="31.1" rx="4.7" ry="4.7" fill="url(#gg)" opacity="0.30"/><ellipse cx="237.3" cy="48.8" rx="3.8" ry="3.8" fill="url(#gg)" opacity="0.32"/><ellipse cx="224.2" cy="41.7" rx="2.8" ry="2.8" fill="url(#gg)" opacity="0.17"/><ellipse cx="145.5" cy="100.2" rx="4.7" ry="4.7" fill="url(#gg)" opacity="0.21"/><ellipse cx="152.6" cy="103.0" rx="3.8" ry="3.8" fill="url(#gg)" opacity="0.32"/><ellipse cx="177.7" cy="105.0" rx="2.8" ry="2.8" fill="url(#gg)" opacity="0.23"/><ellipse cx="189.2" cy="110.2" rx="3.3" ry="3.3" fill="url(#gg)" opacity="0.21"/><ellipse cx="76.8" cy="114.5" rx="3.8" ry="3.8" fill="url(#gg)" opacity="0.26"/><ellipse cx="97.1" cy="132.4" rx="4.3" ry="4.3" fill="url(#gg)" opacity="0.32"/><ellipse cx="102.5" cy="138.4" rx="2.8" ry="2.8" fill="url(#gg)" opacity="0.17"/><ellipse cx="121.7" cy="142.6" rx="4.7" ry="4.7" fill="url(#gg)" opacity="0.33"/><ellipse cx="128.8" cy="150.3" rx="3.8" ry="3.8" fill="url(#gg)" opacity="0.23"/><ellipse cx="11.9" cy="143.2" rx="3.8" ry="3.8" fill="url(#gg)" opacity="0.21"/><ellipse cx="60.8" cy="163.9" rx="2.4" ry="2.4" fill="url(#gg)" opacity="0.19"/><ellipse cx="99.0" cy="167.0" rx="2.8" ry="2.8" fill="url(#gg)" opacity="0.33"/><ellipse cx="159.2" cy="157.9" rx="4.7" ry="4.7" fill="url(#gg)" opacity="0.33"/><ellipse cx="152.6" cy="167.0" rx="5.7" ry="5.7" fill="url(#gg)" opacity="0.21"/><ellipse cx="159.9" cy="172.9" rx="3.8" ry="3.8" fill="url(#gg)" opacity="0.17"/><ellipse cx="175.3" cy="177.7" rx="4.7" ry="4.7" fill="url(#gg)" opacity="0.17"/><ellipse cx="149.4" cy="190.8" rx="2.8" ry="2.8" fill="url(#gg)" opacity="0.17"/><ellipse cx="158.6" cy="196.1" rx="5.7" ry="5.7" fill="url(#gg)" opacity="0.23"/><ellipse cx="218.3" cy="169.3" rx="5.7" ry="5.7" fill="url(#gg)" opacity="0.30"/><ellipse cx="227.8" cy="170.5" rx="6.6" ry="6.6" fill="url(#gg)" opacity="0.33"/><ellipse cx="236.1" cy="152.6" rx="4.7" ry="4.7" fill="url(#gg)" opacity="0.24"/><ellipse cx="245.7" cy="151.4" rx="2.8" ry="2.8" fill="url(#gg)" opacity="0.17"/><ellipse cx="225.4" cy="206.3" rx="6.6" ry="6.6" fill="url(#gg)" opacity="0.35"/><ellipse cx="192.0" cy="210.0" rx="6.6" ry="6.6" fill="url(#gg)" opacity="0.23"/><ellipse cx="201.6" cy="215.8" rx="7.6" ry="7.6" fill="url(#gg)" opacity="0.26"/><ellipse cx="199.2" cy="224.2" rx="4.7" ry="4.7" fill="url(#gg)" opacity="0.17"/><ellipse cx="210.9" cy="226.6" rx="2.8" ry="2.8" fill="url(#gg)" opacity="0.17"/><ellipse cx="132.8" cy="228.5" rx="5.7" ry="5.7" fill="url(#gg)" opacity="0.35"/><ellipse cx="17.9" cy="210.9" rx="6.6" ry="6.6" fill="url(#gg)" opacity="0.21"/><ellipse cx="28.6" cy="210.9" rx="3.8" ry="3.8" fill="url(#gg)" opacity="0.17"/><ellipse cx="194.8" cy="190.9" rx="4.7" ry="4.7" fill="url(#gg)" opacity="0.80"/><ellipse cx="129.5" cy="226.2" rx="4.1" ry="4.1" fill="url(#gg)" opacity="0.90"/><ellipse cx="123.5" cy="86.2" rx="3.4" ry="3.4" fill="url(#gg)" opacity="0.60"/><ellipse cx="15.6" cy="11.1" rx="4.1" ry="4.1" fill="url(#gg)" opacity="0.70"/><ellipse cx="223.2" cy="206.0" rx="4.7" ry="4.7" fill="url(#gg)" opacity="0.50"/><ellipse cx="225.6" cy="164.1" rx="5.4" ry="5.4" fill="url(#gg)" opacity="0.45"/><ellipse cx="13.5" cy="210.9" rx="4.7" ry="4.7" fill="url(#gg)" opacity="0.45"/><ellipse cx="180.0" cy="203.0" rx="3.4" ry="3.4" fill="url(#gb)" opacity="0.90"/></g></svg><text class="hd" x="445" y="774">R: 28Si</text><text class="hd" x="522.5" y="774">G: 12C 15N</text><text class="hd" x="635" y="774">B: 27Al</text></g><g shape-rendering="geometricPrecision"><rect x="683" y="1023" width="15" height="15" fill="#fbfbfb"/><path d="M686 1037L697 1026M690 1037L697 1030M694 1037L697 1034" stroke="#8c8c8c" fill="none"/></g></svg></body></html>
